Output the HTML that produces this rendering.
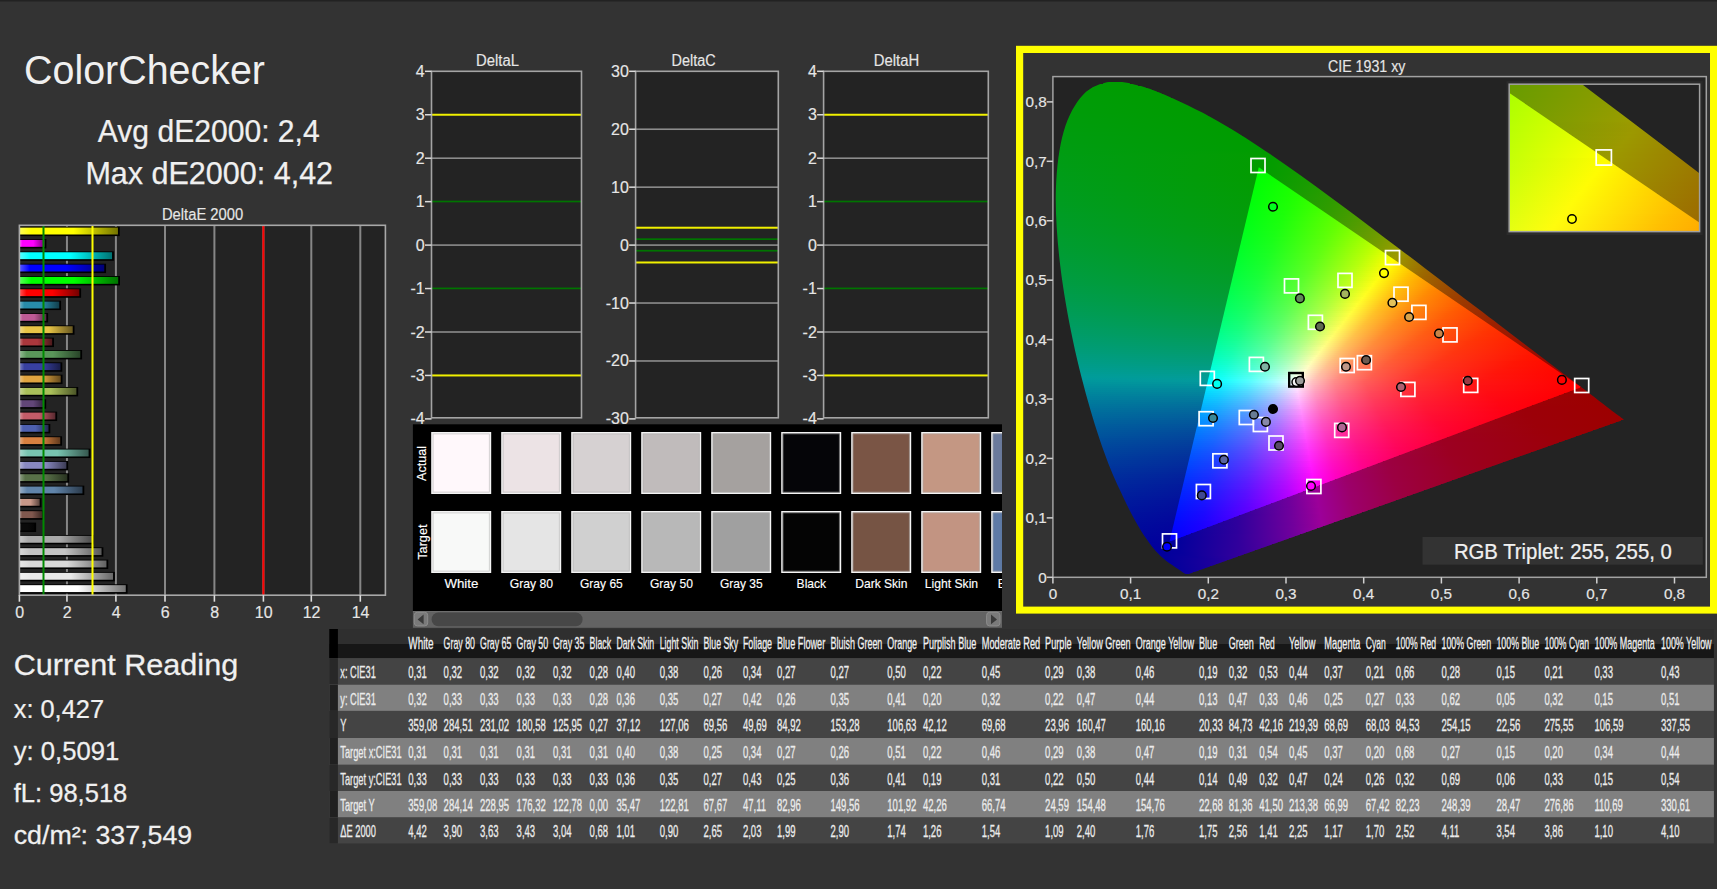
<!DOCTYPE html>
<html><head><meta charset="utf-8"><title>ColorChecker</title>
<style>
html,body{margin:0;padding:0;background:#333;overflow:hidden;width:1717px;height:889px}
svg{display:block;font-family:"Liberation Sans",sans-serif}
</style></head><body>
<svg width="1717" height="889" viewBox="0 0 1717 889">
<defs><linearGradient id="bg0" x1="0" y1="0" x2="1" y2="0"><stop offset="0" stop-color="#ffff59"/><stop offset="0.12" stop-color="#ffff00"/><stop offset="0.55" stop-color="#ffff00"/><stop offset="1" stop-color="#737300"/></linearGradient><linearGradient id="bg1" x1="0" y1="0" x2="1" y2="0"><stop offset="0" stop-color="#ff59ff"/><stop offset="0.12" stop-color="#ff00ff"/><stop offset="0.55" stop-color="#ff00ff"/><stop offset="1" stop-color="#730073"/></linearGradient><linearGradient id="bg2" x1="0" y1="0" x2="1" y2="0"><stop offset="0" stop-color="#59ffff"/><stop offset="0.12" stop-color="#00ffff"/><stop offset="0.55" stop-color="#00ffff"/><stop offset="1" stop-color="#007373"/></linearGradient><linearGradient id="bg3" x1="0" y1="0" x2="1" y2="0"><stop offset="0" stop-color="#5959ff"/><stop offset="0.12" stop-color="#0000ff"/><stop offset="0.55" stop-color="#0000ff"/><stop offset="1" stop-color="#000073"/></linearGradient><linearGradient id="bg4" x1="0" y1="0" x2="1" y2="0"><stop offset="0" stop-color="#59ff59"/><stop offset="0.12" stop-color="#00ff00"/><stop offset="0.55" stop-color="#00ff00"/><stop offset="1" stop-color="#007300"/></linearGradient><linearGradient id="bg5" x1="0" y1="0" x2="1" y2="0"><stop offset="0" stop-color="#ff5959"/><stop offset="0.12" stop-color="#ff0000"/><stop offset="0.55" stop-color="#ff0000"/><stop offset="1" stop-color="#730000"/></linearGradient><linearGradient id="bg6" x1="0" y1="0" x2="1" y2="0"><stop offset="0" stop-color="#73b4c8"/><stop offset="0.12" stop-color="#288caa"/><stop offset="0.55" stop-color="#288caa"/><stop offset="1" stop-color="#123f4c"/></linearGradient><linearGradient id="bg7" x1="0" y1="0" x2="1" y2="0"><stop offset="0" stop-color="#d594bb"/><stop offset="0.12" stop-color="#be5a96"/><stop offset="0.55" stop-color="#be5a96"/><stop offset="1" stop-color="#562844"/></linearGradient><linearGradient id="bg8" x1="0" y1="0" x2="1" y2="0"><stop offset="0" stop-color="#f0d987"/><stop offset="0.12" stop-color="#e8c446"/><stop offset="0.55" stop-color="#e8c446"/><stop offset="1" stop-color="#685820"/></linearGradient><linearGradient id="bg9" x1="0" y1="0" x2="1" y2="0"><stop offset="0" stop-color="#c87d80"/><stop offset="0.12" stop-color="#aa373c"/><stop offset="0.55" stop-color="#aa373c"/><stop offset="1" stop-color="#4c191b"/></linearGradient><linearGradient id="bg10" x1="0" y1="0" x2="1" y2="0"><stop offset="0" stop-color="#94bb94"/><stop offset="0.12" stop-color="#5a965a"/><stop offset="0.55" stop-color="#5a965a"/><stop offset="1" stop-color="#284428"/></linearGradient><linearGradient id="bg11" x1="0" y1="0" x2="1" y2="0"><stop offset="0" stop-color="#7e83c1"/><stop offset="0.12" stop-color="#3840a0"/><stop offset="0.55" stop-color="#3840a0"/><stop offset="1" stop-color="#191d48"/></linearGradient><linearGradient id="bg12" x1="0" y1="0" x2="1" y2="0"><stop offset="0" stop-color="#ebc483"/><stop offset="0.12" stop-color="#e0a440"/><stop offset="0.55" stop-color="#e0a440"/><stop offset="1" stop-color="#654a1d"/></linearGradient><linearGradient id="bg13" x1="0" y1="0" x2="1" y2="0"><stop offset="0" stop-color="#c8d694"/><stop offset="0.12" stop-color="#aac05a"/><stop offset="0.55" stop-color="#aac05a"/><stop offset="1" stop-color="#4c5628"/></linearGradient><linearGradient id="bg14" x1="0" y1="0" x2="1" y2="0"><stop offset="0" stop-color="#9987a7"/><stop offset="0.12" stop-color="#624678"/><stop offset="0.55" stop-color="#624678"/><stop offset="1" stop-color="#2c2036"/></linearGradient><linearGradient id="bg15" x1="0" y1="0" x2="1" y2="0"><stop offset="0" stop-color="#d9959d"/><stop offset="0.12" stop-color="#c45c68"/><stop offset="0.55" stop-color="#c45c68"/><stop offset="1" stop-color="#58292f"/></linearGradient><linearGradient id="bg16" x1="0" y1="0" x2="1" y2="0"><stop offset="0" stop-color="#8c98cc"/><stop offset="0.12" stop-color="#4e60b0"/><stop offset="0.55" stop-color="#4e60b0"/><stop offset="1" stop-color="#232b4f"/></linearGradient><linearGradient id="bg17" x1="0" y1="0" x2="1" y2="0"><stop offset="0" stop-color="#e6ac83"/><stop offset="0.12" stop-color="#d88040"/><stop offset="0.55" stop-color="#d88040"/><stop offset="1" stop-color="#613a1d"/></linearGradient><linearGradient id="bg18" x1="0" y1="0" x2="1" y2="0"><stop offset="0" stop-color="#a7d9cc"/><stop offset="0.12" stop-color="#78c4b0"/><stop offset="0.55" stop-color="#78c4b0"/><stop offset="1" stop-color="#36584f"/></linearGradient><linearGradient id="bg19" x1="0" y1="0" x2="1" y2="0"><stop offset="0" stop-color="#b2b2d6"/><stop offset="0.12" stop-color="#8888c0"/><stop offset="0.55" stop-color="#8888c0"/><stop offset="1" stop-color="#3d3d56"/></linearGradient><linearGradient id="bg20" x1="0" y1="0" x2="1" y2="0"><stop offset="0" stop-color="#92a288"/><stop offset="0.12" stop-color="#587048"/><stop offset="0.55" stop-color="#587048"/><stop offset="1" stop-color="#283220"/></linearGradient><linearGradient id="bg21" x1="0" y1="0" x2="1" y2="0"><stop offset="0" stop-color="#98afc8"/><stop offset="0.12" stop-color="#6084aa"/><stop offset="0.55" stop-color="#6084aa"/><stop offset="1" stop-color="#2b3b4c"/></linearGradient><linearGradient id="bg22" x1="0" y1="0" x2="1" y2="0"><stop offset="0" stop-color="#dbbcb2"/><stop offset="0.12" stop-color="#c89888"/><stop offset="0.55" stop-color="#c89888"/><stop offset="1" stop-color="#5a443d"/></linearGradient><linearGradient id="bg23" x1="0" y1="0" x2="1" y2="0"><stop offset="0" stop-color="#ac928c"/><stop offset="0.12" stop-color="#80584e"/><stop offset="0.55" stop-color="#80584e"/><stop offset="1" stop-color="#3a2823"/></linearGradient><linearGradient id="bg24" x1="0" y1="0" x2="1" y2="0"><stop offset="0" stop-color="#606060"/><stop offset="0.12" stop-color="#0a0a0a"/><stop offset="0.55" stop-color="#0a0a0a"/><stop offset="1" stop-color="#040404"/></linearGradient><linearGradient id="bg25" x1="0" y1="0" x2="1" y2="0"><stop offset="0" stop-color="#c8c8c8"/><stop offset="0.12" stop-color="#aaaaaa"/><stop offset="0.55" stop-color="#aaaaaa"/><stop offset="1" stop-color="#4c4c4c"/></linearGradient><linearGradient id="bg26" x1="0" y1="0" x2="1" y2="0"><stop offset="0" stop-color="#d9d9d9"/><stop offset="0.12" stop-color="#c4c4c4"/><stop offset="0.55" stop-color="#c4c4c4"/><stop offset="1" stop-color="#585858"/></linearGradient><linearGradient id="bg27" x1="0" y1="0" x2="1" y2="0"><stop offset="0" stop-color="#e6e6e6"/><stop offset="0.12" stop-color="#d8d8d8"/><stop offset="0.55" stop-color="#d8d8d8"/><stop offset="1" stop-color="#616161"/></linearGradient><linearGradient id="bg28" x1="0" y1="0" x2="1" y2="0"><stop offset="0" stop-color="#f0f0f0"/><stop offset="0.12" stop-color="#e8e8e8"/><stop offset="0.55" stop-color="#e8e8e8"/><stop offset="1" stop-color="#686868"/></linearGradient><linearGradient id="bg29" x1="0" y1="0" x2="1" y2="0"><stop offset="0" stop-color="#ffffff"/><stop offset="0.12" stop-color="#ffffff"/><stop offset="0.55" stop-color="#ffffff"/><stop offset="1" stop-color="#737373"/></linearGradient><clipPath id="locclip"><path d="M1188.18 574.33C1188.03 574.35 1187.67 574.46 1187.32 574.45C1186.97 574.44 1186.43 574.37 1186.08 574.27C1185.73 574.17 1185.55 574.03 1185.22 573.85C1184.90 573.68 1184.58 573.48 1184.14 573.20C1183.70 572.92 1183.16 572.59 1182.58 572.19C1182.00 571.79 1181.39 571.34 1180.64 570.82C1179.89 570.31 1179.08 569.77 1178.07 569.10C1177.06 568.43 1175.89 567.66 1174.58 566.78C1173.27 565.90 1171.86 565.00 1170.23 563.81C1168.60 562.62 1166.80 561.35 1164.79 559.65C1162.78 557.95 1160.76 556.37 1158.18 553.59C1155.61 550.81 1152.68 547.60 1149.33 542.95C1145.97 538.31 1142.31 533.14 1138.06 525.72C1133.81 518.30 1129.14 509.72 1123.84 498.44C1118.54 487.16 1112.22 474.11 1106.28 458.03C1100.34 441.96 1094.03 422.99 1088.18 402.00C1082.32 381.00 1075.98 356.16 1071.16 332.05C1066.34 307.95 1061.81 281.33 1059.27 257.36C1056.73 233.38 1055.19 209.16 1055.93 188.19C1056.67 167.21 1059.17 147.06 1063.70 131.49C1068.23 115.92 1075.30 103.05 1083.13 94.77C1090.95 86.49 1100.88 83.22 1110.63 81.81C1120.38 80.41 1131.22 83.57 1141.63 86.33C1152.05 89.09 1162.91 93.98 1173.10 98.39C1183.29 102.81 1193.08 107.72 1202.78 112.83C1212.48 117.94 1221.86 123.38 1231.30 129.06C1240.74 134.73 1250.10 140.74 1259.43 146.88C1268.75 153.03 1277.98 159.42 1287.24 165.90C1296.50 172.38 1305.72 179.03 1314.98 185.75C1324.24 192.46 1333.55 199.33 1342.80 206.19C1352.05 213.05 1361.27 220.02 1370.46 226.93C1379.65 233.84 1388.89 240.80 1397.97 247.67C1407.04 254.54 1416.07 261.43 1424.93 268.17C1433.79 274.92 1442.57 281.62 1451.11 288.14C1459.66 294.65 1468.09 301.09 1476.21 307.27C1484.33 313.45 1492.31 319.48 1499.83 325.22C1507.35 330.95 1514.65 336.56 1521.35 341.68C1528.06 346.80 1534.21 351.48 1540.08 355.94C1545.95 360.41 1551.53 364.67 1556.55 368.48C1561.58 372.29 1566.10 375.68 1570.23 378.82C1574.36 381.96 1578.01 384.77 1581.34 387.32C1584.67 389.86 1587.54 392.07 1590.20 394.09C1592.85 396.11 1595.14 397.83 1597.27 399.44C1599.39 401.06 1601.20 402.45 1602.94 403.78C1604.67 405.11 1606.24 406.30 1607.68 407.40C1609.12 408.50 1610.40 409.49 1611.56 410.38C1612.73 411.26 1613.76 412.01 1614.67 412.69C1615.58 413.38 1616.32 413.95 1617.00 414.48C1617.69 415.00 1618.27 415.45 1618.79 415.84C1619.31 416.24 1619.75 416.58 1620.11 416.85C1620.47 417.13 1620.71 417.31 1620.96 417.51C1621.22 417.70 1621.20 417.68 1621.66 418.04C1622.13 418.40 1623.41 419.38 1623.76 419.65Z"/></clipPath><clipPath id="triclip"><path d="M1581.26 387.14 L1258.81 167.27 L1169.45 541.64 Z"/></clipPath><linearGradient id="o0" gradientUnits="userSpaceOnUse" x1="1103.0" y1="0" x2="1130.0" y2="0"><stop offset="0.0000" stop-color="#009c02"/><stop offset="1.0000" stop-color="#009c00"/></linearGradient><linearGradient id="o1" gradientUnits="userSpaceOnUse" x1="1096.0" y1="0" x2="1138.0" y2="0"><stop offset="0.0000" stop-color="#009c03"/><stop offset="1.0000" stop-color="#009c00"/></linearGradient><linearGradient id="o2" gradientUnits="userSpaceOnUse" x1="1092.0" y1="0" x2="1146.0" y2="0"><stop offset="0.0000" stop-color="#009c03"/><stop offset="1.0000" stop-color="#009c00"/></linearGradient><linearGradient id="o3" gradientUnits="userSpaceOnUse" x1="1089.0" y1="0" x2="1152.0" y2="0"><stop offset="0.0000" stop-color="#009c04"/><stop offset="1.0000" stop-color="#009c00"/></linearGradient><linearGradient id="o4" gradientUnits="userSpaceOnUse" x1="1086.0" y1="0" x2="1157.0" y2="0"><stop offset="0.0000" stop-color="#009c04"/><stop offset="1.0000" stop-color="#009c00"/></linearGradient><linearGradient id="o5" gradientUnits="userSpaceOnUse" x1="1083.0" y1="0" x2="1162.0" y2="0"><stop offset="0.0000" stop-color="#009c05"/><stop offset="1.0000" stop-color="#009c00"/></linearGradient><linearGradient id="o6" gradientUnits="userSpaceOnUse" x1="1081.0" y1="0" x2="1167.0" y2="0"><stop offset="0.0000" stop-color="#009c05"/><stop offset="1.0000" stop-color="#009c00"/></linearGradient><linearGradient id="o7" gradientUnits="userSpaceOnUse" x1="1080.0" y1="0" x2="1171.0" y2="0"><stop offset="0.0000" stop-color="#009c06"/><stop offset="1.0000" stop-color="#009c00"/></linearGradient><linearGradient id="o8" gradientUnits="userSpaceOnUse" x1="1078.0" y1="0" x2="1176.0" y2="0"><stop offset="0.0000" stop-color="#009c06"/><stop offset="1.0000" stop-color="#009c00"/></linearGradient><linearGradient id="o9" gradientUnits="userSpaceOnUse" x1="1077.0" y1="0" x2="1180.0" y2="0"><stop offset="0.0000" stop-color="#009c07"/><stop offset="1.0000" stop-color="#009c00"/></linearGradient><linearGradient id="o10" gradientUnits="userSpaceOnUse" x1="1075.0" y1="0" x2="1185.0" y2="0"><stop offset="0.0000" stop-color="#009c07"/><stop offset="1.0000" stop-color="#009c00"/></linearGradient><linearGradient id="o11" gradientUnits="userSpaceOnUse" x1="1074.0" y1="0" x2="1189.0" y2="0"><stop offset="0.0000" stop-color="#009c08"/><stop offset="1.0000" stop-color="#009c00"/></linearGradient><linearGradient id="o12" gradientUnits="userSpaceOnUse" x1="1073.0" y1="0" x2="1193.0" y2="0"><stop offset="0.0000" stop-color="#009c08"/><stop offset="1.0000" stop-color="#009c00"/></linearGradient><linearGradient id="o13" gradientUnits="userSpaceOnUse" x1="1071.0" y1="0" x2="1197.0" y2="0"><stop offset="0.0000" stop-color="#009c08"/><stop offset="1.0000" stop-color="#009c00"/></linearGradient><linearGradient id="o14" gradientUnits="userSpaceOnUse" x1="1070.0" y1="0" x2="1201.0" y2="0"><stop offset="0.0000" stop-color="#009c09"/><stop offset="1.0000" stop-color="#009c00"/></linearGradient><linearGradient id="o15" gradientUnits="userSpaceOnUse" x1="1069.0" y1="0" x2="1205.0" y2="0"><stop offset="0.0000" stop-color="#009c09"/><stop offset="1.0000" stop-color="#009c00"/></linearGradient><linearGradient id="o16" gradientUnits="userSpaceOnUse" x1="1068.0" y1="0" x2="1208.0" y2="0"><stop offset="0.0000" stop-color="#009c0a"/><stop offset="1.0000" stop-color="#009c00"/></linearGradient><linearGradient id="o17" gradientUnits="userSpaceOnUse" x1="1067.0" y1="0" x2="1212.0" y2="0"><stop offset="0.0000" stop-color="#009c0a"/><stop offset="1.0000" stop-color="#009c00"/></linearGradient><linearGradient id="o18" gradientUnits="userSpaceOnUse" x1="1067.0" y1="0" x2="1216.0" y2="0"><stop offset="0.0000" stop-color="#009c0b"/><stop offset="1.0000" stop-color="#009c00"/></linearGradient><linearGradient id="o19" gradientUnits="userSpaceOnUse" x1="1066.0" y1="0" x2="1219.0" y2="0"><stop offset="0.0000" stop-color="#009c0b"/><stop offset="1.0000" stop-color="#009c00"/></linearGradient><linearGradient id="o20" gradientUnits="userSpaceOnUse" x1="1065.0" y1="0" x2="1223.0" y2="0"><stop offset="0.0000" stop-color="#009c0b"/><stop offset="1.0000" stop-color="#009c00"/></linearGradient><linearGradient id="o21" gradientUnits="userSpaceOnUse" x1="1064.0" y1="0" x2="1226.0" y2="0"><stop offset="0.0000" stop-color="#009c0c"/><stop offset="1.0000" stop-color="#009c00"/></linearGradient><linearGradient id="o22" gradientUnits="userSpaceOnUse" x1="1064.0" y1="0" x2="1229.0" y2="0"><stop offset="0.0000" stop-color="#009c0c"/><stop offset="1.0000" stop-color="#009c00"/></linearGradient><linearGradient id="o23" gradientUnits="userSpaceOnUse" x1="1063.0" y1="0" x2="1233.0" y2="0"><stop offset="0.0000" stop-color="#009c0d"/><stop offset="1.0000" stop-color="#009c00"/></linearGradient><linearGradient id="o24" gradientUnits="userSpaceOnUse" x1="1062.0" y1="0" x2="1236.0" y2="0"><stop offset="0.0000" stop-color="#009c0d"/><stop offset="1.0000" stop-color="#009c00"/></linearGradient><linearGradient id="o25" gradientUnits="userSpaceOnUse" x1="1062.0" y1="0" x2="1239.0" y2="0"><stop offset="0.0000" stop-color="#009c0e"/><stop offset="1.0000" stop-color="#009c00"/></linearGradient><linearGradient id="o26" gradientUnits="userSpaceOnUse" x1="1061.0" y1="0" x2="1242.0" y2="0"><stop offset="0.0000" stop-color="#009c0e"/><stop offset="1.0000" stop-color="#009c00"/></linearGradient><linearGradient id="o27" gradientUnits="userSpaceOnUse" x1="1061.0" y1="0" x2="1246.0" y2="0"><stop offset="0.0000" stop-color="#009c0f"/><stop offset="1.0000" stop-color="#009c00"/></linearGradient><linearGradient id="o28" gradientUnits="userSpaceOnUse" x1="1060.0" y1="0" x2="1249.0" y2="0"><stop offset="0.0000" stop-color="#009c0f"/><stop offset="1.0000" stop-color="#009c00"/></linearGradient><linearGradient id="o29" gradientUnits="userSpaceOnUse" x1="1060.0" y1="0" x2="1252.0" y2="0"><stop offset="0.0000" stop-color="#009c10"/><stop offset="1.0000" stop-color="#009c00"/></linearGradient><linearGradient id="o30" gradientUnits="userSpaceOnUse" x1="1059.0" y1="0" x2="1255.0" y2="0"><stop offset="0.0000" stop-color="#009c10"/><stop offset="1.0000" stop-color="#009c00"/></linearGradient><linearGradient id="o31" gradientUnits="userSpaceOnUse" x1="1059.0" y1="0" x2="1258.0" y2="0"><stop offset="0.0000" stop-color="#009c11"/><stop offset="1.0000" stop-color="#009c00"/></linearGradient><linearGradient id="o32" gradientUnits="userSpaceOnUse" x1="1059.0" y1="0" x2="1261.0" y2="0"><stop offset="0.0000" stop-color="#009c11"/><stop offset="1.0000" stop-color="#009c00"/></linearGradient><linearGradient id="o33" gradientUnits="userSpaceOnUse" x1="1058.0" y1="0" x2="1264.0" y2="0"><stop offset="0.0000" stop-color="#009c12"/><stop offset="1.0000" stop-color="#009c00"/></linearGradient><linearGradient id="o34" gradientUnits="userSpaceOnUse" x1="1058.0" y1="0" x2="1267.0" y2="0"><stop offset="0.0000" stop-color="#009c12"/><stop offset="1.0000" stop-color="#019c00"/></linearGradient><linearGradient id="o35" gradientUnits="userSpaceOnUse" x1="1058.0" y1="0" x2="1270.0" y2="0"><stop offset="0.0000" stop-color="#009c12"/><stop offset="1.0000" stop-color="#029c00"/></linearGradient><linearGradient id="o36" gradientUnits="userSpaceOnUse" x1="1057.0" y1="0" x2="1273.0" y2="0"><stop offset="0.0000" stop-color="#009c13"/><stop offset="0.9931" stop-color="#039c00"/><stop offset="1.0000" stop-color="#039c00"/></linearGradient><linearGradient id="o37" gradientUnits="userSpaceOnUse" x1="1057.0" y1="0" x2="1276.0" y2="0"><stop offset="0.0000" stop-color="#009c14"/><stop offset="0.9795" stop-color="#039c00"/><stop offset="1.0000" stop-color="#059c00"/></linearGradient><linearGradient id="o38" gradientUnits="userSpaceOnUse" x1="1057.0" y1="0" x2="1279.0" y2="0"><stop offset="0.0000" stop-color="#009c14"/><stop offset="0.9617" stop-color="#039c00"/><stop offset="1.0000" stop-color="#069c00"/></linearGradient><linearGradient id="o39" gradientUnits="userSpaceOnUse" x1="1056.0" y1="0" x2="1282.0" y2="0"><stop offset="0.0000" stop-color="#009c15"/><stop offset="0.9491" stop-color="#039c00"/><stop offset="1.0000" stop-color="#089c00"/></linearGradient><linearGradient id="o40" gradientUnits="userSpaceOnUse" x1="1056.0" y1="0" x2="1285.0" y2="0"><stop offset="0.0000" stop-color="#009c15"/><stop offset="0.9323" stop-color="#039c00"/><stop offset="1.0000" stop-color="#099c00"/></linearGradient><linearGradient id="o41" gradientUnits="userSpaceOnUse" x1="1056.0" y1="0" x2="1287.0" y2="0"><stop offset="0.0000" stop-color="#009c16"/><stop offset="0.9242" stop-color="#039c00"/><stop offset="1.0000" stop-color="#0b9c00"/></linearGradient><linearGradient id="o42" gradientUnits="userSpaceOnUse" x1="1056.0" y1="0" x2="1290.0" y2="0"><stop offset="0.0000" stop-color="#009c16"/><stop offset="0.9081" stop-color="#039c00"/><stop offset="1.0000" stop-color="#0c9c00"/></linearGradient><linearGradient id="o43" gradientUnits="userSpaceOnUse" x1="1056.0" y1="0" x2="1293.0" y2="0"><stop offset="0.0000" stop-color="#009c17"/><stop offset="0.8966" stop-color="#039c00"/><stop offset="1.0000" stop-color="#0e9c00"/></linearGradient><linearGradient id="o44" gradientUnits="userSpaceOnUse" x1="1055.0" y1="0" x2="1296.0" y2="0"><stop offset="0.0000" stop-color="#009c17"/><stop offset="0.8817" stop-color="#039c00"/><stop offset="1.0000" stop-color="#109c00"/></linearGradient><linearGradient id="o45" gradientUnits="userSpaceOnUse" x1="1055.0" y1="0" x2="1299.0" y2="0"><stop offset="0.0000" stop-color="#009c18"/><stop offset="0.8709" stop-color="#039c00"/><stop offset="1.0000" stop-color="#129c00"/></linearGradient><linearGradient id="o46" gradientUnits="userSpaceOnUse" x1="1055.0" y1="0" x2="1302.0" y2="0"><stop offset="0.0000" stop-color="#009c18"/><stop offset="0.8563" stop-color="#039c00"/><stop offset="1.0000" stop-color="#149c00"/></linearGradient><linearGradient id="o47" gradientUnits="userSpaceOnUse" x1="1055.0" y1="0" x2="1304.0" y2="0"><stop offset="0.0000" stop-color="#009c19"/><stop offset="0.8454" stop-color="#039c01"/><stop offset="1.0000" stop-color="#169c00"/></linearGradient><linearGradient id="o48" gradientUnits="userSpaceOnUse" x1="1055.0" y1="0" x2="1307.0" y2="0"><stop offset="0.0000" stop-color="#009c19"/><stop offset="0.8353" stop-color="#039c01"/><stop offset="1.0000" stop-color="#189c00"/></linearGradient><linearGradient id="o49" gradientUnits="userSpaceOnUse" x1="1055.0" y1="0" x2="1310.0" y2="0"><stop offset="0.0000" stop-color="#009c1a"/><stop offset="0.8216" stop-color="#039c01"/><stop offset="1.0000" stop-color="#1a9c00"/></linearGradient><linearGradient id="o50" gradientUnits="userSpaceOnUse" x1="1055.0" y1="0" x2="1313.0" y2="0"><stop offset="0.0000" stop-color="#009c1b"/><stop offset="0.8120" stop-color="#039c02"/><stop offset="1.0000" stop-color="#1c9c00"/></linearGradient><linearGradient id="o51" gradientUnits="userSpaceOnUse" x1="1055.0" y1="0" x2="1315.0" y2="0"><stop offset="0.0000" stop-color="#009c1b"/><stop offset="0.8019" stop-color="#039c02"/><stop offset="1.0000" stop-color="#1e9c00"/></linearGradient><linearGradient id="o52" gradientUnits="userSpaceOnUse" x1="1054.0" y1="0" x2="1318.0" y2="0"><stop offset="0.0000" stop-color="#009c1c"/><stop offset="0.7936" stop-color="#039c02"/><stop offset="1.0000" stop-color="#219c00"/></linearGradient><linearGradient id="o53" gradientUnits="userSpaceOnUse" x1="1054.0" y1="0" x2="1321.0" y2="0"><stop offset="0.0000" stop-color="#009c1c"/><stop offset="0.7809" stop-color="#039c03"/><stop offset="1.0000" stop-color="#239c00"/></linearGradient><linearGradient id="o54" gradientUnits="userSpaceOnUse" x1="1054.0" y1="0" x2="1324.0" y2="0"><stop offset="0.0000" stop-color="#009c1d"/><stop offset="0.7722" stop-color="#039c03"/><stop offset="1.0000" stop-color="#269c00"/></linearGradient><linearGradient id="o55" gradientUnits="userSpaceOnUse" x1="1054.0" y1="0" x2="1326.0" y2="0"><stop offset="0.0000" stop-color="#009c1e"/><stop offset="0.7629" stop-color="#039c04"/><stop offset="1.0000" stop-color="#289c00"/></linearGradient><linearGradient id="o56" gradientUnits="userSpaceOnUse" x1="1054.0" y1="0" x2="1329.0" y2="0"><stop offset="0.0000" stop-color="#009c1e"/><stop offset="0.7545" stop-color="#039c04"/><stop offset="1.0000" stop-color="#2b9c00"/></linearGradient><linearGradient id="o57" gradientUnits="userSpaceOnUse" x1="1054.0" y1="0" x2="1332.0" y2="0"><stop offset="0.0000" stop-color="#009c1f"/><stop offset="0.7428" stop-color="#039c05"/><stop offset="1.0000" stop-color="#2e9c00"/></linearGradient><linearGradient id="o58" gradientUnits="userSpaceOnUse" x1="1054.0" y1="0" x2="1335.0" y2="0"><stop offset="0.0000" stop-color="#009c1f"/><stop offset="0.7349" stop-color="#039c05"/><stop offset="0.9875" stop-color="#2e9c00"/><stop offset="1.0000" stop-color="#319c00"/></linearGradient><linearGradient id="o59" gradientUnits="userSpaceOnUse" x1="1054.0" y1="0" x2="1337.0" y2="0"><stop offset="0.0000" stop-color="#009c20"/><stop offset="0.7261" stop-color="#039c06"/><stop offset="0.9735" stop-color="#2d9c00"/><stop offset="1.0000" stop-color="#339c00"/></linearGradient><linearGradient id="o60" gradientUnits="userSpaceOnUse" x1="1054.0" y1="0" x2="1340.0" y2="0"><stop offset="0.0000" stop-color="#009c21"/><stop offset="0.7185" stop-color="#039c06"/><stop offset="0.9633" stop-color="#2e9c00"/><stop offset="1.0000" stop-color="#369c00"/></linearGradient><linearGradient id="o61" gradientUnits="userSpaceOnUse" x1="1054.0" y1="0" x2="1343.0" y2="0"><stop offset="0.0000" stop-color="#009c21"/><stop offset="0.7076" stop-color="#039c07"/><stop offset="0.9498" stop-color="#2e9c00"/><stop offset="1.0000" stop-color="#3a9c00"/></linearGradient><linearGradient id="o62" gradientUnits="userSpaceOnUse" x1="1054.0" y1="0" x2="1345.0" y2="0"><stop offset="0.0000" stop-color="#009c22"/><stop offset="0.7027" stop-color="#039c07"/><stop offset="0.9399" stop-color="#2e9c00"/><stop offset="1.0000" stop-color="#3c9c00"/></linearGradient><linearGradient id="o63" gradientUnits="userSpaceOnUse" x1="1054.0" y1="0" x2="1348.0" y2="0"><stop offset="0.0000" stop-color="#009c23"/><stop offset="0.6922" stop-color="#039c08"/><stop offset="0.9269" stop-color="#2e9c00"/><stop offset="1.0000" stop-color="#409c00"/></linearGradient><linearGradient id="o64" gradientUnits="userSpaceOnUse" x1="1054.0" y1="0" x2="1351.0" y2="0"><stop offset="0.0000" stop-color="#009c23"/><stop offset="0.6818" stop-color="#039c09"/><stop offset="0.9108" stop-color="#2d9c00"/><stop offset="1.0000" stop-color="#439c00"/></linearGradient><linearGradient id="o65" gradientUnits="userSpaceOnUse" x1="1055.0" y1="0" x2="1353.0" y2="0"><stop offset="0.0000" stop-color="#009c24"/><stop offset="0.6762" stop-color="#039c09"/><stop offset="0.9044" stop-color="#2e9c00"/><stop offset="1.0000" stop-color="#469c00"/></linearGradient><linearGradient id="o66" gradientUnits="userSpaceOnUse" x1="1055.0" y1="0" x2="1356.0" y2="0"><stop offset="0.0000" stop-color="#009c25"/><stop offset="0.6661" stop-color="#039c0a"/><stop offset="0.8887" stop-color="#2d9c01"/><stop offset="1.0000" stop-color="#4a9c00"/></linearGradient><linearGradient id="o67" gradientUnits="userSpaceOnUse" x1="1055.0" y1="0" x2="1359.0" y2="0"><stop offset="0.0000" stop-color="#009c25"/><stop offset="0.6595" stop-color="#039c0a"/><stop offset="0.8799" stop-color="#2e9c01"/><stop offset="1.0000" stop-color="#4e9c00"/></linearGradient><linearGradient id="o68" gradientUnits="userSpaceOnUse" x1="1055.0" y1="0" x2="1361.0" y2="0"><stop offset="0.0000" stop-color="#009c26"/><stop offset="0.6520" stop-color="#039c0b"/><stop offset="0.8709" stop-color="#2e9c01"/><stop offset="1.0000" stop-color="#519c00"/></linearGradient><linearGradient id="o69" gradientUnits="userSpaceOnUse" x1="1055.0" y1="0" x2="1364.0" y2="0"><stop offset="0.0000" stop-color="#009c27"/><stop offset="0.6456" stop-color="#039c0c"/><stop offset="0.8592" stop-color="#2e9c02"/><stop offset="1.0000" stop-color="#559c00"/></linearGradient><linearGradient id="o70" gradientUnits="userSpaceOnUse" x1="1055.0" y1="0" x2="1367.0" y2="0"><stop offset="0.0000" stop-color="#009c28"/><stop offset="0.6362" stop-color="#039c0d"/><stop offset="0.8478" stop-color="#2e9c03"/><stop offset="1.0000" stop-color="#5a9c00"/></linearGradient><linearGradient id="o71" gradientUnits="userSpaceOnUse" x1="1055.0" y1="0" x2="1369.0" y2="0"><stop offset="0.0000" stop-color="#009c28"/><stop offset="0.6322" stop-color="#039c0d"/><stop offset="0.8424" stop-color="#2e9c03"/><stop offset="1.0000" stop-color="#5d9c00"/></linearGradient><linearGradient id="o72" gradientUnits="userSpaceOnUse" x1="1055.0" y1="0" x2="1372.0" y2="0"><stop offset="0.0000" stop-color="#009c29"/><stop offset="0.6230" stop-color="#039c0e"/><stop offset="0.8281" stop-color="#2d9c04"/><stop offset="1.0000" stop-color="#629c00"/></linearGradient><linearGradient id="o73" gradientUnits="userSpaceOnUse" x1="1055.0" y1="0" x2="1375.0" y2="0"><stop offset="0.0000" stop-color="#009c2a"/><stop offset="0.6172" stop-color="#039c0f"/><stop offset="0.8203" stop-color="#2e9c04"/><stop offset="1.0000" stop-color="#679c00"/></linearGradient><linearGradient id="o74" gradientUnits="userSpaceOnUse" x1="1055.0" y1="0" x2="1377.0" y2="0"><stop offset="0.0000" stop-color="#009c2b"/><stop offset="0.6102" stop-color="#039c0f"/><stop offset="0.8090" stop-color="#2d9c05"/><stop offset="1.0000" stop-color="#6b9c00"/></linearGradient><linearGradient id="o75" gradientUnits="userSpaceOnUse" x1="1056.0" y1="0" x2="1380.0" y2="0"><stop offset="0.0000" stop-color="#009c2b"/><stop offset="0.6034" stop-color="#039c10"/><stop offset="0.8009" stop-color="#2e9c06"/><stop offset="1.0000" stop-color="#709c00"/></linearGradient><linearGradient id="o76" gradientUnits="userSpaceOnUse" x1="1056.0" y1="0" x2="1383.0" y2="0"><stop offset="0.0000" stop-color="#009c2c"/><stop offset="0.5948" stop-color="#039c11"/><stop offset="0.7875" stop-color="#2d9c07"/><stop offset="0.9893" stop-color="#719c00"/><stop offset="1.0000" stop-color="#759c00"/></linearGradient><linearGradient id="o77" gradientUnits="userSpaceOnUse" x1="1056.0" y1="0" x2="1385.0" y2="0"><stop offset="0.0000" stop-color="#009c2d"/><stop offset="0.5912" stop-color="#039c12"/><stop offset="0.7827" stop-color="#2e9c07"/><stop offset="0.9802" stop-color="#719c00"/><stop offset="1.0000" stop-color="#799c00"/></linearGradient><linearGradient id="o78" gradientUnits="userSpaceOnUse" x1="1056.0" y1="0" x2="1388.0" y2="0"><stop offset="0.0000" stop-color="#009c2e"/><stop offset="0.5828" stop-color="#039c13"/><stop offset="0.7726" stop-color="#2e9c08"/><stop offset="0.9684" stop-color="#729c00"/><stop offset="1.0000" stop-color="#7f9c00"/></linearGradient><linearGradient id="o79" gradientUnits="userSpaceOnUse" x1="1056.0" y1="0" x2="1391.0" y2="0"><stop offset="0.0000" stop-color="#009c2f"/><stop offset="0.5746" stop-color="#039c13"/><stop offset="0.7597" stop-color="#2d9c09"/><stop offset="0.9507" stop-color="#709c00"/><stop offset="1.0000" stop-color="#859c00"/></linearGradient><linearGradient id="o80" gradientUnits="userSpaceOnUse" x1="1056.0" y1="0" x2="1393.0" y2="0"><stop offset="0.0000" stop-color="#009c30"/><stop offset="0.5712" stop-color="#039c14"/><stop offset="0.7552" stop-color="#2e9c0a"/><stop offset="0.9451" stop-color="#719c00"/><stop offset="1.0000" stop-color="#8a9c00"/></linearGradient><linearGradient id="o81" gradientUnits="userSpaceOnUse" x1="1057.0" y1="0" x2="1396.0" y2="0"><stop offset="0.0000" stop-color="#009c30"/><stop offset="0.5619" stop-color="#039c15"/><stop offset="0.7419" stop-color="#2d9c0b"/><stop offset="0.9277" stop-color="#6f9c00"/><stop offset="1.0000" stop-color="#909c00"/></linearGradient><linearGradient id="o82" gradientUnits="userSpaceOnUse" x1="1057.0" y1="0" x2="1399.0" y2="0"><stop offset="0.0000" stop-color="#009c31"/><stop offset="0.5570" stop-color="#039c16"/><stop offset="0.7354" stop-color="#2e9c0b"/><stop offset="0.9196" stop-color="#719c00"/><stop offset="1.0000" stop-color="#969c00"/></linearGradient><linearGradient id="o83" gradientUnits="userSpaceOnUse" x1="1057.0" y1="0" x2="1401.0" y2="0"><stop offset="0.0000" stop-color="#009c32"/><stop offset="0.5509" stop-color="#039c17"/><stop offset="0.7253" stop-color="#2d9c0c"/><stop offset="0.9084" stop-color="#709c01"/><stop offset="1.0000" stop-color="#9c9b00"/></linearGradient><linearGradient id="o84" gradientUnits="userSpaceOnUse" x1="1057.0" y1="0" x2="1404.0" y2="0"><stop offset="0.0000" stop-color="#009c33"/><stop offset="0.5461" stop-color="#039c18"/><stop offset="0.7190" stop-color="#2e9c0d"/><stop offset="0.8977" stop-color="#719c02"/><stop offset="0.9928" stop-color="#9c9800"/><stop offset="1.0000" stop-color="#9c9500"/></linearGradient><linearGradient id="o85" gradientUnits="userSpaceOnUse" x1="1057.0" y1="0" x2="1406.0" y2="0"><stop offset="0.0000" stop-color="#009c34"/><stop offset="0.5401" stop-color="#039c19"/><stop offset="0.7092" stop-color="#2d9c0e"/><stop offset="0.8868" stop-color="#709c03"/><stop offset="0.9814" stop-color="#9c9900"/><stop offset="1.0000" stop-color="#9c9000"/></linearGradient><linearGradient id="o86" gradientUnits="userSpaceOnUse" x1="1058.0" y1="0" x2="1409.0" y2="0"><stop offset="0.0000" stop-color="#009c35"/><stop offset="0.5342" stop-color="#039c1a"/><stop offset="0.7023" stop-color="#2e9c0f"/><stop offset="0.8761" stop-color="#709c03"/><stop offset="0.9672" stop-color="#9c9900"/><stop offset="1.0000" stop-color="#9c8a00"/></linearGradient><linearGradient id="o87" gradientUnits="userSpaceOnUse" x1="1058.0" y1="0" x2="1412.0" y2="0"><stop offset="0.0000" stop-color="#009c36"/><stop offset="0.5268" stop-color="#039c1b"/><stop offset="0.6935" stop-color="#2e9c10"/><stop offset="0.8658" stop-color="#719c04"/><stop offset="0.9562" stop-color="#9c9900"/><stop offset="1.0000" stop-color="#9c8400"/></linearGradient><linearGradient id="o88" gradientUnits="userSpaceOnUse" x1="1058.0" y1="0" x2="1414.0" y2="0"><stop offset="0.0000" stop-color="#009c37"/><stop offset="0.5239" stop-color="#039c1c"/><stop offset="0.6868" stop-color="#2d9c11"/><stop offset="0.8553" stop-color="#709c05"/><stop offset="0.9452" stop-color="#9c9900"/><stop offset="1.0000" stop-color="#9c7f00"/></linearGradient><linearGradient id="o89" gradientUnits="userSpaceOnUse" x1="1058.0" y1="0" x2="1417.0" y2="0"><stop offset="0.0000" stop-color="#009c38"/><stop offset="0.5167" stop-color="#039c1d"/><stop offset="0.6783" stop-color="#2d9c12"/><stop offset="0.8454" stop-color="#719c06"/><stop offset="0.9345" stop-color="#9c9800"/><stop offset="1.0000" stop-color="#9c7a00"/></linearGradient><linearGradient id="o90" gradientUnits="userSpaceOnUse" x1="1058.0" y1="0" x2="1420.0" y2="0"><stop offset="0.0000" stop-color="#009c39"/><stop offset="0.5124" stop-color="#039c1e"/><stop offset="0.6727" stop-color="#2e9c13"/><stop offset="0.8356" stop-color="#719c07"/><stop offset="0.9213" stop-color="#9c9901"/><stop offset="1.0000" stop-color="#9c7500"/></linearGradient><linearGradient id="o91" gradientUnits="userSpaceOnUse" x1="1059.0" y1="0" x2="1422.0" y2="0"><stop offset="0.0000" stop-color="#009c3a"/><stop offset="0.5055" stop-color="#039c1f"/><stop offset="0.6625" stop-color="#2d9c14"/><stop offset="0.8251" stop-color="#709c08"/><stop offset="0.9105" stop-color="#9c9a02"/><stop offset="1.0000" stop-color="#9c7100"/></linearGradient><linearGradient id="o92" gradientUnits="userSpaceOnUse" x1="1059.0" y1="0" x2="1425.0" y2="0"><stop offset="0.0000" stop-color="#009c3b"/><stop offset="0.5014" stop-color="#039c20"/><stop offset="0.6571" stop-color="#2e9c15"/><stop offset="0.8183" stop-color="#729c09"/><stop offset="0.9003" stop-color="#9c9903"/><stop offset="1.0000" stop-color="#9c6c00"/></linearGradient><linearGradient id="o93" gradientUnits="userSpaceOnUse" x1="1059.0" y1="0" x2="1428.0" y2="0"><stop offset="0.0000" stop-color="#009c3c"/><stop offset="0.4946" stop-color="#039c21"/><stop offset="0.6463" stop-color="#2d9c16"/><stop offset="0.8035" stop-color="#709c0a"/><stop offset="0.8875" stop-color="#9c9904"/><stop offset="0.9905" stop-color="#9c6b00"/><stop offset="1.0000" stop-color="#9c6800"/></linearGradient><linearGradient id="o94" gradientUnits="userSpaceOnUse" x1="1059.0" y1="0" x2="1430.0" y2="0"><stop offset="0.0000" stop-color="#009c3d"/><stop offset="0.4892" stop-color="#039c22"/><stop offset="0.6402" stop-color="#2d9c18"/><stop offset="0.7965" stop-color="#709c0b"/><stop offset="0.8801" stop-color="#9c9805"/><stop offset="0.9825" stop-color="#9c6a00"/><stop offset="1.0000" stop-color="#9c6400"/></linearGradient><linearGradient id="o95" gradientUnits="userSpaceOnUse" x1="1060.0" y1="0" x2="1433.0" y2="0"><stop offset="0.0000" stop-color="#009c3e"/><stop offset="0.4839" stop-color="#039c23"/><stop offset="0.6314" stop-color="#2d9c19"/><stop offset="0.7842" stop-color="#6f9c0d"/><stop offset="0.8673" stop-color="#9c9906"/><stop offset="0.9692" stop-color="#9c6a00"/><stop offset="1.0000" stop-color="#9c6000"/></linearGradient><linearGradient id="o96" gradientUnits="userSpaceOnUse" x1="1060.0" y1="0" x2="1435.0" y2="0"><stop offset="0.0000" stop-color="#009c3f"/><stop offset="0.4787" stop-color="#039c25"/><stop offset="0.6253" stop-color="#2d9c1a"/><stop offset="0.7773" stop-color="#709c0e"/><stop offset="0.8573" stop-color="#9c9a07"/><stop offset="0.9560" stop-color="#9c6b00"/><stop offset="1.0000" stop-color="#9c5d00"/></linearGradient><linearGradient id="o97" gradientUnits="userSpaceOnUse" x1="1060.0" y1="0" x2="1438.0" y2="0"><stop offset="0.0000" stop-color="#009c40"/><stop offset="0.4749" stop-color="#039c26"/><stop offset="0.6204" stop-color="#2e9c1b"/><stop offset="0.7685" stop-color="#709c0f"/><stop offset="0.8479" stop-color="#9c9908"/><stop offset="0.9458" stop-color="#9c6a00"/><stop offset="1.0000" stop-color="#9c5900"/></linearGradient><linearGradient id="o98" gradientUnits="userSpaceOnUse" x1="1060.0" y1="0" x2="1441.0" y2="0"><stop offset="0.0000" stop-color="#009c41"/><stop offset="0.4685" stop-color="#039c27"/><stop offset="0.6102" stop-color="#2d9c1d"/><stop offset="0.7572" stop-color="#709c10"/><stop offset="0.8360" stop-color="#9c9909"/><stop offset="0.9331" stop-color="#9c6b01"/><stop offset="1.0000" stop-color="#9c5500"/></linearGradient><linearGradient id="o99" gradientUnits="userSpaceOnUse" x1="1061.0" y1="0" x2="1443.0" y2="0"><stop offset="0.0000" stop-color="#009c42"/><stop offset="0.4647" stop-color="#039c28"/><stop offset="0.6060" stop-color="#2e9c1e"/><stop offset="0.7526" stop-color="#729c11"/><stop offset="0.8285" stop-color="#9c980a"/><stop offset="0.9254" stop-color="#9c6a01"/><stop offset="1.0000" stop-color="#9c5200"/></linearGradient><linearGradient id="o100" gradientUnits="userSpaceOnUse" x1="1061.0" y1="0" x2="1446.0" y2="0"><stop offset="0.0000" stop-color="#009c43"/><stop offset="0.4584" stop-color="#039c29"/><stop offset="0.5961" stop-color="#2d9c1f"/><stop offset="0.7390" stop-color="#6f9c13"/><stop offset="0.8169" stop-color="#9c990c"/><stop offset="0.9104" stop-color="#9c6b02"/><stop offset="1.0000" stop-color="#9c4f00"/></linearGradient><linearGradient id="o101" gradientUnits="userSpaceOnUse" x1="1061.0" y1="0" x2="1448.0" y2="0"><stop offset="0.0000" stop-color="#009c44"/><stop offset="0.4561" stop-color="#039c2b"/><stop offset="0.5930" stop-color="#2e9c20"/><stop offset="0.7351" stop-color="#719c14"/><stop offset="0.8075" stop-color="#9c9a0d"/><stop offset="0.9005" stop-color="#9c6b03"/><stop offset="1.0000" stop-color="#9c4c00"/></linearGradient><linearGradient id="o102" gradientUnits="userSpaceOnUse" x1="1062.0" y1="0" x2="1451.0" y2="0"><stop offset="0.0000" stop-color="#009c46"/><stop offset="0.4486" stop-color="#039c2c"/><stop offset="0.5823" stop-color="#2d9c22"/><stop offset="0.7211" stop-color="#6f9c16"/><stop offset="0.7982" stop-color="#9c990e"/><stop offset="0.8907" stop-color="#9c6a04"/><stop offset="1.0000" stop-color="#9c4900"/></linearGradient><linearGradient id="o103" gradientUnits="userSpaceOnUse" x1="1062.0" y1="0" x2="1454.0" y2="0"><stop offset="0.0000" stop-color="#009c47"/><stop offset="0.4452" stop-color="#039c2d"/><stop offset="0.5778" stop-color="#2e9c23"/><stop offset="0.7156" stop-color="#719c17"/><stop offset="0.7870" stop-color="#9c9910"/><stop offset="0.8763" stop-color="#9c6b05"/><stop offset="1.0000" stop-color="#9c4500"/></linearGradient><linearGradient id="o104" gradientUnits="userSpaceOnUse" x1="1062.0" y1="0" x2="1456.0" y2="0"><stop offset="0.0000" stop-color="#009c48"/><stop offset="0.4404" stop-color="#039c2f"/><stop offset="0.5723" stop-color="#2e9c25"/><stop offset="0.7069" stop-color="#709c19"/><stop offset="0.7805" stop-color="#9c9811"/><stop offset="0.8693" stop-color="#9c6a06"/><stop offset="1.0000" stop-color="#9c4300"/></linearGradient><linearGradient id="o105" gradientUnits="userSpaceOnUse" x1="1063.0" y1="0" x2="1459.0" y2="0"><stop offset="0.0000" stop-color="#009c49"/><stop offset="0.4356" stop-color="#039c30"/><stop offset="0.5644" stop-color="#2d9c26"/><stop offset="0.6982" stop-color="#709c1a"/><stop offset="0.7689" stop-color="#9c9913"/><stop offset="0.8573" stop-color="#9c6a07"/><stop offset="0.9886" stop-color="#9c4300"/><stop offset="1.0000" stop-color="#9c4000"/></linearGradient><linearGradient id="o106" gradientUnits="userSpaceOnUse" x1="1063.0" y1="0" x2="1462.0" y2="0"><stop offset="0.0000" stop-color="#009c4b"/><stop offset="0.4298" stop-color="#039c32"/><stop offset="0.5576" stop-color="#2d9c28"/><stop offset="0.6905" stop-color="#719c1c"/><stop offset="0.7581" stop-color="#9c9a15"/><stop offset="0.8434" stop-color="#9c6c08"/><stop offset="0.9712" stop-color="#9c4400"/><stop offset="1.0000" stop-color="#9c3d00"/></linearGradient><linearGradient id="o107" gradientUnits="userSpaceOnUse" x1="1063.0" y1="0" x2="1464.0" y2="0"><stop offset="0.0000" stop-color="#009c4c"/><stop offset="0.4277" stop-color="#039c33"/><stop offset="0.5549" stop-color="#2e9c29"/><stop offset="0.6845" stop-color="#729c1d"/><stop offset="0.7519" stop-color="#9c9916"/><stop offset="0.8367" stop-color="#9c6b09"/><stop offset="0.9638" stop-color="#9c4300"/><stop offset="1.0000" stop-color="#9c3b00"/></linearGradient><linearGradient id="o108" gradientUnits="userSpaceOnUse" x1="1064.0" y1="0" x2="1467.0" y2="0"><stop offset="0.0000" stop-color="#009c4d"/><stop offset="0.4206" stop-color="#039c35"/><stop offset="0.5447" stop-color="#2d9c2b"/><stop offset="0.6737" stop-color="#719c1f"/><stop offset="0.7407" stop-color="#9c9918"/><stop offset="0.8251" stop-color="#9c6b0a"/><stop offset="0.9491" stop-color="#9c4300"/><stop offset="1.0000" stop-color="#9c3800"/></linearGradient><linearGradient id="o109" gradientUnits="userSpaceOnUse" x1="1064.0" y1="0" x2="1469.0" y2="0"><stop offset="0.0000" stop-color="#009c4e"/><stop offset="0.4160" stop-color="#039c36"/><stop offset="0.5370" stop-color="#2c9c2d"/><stop offset="0.6630" stop-color="#6e9c21"/><stop offset="0.7346" stop-color="#9c9819"/><stop offset="0.8185" stop-color="#9c6a0b"/><stop offset="0.9420" stop-color="#9c4201"/><stop offset="1.0000" stop-color="#9c3600"/></linearGradient><linearGradient id="o110" gradientUnits="userSpaceOnUse" x1="1064.0" y1="0" x2="1472.0" y2="0"><stop offset="0.0000" stop-color="#009c50"/><stop offset="0.4130" stop-color="#039c38"/><stop offset="0.5331" stop-color="#2d9c2e"/><stop offset="0.6581" stop-color="#709c23"/><stop offset="0.7243" stop-color="#9c991b"/><stop offset="0.8051" stop-color="#9c6b0d"/><stop offset="0.9252" stop-color="#9c4302"/><stop offset="1.0000" stop-color="#9c3400"/></linearGradient><linearGradient id="o111" gradientUnits="userSpaceOnUse" x1="1065.0" y1="0" x2="1475.0" y2="0"><stop offset="0.0000" stop-color="#009c51"/><stop offset="0.4061" stop-color="#039c39"/><stop offset="0.5256" stop-color="#2d9c30"/><stop offset="0.6476" stop-color="#6f9c25"/><stop offset="0.7134" stop-color="#9c9a1d"/><stop offset="0.7939" stop-color="#9c6b0e"/><stop offset="0.9134" stop-color="#9c4302"/><stop offset="1.0000" stop-color="#9c3100"/></linearGradient><linearGradient id="o112" gradientUnits="userSpaceOnUse" x1="1065.0" y1="0" x2="1477.0" y2="0"><stop offset="0.0000" stop-color="#009c53"/><stop offset="0.4041" stop-color="#039c3b"/><stop offset="0.5206" stop-color="#2d9c32"/><stop offset="0.6420" stop-color="#709c26"/><stop offset="0.7075" stop-color="#9c991f"/><stop offset="0.7876" stop-color="#9c6a0f"/><stop offset="0.9066" stop-color="#9c4303"/><stop offset="1.0000" stop-color="#9c3000"/></linearGradient><linearGradient id="o113" gradientUnits="userSpaceOnUse" x1="1065.0" y1="0" x2="1480.0" y2="0"><stop offset="0.0000" stop-color="#009c54"/><stop offset="0.3988" stop-color="#039c3d"/><stop offset="0.5145" stop-color="#2d9c33"/><stop offset="0.6349" stop-color="#709c28"/><stop offset="0.6976" stop-color="#9c9a21"/><stop offset="0.7747" stop-color="#9c6b11"/><stop offset="0.8904" stop-color="#9c4404"/><stop offset="1.0000" stop-color="#9c2d00"/></linearGradient><linearGradient id="o114" gradientUnits="userSpaceOnUse" x1="1066.0" y1="0" x2="1483.0" y2="0"><stop offset="0.0000" stop-color="#009c55"/><stop offset="0.3945" stop-color="#039c3e"/><stop offset="0.5096" stop-color="#2e9c35"/><stop offset="0.6271" stop-color="#719c2a"/><stop offset="0.6894" stop-color="#9c9823"/><stop offset="0.7662" stop-color="#9c6b12"/><stop offset="0.8813" stop-color="#9c4305"/><stop offset="1.0000" stop-color="#9c2b00"/></linearGradient><linearGradient id="o115" gradientUnits="userSpaceOnUse" x1="1066.0" y1="0" x2="1485.0" y2="0"><stop offset="0.0000" stop-color="#009c57"/><stop offset="0.3902" stop-color="#039c40"/><stop offset="0.5024" stop-color="#2d9c37"/><stop offset="0.6193" stop-color="#709c2c"/><stop offset="0.6814" stop-color="#9c9925"/><stop offset="0.7578" stop-color="#9c6b14"/><stop offset="0.8699" stop-color="#9c4306"/><stop offset="1.0000" stop-color="#9c2900"/></linearGradient><linearGradient id="o116" gradientUnits="userSpaceOnUse" x1="1066.0" y1="0" x2="1488.0" y2="0"><stop offset="0.0000" stop-color="#009c58"/><stop offset="0.3874" stop-color="#039c42"/><stop offset="0.4988" stop-color="#2e9c39"/><stop offset="0.6126" stop-color="#709c2e"/><stop offset="0.6718" stop-color="#9c9a27"/><stop offset="0.7453" stop-color="#9c6c16"/><stop offset="0.8543" stop-color="#9c4407"/><stop offset="1.0000" stop-color="#9c2700"/></linearGradient><linearGradient id="o117" gradientUnits="userSpaceOnUse" x1="1067.0" y1="0" x2="1491.0" y2="0"><stop offset="0.0000" stop-color="#009c5a"/><stop offset="0.3809" stop-color="#039c44"/><stop offset="0.4894" stop-color="#2d9c3b"/><stop offset="0.6026" stop-color="#6f9c30"/><stop offset="0.6639" stop-color="#9c9929"/><stop offset="0.7370" stop-color="#9c6b17"/><stop offset="0.8455" stop-color="#9c4308"/><stop offset="1.0000" stop-color="#9c2500"/></linearGradient><linearGradient id="o118" gradientUnits="userSpaceOnUse" x1="1067.0" y1="0" x2="1493.0" y2="0"><stop offset="0.0000" stop-color="#009c5c"/><stop offset="0.3791" stop-color="#039c45"/><stop offset="0.4871" stop-color="#2e9c3d"/><stop offset="0.5974" stop-color="#709c32"/><stop offset="0.6561" stop-color="#9c9a2c"/><stop offset="0.7289" stop-color="#9c6b18"/><stop offset="0.8369" stop-color="#9c4309"/><stop offset="1.0000" stop-color="#9c2400"/></linearGradient><linearGradient id="o119" gradientUnits="userSpaceOnUse" x1="1068.0" y1="0" x2="1496.0" y2="0"><stop offset="0.0000" stop-color="#009c5d"/><stop offset="0.3727" stop-color="#039c47"/><stop offset="0.4778" stop-color="#2d9c3f"/><stop offset="0.5876" stop-color="#6f9c35"/><stop offset="0.6484" stop-color="#9c992d"/><stop offset="0.7208" stop-color="#9c6a1a"/><stop offset="0.8283" stop-color="#9c420a"/><stop offset="1.0000" stop-color="#9c2200"/></linearGradient><linearGradient id="o120" gradientUnits="userSpaceOnUse" x1="1068.0" y1="0" x2="1498.0" y2="0"><stop offset="0.0000" stop-color="#009c5f"/><stop offset="0.3709" stop-color="#039c49"/><stop offset="0.4756" stop-color="#2e9c41"/><stop offset="0.5849" stop-color="#719c37"/><stop offset="0.6407" stop-color="#9c9930"/><stop offset="0.7105" stop-color="#9c6b1c"/><stop offset="0.8151" stop-color="#9c440b"/><stop offset="0.9802" stop-color="#9c2300"/><stop offset="1.0000" stop-color="#9c2000"/></linearGradient><linearGradient id="o121" gradientUnits="userSpaceOnUse" x1="1068.0" y1="0" x2="1501.0" y2="0"><stop offset="0.0000" stop-color="#009c60"/><stop offset="0.3661" stop-color="#039c4b"/><stop offset="0.4700" stop-color="#2e9c43"/><stop offset="0.5762" stop-color="#709c39"/><stop offset="0.6316" stop-color="#9c9a33"/><stop offset="0.7009" stop-color="#9c6c1e"/><stop offset="0.8025" stop-color="#9c440c"/><stop offset="0.9642" stop-color="#9c2300"/><stop offset="1.0000" stop-color="#9c1f00"/></linearGradient><linearGradient id="o122" gradientUnits="userSpaceOnUse" x1="1069.0" y1="0" x2="1504.0" y2="0"><stop offset="0.0000" stop-color="#009c62"/><stop offset="0.3621" stop-color="#039c4d"/><stop offset="0.4632" stop-color="#2e9c45"/><stop offset="0.5690" stop-color="#719c3b"/><stop offset="0.6241" stop-color="#9c9935"/><stop offset="0.6931" stop-color="#9c6b1f"/><stop offset="0.7943" stop-color="#9c430d"/><stop offset="0.9552" stop-color="#9c2301"/><stop offset="1.0000" stop-color="#9c1d00"/></linearGradient><linearGradient id="o123" gradientUnits="userSpaceOnUse" x1="1069.0" y1="0" x2="1506.0" y2="0"><stop offset="0.0000" stop-color="#009c64"/><stop offset="0.3581" stop-color="#039c50"/><stop offset="0.4588" stop-color="#2d9c48"/><stop offset="0.5618" stop-color="#709c3e"/><stop offset="0.6167" stop-color="#9c9a37"/><stop offset="0.6831" stop-color="#9c6c21"/><stop offset="0.7815" stop-color="#9c440f"/><stop offset="0.9394" stop-color="#9c2301"/><stop offset="1.0000" stop-color="#9c1c00"/></linearGradient><linearGradient id="o124" gradientUnits="userSpaceOnUse" x1="1069.0" y1="0" x2="1509.0" y2="0"><stop offset="0.0000" stop-color="#009c66"/><stop offset="0.3534" stop-color="#039c52"/><stop offset="0.4511" stop-color="#2c9c4a"/><stop offset="0.5534" stop-color="#6f9c41"/><stop offset="0.6102" stop-color="#9c9939"/><stop offset="0.6761" stop-color="#9c6b23"/><stop offset="0.7739" stop-color="#9c4410"/><stop offset="0.9307" stop-color="#9c2302"/><stop offset="1.0000" stop-color="#9c1a00"/></linearGradient><linearGradient id="o125" gradientUnits="userSpaceOnUse" x1="1070.0" y1="0" x2="1512.0" y2="0"><stop offset="0.0000" stop-color="#009c67"/><stop offset="0.3495" stop-color="#039c54"/><stop offset="0.4468" stop-color="#2d9c4c"/><stop offset="0.5464" stop-color="#6f9c43"/><stop offset="0.6007" stop-color="#9c993c"/><stop offset="0.6663" stop-color="#9c6b25"/><stop offset="0.7636" stop-color="#9c4311"/><stop offset="0.9174" stop-color="#9c2303"/><stop offset="1.0000" stop-color="#9c1900"/></linearGradient><linearGradient id="o126" gradientUnits="userSpaceOnUse" x1="1070.0" y1="0" x2="1514.0" y2="0"><stop offset="0.0000" stop-color="#009c69"/><stop offset="0.3457" stop-color="#039c56"/><stop offset="0.4403" stop-color="#2c9c4f"/><stop offset="0.5394" stop-color="#6e9c46"/><stop offset="0.5935" stop-color="#9c9a40"/><stop offset="0.6565" stop-color="#9c6c28"/><stop offset="0.7511" stop-color="#9c4513"/><stop offset="0.9020" stop-color="#9c2404"/><stop offset="1.0000" stop-color="#9c1700"/></linearGradient><linearGradient id="o127" gradientUnits="userSpaceOnUse" x1="1071.0" y1="0" x2="1517.0" y2="0"><stop offset="0.0000" stop-color="#009c6b"/><stop offset="0.3419" stop-color="#039c58"/><stop offset="0.4361" stop-color="#2d9c51"/><stop offset="0.5348" stop-color="#719c48"/><stop offset="0.5863" stop-color="#9c9942"/><stop offset="0.6491" stop-color="#9c6b29"/><stop offset="0.7433" stop-color="#9c4414"/><stop offset="0.8935" stop-color="#9c2304"/><stop offset="1.0000" stop-color="#9c1600"/></linearGradient><linearGradient id="o128" gradientUnits="userSpaceOnUse" x1="1071.0" y1="0" x2="1519.0" y2="0"><stop offset="0.0000" stop-color="#009c6d"/><stop offset="0.3382" stop-color="#039c5b"/><stop offset="0.4297" stop-color="#2c9c54"/><stop offset="0.5257" stop-color="#6e9c4b"/><stop offset="0.5792" stop-color="#9c9a45"/><stop offset="0.6417" stop-color="#9c6c2b"/><stop offset="0.7355" stop-color="#9c4315"/><stop offset="0.8828" stop-color="#9c2305"/><stop offset="1.0000" stop-color="#9c1500"/></linearGradient><linearGradient id="o129" gradientUnits="userSpaceOnUse" x1="1072.0" y1="0" x2="1522.0" y2="0"><stop offset="0.0000" stop-color="#009c6f"/><stop offset="0.3344" stop-color="#039c5d"/><stop offset="0.4256" stop-color="#2d9c56"/><stop offset="0.5211" stop-color="#709c4e"/><stop offset="0.5722" stop-color="#9c9947"/><stop offset="0.6344" stop-color="#9c6a2d"/><stop offset="0.7278" stop-color="#9c4316"/><stop offset="0.8767" stop-color="#9c2205"/><stop offset="1.0000" stop-color="#9c1300"/></linearGradient><linearGradient id="o130" gradientUnits="userSpaceOnUse" x1="1072.0" y1="0" x2="1525.0" y2="0"><stop offset="0.0000" stop-color="#009c71"/><stop offset="0.3300" stop-color="#039c60"/><stop offset="0.4205" stop-color="#2d9c59"/><stop offset="0.5132" stop-color="#6f9c51"/><stop offset="0.5640" stop-color="#9c994b"/><stop offset="0.6258" stop-color="#9c6b2f"/><stop offset="0.7163" stop-color="#9c4318"/><stop offset="0.8598" stop-color="#9c2307"/><stop offset="1.0000" stop-color="#9c1200"/></linearGradient><linearGradient id="o131" gradientUnits="userSpaceOnUse" x1="1072.0" y1="0" x2="1527.0" y2="0"><stop offset="0.0000" stop-color="#009c73"/><stop offset="0.3286" stop-color="#039c62"/><stop offset="0.4165" stop-color="#2d9c5c"/><stop offset="0.5088" stop-color="#709c54"/><stop offset="0.5571" stop-color="#9c9a4e"/><stop offset="0.6165" stop-color="#9c6c32"/><stop offset="0.7044" stop-color="#9c441b"/><stop offset="0.8451" stop-color="#9c2308"/><stop offset="1.0000" stop-color="#9c1100"/></linearGradient><linearGradient id="o132" gradientUnits="userSpaceOnUse" x1="1073.0" y1="0" x2="1530.0" y2="0"><stop offset="0.0000" stop-color="#009c75"/><stop offset="0.3228" stop-color="#039c65"/><stop offset="0.4103" stop-color="#2d9c5f"/><stop offset="0.5000" stop-color="#6e9c57"/><stop offset="0.5503" stop-color="#9c9951"/><stop offset="0.6094" stop-color="#9c6b34"/><stop offset="0.6969" stop-color="#9c431c"/><stop offset="0.8370" stop-color="#9c2309"/><stop offset="1.0000" stop-color="#9c1000"/></linearGradient><linearGradient id="o133" gradientUnits="userSpaceOnUse" x1="1073.0" y1="0" x2="1532.0" y2="0"><stop offset="0.0000" stop-color="#009c77"/><stop offset="0.3214" stop-color="#039c67"/><stop offset="0.4085" stop-color="#2e9c61"/><stop offset="0.4978" stop-color="#719c5a"/><stop offset="0.5436" stop-color="#9c9a55"/><stop offset="0.6024" stop-color="#9c6b36"/><stop offset="0.6895" stop-color="#9c431d"/><stop offset="0.8268" stop-color="#9c230a"/><stop offset="1.0000" stop-color="#9c0f00"/></linearGradient><linearGradient id="o134" gradientUnits="userSpaceOnUse" x1="1074.0" y1="0" x2="1535.0" y2="0"><stop offset="0.0000" stop-color="#009c79"/><stop offset="0.3156" stop-color="#039c6a"/><stop offset="0.4002" stop-color="#2d9c65"/><stop offset="0.4892" stop-color="#709c5d"/><stop offset="0.5369" stop-color="#9c9957"/><stop offset="0.5954" stop-color="#9c6a38"/><stop offset="0.6822" stop-color="#9c421e"/><stop offset="0.8189" stop-color="#9c220a"/><stop offset="1.0000" stop-color="#9c0e00"/></linearGradient><linearGradient id="o135" gradientUnits="userSpaceOnUse" x1="1074.0" y1="0" x2="1538.0" y2="0"><stop offset="0.0000" stop-color="#009c7b"/><stop offset="0.3136" stop-color="#039c6d"/><stop offset="0.3976" stop-color="#2e9c67"/><stop offset="0.4838" stop-color="#709c61"/><stop offset="0.5291" stop-color="#9c9a5b"/><stop offset="0.5851" stop-color="#9c6b3c"/><stop offset="0.6692" stop-color="#9c4321"/><stop offset="0.8028" stop-color="#9c230c"/><stop offset="1.0000" stop-color="#9c0c00"/></linearGradient><linearGradient id="o136" gradientUnits="userSpaceOnUse" x1="1075.0" y1="0" x2="1540.0" y2="0"><stop offset="0.0000" stop-color="#009c7e"/><stop offset="0.3086" stop-color="#039c70"/><stop offset="0.3903" stop-color="#2c9c6b"/><stop offset="0.4763" stop-color="#6f9c64"/><stop offset="0.5215" stop-color="#9c9b5f"/><stop offset="0.5774" stop-color="#9c6c3f"/><stop offset="0.6591" stop-color="#9c4423"/><stop offset="0.7903" stop-color="#9c230d"/><stop offset="1.0000" stop-color="#9c0c00"/></linearGradient><linearGradient id="o137" gradientUnits="userSpaceOnUse" x1="1075.0" y1="0" x2="1543.0" y2="0"><stop offset="0.0000" stop-color="#009c80"/><stop offset="0.3066" stop-color="#039c73"/><stop offset="0.3878" stop-color="#2e9c6e"/><stop offset="0.4712" stop-color="#709c68"/><stop offset="0.5160" stop-color="#9c9962"/><stop offset="0.5716" stop-color="#9c6a40"/><stop offset="0.6528" stop-color="#9c4324"/><stop offset="0.7831" stop-color="#9c220e"/><stop offset="1.0000" stop-color="#9c0b00"/></linearGradient><linearGradient id="o138" gradientUnits="userSpaceOnUse" x1="1076.0" y1="0" x2="1546.0" y2="0"><stop offset="0.0000" stop-color="#009c82"/><stop offset="0.3011" stop-color="#039c76"/><stop offset="0.3798" stop-color="#2c9c71"/><stop offset="0.4628" stop-color="#6f9c6b"/><stop offset="0.5074" stop-color="#9c9a67"/><stop offset="0.5606" stop-color="#9c6c44"/><stop offset="0.6394" stop-color="#9c4427"/><stop offset="0.7649" stop-color="#9c2410"/><stop offset="0.9840" stop-color="#9c0b00"/><stop offset="1.0000" stop-color="#9c0a00"/></linearGradient><linearGradient id="o139" gradientUnits="userSpaceOnUse" x1="1076.0" y1="0" x2="1548.0" y2="0"><stop offset="0.0000" stop-color="#009c85"/><stop offset="0.2977" stop-color="#029c79"/><stop offset="0.3761" stop-color="#2c9c75"/><stop offset="0.4566" stop-color="#6d9c6f"/><stop offset="0.5032" stop-color="#9c9969"/><stop offset="0.5561" stop-color="#9c6b46"/><stop offset="0.6345" stop-color="#9c4329"/><stop offset="0.7595" stop-color="#9c2311"/><stop offset="0.9799" stop-color="#9c0a00"/><stop offset="1.0000" stop-color="#9c0900"/></linearGradient><linearGradient id="o140" gradientUnits="userSpaceOnUse" x1="1077.0" y1="0" x2="1551.0" y2="0"><stop offset="0.0000" stop-color="#009c87"/><stop offset="0.2943" stop-color="#039c7c"/><stop offset="0.3724" stop-color="#2d9c78"/><stop offset="0.4525" stop-color="#709c73"/><stop offset="0.4947" stop-color="#9c9a6e"/><stop offset="0.5475" stop-color="#9c6b49"/><stop offset="0.6255" stop-color="#9c432b"/><stop offset="0.7500" stop-color="#9c2212"/><stop offset="0.9673" stop-color="#9c0a01"/><stop offset="1.0000" stop-color="#9c0800"/></linearGradient><linearGradient id="o141" gradientUnits="userSpaceOnUse" x1="1077.0" y1="0" x2="1553.0" y2="0"><stop offset="0.0000" stop-color="#009c8a"/><stop offset="0.2910" stop-color="#029c7f"/><stop offset="0.3666" stop-color="#2c9c7c"/><stop offset="0.4464" stop-color="#6f9c77"/><stop offset="0.4905" stop-color="#9c9871"/><stop offset="0.5431" stop-color="#9c6a4b"/><stop offset="0.6208" stop-color="#9c422c"/><stop offset="0.7447" stop-color="#9c2213"/><stop offset="0.9632" stop-color="#9c0901"/><stop offset="1.0000" stop-color="#9c0700"/></linearGradient><linearGradient id="o142" gradientUnits="userSpaceOnUse" x1="1077.0" y1="0" x2="1556.0" y2="0"><stop offset="0.0000" stop-color="#009c8c"/><stop offset="0.2891" stop-color="#039c83"/><stop offset="0.3643" stop-color="#2d9c7f"/><stop offset="0.4415" stop-color="#709c7b"/><stop offset="0.4833" stop-color="#9c9976"/><stop offset="0.5334" stop-color="#9c6b50"/><stop offset="0.6086" stop-color="#9c442f"/><stop offset="0.7276" stop-color="#9c2315"/><stop offset="0.9363" stop-color="#9c0a02"/><stop offset="1.0000" stop-color="#9c0600"/></linearGradient><linearGradient id="o143" gradientUnits="userSpaceOnUse" x1="1078.0" y1="0" x2="1559.0" y2="0"><stop offset="0.0000" stop-color="#009c8f"/><stop offset="0.2838" stop-color="#029c86"/><stop offset="0.3565" stop-color="#2c9c83"/><stop offset="0.4335" stop-color="#6e9c7f"/><stop offset="0.4751" stop-color="#9c9a7b"/><stop offset="0.5249" stop-color="#9c6c53"/><stop offset="0.5977" stop-color="#9c4432"/><stop offset="0.7141" stop-color="#9c2317"/><stop offset="0.9179" stop-color="#9c0a03"/><stop offset="1.0000" stop-color="#9c0500"/></linearGradient><linearGradient id="o144" gradientUnits="userSpaceOnUse" x1="1078.0" y1="0" x2="1561.0" y2="0"><stop offset="0.0000" stop-color="#009c92"/><stop offset="0.2826" stop-color="#039c8a"/><stop offset="0.3551" stop-color="#2d9c87"/><stop offset="0.4296" stop-color="#6f9c83"/><stop offset="0.4710" stop-color="#9c997e"/><stop offset="0.5207" stop-color="#9c6a56"/><stop offset="0.5932" stop-color="#9c4333"/><stop offset="0.7091" stop-color="#9c2318"/><stop offset="0.9120" stop-color="#9c0a03"/><stop offset="1.0000" stop-color="#9c0500"/></linearGradient><linearGradient id="o145" gradientUnits="userSpaceOnUse" x1="1079.0" y1="0" x2="1564.0" y2="0"><stop offset="0.0000" stop-color="#009c95"/><stop offset="0.2773" stop-color="#029c8d"/><stop offset="0.3474" stop-color="#2b9c8b"/><stop offset="0.4216" stop-color="#6e9c88"/><stop offset="0.4629" stop-color="#9c9a84"/><stop offset="0.5103" stop-color="#9c6c5b"/><stop offset="0.5804" stop-color="#9c4437"/><stop offset="0.6918" stop-color="#9c241a"/><stop offset="0.8876" stop-color="#9c0b05"/><stop offset="1.0000" stop-color="#9c0400"/></linearGradient><linearGradient id="o146" gradientUnits="userSpaceOnUse" x1="1079.0" y1="0" x2="1567.0" y2="0"><stop offset="0.0000" stop-color="#009c98"/><stop offset="0.2756" stop-color="#039c91"/><stop offset="0.3453" stop-color="#2d9c8f"/><stop offset="0.4170" stop-color="#6e9c8c"/><stop offset="0.4580" stop-color="#9c9887"/><stop offset="0.5051" stop-color="#9c6b5d"/><stop offset="0.5748" stop-color="#9c4339"/><stop offset="0.6855" stop-color="#9c231b"/><stop offset="0.8801" stop-color="#9c0a05"/><stop offset="1.0000" stop-color="#9c0300"/></linearGradient><linearGradient id="o147" gradientUnits="userSpaceOnUse" x1="1080.0" y1="0" x2="1569.0" y2="0"><stop offset="0.0000" stop-color="#009c9a"/><stop offset="0.2710" stop-color="#039c95"/><stop offset="0.3405" stop-color="#2d9c93"/><stop offset="0.4121" stop-color="#6f9c91"/><stop offset="0.4509" stop-color="#9c998d"/><stop offset="0.4980" stop-color="#9c6b61"/><stop offset="0.5675" stop-color="#9c433b"/><stop offset="0.6779" stop-color="#9c231c"/><stop offset="0.8722" stop-color="#9c0a06"/><stop offset="1.0000" stop-color="#9c0300"/></linearGradient><linearGradient id="o148" gradientUnits="userSpaceOnUse" x1="1081.0" y1="0" x2="1572.0" y2="0"><stop offset="0.0000" stop-color="#009a9c"/><stop offset="0.2678" stop-color="#039c99"/><stop offset="0.3350" stop-color="#2d9c97"/><stop offset="0.4063" stop-color="#709c95"/><stop offset="0.4430" stop-color="#9c9a93"/><stop offset="0.4878" stop-color="#9c6d66"/><stop offset="0.5550" stop-color="#9c453f"/><stop offset="0.6609" stop-color="#9c241f"/><stop offset="0.8462" stop-color="#9c0b08"/><stop offset="1.0000" stop-color="#9c0200"/></linearGradient><linearGradient id="o149" gradientUnits="userSpaceOnUse" x1="1081.0" y1="0" x2="1575.0" y2="0"><stop offset="0.0000" stop-color="#00979c"/><stop offset="0.2642" stop-color="#039a9c"/><stop offset="0.3289" stop-color="#2b9b9c"/><stop offset="0.3998" stop-color="#6f9c9a"/><stop offset="0.4383" stop-color="#9c9997"/><stop offset="0.4828" stop-color="#9c6b69"/><stop offset="0.5496" stop-color="#9c4441"/><stop offset="0.6549" stop-color="#9c2320"/><stop offset="0.8391" stop-color="#9c0a08"/><stop offset="1.0000" stop-color="#9c0100"/></linearGradient><linearGradient id="o150" gradientUnits="userSpaceOnUse" x1="1082.0" y1="0" x2="1577.0" y2="0"><stop offset="0.0000" stop-color="#00949c"/><stop offset="0.2616" stop-color="#03969c"/><stop offset="0.3283" stop-color="#2d979c"/><stop offset="0.3949" stop-color="#6d989c"/><stop offset="0.4333" stop-color="#9c979a"/><stop offset="0.4778" stop-color="#9c6a6b"/><stop offset="0.5424" stop-color="#9c4344"/><stop offset="0.6455" stop-color="#9c2322"/><stop offset="0.8232" stop-color="#9c0b09"/><stop offset="1.0000" stop-color="#9c0100"/></linearGradient><linearGradient id="o151" gradientUnits="userSpaceOnUse" x1="1082.0" y1="0" x2="1580.0" y2="0"><stop offset="0.0000" stop-color="#00919c"/><stop offset="0.2580" stop-color="#02929c"/><stop offset="0.3243" stop-color="#2b929c"/><stop offset="0.3926" stop-color="#6c939c"/><stop offset="0.4327" stop-color="#9c9199"/><stop offset="0.4769" stop-color="#9c656b"/><stop offset="0.5432" stop-color="#9c4043"/><stop offset="0.6476" stop-color="#9c2122"/><stop offset="0.8283" stop-color="#9c0909"/><stop offset="1.0000" stop-color="#9c0000"/></linearGradient><linearGradient id="o152" gradientUnits="userSpaceOnUse" x1="1083.0" y1="0" x2="1582.0" y2="0"><stop offset="0.0000" stop-color="#008e9c"/><stop offset="0.2555" stop-color="#038e9c"/><stop offset="0.3216" stop-color="#2c8e9c"/><stop offset="0.3898" stop-color="#6c8e9c"/><stop offset="0.4299" stop-color="#9c8c9a"/><stop offset="0.4739" stop-color="#9c626c"/><stop offset="0.5401" stop-color="#9c3e43"/><stop offset="0.6443" stop-color="#9c1f22"/><stop offset="0.8246" stop-color="#9c0909"/><stop offset="1.0000" stop-color="#9c0000"/></linearGradient><linearGradient id="o153" gradientUnits="userSpaceOnUse" x1="1083.0" y1="0" x2="1585.0" y2="0"><stop offset="0.0000" stop-color="#008b9c"/><stop offset="0.2520" stop-color="#028a9c"/><stop offset="0.3177" stop-color="#2a8a9c"/><stop offset="0.3855" stop-color="#698a9c"/><stop offset="0.4273" stop-color="#9c889b"/><stop offset="0.4711" stop-color="#9c5f6c"/><stop offset="0.5369" stop-color="#9c3c44"/><stop offset="0.6404" stop-color="#9c1e23"/><stop offset="0.8197" stop-color="#9c080a"/><stop offset="1.0000" stop-color="#9c0000"/></linearGradient><linearGradient id="o154" gradientUnits="userSpaceOnUse" x1="1084.0" y1="0" x2="1588.0" y2="0"><stop offset="0.0000" stop-color="#00899c"/><stop offset="0.2490" stop-color="#03879c"/><stop offset="0.3165" stop-color="#2c869c"/><stop offset="0.3859" stop-color="#6d859c"/><stop offset="0.4256" stop-color="#9c8299"/><stop offset="0.4712" stop-color="#9c5a6a"/><stop offset="0.5387" stop-color="#9c3742"/><stop offset="0.6458" stop-color="#9c1b21"/><stop offset="0.8323" stop-color="#9c0609"/><stop offset="1.0000" stop-color="#9c0000"/></linearGradient><linearGradient id="o155" gradientUnits="userSpaceOnUse" x1="1084.0" y1="0" x2="1590.0" y2="0"><stop offset="0.0000" stop-color="#00869c"/><stop offset="0.2480" stop-color="#03839c"/><stop offset="0.3152" stop-color="#2c829c"/><stop offset="0.3844" stop-color="#6d819c"/><stop offset="0.4239" stop-color="#9c7e9a"/><stop offset="0.4694" stop-color="#9c576b"/><stop offset="0.5366" stop-color="#9c3643"/><stop offset="0.6433" stop-color="#9c1a22"/><stop offset="0.8271" stop-color="#9c0609"/><stop offset="1.0000" stop-color="#9c0000"/></linearGradient><linearGradient id="o156" gradientUnits="userSpaceOnUse" x1="1085.0" y1="0" x2="1593.0" y2="0"><stop offset="0.0000" stop-color="#00839c"/><stop offset="0.2431" stop-color="#03809c"/><stop offset="0.3120" stop-color="#2c7e9c"/><stop offset="0.3809" stop-color="#6d7c9c"/><stop offset="0.4203" stop-color="#9c7b9b"/><stop offset="0.4656" stop-color="#9c546c"/><stop offset="0.5325" stop-color="#9c3444"/><stop offset="0.6388" stop-color="#9c1922"/><stop offset="0.8219" stop-color="#9c0509"/><stop offset="1.0000" stop-color="#9c0000"/></linearGradient><linearGradient id="o157" gradientUnits="userSpaceOnUse" x1="1085.0" y1="0" x2="1596.0" y2="0"><stop offset="0.0000" stop-color="#00809c"/><stop offset="0.2417" stop-color="#037c9c"/><stop offset="0.3102" stop-color="#2d7a9c"/><stop offset="0.3806" stop-color="#6e789c"/><stop offset="0.4198" stop-color="#9c7599"/><stop offset="0.4648" stop-color="#9c516b"/><stop offset="0.5313" stop-color="#9c3144"/><stop offset="0.6370" stop-color="#9c1723"/><stop offset="0.8209" stop-color="#9c0409"/><stop offset="1.0000" stop-color="#9c0000"/></linearGradient><linearGradient id="o158" gradientUnits="userSpaceOnUse" x1="1086.0" y1="0" x2="1598.0" y2="0"><stop offset="0.0000" stop-color="#007e9c"/><stop offset="0.2373" stop-color="#03799c"/><stop offset="0.3057" stop-color="#2b779c"/><stop offset="0.3760" stop-color="#6c749c"/><stop offset="0.4170" stop-color="#9c719a"/><stop offset="0.4619" stop-color="#9c4e6c"/><stop offset="0.5283" stop-color="#9c2f44"/><stop offset="0.6338" stop-color="#9c1623"/><stop offset="0.8154" stop-color="#9c040a"/><stop offset="1.0000" stop-color="#9c0000"/></linearGradient><linearGradient id="o159" gradientUnits="userSpaceOnUse" x1="1086.0" y1="0" x2="1601.0" y2="0"><stop offset="0.0000" stop-color="#007b9c"/><stop offset="0.2359" stop-color="#03769c"/><stop offset="0.3058" stop-color="#2d739c"/><stop offset="0.3757" stop-color="#6e709c"/><stop offset="0.4165" stop-color="#9c6c98"/><stop offset="0.4631" stop-color="#9c496a"/><stop offset="0.5311" stop-color="#9c2c42"/><stop offset="0.6398" stop-color="#9c1422"/><stop offset="0.8282" stop-color="#9c0209"/><stop offset="1.0000" stop-color="#9c0000"/></linearGradient><linearGradient id="o160" gradientUnits="userSpaceOnUse" x1="1087.0" y1="0" x2="1603.0" y2="0"><stop offset="0.0000" stop-color="#00799c"/><stop offset="0.2316" stop-color="#02729c"/><stop offset="0.3014" stop-color="#2c709c"/><stop offset="0.3731" stop-color="#6d6c9c"/><stop offset="0.4138" stop-color="#9c6899"/><stop offset="0.4603" stop-color="#9c476b"/><stop offset="0.5281" stop-color="#9c2a43"/><stop offset="0.6366" stop-color="#9c1322"/><stop offset="0.8246" stop-color="#9c0209"/><stop offset="1.0000" stop-color="#9c0000"/></linearGradient><linearGradient id="o161" gradientUnits="userSpaceOnUse" x1="1088.0" y1="0" x2="1606.0" y2="0"><stop offset="0.0000" stop-color="#00769c"/><stop offset="0.2288" stop-color="#036f9c"/><stop offset="0.2983" stop-color="#2c6c9c"/><stop offset="0.3697" stop-color="#6d689c"/><stop offset="0.4102" stop-color="#9c659a"/><stop offset="0.4566" stop-color="#9c446b"/><stop offset="0.5241" stop-color="#9c2944"/><stop offset="0.6322" stop-color="#9c1223"/><stop offset="0.8195" stop-color="#9c0109"/><stop offset="1.0000" stop-color="#9c0000"/></linearGradient><linearGradient id="o162" gradientUnits="userSpaceOnUse" x1="1088.0" y1="0" x2="1609.0" y2="0"><stop offset="0.0000" stop-color="#00749c"/><stop offset="0.2274" stop-color="#036c9c"/><stop offset="0.2985" stop-color="#2e699c"/><stop offset="0.3695" stop-color="#6f659c"/><stop offset="0.4098" stop-color="#9c6098"/><stop offset="0.4578" stop-color="#9c4069"/><stop offset="0.5288" stop-color="#9c2541"/><stop offset="0.6401" stop-color="#9c0f21"/><stop offset="0.8340" stop-color="#9c0008"/><stop offset="1.0000" stop-color="#9c0000"/></linearGradient><linearGradient id="o163" gradientUnits="userSpaceOnUse" x1="1089.0" y1="0" x2="1611.0" y2="0"><stop offset="0.0000" stop-color="#00719c"/><stop offset="0.2232" stop-color="#03699c"/><stop offset="0.2941" stop-color="#2c659c"/><stop offset="0.3669" stop-color="#6e619c"/><stop offset="0.4071" stop-color="#9c5d99"/><stop offset="0.4550" stop-color="#9c3e6a"/><stop offset="0.5259" stop-color="#9c2342"/><stop offset="0.6370" stop-color="#9c0e21"/><stop offset="0.8305" stop-color="#9c0009"/><stop offset="1.0000" stop-color="#9c0000"/></linearGradient><linearGradient id="o164" gradientUnits="userSpaceOnUse" x1="1089.0" y1="0" x2="1614.0" y2="0"><stop offset="0.0000" stop-color="#006f9c"/><stop offset="0.2219" stop-color="#03669c"/><stop offset="0.2924" stop-color="#2c629c"/><stop offset="0.3648" stop-color="#6e5d9c"/><stop offset="0.4048" stop-color="#9c5a9a"/><stop offset="0.4524" stop-color="#9c3b6b"/><stop offset="0.5229" stop-color="#9c2243"/><stop offset="0.6333" stop-color="#9c0d22"/><stop offset="0.8257" stop-color="#9c0009"/><stop offset="1.0000" stop-color="#9c0000"/></linearGradient><linearGradient id="o165" gradientUnits="userSpaceOnUse" x1="1090.0" y1="0" x2="1617.0" y2="0"><stop offset="0.0000" stop-color="#006c9c"/><stop offset="0.2173" stop-color="#03639c"/><stop offset="0.2875" stop-color="#2b5f9c"/><stop offset="0.3596" stop-color="#6b5a9c"/><stop offset="0.4032" stop-color="#9c5599"/><stop offset="0.4507" stop-color="#9c386a"/><stop offset="0.5209" stop-color="#9c2043"/><stop offset="0.6328" stop-color="#9c0c22"/><stop offset="0.8264" stop-color="#9c0009"/><stop offset="1.0000" stop-color="#9c0000"/></linearGradient><linearGradient id="o166" gradientUnits="userSpaceOnUse" x1="1090.0" y1="0" x2="1619.0" y2="0"><stop offset="0.0000" stop-color="#006a9c"/><stop offset="0.2164" stop-color="#03609c"/><stop offset="0.2883" stop-color="#2d5c9c"/><stop offset="0.3601" stop-color="#6d579c"/><stop offset="0.4017" stop-color="#9c5299"/><stop offset="0.4490" stop-color="#9c366b"/><stop offset="0.5189" stop-color="#9c1e43"/><stop offset="0.6304" stop-color="#9c0b22"/><stop offset="0.8233" stop-color="#9c0009"/><stop offset="1.0000" stop-color="#9c0000"/></linearGradient><linearGradient id="o167" gradientUnits="userSpaceOnUse" x1="1091.0" y1="0" x2="1622.0" y2="0"><stop offset="0.0000" stop-color="#00689c"/><stop offset="0.2119" stop-color="#035e9c"/><stop offset="0.2834" stop-color="#2c599c"/><stop offset="0.3569" stop-color="#6d539c"/><stop offset="0.3983" stop-color="#9c4f9a"/><stop offset="0.4454" stop-color="#9c346c"/><stop offset="0.5151" stop-color="#9c1d44"/><stop offset="0.6262" stop-color="#9c0a23"/><stop offset="0.8183" stop-color="#9c0009"/><stop offset="1.0000" stop-color="#9c0000"/></linearGradient><linearGradient id="o168" gradientUnits="userSpaceOnUse" x1="1092.0" y1="0" x2="1624.0" y2="0"><stop offset="0.0000" stop-color="#00659c"/><stop offset="0.2096" stop-color="#035b9c"/><stop offset="0.2810" stop-color="#2c569c"/><stop offset="0.3543" stop-color="#6c509c"/><stop offset="0.3976" stop-color="#9c4b99"/><stop offset="0.4464" stop-color="#9c306a"/><stop offset="0.5179" stop-color="#9c1a42"/><stop offset="0.6306" stop-color="#9c0822"/><stop offset="0.8224" stop-color="#9c0009"/><stop offset="1.0000" stop-color="#9c0000"/></linearGradient><linearGradient id="o169" gradientUnits="userSpaceOnUse" x1="1092.0" y1="0" x2="1621.0" y2="0"><stop offset="0.0000" stop-color="#00639c"/><stop offset="0.2108" stop-color="#03589c"/><stop offset="0.2845" stop-color="#2d539c"/><stop offset="0.3582" stop-color="#6e4d9c"/><stop offset="0.3998" stop-color="#9c489a"/><stop offset="0.4490" stop-color="#9c2e6b"/><stop offset="0.5208" stop-color="#9c1943"/><stop offset="0.6342" stop-color="#9c0822"/><stop offset="0.8251" stop-color="#9c000a"/><stop offset="1.0000" stop-color="#9c0000"/></linearGradient><linearGradient id="o170" gradientUnits="userSpaceOnUse" x1="1093.0" y1="0" x2="1616.0" y2="0"><stop offset="0.0000" stop-color="#00619c"/><stop offset="0.2094" stop-color="#03569c"/><stop offset="0.2839" stop-color="#2c509c"/><stop offset="0.3604" stop-color="#6e4a9c"/><stop offset="0.4025" stop-color="#9c459a"/><stop offset="0.4522" stop-color="#9c2c6b"/><stop offset="0.5249" stop-color="#9c1744"/><stop offset="0.6396" stop-color="#9c0723"/><stop offset="0.8327" stop-color="#9c000a"/><stop offset="1.0000" stop-color="#9c0001"/></linearGradient><linearGradient id="o171" gradientUnits="userSpaceOnUse" x1="1094.0" y1="0" x2="1610.0" y2="0"><stop offset="0.0000" stop-color="#005e9c"/><stop offset="0.2103" stop-color="#03539c"/><stop offset="0.2859" stop-color="#2c4e9c"/><stop offset="0.3634" stop-color="#6d479c"/><stop offset="0.4079" stop-color="#9c4199"/><stop offset="0.4583" stop-color="#9c296b"/><stop offset="0.5339" stop-color="#9c1543"/><stop offset="0.6521" stop-color="#9c0622"/><stop offset="0.8576" stop-color="#9c0009"/><stop offset="1.0000" stop-color="#9c0001"/></linearGradient><linearGradient id="o172" gradientUnits="userSpaceOnUse" x1="1094.0" y1="0" x2="1605.0" y2="0"><stop offset="0.0000" stop-color="#005c9c"/><stop offset="0.2104" stop-color="#03519c"/><stop offset="0.2867" stop-color="#2b4b9c"/><stop offset="0.3650" stop-color="#6b449c"/><stop offset="0.4119" stop-color="#9c3e9a"/><stop offset="0.4628" stop-color="#9c276c"/><stop offset="0.5391" stop-color="#9c1443"/><stop offset="0.6585" stop-color="#9c0522"/><stop offset="0.8659" stop-color="#9c0009"/><stop offset="1.0000" stop-color="#9c0002"/></linearGradient><linearGradient id="o173" gradientUnits="userSpaceOnUse" x1="1095.0" y1="0" x2="1599.0" y2="0"><stop offset="0.0000" stop-color="#005a9c"/><stop offset="0.2113" stop-color="#034e9c"/><stop offset="0.2907" stop-color="#2d489c"/><stop offset="0.3720" stop-color="#6f419c"/><stop offset="0.4157" stop-color="#9c3c9a"/><stop offset="0.4673" stop-color="#9c266c"/><stop offset="0.5446" stop-color="#9c1344"/><stop offset="0.6657" stop-color="#9c0423"/><stop offset="0.8760" stop-color="#9c000a"/><stop offset="1.0000" stop-color="#9c0003"/></linearGradient><linearGradient id="o174" gradientUnits="userSpaceOnUse" x1="1095.0" y1="0" x2="1593.0" y2="0"><stop offset="0.0000" stop-color="#00589c"/><stop offset="0.2118" stop-color="#034c9c"/><stop offset="0.2922" stop-color="#2c469c"/><stop offset="0.3745" stop-color="#6c3e9c"/><stop offset="0.4227" stop-color="#9c3899"/><stop offset="0.4769" stop-color="#9c226a"/><stop offset="0.5572" stop-color="#9c1042"/><stop offset="0.6837" stop-color="#9c0322"/><stop offset="0.9046" stop-color="#9c0009"/><stop offset="1.0000" stop-color="#9c0003"/></linearGradient><linearGradient id="o175" gradientUnits="userSpaceOnUse" x1="1096.0" y1="0" x2="1588.0" y2="0"><stop offset="0.0000" stop-color="#00569c"/><stop offset="0.2124" stop-color="#03499c"/><stop offset="0.2957" stop-color="#2d439c"/><stop offset="0.3791" stop-color="#6e3b9c"/><stop offset="0.4258" stop-color="#9c359a"/><stop offset="0.4807" stop-color="#9c216b"/><stop offset="0.5620" stop-color="#9c0f43"/><stop offset="0.6900" stop-color="#9c0222"/><stop offset="0.9116" stop-color="#9c0009"/><stop offset="1.0000" stop-color="#9c0004"/></linearGradient><linearGradient id="o176" gradientUnits="userSpaceOnUse" x1="1097.0" y1="0" x2="1582.0" y2="0"><stop offset="0.0000" stop-color="#00549c"/><stop offset="0.2134" stop-color="#03479c"/><stop offset="0.2979" stop-color="#2d409c"/><stop offset="0.3845" stop-color="#6f389c"/><stop offset="0.4320" stop-color="#9c3298"/><stop offset="0.4897" stop-color="#9c1e69"/><stop offset="0.5742" stop-color="#9c0d41"/><stop offset="0.7082" stop-color="#9c0121"/><stop offset="0.9412" stop-color="#9c0008"/><stop offset="1.0000" stop-color="#9c0005"/></linearGradient><linearGradient id="o177" gradientUnits="userSpaceOnUse" x1="1097.0" y1="0" x2="1576.0" y2="0"><stop offset="0.0000" stop-color="#00529c"/><stop offset="0.2140" stop-color="#03459c"/><stop offset="0.2996" stop-color="#2c3e9c"/><stop offset="0.3873" stop-color="#6d369c"/><stop offset="0.4374" stop-color="#9c3099"/><stop offset="0.4958" stop-color="#9c1c6a"/><stop offset="0.5814" stop-color="#9c0c42"/><stop offset="0.7171" stop-color="#9c0121"/><stop offset="0.9530" stop-color="#9c0009"/><stop offset="1.0000" stop-color="#9c0006"/></linearGradient><linearGradient id="o178" gradientUnits="userSpaceOnUse" x1="1098.0" y1="0" x2="1571.0" y2="0"><stop offset="0.0000" stop-color="#004f9c"/><stop offset="0.2146" stop-color="#03439c"/><stop offset="0.3034" stop-color="#2e3b9c"/><stop offset="0.3922" stop-color="#6f339c"/><stop offset="0.4408" stop-color="#9c2d9a"/><stop offset="0.5000" stop-color="#9c1a6b"/><stop offset="0.5867" stop-color="#9c0b43"/><stop offset="0.7241" stop-color="#9c0022"/><stop offset="0.9630" stop-color="#9c0009"/><stop offset="1.0000" stop-color="#9c0007"/></linearGradient><linearGradient id="o179" gradientUnits="userSpaceOnUse" x1="1099.0" y1="0" x2="1565.0" y2="0"><stop offset="0.0000" stop-color="#004d9c"/><stop offset="0.2135" stop-color="#03409c"/><stop offset="0.3036" stop-color="#2c399c"/><stop offset="0.3959" stop-color="#6e319c"/><stop offset="0.4474" stop-color="#9c2a99"/><stop offset="0.5075" stop-color="#9c186a"/><stop offset="0.5976" stop-color="#9c0942"/><stop offset="0.7393" stop-color="#9c0021"/><stop offset="0.9861" stop-color="#9c0008"/><stop offset="1.0000" stop-color="#9c0008"/></linearGradient><linearGradient id="o180" gradientUnits="userSpaceOnUse" x1="1099.0" y1="0" x2="1559.0" y2="0"><stop offset="0.0000" stop-color="#004b9c"/><stop offset="0.2163" stop-color="#033e9c"/><stop offset="0.3076" stop-color="#2d379c"/><stop offset="0.4011" stop-color="#6e2e9c"/><stop offset="0.4533" stop-color="#9c2899"/><stop offset="0.5141" stop-color="#9c176b"/><stop offset="0.6054" stop-color="#9c0842"/><stop offset="0.7489" stop-color="#9c0022"/><stop offset="0.9989" stop-color="#9c0009"/><stop offset="1.0000" stop-color="#9c0009"/></linearGradient><linearGradient id="o181" gradientUnits="userSpaceOnUse" x1="1100.0" y1="0" x2="1554.0" y2="0"><stop offset="0.0000" stop-color="#00499c"/><stop offset="0.2148" stop-color="#033c9c"/><stop offset="0.3073" stop-color="#2c359c"/><stop offset="0.4020" stop-color="#6c2c9c"/><stop offset="0.4570" stop-color="#9c269a"/><stop offset="0.5187" stop-color="#9c156c"/><stop offset="0.6112" stop-color="#9c0743"/><stop offset="0.7566" stop-color="#9c0022"/><stop offset="1.0000" stop-color="#9c000a"/></linearGradient><linearGradient id="o182" gradientUnits="userSpaceOnUse" x1="1101.0" y1="0" x2="1548.0" y2="0"><stop offset="0.0000" stop-color="#00479c"/><stop offset="0.2159" stop-color="#033a9c"/><stop offset="0.3121" stop-color="#2d339c"/><stop offset="0.4083" stop-color="#6d299c"/><stop offset="0.4642" stop-color="#9c2399"/><stop offset="0.5291" stop-color="#9c136a"/><stop offset="0.6253" stop-color="#9c0642"/><stop offset="0.7774" stop-color="#9c0021"/><stop offset="1.0000" stop-color="#9c000b"/></linearGradient><linearGradient id="o183" gradientUnits="userSpaceOnUse" x1="1102.0" y1="0" x2="1543.0" y2="0"><stop offset="0.0000" stop-color="#00459c"/><stop offset="0.2143" stop-color="#03389c"/><stop offset="0.3118" stop-color="#2c319c"/><stop offset="0.4116" stop-color="#6d279c"/><stop offset="0.4683" stop-color="#9c2199"/><stop offset="0.5340" stop-color="#9c116a"/><stop offset="0.6315" stop-color="#9c0542"/><stop offset="0.7857" stop-color="#9c0021"/><stop offset="1.0000" stop-color="#9c000c"/></linearGradient><linearGradient id="o184" gradientUnits="userSpaceOnUse" x1="1102.0" y1="0" x2="1537.0" y2="0"><stop offset="0.0000" stop-color="#00449c"/><stop offset="0.2172" stop-color="#03369c"/><stop offset="0.3161" stop-color="#2c2e9c"/><stop offset="0.4172" stop-color="#6d259c"/><stop offset="0.4747" stop-color="#9c1f9a"/><stop offset="0.5414" stop-color="#9c106b"/><stop offset="0.6402" stop-color="#9c0443"/><stop offset="0.7966" stop-color="#9c0022"/><stop offset="1.0000" stop-color="#9c000d"/></linearGradient><linearGradient id="o185" gradientUnits="userSpaceOnUse" x1="1103.0" y1="0" x2="1531.0" y2="0"><stop offset="0.0000" stop-color="#00429c"/><stop offset="0.2185" stop-color="#03349c"/><stop offset="0.3213" stop-color="#2d2c9c"/><stop offset="0.4241" stop-color="#6e239c"/><stop offset="0.4825" stop-color="#9c1c99"/><stop offset="0.5502" stop-color="#9c0e6b"/><stop offset="0.6507" stop-color="#9c0343"/><stop offset="0.8096" stop-color="#9c0022"/><stop offset="1.0000" stop-color="#9c000e"/></linearGradient><linearGradient id="o186" gradientUnits="userSpaceOnUse" x1="1104.0" y1="0" x2="1526.0" y2="0"><stop offset="0.0000" stop-color="#00409c"/><stop offset="0.2168" stop-color="#03329c"/><stop offset="0.3211" stop-color="#2c2a9c"/><stop offset="0.4277" stop-color="#6e209c"/><stop offset="0.4870" stop-color="#9c1a9a"/><stop offset="0.5557" stop-color="#9c0d6b"/><stop offset="0.6576" stop-color="#9c0243"/><stop offset="0.8187" stop-color="#9c0022"/><stop offset="1.0000" stop-color="#9c0010"/></linearGradient><linearGradient id="o187" gradientUnits="userSpaceOnUse" x1="1104.0" y1="0" x2="1520.0" y2="0"><stop offset="0.0000" stop-color="#003e9c"/><stop offset="0.2200" stop-color="#03309c"/><stop offset="0.3257" stop-color="#2d289c"/><stop offset="0.4339" stop-color="#6e1e9c"/><stop offset="0.4940" stop-color="#9c189a"/><stop offset="0.5637" stop-color="#9c0b6c"/><stop offset="0.6671" stop-color="#9c0144"/><stop offset="0.8305" stop-color="#9c0023"/><stop offset="1.0000" stop-color="#9c0011"/></linearGradient><linearGradient id="o188" gradientUnits="userSpaceOnUse" x1="1105.0" y1="0" x2="1514.0" y2="0"><stop offset="0.0000" stop-color="#003c9c"/><stop offset="0.2188" stop-color="#032f9c"/><stop offset="0.3264" stop-color="#2c279c"/><stop offset="0.4364" stop-color="#6c1d9c"/><stop offset="0.5024" stop-color="#9c1699"/><stop offset="0.5758" stop-color="#9c096a"/><stop offset="0.6834" stop-color="#9c0042"/><stop offset="0.8545" stop-color="#9c0022"/><stop offset="1.0000" stop-color="#9c0012"/></linearGradient><linearGradient id="o189" gradientUnits="userSpaceOnUse" x1="1106.0" y1="0" x2="1509.0" y2="0"><stop offset="0.0000" stop-color="#003a9c"/><stop offset="0.2196" stop-color="#032d9c"/><stop offset="0.3313" stop-color="#2d249c"/><stop offset="0.4454" stop-color="#6f1a9c"/><stop offset="0.5074" stop-color="#9c149a"/><stop offset="0.5819" stop-color="#9c086b"/><stop offset="0.6911" stop-color="#9c0043"/><stop offset="0.8648" stop-color="#9c0022"/><stop offset="1.0000" stop-color="#9c0014"/></linearGradient><linearGradient id="o190" gradientUnits="userSpaceOnUse" x1="1107.0" y1="0" x2="1503.0" y2="0"><stop offset="0.0000" stop-color="#00399c"/><stop offset="0.2210" stop-color="#032b9c"/><stop offset="0.3346" stop-color="#2d239c"/><stop offset="0.4508" stop-color="#6e189c"/><stop offset="0.5164" stop-color="#9c1198"/><stop offset="0.5922" stop-color="#9c076a"/><stop offset="0.7058" stop-color="#9c0042"/><stop offset="0.8851" stop-color="#9c0021"/><stop offset="1.0000" stop-color="#9c0015"/></linearGradient><linearGradient id="o191" gradientUnits="userSpaceOnUse" x1="1107.0" y1="0" x2="1498.0" y2="0"><stop offset="0.0000" stop-color="#00379c"/><stop offset="0.2212" stop-color="#032a9c"/><stop offset="0.3363" stop-color="#2c219c"/><stop offset="0.4540" stop-color="#6c179c"/><stop offset="0.5230" stop-color="#9c1099"/><stop offset="0.6023" stop-color="#9c056a"/><stop offset="0.7174" stop-color="#9c0042"/><stop offset="0.9015" stop-color="#9c0021"/><stop offset="1.0000" stop-color="#9c0017"/></linearGradient><linearGradient id="o192" gradientUnits="userSpaceOnUse" x1="1108.0" y1="0" x2="1492.0" y2="0"><stop offset="0.0000" stop-color="#00359c"/><stop offset="0.2227" stop-color="#03289c"/><stop offset="0.3424" stop-color="#2d1f9c"/><stop offset="0.4648" stop-color="#6f149c"/><stop offset="0.5299" stop-color="#9c0e9a"/><stop offset="0.6107" stop-color="#9c046a"/><stop offset="0.7279" stop-color="#9c0043"/><stop offset="0.9154" stop-color="#9c0022"/><stop offset="1.0000" stop-color="#9c0019"/></linearGradient><linearGradient id="o193" gradientUnits="userSpaceOnUse" x1="1109.0" y1="0" x2="1486.0" y2="0"><stop offset="0.0000" stop-color="#00339c"/><stop offset="0.2215" stop-color="#03269c"/><stop offset="0.3435" stop-color="#2c1d9c"/><stop offset="0.4682" stop-color="#6e139c"/><stop offset="0.5398" stop-color="#9c0c98"/><stop offset="0.6220" stop-color="#9c036a"/><stop offset="0.7440" stop-color="#9c0042"/><stop offset="0.9377" stop-color="#9c0021"/><stop offset="1.0000" stop-color="#9c001b"/></linearGradient><linearGradient id="o194" gradientUnits="userSpaceOnUse" x1="1110.0" y1="0" x2="1481.0" y2="0"><stop offset="0.0000" stop-color="#00329c"/><stop offset="0.2224" stop-color="#03259c"/><stop offset="0.3491" stop-color="#2e1b9c"/><stop offset="0.4757" stop-color="#6f119c"/><stop offset="0.5458" stop-color="#9c0a99"/><stop offset="0.6294" stop-color="#9c026b"/><stop offset="0.7534" stop-color="#9c0043"/><stop offset="0.9501" stop-color="#9c0022"/><stop offset="1.0000" stop-color="#9c001c"/></linearGradient><linearGradient id="o195" gradientUnits="userSpaceOnUse" x1="1111.0" y1="0" x2="1475.0" y2="0"><stop offset="0.0000" stop-color="#00309c"/><stop offset="0.2212" stop-color="#03239c"/><stop offset="0.3503" stop-color="#2d1a9c"/><stop offset="0.4821" stop-color="#6f0f9c"/><stop offset="0.5536" stop-color="#9c099a"/><stop offset="0.6387" stop-color="#9c016b"/><stop offset="0.7651" stop-color="#9c0043"/><stop offset="0.9657" stop-color="#9c0022"/><stop offset="1.0000" stop-color="#9c001e"/></linearGradient><linearGradient id="o196" gradientUnits="userSpaceOnUse" x1="1112.0" y1="0" x2="1469.0" y2="0"><stop offset="0.0000" stop-color="#002e9c"/><stop offset="0.2227" stop-color="#03219c"/><stop offset="0.3543" stop-color="#2d189c"/><stop offset="0.4888" stop-color="#6e0e9c"/><stop offset="0.5644" stop-color="#9c0799"/><stop offset="0.6541" stop-color="#9c006a"/><stop offset="0.7857" stop-color="#9c0042"/><stop offset="0.9930" stop-color="#9c0021"/><stop offset="1.0000" stop-color="#9c0020"/></linearGradient><linearGradient id="o197" gradientUnits="userSpaceOnUse" x1="1112.0" y1="0" x2="1464.0" y2="0"><stop offset="0.0000" stop-color="#002d9c"/><stop offset="0.2259" stop-color="#03209c"/><stop offset="0.3622" stop-color="#2e179c"/><stop offset="0.4986" stop-color="#700c9c"/><stop offset="0.5724" stop-color="#9c0699"/><stop offset="0.6634" stop-color="#9c006a"/><stop offset="0.7969" stop-color="#9c0042"/><stop offset="1.0000" stop-color="#9c0022"/></linearGradient><linearGradient id="o198" gradientUnits="userSpaceOnUse" x1="1113.0" y1="0" x2="1458.0" y2="0"><stop offset="0.0000" stop-color="#002b9c"/><stop offset="0.2246" stop-color="#031e9c"/><stop offset="0.3638" stop-color="#2d159c"/><stop offset="0.5029" stop-color="#6e0b9c"/><stop offset="0.5812" stop-color="#9c059a"/><stop offset="0.6739" stop-color="#9c006b"/><stop offset="0.8101" stop-color="#9c0043"/><stop offset="1.0000" stop-color="#9c0025"/></linearGradient><linearGradient id="o199" gradientUnits="userSpaceOnUse" x1="1114.0" y1="0" x2="1452.0" y2="0"><stop offset="0.0000" stop-color="#00299c"/><stop offset="0.2263" stop-color="#031d9c"/><stop offset="0.3683" stop-color="#2d149c"/><stop offset="0.5133" stop-color="#6f099c"/><stop offset="0.5932" stop-color="#9c0399"/><stop offset="0.6879" stop-color="#9c006a"/><stop offset="0.8299" stop-color="#9c0042"/><stop offset="1.0000" stop-color="#9c0027"/></linearGradient><linearGradient id="o200" gradientUnits="userSpaceOnUse" x1="1115.0" y1="0" x2="1447.0" y2="0"><stop offset="0.0000" stop-color="#00289c"/><stop offset="0.2244" stop-color="#031c9c"/><stop offset="0.3690" stop-color="#2c129c"/><stop offset="0.5166" stop-color="#6d089c"/><stop offset="0.6009" stop-color="#9c0299"/><stop offset="0.6973" stop-color="#9c006b"/><stop offset="0.8419" stop-color="#9c0043"/><stop offset="1.0000" stop-color="#9c0029"/></linearGradient><linearGradient id="o201" gradientUnits="userSpaceOnUse" x1="1116.0" y1="0" x2="1441.0" y2="0"><stop offset="0.0000" stop-color="#00269c"/><stop offset="0.2262" stop-color="#031a9c"/><stop offset="0.3769" stop-color="#2e119c"/><stop offset="0.5277" stop-color="#6e069c"/><stop offset="0.6108" stop-color="#9c019a"/><stop offset="0.7092" stop-color="#9c006c"/><stop offset="0.8569" stop-color="#9c0043"/><stop offset="1.0000" stop-color="#9c002c"/></linearGradient><linearGradient id="o202" gradientUnits="userSpaceOnUse" x1="1117.0" y1="0" x2="1436.0" y2="0"><stop offset="0.0000" stop-color="#00259c"/><stop offset="0.2241" stop-color="#03199c"/><stop offset="0.3777" stop-color="#2d109c"/><stop offset="0.5345" stop-color="#6e059c"/><stop offset="0.6223" stop-color="#9c0099"/><stop offset="0.7257" stop-color="#9c006a"/><stop offset="0.8793" stop-color="#9c0042"/><stop offset="1.0000" stop-color="#9c002f"/></linearGradient><linearGradient id="o203" gradientUnits="userSpaceOnUse" x1="1118.0" y1="0" x2="1430.0" y2="0"><stop offset="0.0000" stop-color="#00239c"/><stop offset="0.2260" stop-color="#03189c"/><stop offset="0.3830" stop-color="#2d0e9c"/><stop offset="0.5433" stop-color="#6e049c"/><stop offset="0.6330" stop-color="#9c009a"/><stop offset="0.7388" stop-color="#9c006b"/><stop offset="0.8958" stop-color="#9c0042"/><stop offset="1.0000" stop-color="#9c0032"/></linearGradient><linearGradient id="o204" gradientUnits="userSpaceOnUse" x1="1119.0" y1="0" x2="1424.0" y2="0"><stop offset="0.0000" stop-color="#00229c"/><stop offset="0.2279" stop-color="#03169c"/><stop offset="0.3918" stop-color="#2e0d9c"/><stop offset="0.5557" stop-color="#6f039c"/><stop offset="0.6475" stop-color="#9c0098"/><stop offset="0.7557" stop-color="#9c006a"/><stop offset="0.9164" stop-color="#9c0042"/><stop offset="1.0000" stop-color="#9c0035"/></linearGradient><linearGradient id="o205" gradientUnits="userSpaceOnUse" x1="1120.0" y1="0" x2="1419.0" y2="0"><stop offset="0.0000" stop-color="#00209c"/><stop offset="0.2258" stop-color="#03159c"/><stop offset="0.3930" stop-color="#2d0c9c"/><stop offset="0.5635" stop-color="#6f029c"/><stop offset="0.6572" stop-color="#9c0099"/><stop offset="0.7676" stop-color="#9c006b"/><stop offset="0.9314" stop-color="#9c0043"/><stop offset="1.0000" stop-color="#9c0038"/></linearGradient><linearGradient id="o206" gradientUnits="userSpaceOnUse" x1="1121.0" y1="0" x2="1413.0" y2="0"><stop offset="0.0000" stop-color="#001f9c"/><stop offset="0.2277" stop-color="#03149c"/><stop offset="0.3990" stop-color="#2d0a9c"/><stop offset="0.5736" stop-color="#6f019c"/><stop offset="0.6695" stop-color="#9c009a"/><stop offset="0.7825" stop-color="#9c006b"/><stop offset="0.9503" stop-color="#9c0043"/><stop offset="1.0000" stop-color="#9c003b"/></linearGradient><linearGradient id="o207" gradientUnits="userSpaceOnUse" x1="1122.0" y1="0" x2="1407.0" y2="0"><stop offset="0.0000" stop-color="#001d9c"/><stop offset="0.2263" stop-color="#03139c"/><stop offset="0.4018" stop-color="#2c099c"/><stop offset="0.5807" stop-color="#6d009c"/><stop offset="0.6860" stop-color="#9c0098"/><stop offset="0.8053" stop-color="#9c006a"/><stop offset="0.9807" stop-color="#9c0042"/><stop offset="1.0000" stop-color="#9c003f"/></linearGradient><linearGradient id="o208" gradientUnits="userSpaceOnUse" x1="1123.0" y1="0" x2="1402.0" y2="0"><stop offset="0.0000" stop-color="#001c9c"/><stop offset="0.2276" stop-color="#03119c"/><stop offset="0.4104" stop-color="#2d089c"/><stop offset="0.5968" stop-color="#70009c"/><stop offset="0.6971" stop-color="#9c0099"/><stop offset="0.8190" stop-color="#9c006a"/><stop offset="1.0000" stop-color="#9c0042"/></linearGradient><linearGradient id="o209" gradientUnits="userSpaceOnUse" x1="1124.0" y1="0" x2="1396.0" y2="0"><stop offset="0.0000" stop-color="#001a9c"/><stop offset="0.2298" stop-color="#03109c"/><stop offset="0.4173" stop-color="#2e079c"/><stop offset="0.6085" stop-color="#6f009c"/><stop offset="0.7114" stop-color="#9c009a"/><stop offset="0.8364" stop-color="#9c006b"/><stop offset="1.0000" stop-color="#9c0046"/></linearGradient><linearGradient id="o210" gradientUnits="userSpaceOnUse" x1="1125.0" y1="0" x2="1391.0" y2="0"><stop offset="0.0000" stop-color="#00199c"/><stop offset="0.2274" stop-color="#030f9c"/><stop offset="0.4192" stop-color="#2d069c"/><stop offset="0.6147" stop-color="#6e009c"/><stop offset="0.7274" stop-color="#9c0099"/><stop offset="0.8590" stop-color="#9c0069"/><stop offset="1.0000" stop-color="#9c004a"/></linearGradient><linearGradient id="o211" gradientUnits="userSpaceOnUse" x1="1125.0" y1="0" x2="1385.0" y2="0"><stop offset="0.0000" stop-color="#00189c"/><stop offset="0.2327" stop-color="#030e9c"/><stop offset="0.4327" stop-color="#2e059c"/><stop offset="0.6327" stop-color="#6f009c"/><stop offset="0.7442" stop-color="#9c0099"/><stop offset="0.8788" stop-color="#9c006a"/><stop offset="1.0000" stop-color="#9c004f"/></linearGradient><linearGradient id="o212" gradientUnits="userSpaceOnUse" x1="1126.0" y1="0" x2="1379.0" y2="0"><stop offset="0.0000" stop-color="#00169c"/><stop offset="0.2312" stop-color="#030d9c"/><stop offset="0.4368" stop-color="#2d049c"/><stop offset="0.6462" stop-color="#6e009c"/><stop offset="0.7609" stop-color="#9c009a"/><stop offset="0.8992" stop-color="#9c006b"/><stop offset="1.0000" stop-color="#9c0054"/></linearGradient><linearGradient id="o213" gradientUnits="userSpaceOnUse" x1="1127.0" y1="0" x2="1374.0" y2="0"><stop offset="0.0000" stop-color="#00159c"/><stop offset="0.2328" stop-color="#030c9c"/><stop offset="0.4474" stop-color="#2e039c"/><stop offset="0.6619" stop-color="#70009c"/><stop offset="0.7794" stop-color="#9c0099"/><stop offset="0.9211" stop-color="#9c006a"/><stop offset="1.0000" stop-color="#9c0058"/></linearGradient><linearGradient id="o214" gradientUnits="userSpaceOnUse" x1="1129.0" y1="0" x2="1368.0" y2="0"><stop offset="0.0000" stop-color="#00149c"/><stop offset="0.2322" stop-color="#030b9c"/><stop offset="0.4540" stop-color="#2e029c"/><stop offset="0.6757" stop-color="#6f009c"/><stop offset="0.7971" stop-color="#9c0099"/><stop offset="0.9435" stop-color="#9c006b"/><stop offset="1.0000" stop-color="#9c005e"/></linearGradient><linearGradient id="o215" gradientUnits="userSpaceOnUse" x1="1130.0" y1="0" x2="1362.0" y2="0"><stop offset="0.0000" stop-color="#00129c"/><stop offset="0.2306" stop-color="#030a9c"/><stop offset="0.4591" stop-color="#2d019c"/><stop offset="0.6918" stop-color="#6f009c"/><stop offset="0.8168" stop-color="#9c009a"/><stop offset="0.9677" stop-color="#9c006b"/><stop offset="1.0000" stop-color="#9c0064"/></linearGradient><linearGradient id="o216" gradientUnits="userSpaceOnUse" x1="1131.0" y1="0" x2="1357.0" y2="0"><stop offset="0.0000" stop-color="#00119c"/><stop offset="0.2323" stop-color="#03099c"/><stop offset="0.4712" stop-color="#2e009c"/><stop offset="0.7102" stop-color="#70009c"/><stop offset="0.8385" stop-color="#9c0099"/><stop offset="0.9978" stop-color="#9c006a"/><stop offset="1.0000" stop-color="#9c0069"/></linearGradient><linearGradient id="o217" gradientUnits="userSpaceOnUse" x1="1132.0" y1="0" x2="1351.0" y2="0"><stop offset="0.0000" stop-color="#00109c"/><stop offset="0.2306" stop-color="#03089c"/><stop offset="0.4772" stop-color="#2e009c"/><stop offset="0.7237" stop-color="#6f009c"/><stop offset="0.8607" stop-color="#9c0099"/><stop offset="1.0000" stop-color="#9c0070"/></linearGradient><linearGradient id="o218" gradientUnits="userSpaceOnUse" x1="1133.0" y1="0" x2="1345.0" y2="0"><stop offset="0.0000" stop-color="#000f9c"/><stop offset="0.2335" stop-color="#03079c"/><stop offset="0.4882" stop-color="#2e009c"/><stop offset="0.7476" stop-color="#70009c"/><stop offset="0.8844" stop-color="#9c009a"/><stop offset="1.0000" stop-color="#9c0078"/></linearGradient><linearGradient id="o219" gradientUnits="userSpaceOnUse" x1="1134.0" y1="0" x2="1340.0" y2="0"><stop offset="0.0000" stop-color="#000d9c"/><stop offset="0.2354" stop-color="#04069c"/><stop offset="0.5024" stop-color="#2f009c"/><stop offset="0.7694" stop-color="#71009c"/><stop offset="0.9102" stop-color="#9c0099"/><stop offset="1.0000" stop-color="#9c007e"/></linearGradient><linearGradient id="o220" gradientUnits="userSpaceOnUse" x1="1135.0" y1="0" x2="1334.0" y2="0"><stop offset="0.0000" stop-color="#000c9c"/><stop offset="0.2337" stop-color="#03059c"/><stop offset="0.5101" stop-color="#2e009c"/><stop offset="0.7864" stop-color="#6f009c"/><stop offset="0.9372" stop-color="#9c0099"/><stop offset="1.0000" stop-color="#9c0087"/></linearGradient><linearGradient id="o221" gradientUnits="userSpaceOnUse" x1="1136.0" y1="0" x2="1329.0" y2="0"><stop offset="0.0000" stop-color="#000b9c"/><stop offset="0.2358" stop-color="#03049c"/><stop offset="0.5207" stop-color="#2e009c"/><stop offset="0.8109" stop-color="#70009c"/><stop offset="0.9663" stop-color="#9c0098"/><stop offset="1.0000" stop-color="#9c008e"/></linearGradient><linearGradient id="o222" gradientUnits="userSpaceOnUse" x1="1137.0" y1="0" x2="1323.0" y2="0"><stop offset="0.0000" stop-color="#000a9c"/><stop offset="0.2392" stop-color="#04039c"/><stop offset="0.5403" stop-color="#2f009c"/><stop offset="0.8414" stop-color="#72009c"/><stop offset="0.9973" stop-color="#9c0099"/><stop offset="1.0000" stop-color="#9c0098"/></linearGradient><linearGradient id="o223" gradientUnits="userSpaceOnUse" x1="1138.0" y1="0" x2="1317.0" y2="0"><stop offset="0.0000" stop-color="#00099c"/><stop offset="0.2374" stop-color="#03039c"/><stop offset="0.5503" stop-color="#2e009c"/><stop offset="0.8631" stop-color="#70009c"/><stop offset="1.0000" stop-color="#95009c"/></linearGradient><linearGradient id="o224" gradientUnits="userSpaceOnUse" x1="1140.0" y1="0" x2="1312.0" y2="0"><stop offset="0.0000" stop-color="#00089c"/><stop offset="0.2355" stop-color="#04029c"/><stop offset="0.5610" stop-color="#2e009c"/><stop offset="0.8866" stop-color="#70009c"/><stop offset="1.0000" stop-color="#8c009c"/></linearGradient><linearGradient id="o225" gradientUnits="userSpaceOnUse" x1="1141.0" y1="0" x2="1306.0" y2="0"><stop offset="0.0000" stop-color="#00079c"/><stop offset="0.2394" stop-color="#04019c"/><stop offset="0.5848" stop-color="#2f009c"/><stop offset="0.9303" stop-color="#72009c"/><stop offset="1.0000" stop-color="#83009c"/></linearGradient><linearGradient id="o226" gradientUnits="userSpaceOnUse" x1="1142.0" y1="0" x2="1300.0" y2="0"><stop offset="0.0000" stop-color="#00069c"/><stop offset="0.2373" stop-color="#04019c"/><stop offset="0.5981" stop-color="#2f009c"/><stop offset="0.9589" stop-color="#70009c"/><stop offset="1.0000" stop-color="#7a009c"/></linearGradient><linearGradient id="o227" gradientUnits="userSpaceOnUse" x1="1144.0" y1="0" x2="1295.0" y2="0"><stop offset="0.0000" stop-color="#00059c"/><stop offset="0.2351" stop-color="#04009c"/><stop offset="0.6126" stop-color="#2f009c"/><stop offset="0.9901" stop-color="#70009c"/><stop offset="1.0000" stop-color="#72009c"/></linearGradient><linearGradient id="o228" gradientUnits="userSpaceOnUse" x1="1145.0" y1="0" x2="1289.0" y2="0"><stop offset="0.0000" stop-color="#00049c"/><stop offset="0.2396" stop-color="#04009c"/><stop offset="0.6424" stop-color="#30009c"/><stop offset="1.0000" stop-color="#6a009c"/></linearGradient><linearGradient id="o229" gradientUnits="userSpaceOnUse" x1="1146.0" y1="0" x2="1284.0" y2="0"><stop offset="0.0000" stop-color="#00039c"/><stop offset="0.2428" stop-color="#04009c"/><stop offset="0.6630" stop-color="#30009c"/><stop offset="1.0000" stop-color="#63009c"/></linearGradient><linearGradient id="o230" gradientUnits="userSpaceOnUse" x1="1148.0" y1="0" x2="1278.0" y2="0"><stop offset="0.0000" stop-color="#00029c"/><stop offset="0.2423" stop-color="#04009c"/><stop offset="0.6962" stop-color="#31009c"/><stop offset="1.0000" stop-color="#5c009c"/></linearGradient><linearGradient id="o231" gradientUnits="userSpaceOnUse" x1="1149.0" y1="0" x2="1272.0" y2="0"><stop offset="0.0000" stop-color="#00019c"/><stop offset="0.2480" stop-color="#05009c"/><stop offset="0.7276" stop-color="#31009c"/><stop offset="1.0000" stop-color="#54009c"/></linearGradient><linearGradient id="o232" gradientUnits="userSpaceOnUse" x1="1151.0" y1="0" x2="1267.0" y2="0"><stop offset="0.0000" stop-color="#00009c"/><stop offset="0.2457" stop-color="#05009c"/><stop offset="0.7543" stop-color="#31009c"/><stop offset="1.0000" stop-color="#4f009c"/></linearGradient><linearGradient id="o233" gradientUnits="userSpaceOnUse" x1="1153.0" y1="0" x2="1261.0" y2="0"><stop offset="0.0000" stop-color="#00009c"/><stop offset="0.2546" stop-color="#06009c"/><stop offset="0.8102" stop-color="#33009c"/><stop offset="1.0000" stop-color="#48009c"/></linearGradient><linearGradient id="o234" gradientUnits="userSpaceOnUse" x1="1154.0" y1="0" x2="1255.0" y2="0"><stop offset="0.0000" stop-color="#00009c"/><stop offset="0.2624" stop-color="#06009c"/><stop offset="0.8564" stop-color="#33009c"/><stop offset="1.0000" stop-color="#42009c"/></linearGradient><linearGradient id="o235" gradientUnits="userSpaceOnUse" x1="1156.0" y1="0" x2="1250.0" y2="0"><stop offset="0.0000" stop-color="#00009c"/><stop offset="0.2819" stop-color="#07009c"/><stop offset="0.9309" stop-color="#36009c"/><stop offset="1.0000" stop-color="#3d009c"/></linearGradient><linearGradient id="o236" gradientUnits="userSpaceOnUse" x1="1158.0" y1="0" x2="1244.0" y2="0"><stop offset="0.0000" stop-color="#00009c"/><stop offset="0.3314" stop-color="#0a009c"/><stop offset="1.0000" stop-color="#37009c"/></linearGradient><linearGradient id="o237" gradientUnits="userSpaceOnUse" x1="1160.0" y1="0" x2="1238.0" y2="0"><stop offset="0.0000" stop-color="#00009c"/><stop offset="0.4551" stop-color="#10009c"/><stop offset="1.0000" stop-color="#31009c"/></linearGradient><linearGradient id="o238" gradientUnits="userSpaceOnUse" x1="1163.0" y1="0" x2="1233.0" y2="0"><stop offset="0.0000" stop-color="#00009c"/><stop offset="0.6786" stop-color="#1a009c"/><stop offset="1.0000" stop-color="#2d009c"/></linearGradient><linearGradient id="o239" gradientUnits="userSpaceOnUse" x1="1165.0" y1="0" x2="1227.0" y2="0"><stop offset="0.0000" stop-color="#00009c"/><stop offset="0.8952" stop-color="#22009c"/><stop offset="1.0000" stop-color="#28009c"/></linearGradient><linearGradient id="o240" gradientUnits="userSpaceOnUse" x1="1168.0" y1="0" x2="1222.0" y2="0"><stop offset="0.0000" stop-color="#01009c"/><stop offset="1.0000" stop-color="#24009c"/></linearGradient><linearGradient id="o241" gradientUnits="userSpaceOnUse" x1="1170.0" y1="0" x2="1216.0" y2="0"><stop offset="0.0000" stop-color="#02009c"/><stop offset="1.0000" stop-color="#1f009c"/></linearGradient><linearGradient id="o242" gradientUnits="userSpaceOnUse" x1="1173.0" y1="0" x2="1210.0" y2="0"><stop offset="0.0000" stop-color="#04009c"/><stop offset="1.0000" stop-color="#1b009c"/></linearGradient><linearGradient id="o243" gradientUnits="userSpaceOnUse" x1="1176.0" y1="0" x2="1205.0" y2="0"><stop offset="0.0000" stop-color="#05009c"/><stop offset="1.0000" stop-color="#17009c"/></linearGradient><linearGradient id="o244" gradientUnits="userSpaceOnUse" x1="1179.0" y1="0" x2="1199.0" y2="0"><stop offset="0.0000" stop-color="#07009c"/><stop offset="1.0000" stop-color="#13009c"/></linearGradient><linearGradient id="o245" gradientUnits="userSpaceOnUse" x1="1182.0" y1="0" x2="1193.0" y2="0"><stop offset="0.0000" stop-color="#09009c"/><stop offset="1.0000" stop-color="#10009c"/></linearGradient><linearGradient id="i0" gradientUnits="userSpaceOnUse" x1="1257.0" y1="0" x2="1261.0" y2="0"><stop offset="0.0000" stop-color="#00ff00"/><stop offset="1.0000" stop-color="#01ff00"/></linearGradient><linearGradient id="i1" gradientUnits="userSpaceOnUse" x1="1257.0" y1="0" x2="1264.0" y2="0"><stop offset="0.0000" stop-color="#00ff01"/><stop offset="1.0000" stop-color="#03ff00"/></linearGradient><linearGradient id="i2" gradientUnits="userSpaceOnUse" x1="1256.0" y1="0" x2="1267.0" y2="0"><stop offset="0.0000" stop-color="#00ff01"/><stop offset="1.0000" stop-color="#05ff00"/></linearGradient><linearGradient id="i3" gradientUnits="userSpaceOnUse" x1="1256.0" y1="0" x2="1270.0" y2="0"><stop offset="0.0000" stop-color="#00ff02"/><stop offset="1.0000" stop-color="#07ff00"/></linearGradient><linearGradient id="i4" gradientUnits="userSpaceOnUse" x1="1255.0" y1="0" x2="1273.0" y2="0"><stop offset="0.0000" stop-color="#00ff02"/><stop offset="1.0000" stop-color="#09ff00"/></linearGradient><linearGradient id="i5" gradientUnits="userSpaceOnUse" x1="1255.0" y1="0" x2="1276.0" y2="0"><stop offset="0.0000" stop-color="#00ff03"/><stop offset="1.0000" stop-color="#0cff00"/></linearGradient><linearGradient id="i6" gradientUnits="userSpaceOnUse" x1="1254.0" y1="0" x2="1279.0" y2="0"><stop offset="0.0000" stop-color="#00ff04"/><stop offset="1.0000" stop-color="#0fff00"/></linearGradient><linearGradient id="i7" gradientUnits="userSpaceOnUse" x1="1254.0" y1="0" x2="1282.0" y2="0"><stop offset="0.0000" stop-color="#00ff04"/><stop offset="1.0000" stop-color="#11ff00"/></linearGradient><linearGradient id="i8" gradientUnits="userSpaceOnUse" x1="1253.0" y1="0" x2="1285.0" y2="0"><stop offset="0.0000" stop-color="#00ff05"/><stop offset="1.0000" stop-color="#14ff00"/></linearGradient><linearGradient id="i9" gradientUnits="userSpaceOnUse" x1="1253.0" y1="0" x2="1288.0" y2="0"><stop offset="0.0000" stop-color="#00ff06"/><stop offset="1.0000" stop-color="#18ff00"/></linearGradient><linearGradient id="i10" gradientUnits="userSpaceOnUse" x1="1252.0" y1="0" x2="1291.0" y2="0"><stop offset="0.0000" stop-color="#00ff06"/><stop offset="1.0000" stop-color="#1bff00"/></linearGradient><linearGradient id="i11" gradientUnits="userSpaceOnUse" x1="1252.0" y1="0" x2="1294.0" y2="0"><stop offset="0.0000" stop-color="#00ff07"/><stop offset="1.0000" stop-color="#1eff00"/></linearGradient><linearGradient id="i12" gradientUnits="userSpaceOnUse" x1="1251.0" y1="0" x2="1297.0" y2="0"><stop offset="0.0000" stop-color="#00ff08"/><stop offset="0.8587" stop-color="#1cff01"/><stop offset="1.0000" stop-color="#22ff00"/></linearGradient><linearGradient id="i13" gradientUnits="userSpaceOnUse" x1="1251.0" y1="0" x2="1300.0" y2="0"><stop offset="0.0000" stop-color="#00ff09"/><stop offset="0.8265" stop-color="#1dff01"/><stop offset="1.0000" stop-color="#26ff00"/></linearGradient><linearGradient id="i14" gradientUnits="userSpaceOnUse" x1="1250.0" y1="0" x2="1302.0" y2="0"><stop offset="0.0000" stop-color="#00ff0a"/><stop offset="0.7404" stop-color="#1bff02"/><stop offset="1.0000" stop-color="#28ff00"/></linearGradient><linearGradient id="i15" gradientUnits="userSpaceOnUse" x1="1250.0" y1="0" x2="1305.0" y2="0"><stop offset="0.0000" stop-color="#00ff0a"/><stop offset="0.7364" stop-color="#1eff02"/><stop offset="1.0000" stop-color="#2cff00"/></linearGradient><linearGradient id="i16" gradientUnits="userSpaceOnUse" x1="1249.0" y1="0" x2="1308.0" y2="0"><stop offset="0.0000" stop-color="#00ff0b"/><stop offset="0.6356" stop-color="#1bff03"/><stop offset="1.0000" stop-color="#30ff00"/></linearGradient><linearGradient id="i17" gradientUnits="userSpaceOnUse" x1="1249.0" y1="0" x2="1311.0" y2="0"><stop offset="0.0000" stop-color="#00ff0c"/><stop offset="0.6371" stop-color="#1dff04"/><stop offset="1.0000" stop-color="#35ff00"/></linearGradient><linearGradient id="i18" gradientUnits="userSpaceOnUse" x1="1249.0" y1="0" x2="1314.0" y2="0"><stop offset="0.0000" stop-color="#00ff0d"/><stop offset="0.6385" stop-color="#20ff04"/><stop offset="1.0000" stop-color="#39ff00"/></linearGradient><linearGradient id="i19" gradientUnits="userSpaceOnUse" x1="1248.0" y1="0" x2="1317.0" y2="0"><stop offset="0.0000" stop-color="#00ff0e"/><stop offset="0.5580" stop-color="#1dff05"/><stop offset="1.0000" stop-color="#3eff00"/></linearGradient><linearGradient id="i20" gradientUnits="userSpaceOnUse" x1="1248.0" y1="0" x2="1320.0" y2="0"><stop offset="0.0000" stop-color="#00ff0f"/><stop offset="0.5625" stop-color="#1fff06"/><stop offset="1.0000" stop-color="#42ff00"/></linearGradient><linearGradient id="i21" gradientUnits="userSpaceOnUse" x1="1247.0" y1="0" x2="1323.0" y2="0"><stop offset="0.0000" stop-color="#00ff10"/><stop offset="0.4934" stop-color="#1cff07"/><stop offset="1.0000" stop-color="#47ff00"/></linearGradient><linearGradient id="i22" gradientUnits="userSpaceOnUse" x1="1247.0" y1="0" x2="1326.0" y2="0"><stop offset="0.0000" stop-color="#00ff11"/><stop offset="0.5000" stop-color="#1fff08"/><stop offset="1.0000" stop-color="#4cff00"/></linearGradient><linearGradient id="i23" gradientUnits="userSpaceOnUse" x1="1246.0" y1="0" x2="1329.0" y2="0"><stop offset="0.0000" stop-color="#00ff12"/><stop offset="0.4518" stop-color="#1cff09"/><stop offset="1.0000" stop-color="#52ff00"/></linearGradient><linearGradient id="i24" gradientUnits="userSpaceOnUse" x1="1246.0" y1="0" x2="1332.0" y2="0"><stop offset="0.0000" stop-color="#00ff13"/><stop offset="0.4477" stop-color="#1eff0a"/><stop offset="1.0000" stop-color="#57ff00"/></linearGradient><linearGradient id="i25" gradientUnits="userSpaceOnUse" x1="1245.0" y1="0" x2="1335.0" y2="0"><stop offset="0.0000" stop-color="#00ff14"/><stop offset="0.4056" stop-color="#1cff0b"/><stop offset="1.0000" stop-color="#5dff00"/></linearGradient><linearGradient id="i26" gradientUnits="userSpaceOnUse" x1="1245.0" y1="0" x2="1338.0" y2="0"><stop offset="0.0000" stop-color="#00ff15"/><stop offset="0.4140" stop-color="#1eff0c"/><stop offset="1.0000" stop-color="#62ff00"/></linearGradient><linearGradient id="i27" gradientUnits="userSpaceOnUse" x1="1244.0" y1="0" x2="1341.0" y2="0"><stop offset="0.0000" stop-color="#00ff16"/><stop offset="0.3660" stop-color="#1bff0e"/><stop offset="0.9330" stop-color="#5fff01"/><stop offset="1.0000" stop-color="#68ff00"/></linearGradient><linearGradient id="i28" gradientUnits="userSpaceOnUse" x1="1244.0" y1="0" x2="1344.0" y2="0"><stop offset="0.0000" stop-color="#00ff17"/><stop offset="0.3750" stop-color="#1eff0e"/><stop offset="0.9150" stop-color="#62ff01"/><stop offset="1.0000" stop-color="#6fff00"/></linearGradient><linearGradient id="i29" gradientUnits="userSpaceOnUse" x1="1243.0" y1="0" x2="1346.0" y2="0"><stop offset="0.0000" stop-color="#00ff19"/><stop offset="0.3447" stop-color="#1bff10"/><stop offset="0.8689" stop-color="#5fff02"/><stop offset="1.0000" stop-color="#74ff00"/></linearGradient><linearGradient id="i30" gradientUnits="userSpaceOnUse" x1="1243.0" y1="0" x2="1349.0" y2="0"><stop offset="0.0000" stop-color="#00ff1a"/><stop offset="0.3443" stop-color="#1dff10"/><stop offset="0.8538" stop-color="#62ff03"/><stop offset="1.0000" stop-color="#7aff00"/></linearGradient><linearGradient id="i31" gradientUnits="userSpaceOnUse" x1="1242.0" y1="0" x2="1352.0" y2="0"><stop offset="0.0000" stop-color="#00ff1b"/><stop offset="0.3136" stop-color="#1bff12"/><stop offset="0.7955" stop-color="#5eff04"/><stop offset="1.0000" stop-color="#81ff00"/></linearGradient><linearGradient id="i32" gradientUnits="userSpaceOnUse" x1="1242.0" y1="0" x2="1355.0" y2="0"><stop offset="0.0000" stop-color="#00ff1c"/><stop offset="0.3230" stop-color="#1eff13"/><stop offset="0.7920" stop-color="#62ff05"/><stop offset="1.0000" stop-color="#88ff00"/></linearGradient><linearGradient id="i33" gradientUnits="userSpaceOnUse" x1="1241.0" y1="0" x2="1358.0" y2="0"><stop offset="0.0000" stop-color="#00ff1e"/><stop offset="0.2863" stop-color="#1aff15"/><stop offset="0.7308" stop-color="#5cff07"/><stop offset="1.0000" stop-color="#8fff00"/></linearGradient><linearGradient id="i34" gradientUnits="userSpaceOnUse" x1="1241.0" y1="0" x2="1361.0" y2="0"><stop offset="0.0000" stop-color="#00ff1f"/><stop offset="0.2958" stop-color="#1dff15"/><stop offset="0.7292" stop-color="#61ff07"/><stop offset="1.0000" stop-color="#97ff00"/></linearGradient><linearGradient id="i35" gradientUnits="userSpaceOnUse" x1="1240.0" y1="0" x2="1364.0" y2="0"><stop offset="0.0000" stop-color="#00ff20"/><stop offset="0.2621" stop-color="#1aff18"/><stop offset="0.6815" stop-color="#5cff09"/><stop offset="1.0000" stop-color="#9fff00"/></linearGradient><linearGradient id="i36" gradientUnits="userSpaceOnUse" x1="1240.0" y1="0" x2="1367.0" y2="0"><stop offset="0.0000" stop-color="#00ff22"/><stop offset="0.2717" stop-color="#1cff18"/><stop offset="0.6811" stop-color="#61ff0a"/><stop offset="1.0000" stop-color="#a7ff00"/></linearGradient><linearGradient id="i37" gradientUnits="userSpaceOnUse" x1="1239.0" y1="0" x2="1370.0" y2="0"><stop offset="0.0000" stop-color="#00ff23"/><stop offset="0.2481" stop-color="#1aff1a"/><stop offset="0.6374" stop-color="#5cff0c"/><stop offset="1.0000" stop-color="#afff00"/></linearGradient><linearGradient id="i38" gradientUnits="userSpaceOnUse" x1="1239.0" y1="0" x2="1373.0" y2="0"><stop offset="0.0000" stop-color="#00ff24"/><stop offset="0.2500" stop-color="#1cff1b"/><stop offset="0.6306" stop-color="#5fff0c"/><stop offset="1.0000" stop-color="#b8ff00"/></linearGradient><linearGradient id="i39" gradientUnits="userSpaceOnUse" x1="1239.0" y1="0" x2="1376.0" y2="0"><stop offset="0.0000" stop-color="#00ff26"/><stop offset="0.2591" stop-color="#1fff1c"/><stop offset="0.6314" stop-color="#64ff0d"/><stop offset="0.9818" stop-color="#bcff00"/><stop offset="1.0000" stop-color="#c1ff00"/></linearGradient><linearGradient id="i40" gradientUnits="userSpaceOnUse" x1="1238.0" y1="0" x2="1379.0" y2="0"><stop offset="0.0000" stop-color="#00ff27"/><stop offset="0.2376" stop-color="#1cff1e"/><stop offset="0.5922" stop-color="#60ff0f"/><stop offset="0.9326" stop-color="#b7ff02"/><stop offset="1.0000" stop-color="#cbff00"/></linearGradient><linearGradient id="i41" gradientUnits="userSpaceOnUse" x1="1238.0" y1="0" x2="1382.0" y2="0"><stop offset="0.0000" stop-color="#00ff29"/><stop offset="0.2396" stop-color="#1eff1f"/><stop offset="0.5868" stop-color="#63ff10"/><stop offset="0.9201" stop-color="#bcff02"/><stop offset="1.0000" stop-color="#d5ff00"/></linearGradient><linearGradient id="i42" gradientUnits="userSpaceOnUse" x1="1237.0" y1="0" x2="1385.0" y2="0"><stop offset="0.0000" stop-color="#00ff2a"/><stop offset="0.2196" stop-color="#1bff21"/><stop offset="0.5507" stop-color="#5eff12"/><stop offset="0.8750" stop-color="#b6ff04"/><stop offset="1.0000" stop-color="#dfff00"/></linearGradient><linearGradient id="i43" gradientUnits="userSpaceOnUse" x1="1237.0" y1="0" x2="1388.0" y2="0"><stop offset="0.0000" stop-color="#00ff2c"/><stop offset="0.2285" stop-color="#1fff22"/><stop offset="0.5530" stop-color="#63ff13"/><stop offset="0.8642" stop-color="#bbff05"/><stop offset="1.0000" stop-color="#e9ff00"/></linearGradient><linearGradient id="i44" gradientUnits="userSpaceOnUse" x1="1236.0" y1="0" x2="1390.0" y2="0"><stop offset="0.0000" stop-color="#00ff2d"/><stop offset="0.2045" stop-color="#1bff24"/><stop offset="0.5227" stop-color="#5eff15"/><stop offset="0.8279" stop-color="#b6ff07"/><stop offset="1.0000" stop-color="#f2ff00"/></linearGradient><linearGradient id="i45" gradientUnits="userSpaceOnUse" x1="1236.0" y1="0" x2="1393.0" y2="0"><stop offset="0.0000" stop-color="#00ff2f"/><stop offset="0.2134" stop-color="#1eff25"/><stop offset="0.5191" stop-color="#61ff16"/><stop offset="0.8185" stop-color="#bbff07"/><stop offset="1.0000" stop-color="#fdff00"/></linearGradient><linearGradient id="i46" gradientUnits="userSpaceOnUse" x1="1235.0" y1="0" x2="1396.0" y2="0"><stop offset="0.0000" stop-color="#00ff31"/><stop offset="0.1894" stop-color="#1aff28"/><stop offset="0.4876" stop-color="#5dff19"/><stop offset="0.7795" stop-color="#b5ff0a"/><stop offset="0.9783" stop-color="#fffe00"/><stop offset="1.0000" stop-color="#fff600"/></linearGradient><linearGradient id="i47" gradientUnits="userSpaceOnUse" x1="1235.0" y1="0" x2="1399.0" y2="0"><stop offset="0.0000" stop-color="#00ff32"/><stop offset="0.1982" stop-color="#1dff29"/><stop offset="0.4909" stop-color="#62ff1a"/><stop offset="0.7713" stop-color="#baff0b"/><stop offset="0.9543" stop-color="#fffd01"/><stop offset="1.0000" stop-color="#ffeb00"/></linearGradient><linearGradient id="i48" gradientUnits="userSpaceOnUse" x1="1234.0" y1="0" x2="1402.0" y2="0"><stop offset="0.0000" stop-color="#00ff34"/><stop offset="0.1815" stop-color="#1aff2b"/><stop offset="0.4613" stop-color="#5dff1c"/><stop offset="0.7351" stop-color="#b4ff0d"/><stop offset="0.9256" stop-color="#fffe03"/><stop offset="1.0000" stop-color="#ffe000"/></linearGradient><linearGradient id="i49" gradientUnits="userSpaceOnUse" x1="1234.0" y1="0" x2="1405.0" y2="0"><stop offset="0.0000" stop-color="#00ff36"/><stop offset="0.1842" stop-color="#1cff2d"/><stop offset="0.4591" stop-color="#60ff1e"/><stop offset="0.7222" stop-color="#b7ff0e"/><stop offset="0.9035" stop-color="#fffc04"/><stop offset="1.0000" stop-color="#ffd700"/></linearGradient><linearGradient id="i50" gradientUnits="userSpaceOnUse" x1="1233.0" y1="0" x2="1408.0" y2="0"><stop offset="0.0000" stop-color="#00ff38"/><stop offset="0.1686" stop-color="#1aff2f"/><stop offset="0.4371" stop-color="#5dff20"/><stop offset="0.6943" stop-color="#b4ff11"/><stop offset="0.8771" stop-color="#fffd06"/><stop offset="1.0000" stop-color="#ffcd00"/></linearGradient><linearGradient id="i51" gradientUnits="userSpaceOnUse" x1="1233.0" y1="0" x2="1411.0" y2="0"><stop offset="0.0000" stop-color="#00ff39"/><stop offset="0.1770" stop-color="#1dff30"/><stop offset="0.4354" stop-color="#60ff21"/><stop offset="0.6882" stop-color="#b9ff12"/><stop offset="0.8567" stop-color="#fffc07"/><stop offset="1.0000" stop-color="#ffc400"/></linearGradient><linearGradient id="i52" gradientUnits="userSpaceOnUse" x1="1232.0" y1="0" x2="1414.0" y2="0"><stop offset="0.0000" stop-color="#00ff3b"/><stop offset="0.1566" stop-color="#19ff33"/><stop offset="0.4093" stop-color="#5bff24"/><stop offset="0.6566" stop-color="#b3ff15"/><stop offset="0.8324" stop-color="#fffd09"/><stop offset="0.9863" stop-color="#ffc000"/><stop offset="1.0000" stop-color="#ffbc00"/></linearGradient><linearGradient id="i53" gradientUnits="userSpaceOnUse" x1="1232.0" y1="0" x2="1417.0" y2="0"><stop offset="0.0000" stop-color="#00ff3d"/><stop offset="0.1649" stop-color="#1cff34"/><stop offset="0.4135" stop-color="#60ff25"/><stop offset="0.6514" stop-color="#b8ff16"/><stop offset="0.8081" stop-color="#fffe0b"/><stop offset="0.9541" stop-color="#ffc201"/><stop offset="1.0000" stop-color="#ffb400"/></linearGradient><linearGradient id="i54" gradientUnits="userSpaceOnUse" x1="1231.0" y1="0" x2="1420.0" y2="0"><stop offset="0.0000" stop-color="#00ff3f"/><stop offset="0.1455" stop-color="#18ff37"/><stop offset="0.3836" stop-color="#59ff29"/><stop offset="0.6164" stop-color="#b0ff19"/><stop offset="0.7910" stop-color="#fffc0d"/><stop offset="0.9339" stop-color="#ffc102"/><stop offset="1.0000" stop-color="#ffac00"/></linearGradient><linearGradient id="i55" gradientUnits="userSpaceOnUse" x1="1231.0" y1="0" x2="1423.0" y2="0"><stop offset="0.0000" stop-color="#00ff41"/><stop offset="0.1536" stop-color="#1bff38"/><stop offset="0.3880" stop-color="#5fff2a"/><stop offset="0.6120" stop-color="#b5ff1a"/><stop offset="0.7682" stop-color="#fffe0f"/><stop offset="0.9089" stop-color="#ffc104"/><stop offset="1.0000" stop-color="#ffa500"/></linearGradient><linearGradient id="i56" gradientUnits="userSpaceOnUse" x1="1230.0" y1="0" x2="1426.0" y2="0"><stop offset="0.0000" stop-color="#00ff43"/><stop offset="0.1403" stop-color="#19ff3b"/><stop offset="0.3648" stop-color="#5aff2d"/><stop offset="0.5842" stop-color="#afff1d"/><stop offset="0.7526" stop-color="#fffc10"/><stop offset="0.8903" stop-color="#ffc005"/><stop offset="1.0000" stop-color="#ff9d00"/></linearGradient><linearGradient id="i57" gradientUnits="userSpaceOnUse" x1="1230.0" y1="0" x2="1429.0" y2="0"><stop offset="0.0000" stop-color="#00ff45"/><stop offset="0.1432" stop-color="#1bff3d"/><stop offset="0.3643" stop-color="#5dff2e"/><stop offset="0.5804" stop-color="#b5ff1f"/><stop offset="0.7312" stop-color="#fffd13"/><stop offset="0.8668" stop-color="#ffc006"/><stop offset="1.0000" stop-color="#ff9700"/></linearGradient><linearGradient id="i58" gradientUnits="userSpaceOnUse" x1="1229.0" y1="0" x2="1431.0" y2="0"><stop offset="0.0000" stop-color="#00ff47"/><stop offset="0.1312" stop-color="#18ff3f"/><stop offset="0.3490" stop-color="#5aff31"/><stop offset="0.5619" stop-color="#b1ff21"/><stop offset="0.7153" stop-color="#fffe15"/><stop offset="0.8441" stop-color="#ffc308"/><stop offset="1.0000" stop-color="#ff9100"/></linearGradient><linearGradient id="i59" gradientUnits="userSpaceOnUse" x1="1229.0" y1="0" x2="1434.0" y2="0"><stop offset="0.0000" stop-color="#00ff49"/><stop offset="0.1390" stop-color="#1bff41"/><stop offset="0.3537" stop-color="#5fff32"/><stop offset="0.5585" stop-color="#b6ff23"/><stop offset="0.7000" stop-color="#fffd17"/><stop offset="0.8268" stop-color="#ffc10a"/><stop offset="1.0000" stop-color="#ff8b00"/></linearGradient><linearGradient id="i60" gradientUnits="userSpaceOnUse" x1="1228.0" y1="0" x2="1437.0" y2="0"><stop offset="0.0000" stop-color="#00ff4c"/><stop offset="0.1220" stop-color="#17ff44"/><stop offset="0.3278" stop-color="#58ff36"/><stop offset="0.5287" stop-color="#aeff27"/><stop offset="0.6818" stop-color="#fffe1a"/><stop offset="0.8062" stop-color="#ffc10b"/><stop offset="0.9737" stop-color="#ff8c01"/><stop offset="1.0000" stop-color="#ff8500"/></linearGradient><linearGradient id="i61" gradientUnits="userSpaceOnUse" x1="1228.0" y1="0" x2="1440.0" y2="0"><stop offset="0.0000" stop-color="#00ff4e"/><stop offset="0.1297" stop-color="#1aff45"/><stop offset="0.3325" stop-color="#5dff37"/><stop offset="0.5307" stop-color="#b6ff28"/><stop offset="0.6675" stop-color="#fffc1c"/><stop offset="0.7901" stop-color="#ffc00d"/><stop offset="0.9552" stop-color="#ff8a01"/><stop offset="1.0000" stop-color="#ff7f00"/></linearGradient><linearGradient id="i62" gradientUnits="userSpaceOnUse" x1="1228.0" y1="0" x2="1443.0" y2="0"><stop offset="0.0000" stop-color="#00ff50"/><stop offset="0.1372" stop-color="#1eff47"/><stop offset="0.3372" stop-color="#63ff39"/><stop offset="0.5279" stop-color="#bbff29"/><stop offset="0.6488" stop-color="#fffd1f"/><stop offset="0.7698" stop-color="#ffc00f"/><stop offset="0.9326" stop-color="#ff8a02"/><stop offset="1.0000" stop-color="#ff7a00"/></linearGradient><linearGradient id="i63" gradientUnits="userSpaceOnUse" x1="1227.0" y1="0" x2="1446.0" y2="0"><stop offset="0.0000" stop-color="#00ff52"/><stop offset="0.1210" stop-color="#1aff4a"/><stop offset="0.3128" stop-color="#5bff3d"/><stop offset="0.5000" stop-color="#b3ff2d"/><stop offset="0.6324" stop-color="#fffe21"/><stop offset="0.7466" stop-color="#ffc311"/><stop offset="0.9018" stop-color="#ff8d04"/><stop offset="1.0000" stop-color="#ff7400"/></linearGradient><linearGradient id="i64" gradientUnits="userSpaceOnUse" x1="1227.0" y1="0" x2="1449.0" y2="0"><stop offset="0.0000" stop-color="#00ff55"/><stop offset="0.1284" stop-color="#1dff4c"/><stop offset="0.3176" stop-color="#61ff3e"/><stop offset="0.4977" stop-color="#b8ff2f"/><stop offset="0.6194" stop-color="#fffd24"/><stop offset="0.7320" stop-color="#ffc113"/><stop offset="0.8851" stop-color="#ff8b05"/><stop offset="1.0000" stop-color="#ff6f00"/></linearGradient><linearGradient id="i65" gradientUnits="userSpaceOnUse" x1="1226.0" y1="0" x2="1452.0" y2="0"><stop offset="0.0000" stop-color="#00ff57"/><stop offset="0.1173" stop-color="#1aff4f"/><stop offset="0.2987" stop-color="#5cff42"/><stop offset="0.4757" stop-color="#b2ff33"/><stop offset="0.6040" stop-color="#fffe27"/><stop offset="0.7146" stop-color="#ffc215"/><stop offset="0.8650" stop-color="#ff8b07"/><stop offset="1.0000" stop-color="#ff6a00"/></linearGradient><linearGradient id="i66" gradientUnits="userSpaceOnUse" x1="1226.0" y1="0" x2="1455.0" y2="0"><stop offset="0.0000" stop-color="#00ff5a"/><stop offset="0.1201" stop-color="#1cff51"/><stop offset="0.2991" stop-color="#5fff44"/><stop offset="0.4738" stop-color="#b8ff35"/><stop offset="0.5917" stop-color="#fffc29"/><stop offset="0.7009" stop-color="#ffc017"/><stop offset="0.8493" stop-color="#ff8a08"/><stop offset="1.0000" stop-color="#ff6500"/></linearGradient><linearGradient id="i67" gradientUnits="userSpaceOnUse" x1="1225.0" y1="0" x2="1458.0" y2="0"><stop offset="0.0000" stop-color="#00ff5c"/><stop offset="0.1094" stop-color="#19ff55"/><stop offset="0.2854" stop-color="#5cff47"/><stop offset="0.4571" stop-color="#b4ff38"/><stop offset="0.5773" stop-color="#fffd2c"/><stop offset="0.6845" stop-color="#ffc019"/><stop offset="0.8262" stop-color="#ff8b0a"/><stop offset="1.0000" stop-color="#ff6100"/></linearGradient><linearGradient id="i68" gradientUnits="userSpaceOnUse" x1="1225.0" y1="0" x2="1461.0" y2="0"><stop offset="0.0000" stop-color="#00ff5f"/><stop offset="0.1123" stop-color="#1bff57"/><stop offset="0.2818" stop-color="#5eff49"/><stop offset="0.4470" stop-color="#b5ff3b"/><stop offset="0.5614" stop-color="#ffff30"/><stop offset="0.6631" stop-color="#ffc31c"/><stop offset="0.7987" stop-color="#ff8e0c"/><stop offset="0.9894" stop-color="#ff5e00"/><stop offset="1.0000" stop-color="#ff5c00"/></linearGradient><linearGradient id="i69" gradientUnits="userSpaceOnUse" x1="1224.0" y1="0" x2="1464.0" y2="0"><stop offset="0.0000" stop-color="#00ff61"/><stop offset="0.1021" stop-color="#18ff5a"/><stop offset="0.2687" stop-color="#5aff4d"/><stop offset="0.4313" stop-color="#b0ff3e"/><stop offset="0.5521" stop-color="#fffd32"/><stop offset="0.6521" stop-color="#ffc11e"/><stop offset="0.7896" stop-color="#ff8b0d"/><stop offset="0.9812" stop-color="#ff5c00"/><stop offset="1.0000" stop-color="#ff5800"/></linearGradient><linearGradient id="i70" gradientUnits="userSpaceOnUse" x1="1224.0" y1="0" x2="1467.0" y2="0"><stop offset="0.0000" stop-color="#00ff64"/><stop offset="0.1091" stop-color="#1cff5c"/><stop offset="0.2737" stop-color="#60ff4f"/><stop offset="0.4300" stop-color="#b6ff41"/><stop offset="0.5370" stop-color="#fffe36"/><stop offset="0.6358" stop-color="#ffc221"/><stop offset="0.7675" stop-color="#ff8c0f"/><stop offset="0.9527" stop-color="#ff5d01"/><stop offset="1.0000" stop-color="#ff5400"/></linearGradient><linearGradient id="i71" gradientUnits="userSpaceOnUse" x1="1223.0" y1="0" x2="1470.0" y2="0"><stop offset="0.0000" stop-color="#00ff67"/><stop offset="0.0951" stop-color="#17ff60"/><stop offset="0.2530" stop-color="#58ff53"/><stop offset="0.4069" stop-color="#adff45"/><stop offset="0.5283" stop-color="#fffc38"/><stop offset="0.6255" stop-color="#ffc022"/><stop offset="0.7551" stop-color="#ff8b10"/><stop offset="0.9372" stop-color="#ff5c02"/><stop offset="1.0000" stop-color="#ff5000"/></linearGradient><linearGradient id="i72" gradientUnits="userSpaceOnUse" x1="1223.0" y1="0" x2="1473.0" y2="0"><stop offset="0.0000" stop-color="#00ff6a"/><stop offset="0.1020" stop-color="#1bff62"/><stop offset="0.2580" stop-color="#5eff55"/><stop offset="0.4100" stop-color="#b6ff47"/><stop offset="0.5140" stop-color="#fffe3c"/><stop offset="0.6100" stop-color="#ffc025"/><stop offset="0.7380" stop-color="#ff8a12"/><stop offset="0.9180" stop-color="#ff5b03"/><stop offset="1.0000" stop-color="#ff4c00"/></linearGradient><linearGradient id="i73" gradientUnits="userSpaceOnUse" x1="1222.0" y1="0" x2="1475.0" y2="0"><stop offset="0.0000" stop-color="#00ff6d"/><stop offset="0.0929" stop-color="#18ff66"/><stop offset="0.2470" stop-color="#5aff59"/><stop offset="0.3972" stop-color="#b1ff4b"/><stop offset="0.5040" stop-color="#ffff40"/><stop offset="0.5949" stop-color="#ffc329"/><stop offset="0.7174" stop-color="#ff8d15"/><stop offset="0.8874" stop-color="#ff5e05"/><stop offset="1.0000" stop-color="#ff4900"/></linearGradient><linearGradient id="i74" gradientUnits="userSpaceOnUse" x1="1222.0" y1="0" x2="1478.0" y2="0"><stop offset="0.0000" stop-color="#00ff6f"/><stop offset="0.0957" stop-color="#1aff68"/><stop offset="0.2441" stop-color="#5cff5c"/><stop offset="0.3887" stop-color="#b2ff4e"/><stop offset="0.4941" stop-color="#fffd42"/><stop offset="0.5840" stop-color="#ffc12b"/><stop offset="0.7051" stop-color="#ff8c16"/><stop offset="0.8730" stop-color="#ff5d06"/><stop offset="1.0000" stop-color="#ff4600"/></linearGradient><linearGradient id="i75" gradientUnits="userSpaceOnUse" x1="1221.0" y1="0" x2="1481.0" y2="0"><stop offset="0.0000" stop-color="#00ff73"/><stop offset="0.0865" stop-color="#17ff6c"/><stop offset="0.2327" stop-color="#58ff60"/><stop offset="0.3750" stop-color="#aeff52"/><stop offset="0.4827" stop-color="#fffe47"/><stop offset="0.5712" stop-color="#ffc22e"/><stop offset="0.6904" stop-color="#ff8c19"/><stop offset="0.8558" stop-color="#ff5d07"/><stop offset="1.0000" stop-color="#ff4200"/></linearGradient><linearGradient id="i76" gradientUnits="userSpaceOnUse" x1="1221.0" y1="0" x2="1484.0" y2="0"><stop offset="0.0000" stop-color="#00ff75"/><stop offset="0.0932" stop-color="#1bff6e"/><stop offset="0.2376" stop-color="#5eff62"/><stop offset="0.3745" stop-color="#b4ff55"/><stop offset="0.4734" stop-color="#fffd49"/><stop offset="0.5608" stop-color="#ffc030"/><stop offset="0.6787" stop-color="#ff8a1a"/><stop offset="0.8422" stop-color="#ff5b08"/><stop offset="1.0000" stop-color="#ff3f00"/></linearGradient><linearGradient id="i77" gradientUnits="userSpaceOnUse" x1="1220.0" y1="0" x2="1487.0" y2="0"><stop offset="0.0000" stop-color="#00ff79"/><stop offset="0.0805" stop-color="#16ff73"/><stop offset="0.2191" stop-color="#56ff67"/><stop offset="0.3539" stop-color="#aaff5a"/><stop offset="0.4625" stop-color="#fffe4e"/><stop offset="0.5449" stop-color="#ffc334"/><stop offset="0.6573" stop-color="#ff8d1d"/><stop offset="0.8146" stop-color="#ff5e0b"/><stop offset="1.0000" stop-color="#ff3c00"/></linearGradient><linearGradient id="i78" gradientUnits="userSpaceOnUse" x1="1220.0" y1="0" x2="1490.0" y2="0"><stop offset="0.0000" stop-color="#00ff7c"/><stop offset="0.0870" stop-color="#1aff75"/><stop offset="0.2241" stop-color="#5cff69"/><stop offset="0.3574" stop-color="#b3ff5c"/><stop offset="0.4537" stop-color="#fffc51"/><stop offset="0.5352" stop-color="#ffc136"/><stop offset="0.6463" stop-color="#ff8b1f"/><stop offset="0.8019" stop-color="#ff5c0c"/><stop offset="1.0000" stop-color="#ff3800"/></linearGradient><linearGradient id="i79" gradientUnits="userSpaceOnUse" x1="1219.0" y1="0" x2="1493.0" y2="0"><stop offset="0.0000" stop-color="#00ff7f"/><stop offset="0.0748" stop-color="#15ff7a"/><stop offset="0.2062" stop-color="#54ff6e"/><stop offset="0.3376" stop-color="#a9ff62"/><stop offset="0.4434" stop-color="#fffd55"/><stop offset="0.5237" stop-color="#ffc13a"/><stop offset="0.6332" stop-color="#ff8b21"/><stop offset="0.7865" stop-color="#ff5c0d"/><stop offset="1.0000" stop-color="#ff3500"/></linearGradient><linearGradient id="i80" gradientUnits="userSpaceOnUse" x1="1219.0" y1="0" x2="1496.0" y2="0"><stop offset="0.0000" stop-color="#00ff82"/><stop offset="0.0812" stop-color="#19ff7c"/><stop offset="0.2112" stop-color="#5aff71"/><stop offset="0.3375" stop-color="#b0ff65"/><stop offset="0.4314" stop-color="#ffff5a"/><stop offset="0.5108" stop-color="#ffc23d"/><stop offset="0.6155" stop-color="#ff8d24"/><stop offset="0.7635" stop-color="#ff5d0f"/><stop offset="0.9801" stop-color="#ff3500"/><stop offset="1.0000" stop-color="#ff3300"/></linearGradient><linearGradient id="i81" gradientUnits="userSpaceOnUse" x1="1218.0" y1="0" x2="1499.0" y2="0"><stop offset="0.0000" stop-color="#00ff86"/><stop offset="0.0730" stop-color="#15ff80"/><stop offset="0.2011" stop-color="#56ff76"/><stop offset="0.3256" stop-color="#abff69"/><stop offset="0.4253" stop-color="#fffd5d"/><stop offset="0.5036" stop-color="#ffc040"/><stop offset="0.6068" stop-color="#ff8b26"/><stop offset="0.7527" stop-color="#ff5c11"/><stop offset="0.9662" stop-color="#ff3401"/><stop offset="1.0000" stop-color="#ff3000"/></linearGradient><linearGradient id="i82" gradientUnits="userSpaceOnUse" x1="1218.0" y1="0" x2="1502.0" y2="0"><stop offset="0.0000" stop-color="#00ff89"/><stop offset="0.0757" stop-color="#18ff84"/><stop offset="0.1989" stop-color="#58ff79"/><stop offset="0.3222" stop-color="#afff6d"/><stop offset="0.4137" stop-color="#fffe62"/><stop offset="0.4877" stop-color="#ffc344"/><stop offset="0.5898" stop-color="#ff8c29"/><stop offset="0.7306" stop-color="#ff5d13"/><stop offset="0.9384" stop-color="#ff3502"/><stop offset="1.0000" stop-color="#ff2d00"/></linearGradient><linearGradient id="i83" gradientUnits="userSpaceOnUse" x1="1218.0" y1="0" x2="1505.0" y2="0"><stop offset="0.0000" stop-color="#00ff8d"/><stop offset="0.0819" stop-color="#1cff87"/><stop offset="0.2038" stop-color="#5eff7c"/><stop offset="0.3223" stop-color="#b5ff70"/><stop offset="0.4059" stop-color="#fffc66"/><stop offset="0.4791" stop-color="#ffc147"/><stop offset="0.5801" stop-color="#ff8b2b"/><stop offset="0.7195" stop-color="#ff5c14"/><stop offset="0.9251" stop-color="#ff3403"/><stop offset="1.0000" stop-color="#ff2a00"/></linearGradient><linearGradient id="i84" gradientUnits="userSpaceOnUse" x1="1217.0" y1="0" x2="1508.0" y2="0"><stop offset="0.0000" stop-color="#00ff91"/><stop offset="0.0739" stop-color="#18ff8b"/><stop offset="0.1942" stop-color="#5aff81"/><stop offset="0.3110" stop-color="#b1ff75"/><stop offset="0.3969" stop-color="#fffe6b"/><stop offset="0.4691" stop-color="#ffc24b"/><stop offset="0.5653" stop-color="#ff8c2f"/><stop offset="0.6993" stop-color="#ff5d17"/><stop offset="0.8952" stop-color="#ff3605"/><stop offset="1.0000" stop-color="#ff2800"/></linearGradient><linearGradient id="i85" gradientUnits="userSpaceOnUse" x1="1217.0" y1="0" x2="1511.0" y2="0"><stop offset="0.0000" stop-color="#00ff94"/><stop offset="0.0765" stop-color="#1bff8f"/><stop offset="0.1956" stop-color="#5fff84"/><stop offset="0.3078" stop-color="#b5ff79"/><stop offset="0.3861" stop-color="#ffff70"/><stop offset="0.4575" stop-color="#ffc24f"/><stop offset="0.5527" stop-color="#ff8c32"/><stop offset="0.6854" stop-color="#ff5d19"/><stop offset="0.8793" stop-color="#ff3506"/><stop offset="1.0000" stop-color="#ff2500"/></linearGradient><linearGradient id="i86" gradientUnits="userSpaceOnUse" x1="1216.0" y1="0" x2="1514.0" y2="0"><stop offset="0.0000" stop-color="#00ff98"/><stop offset="0.0688" stop-color="#17ff93"/><stop offset="0.1829" stop-color="#58ff8a"/><stop offset="0.2936" stop-color="#adff7f"/><stop offset="0.3809" stop-color="#fffd74"/><stop offset="0.4513" stop-color="#ffc052"/><stop offset="0.5453" stop-color="#ff8a34"/><stop offset="0.6762" stop-color="#ff5c1a"/><stop offset="0.8674" stop-color="#ff3406"/><stop offset="1.0000" stop-color="#ff2300"/></linearGradient><linearGradient id="i87" gradientUnits="userSpaceOnUse" x1="1216.0" y1="0" x2="1517.0" y2="0"><stop offset="0.0000" stop-color="#00ff9c"/><stop offset="0.0748" stop-color="#1cff97"/><stop offset="0.1877" stop-color="#5fff8d"/><stop offset="0.2973" stop-color="#b7ff82"/><stop offset="0.3704" stop-color="#fffe7a"/><stop offset="0.4369" stop-color="#ffc357"/><stop offset="0.5266" stop-color="#ff8d38"/><stop offset="0.6528" stop-color="#ff5e1e"/><stop offset="0.8355" stop-color="#ff3609"/><stop offset="1.0000" stop-color="#ff2100"/></linearGradient><linearGradient id="i88" gradientUnits="userSpaceOnUse" x1="1215.0" y1="0" x2="1519.0" y2="0"><stop offset="0.0000" stop-color="#00ffa0"/><stop offset="0.0641" stop-color="#16ff9c"/><stop offset="0.1727" stop-color="#56ff93"/><stop offset="0.2812" stop-color="#acff88"/><stop offset="0.3668" stop-color="#fffc7e"/><stop offset="0.4326" stop-color="#ffc15a"/><stop offset="0.5214" stop-color="#ff8c3a"/><stop offset="0.6464" stop-color="#ff5d1f"/><stop offset="0.8306" stop-color="#ff3509"/><stop offset="1.0000" stop-color="#ff1f00"/></linearGradient><linearGradient id="i89" gradientUnits="userSpaceOnUse" x1="1215.0" y1="0" x2="1522.0" y2="0"><stop offset="0.0000" stop-color="#00ffa5"/><stop offset="0.0700" stop-color="#1bff9f"/><stop offset="0.1775" stop-color="#5dff96"/><stop offset="0.2818" stop-color="#b3ff8c"/><stop offset="0.3567" stop-color="#fffe84"/><stop offset="0.4218" stop-color="#ffc25e"/><stop offset="0.5098" stop-color="#ff8c3e"/><stop offset="0.6336" stop-color="#ff5c21"/><stop offset="0.8127" stop-color="#ff350b"/><stop offset="1.0000" stop-color="#ff1d00"/></linearGradient><linearGradient id="i90" gradientUnits="userSpaceOnUse" x1="1214.0" y1="0" x2="1525.0" y2="0"><stop offset="0.0000" stop-color="#00ffa9"/><stop offset="0.0595" stop-color="#15ffa5"/><stop offset="0.1656" stop-color="#56ff9c"/><stop offset="0.2685" stop-color="#abff92"/><stop offset="0.3489" stop-color="#ffff8a"/><stop offset="0.4132" stop-color="#ffc263"/><stop offset="0.4968" stop-color="#ff8d42"/><stop offset="0.6158" stop-color="#ff5e25"/><stop offset="0.7894" stop-color="#ff360d"/><stop offset="1.0000" stop-color="#ff1b00"/></linearGradient><linearGradient id="i91" gradientUnits="userSpaceOnUse" x1="1214.0" y1="0" x2="1528.0" y2="0"><stop offset="0.0000" stop-color="#00ffad"/><stop offset="0.0653" stop-color="#1affa8"/><stop offset="0.1672" stop-color="#5affa0"/><stop offset="0.2691" stop-color="#b2ff97"/><stop offset="0.3424" stop-color="#fffd8e"/><stop offset="0.4061" stop-color="#ffc066"/><stop offset="0.4889" stop-color="#ff8b44"/><stop offset="0.6067" stop-color="#ff5c26"/><stop offset="0.7787" stop-color="#ff350e"/><stop offset="1.0000" stop-color="#ff1900"/></linearGradient><linearGradient id="i92" gradientUnits="userSpaceOnUse" x1="1213.0" y1="0" x2="1531.0" y2="0"><stop offset="0.0000" stop-color="#00ffb2"/><stop offset="0.0582" stop-color="#16ffae"/><stop offset="0.1588" stop-color="#56ffa6"/><stop offset="0.2563" stop-color="#aaff9d"/><stop offset="0.3349" stop-color="#ffff95"/><stop offset="0.3947" stop-color="#ffc36d"/><stop offset="0.4764" stop-color="#ff8d49"/><stop offset="0.5896" stop-color="#ff5e2a"/><stop offset="0.7563" stop-color="#ff3610"/><stop offset="1.0000" stop-color="#ff1700"/></linearGradient><linearGradient id="i93" gradientUnits="userSpaceOnUse" x1="1213.0" y1="0" x2="1534.0" y2="0"><stop offset="0.0000" stop-color="#00ffb6"/><stop offset="0.0607" stop-color="#18ffb2"/><stop offset="0.1604" stop-color="#5affaa"/><stop offset="0.2570" stop-color="#b1ffa2"/><stop offset="0.3287" stop-color="#fffd99"/><stop offset="0.3879" stop-color="#ffc170"/><stop offset="0.4688" stop-color="#ff8b4b"/><stop offset="0.5810" stop-color="#ff5c2b"/><stop offset="0.7461" stop-color="#ff3511"/><stop offset="1.0000" stop-color="#ff1500"/></linearGradient><linearGradient id="i94" gradientUnits="userSpaceOnUse" x1="1212.0" y1="0" x2="1537.0" y2="0"><stop offset="0.0000" stop-color="#00ffbb"/><stop offset="0.0538" stop-color="#15ffb7"/><stop offset="0.1492" stop-color="#53ffb0"/><stop offset="0.2446" stop-color="#a8ffa8"/><stop offset="0.3215" stop-color="#fffea0"/><stop offset="0.3800" stop-color="#ffc275"/><stop offset="0.4569" stop-color="#ff8d50"/><stop offset="0.5646" stop-color="#ff5e2f"/><stop offset="0.7246" stop-color="#ff3614"/><stop offset="0.9738" stop-color="#ff1501"/><stop offset="1.0000" stop-color="#ff1300"/></linearGradient><linearGradient id="i95" gradientUnits="userSpaceOnUse" x1="1212.0" y1="0" x2="1540.0" y2="0"><stop offset="0.0000" stop-color="#00ffc0"/><stop offset="0.0595" stop-color="#19ffbc"/><stop offset="0.1540" stop-color="#5affb5"/><stop offset="0.2454" stop-color="#b0ffad"/><stop offset="0.3125" stop-color="#feffa7"/><stop offset="0.3735" stop-color="#ffc078"/><stop offset="0.4497" stop-color="#ff8b52"/><stop offset="0.5564" stop-color="#ff5d31"/><stop offset="0.7149" stop-color="#ff3515"/><stop offset="0.9619" stop-color="#ff1501"/><stop offset="1.0000" stop-color="#ff1100"/></linearGradient><linearGradient id="i96" gradientUnits="userSpaceOnUse" x1="1211.0" y1="0" x2="1543.0" y2="0"><stop offset="0.0000" stop-color="#00ffc5"/><stop offset="0.0497" stop-color="#13ffc2"/><stop offset="0.1401" stop-color="#51ffbc"/><stop offset="0.2304" stop-color="#a4ffb4"/><stop offset="0.3087" stop-color="#fffdac"/><stop offset="0.3660" stop-color="#ffc07e"/><stop offset="0.4413" stop-color="#ff8b56"/><stop offset="0.5467" stop-color="#ff5c33"/><stop offset="0.7003" stop-color="#ff3517"/><stop offset="0.9413" stop-color="#ff1502"/><stop offset="1.0000" stop-color="#ff1000"/></linearGradient><linearGradient id="i97" gradientUnits="userSpaceOnUse" x1="1211.0" y1="0" x2="1546.0" y2="0"><stop offset="0.0000" stop-color="#00ffca"/><stop offset="0.0552" stop-color="#18ffc7"/><stop offset="0.1448" stop-color="#58ffc1"/><stop offset="0.2343" stop-color="#afffb9"/><stop offset="0.3000" stop-color="#ffffb4"/><stop offset="0.3537" stop-color="#ffc386"/><stop offset="0.4254" stop-color="#ff8e5d"/><stop offset="0.5269" stop-color="#ff5f38"/><stop offset="0.6731" stop-color="#ff371b"/><stop offset="0.9030" stop-color="#ff1604"/><stop offset="1.0000" stop-color="#ff0e00"/></linearGradient><linearGradient id="i98" gradientUnits="userSpaceOnUse" x1="1210.0" y1="0" x2="1549.0" y2="0"><stop offset="0.0000" stop-color="#00ffcf"/><stop offset="0.0487" stop-color="#14ffcc"/><stop offset="0.1372" stop-color="#53ffc7"/><stop offset="0.2227" stop-color="#a6ffc0"/><stop offset="0.2965" stop-color="#fffdb8"/><stop offset="0.3496" stop-color="#ffc189"/><stop offset="0.4204" stop-color="#ff8c5f"/><stop offset="0.5206" stop-color="#ff5d3a"/><stop offset="0.6681" stop-color="#ff351c"/><stop offset="0.8982" stop-color="#ff1504"/><stop offset="1.0000" stop-color="#ff0d00"/></linearGradient><linearGradient id="i99" gradientUnits="userSpaceOnUse" x1="1210.0" y1="0" x2="1552.0" y2="0"><stop offset="0.0000" stop-color="#00ffd5"/><stop offset="0.0512" stop-color="#17ffd2"/><stop offset="0.1389" stop-color="#58ffcc"/><stop offset="0.2237" stop-color="#aeffc6"/><stop offset="0.2880" stop-color="#fffec1"/><stop offset="0.3406" stop-color="#ffc28f"/><stop offset="0.4108" stop-color="#ff8c64"/><stop offset="0.5073" stop-color="#ff5e3e"/><stop offset="0.6506" stop-color="#ff361e"/><stop offset="0.8728" stop-color="#ff1606"/><stop offset="1.0000" stop-color="#ff0b00"/></linearGradient><linearGradient id="i100" gradientUnits="userSpaceOnUse" x1="1209.0" y1="0" x2="1555.0" y2="0"><stop offset="0.0000" stop-color="#00ffda"/><stop offset="0.0448" stop-color="#13ffd8"/><stop offset="0.1286" stop-color="#50ffd3"/><stop offset="0.2124" stop-color="#a5ffce"/><stop offset="0.2847" stop-color="#fffcc6"/><stop offset="0.3367" stop-color="#ffc093"/><stop offset="0.4061" stop-color="#ff8a66"/><stop offset="0.5043" stop-color="#ff5b3f"/><stop offset="0.6460" stop-color="#ff341f"/><stop offset="0.8685" stop-color="#ff1406"/><stop offset="1.0000" stop-color="#ff0a00"/></linearGradient><linearGradient id="i101" gradientUnits="userSpaceOnUse" x1="1209.0" y1="0" x2="1558.0" y2="0"><stop offset="0.0000" stop-color="#00ffe0"/><stop offset="0.0501" stop-color="#17ffdd"/><stop offset="0.1332" stop-color="#58ffd9"/><stop offset="0.2135" stop-color="#adffd4"/><stop offset="0.2765" stop-color="#fffece"/><stop offset="0.3252" stop-color="#ffc39c"/><stop offset="0.3911" stop-color="#ff8e6e"/><stop offset="0.4828" stop-color="#ff5f46"/><stop offset="0.6175" stop-color="#ff3724"/><stop offset="0.8266" stop-color="#ff170a"/><stop offset="1.0000" stop-color="#ff0800"/></linearGradient><linearGradient id="i102" gradientUnits="userSpaceOnUse" x1="1208.0" y1="0" x2="1561.0" y2="0"><stop offset="0.0000" stop-color="#00ffe6"/><stop offset="0.0411" stop-color="#11ffe4"/><stop offset="0.1204" stop-color="#4effe0"/><stop offset="0.1997" stop-color="#a0ffdc"/><stop offset="0.2705" stop-color="#ffffd7"/><stop offset="0.3215" stop-color="#ffc1a0"/><stop offset="0.3867" stop-color="#ff8c71"/><stop offset="0.4773" stop-color="#ff5e48"/><stop offset="0.6105" stop-color="#ff3625"/><stop offset="0.8173" stop-color="#ff160a"/><stop offset="1.0000" stop-color="#ff0700"/></linearGradient><linearGradient id="i103" gradientUnits="userSpaceOnUse" x1="1208.0" y1="0" x2="1563.0" y2="0"><stop offset="0.0000" stop-color="#00ffec"/><stop offset="0.0465" stop-color="#16ffea"/><stop offset="0.1254" stop-color="#55ffe6"/><stop offset="0.2042" stop-color="#abffe2"/><stop offset="0.2662" stop-color="#fffddd"/><stop offset="0.3141" stop-color="#ffc1a6"/><stop offset="0.3789" stop-color="#ff8c76"/><stop offset="0.4690" stop-color="#ff5d4b"/><stop offset="0.6014" stop-color="#ff3527"/><stop offset="0.8070" stop-color="#ff150b"/><stop offset="1.0000" stop-color="#ff0600"/></linearGradient><linearGradient id="i104" gradientUnits="userSpaceOnUse" x1="1207.0" y1="0" x2="1566.0" y2="0"><stop offset="0.0000" stop-color="#00fff2"/><stop offset="0.0376" stop-color="#10fff0"/><stop offset="0.1128" stop-color="#4bffee"/><stop offset="0.1908" stop-color="#9fffea"/><stop offset="0.2604" stop-color="#ffffe6"/><stop offset="0.3078" stop-color="#ffc2ad"/><stop offset="0.3719" stop-color="#ff8c7a"/><stop offset="0.4610" stop-color="#ff5d4e"/><stop offset="0.5919" stop-color="#ff3429"/><stop offset="0.7953" stop-color="#ff150d"/><stop offset="1.0000" stop-color="#ff0500"/></linearGradient><linearGradient id="i105" gradientUnits="userSpaceOnUse" x1="1207.0" y1="0" x2="1569.0" y2="0"><stop offset="0.0000" stop-color="#00fff8"/><stop offset="0.0428" stop-color="#15fff7"/><stop offset="0.1174" stop-color="#53fff4"/><stop offset="0.1920" stop-color="#a7fff2"/><stop offset="0.2555" stop-color="#fffcec"/><stop offset="0.3025" stop-color="#ffc0b2"/><stop offset="0.3660" stop-color="#ff8a7e"/><stop offset="0.4544" stop-color="#ff5b51"/><stop offset="0.5843" stop-color="#ff332b"/><stop offset="0.7859" stop-color="#ff140d"/><stop offset="1.0000" stop-color="#ff0400"/></linearGradient><linearGradient id="i106" gradientUnits="userSpaceOnUse" x1="1207.0" y1="0" x2="1572.0" y2="0"><stop offset="0.0000" stop-color="#00ffff"/><stop offset="0.0479" stop-color="#1afffd"/><stop offset="0.1219" stop-color="#5bfffb"/><stop offset="0.1959" stop-color="#b3fff9"/><stop offset="0.2479" stop-color="#fffef6"/><stop offset="0.2918" stop-color="#ffc3bc"/><stop offset="0.3521" stop-color="#ff8d87"/><stop offset="0.4370" stop-color="#ff5e57"/><stop offset="0.5603" stop-color="#ff3630"/><stop offset="0.7521" stop-color="#ff1611"/><stop offset="1.0000" stop-color="#ff0300"/></linearGradient><linearGradient id="i107" gradientUnits="userSpaceOnUse" x1="1206.0" y1="0" x2="1575.0" y2="0"><stop offset="0.0000" stop-color="#00f9ff"/><stop offset="0.0420" stop-color="#15faff"/><stop offset="0.1152" stop-color="#54fbff"/><stop offset="0.1856" stop-color="#a7fdff"/><stop offset="0.2453" stop-color="#fffbfc"/><stop offset="0.2886" stop-color="#ffc1c1"/><stop offset="0.3482" stop-color="#ff8b8a"/><stop offset="0.4295" stop-color="#ff5d5b"/><stop offset="0.5488" stop-color="#ff3633"/><stop offset="0.7331" stop-color="#ff1613"/><stop offset="1.0000" stop-color="#ff0200"/></linearGradient><linearGradient id="i108" gradientUnits="userSpaceOnUse" x1="1206.0" y1="0" x2="1578.0" y2="0"><stop offset="0.0000" stop-color="#00f2ff"/><stop offset="0.0470" stop-color="#19f3ff"/><stop offset="0.1196" stop-color="#5af4ff"/><stop offset="0.1895" stop-color="#aef5ff"/><stop offset="0.2433" stop-color="#fff5fe"/><stop offset="0.2863" stop-color="#ffbcc2"/><stop offset="0.3454" stop-color="#ff878b"/><stop offset="0.4261" stop-color="#ff5a5c"/><stop offset="0.5444" stop-color="#ff3434"/><stop offset="0.7272" stop-color="#ff1514"/><stop offset="1.0000" stop-color="#ff0100"/></linearGradient><linearGradient id="i109" gradientUnits="userSpaceOnUse" x1="1205.0" y1="0" x2="1581.0" y2="0"><stop offset="0.0000" stop-color="#00ecff"/><stop offset="0.0412" stop-color="#14ecff"/><stop offset="0.1130" stop-color="#52edff"/><stop offset="0.1822" stop-color="#a3edff"/><stop offset="0.2434" stop-color="#ffedff"/><stop offset="0.2886" stop-color="#ffb3c1"/><stop offset="0.3471" stop-color="#ff818b"/><stop offset="0.4295" stop-color="#ff555b"/><stop offset="0.5492" stop-color="#ff3033"/><stop offset="0.7327" stop-color="#ff1213"/><stop offset="1.0000" stop-color="#ff0000"/></linearGradient><linearGradient id="i110" gradientUnits="userSpaceOnUse" x1="1205.0" y1="0" x2="1580.0" y2="0"><stop offset="0.0000" stop-color="#00e6ff"/><stop offset="0.0467" stop-color="#19e6ff"/><stop offset="0.1187" stop-color="#57e6ff"/><stop offset="0.1880" stop-color="#a9e5ff"/><stop offset="0.2467" stop-color="#ffe3fd"/><stop offset="0.2920" stop-color="#ffacbf"/><stop offset="0.3507" stop-color="#ff7c8a"/><stop offset="0.4333" stop-color="#ff515b"/><stop offset="0.5533" stop-color="#ff2d33"/><stop offset="0.7400" stop-color="#ff1113"/><stop offset="1.0000" stop-color="#ff0000"/></linearGradient><linearGradient id="i111" gradientUnits="userSpaceOnUse" x1="1204.0" y1="0" x2="1575.0" y2="0"><stop offset="0.0000" stop-color="#00e0ff"/><stop offset="0.0418" stop-color="#14e0ff"/><stop offset="0.1173" stop-color="#52dfff"/><stop offset="0.1900" stop-color="#a5deff"/><stop offset="0.2520" stop-color="#ffdcfe"/><stop offset="0.2978" stop-color="#ffa7c1"/><stop offset="0.3571" stop-color="#ff788c"/><stop offset="0.4407" stop-color="#ff4f5c"/><stop offset="0.5620" stop-color="#ff2c34"/><stop offset="0.7507" stop-color="#ff1014"/><stop offset="1.0000" stop-color="#ff0001"/></linearGradient><linearGradient id="i112" gradientUnits="userSpaceOnUse" x1="1204.0" y1="0" x2="1570.0" y2="0"><stop offset="0.0000" stop-color="#00daff"/><stop offset="0.0478" stop-color="#18d9ff"/><stop offset="0.1243" stop-color="#58d8ff"/><stop offset="0.1981" stop-color="#acd7ff"/><stop offset="0.2555" stop-color="#fed5ff"/><stop offset="0.3046" stop-color="#ff9fbf"/><stop offset="0.3675" stop-color="#ff7189"/><stop offset="0.4549" stop-color="#ff495a"/><stop offset="0.5833" stop-color="#ff2732"/><stop offset="0.7801" stop-color="#ff0d12"/><stop offset="1.0000" stop-color="#ff0002"/></linearGradient><linearGradient id="i113" gradientUnits="userSpaceOnUse" x1="1203.0" y1="0" x2="1564.0" y2="0"><stop offset="0.0000" stop-color="#00d4ff"/><stop offset="0.0429" stop-color="#13d4ff"/><stop offset="0.1205" stop-color="#50d2ff"/><stop offset="0.1953" stop-color="#a1d0ff"/><stop offset="0.2645" stop-color="#ffccfd"/><stop offset="0.3116" stop-color="#ff9ac1"/><stop offset="0.3753" stop-color="#ff6d8a"/><stop offset="0.4640" stop-color="#ff465b"/><stop offset="0.5914" stop-color="#ff2633"/><stop offset="0.7909" stop-color="#ff0c13"/><stop offset="1.0000" stop-color="#ff0003"/></linearGradient><linearGradient id="i114" gradientUnits="userSpaceOnUse" x1="1203.0" y1="0" x2="1559.0" y2="0"><stop offset="0.0000" stop-color="#00cfff"/><stop offset="0.0492" stop-color="#17ceff"/><stop offset="0.1278" stop-color="#56cbff"/><stop offset="0.2065" stop-color="#abc9ff"/><stop offset="0.2683" stop-color="#ffc6fe"/><stop offset="0.3160" stop-color="#ff96c2"/><stop offset="0.3806" stop-color="#ff6a8c"/><stop offset="0.4705" stop-color="#ff445c"/><stop offset="0.5997" stop-color="#ff2434"/><stop offset="0.7992" stop-color="#ff0b14"/><stop offset="1.0000" stop-color="#ff0004"/></linearGradient><linearGradient id="i115" gradientUnits="userSpaceOnUse" x1="1202.0" y1="0" x2="1554.0" y2="0"><stop offset="0.0000" stop-color="#00c9ff"/><stop offset="0.0469" stop-color="#15c8ff"/><stop offset="0.1293" stop-color="#53c5ff"/><stop offset="0.2088" stop-color="#a7c2ff"/><stop offset="0.2741" stop-color="#febfff"/><stop offset="0.3253" stop-color="#ff8fc1"/><stop offset="0.3906" stop-color="#ff658b"/><stop offset="0.4815" stop-color="#ff405c"/><stop offset="0.6151" stop-color="#ff2134"/><stop offset="0.8196" stop-color="#ff0914"/><stop offset="1.0000" stop-color="#ff0005"/></linearGradient><linearGradient id="i116" gradientUnits="userSpaceOnUse" x1="1202.0" y1="0" x2="1548.0" y2="0"><stop offset="0.0000" stop-color="#00c4ff"/><stop offset="0.0535" stop-color="#19c2ff"/><stop offset="0.1373" stop-color="#59bfff"/><stop offset="0.2182" stop-color="#adbbff"/><stop offset="0.2818" stop-color="#ffb7fd"/><stop offset="0.3338" stop-color="#ff88bf"/><stop offset="0.4032" stop-color="#ff5f89"/><stop offset="0.4986" stop-color="#ff3b5a"/><stop offset="0.6373" stop-color="#ff1e32"/><stop offset="0.8540" stop-color="#ff0712"/><stop offset="1.0000" stop-color="#ff0007"/></linearGradient><linearGradient id="i117" gradientUnits="userSpaceOnUse" x1="1201.0" y1="0" x2="1543.0" y2="0"><stop offset="0.0000" stop-color="#00bfff"/><stop offset="0.0482" stop-color="#14bdff"/><stop offset="0.1330" stop-color="#51b9ff"/><stop offset="0.2149" stop-color="#a2b5ff"/><stop offset="0.2880" stop-color="#ffb1fe"/><stop offset="0.3406" stop-color="#ff83c1"/><stop offset="0.4108" stop-color="#ff5b8a"/><stop offset="0.5073" stop-color="#ff395b"/><stop offset="0.6477" stop-color="#ff1c33"/><stop offset="0.8640" stop-color="#ff0613"/><stop offset="1.0000" stop-color="#ff0008"/></linearGradient><linearGradient id="i118" gradientUnits="userSpaceOnUse" x1="1201.0" y1="0" x2="1538.0" y2="0"><stop offset="0.0000" stop-color="#00b9ff"/><stop offset="0.0549" stop-color="#18b7ff"/><stop offset="0.1439" stop-color="#59b3ff"/><stop offset="0.2270" stop-color="#acafff"/><stop offset="0.2923" stop-color="#feabff"/><stop offset="0.3487" stop-color="#ff7dbf"/><stop offset="0.4199" stop-color="#ff5789"/><stop offset="0.5178" stop-color="#ff365b"/><stop offset="0.6632" stop-color="#ff1a33"/><stop offset="0.8858" stop-color="#ff0513"/><stop offset="1.0000" stop-color="#ff0009"/></linearGradient><linearGradient id="i119" gradientUnits="userSpaceOnUse" x1="1200.0" y1="0" x2="1532.0" y2="0"><stop offset="0.0000" stop-color="#00b4ff"/><stop offset="0.0497" stop-color="#14b2ff"/><stop offset="0.1401" stop-color="#52aeff"/><stop offset="0.2274" stop-color="#a5a9ff"/><stop offset="0.3027" stop-color="#ffa3fd"/><stop offset="0.3569" stop-color="#ff79c1"/><stop offset="0.4292" stop-color="#ff548b"/><stop offset="0.5286" stop-color="#ff345c"/><stop offset="0.6762" stop-color="#ff1833"/><stop offset="0.9021" stop-color="#ff0413"/><stop offset="1.0000" stop-color="#ff000b"/></linearGradient><linearGradient id="i120" gradientUnits="userSpaceOnUse" x1="1200.0" y1="0" x2="1527.0" y2="0"><stop offset="0.0000" stop-color="#00afff"/><stop offset="0.0566" stop-color="#17adff"/><stop offset="0.1483" stop-color="#57a8ff"/><stop offset="0.2370" stop-color="#aba3ff"/><stop offset="0.3073" stop-color="#ff9dff"/><stop offset="0.3624" stop-color="#ff75c2"/><stop offset="0.4358" stop-color="#ff508c"/><stop offset="0.5367" stop-color="#ff315d"/><stop offset="0.6835" stop-color="#ff1735"/><stop offset="0.9098" stop-color="#ff0315"/><stop offset="1.0000" stop-color="#ff000d"/></linearGradient><linearGradient id="i121" gradientUnits="userSpaceOnUse" x1="1199.0" y1="0" x2="1522.0" y2="0"><stop offset="0.0000" stop-color="#00abff"/><stop offset="0.0511" stop-color="#13a8ff"/><stop offset="0.1440" stop-color="#50a3ff"/><stop offset="0.2337" stop-color="#a19dff"/><stop offset="0.3173" stop-color="#ff95fc"/><stop offset="0.3731" stop-color="#ff6fc1"/><stop offset="0.4474" stop-color="#ff4c8b"/><stop offset="0.5526" stop-color="#ff2e5c"/><stop offset="0.7043" stop-color="#ff1534"/><stop offset="0.9396" stop-color="#ff0214"/><stop offset="1.0000" stop-color="#ff000f"/></linearGradient><linearGradient id="i122" gradientUnits="userSpaceOnUse" x1="1199.0" y1="0" x2="1516.0" y2="0"><stop offset="0.0000" stop-color="#00a6ff"/><stop offset="0.0584" stop-color="#17a3ff"/><stop offset="0.1530" stop-color="#559dff"/><stop offset="0.2445" stop-color="#a797ff"/><stop offset="0.3233" stop-color="#ff90fd"/><stop offset="0.3801" stop-color="#ff6bc2"/><stop offset="0.4558" stop-color="#ff498d"/><stop offset="0.5631" stop-color="#ff2b5d"/><stop offset="0.7177" stop-color="#ff1335"/><stop offset="0.9574" stop-color="#ff0114"/><stop offset="1.0000" stop-color="#ff0011"/></linearGradient><linearGradient id="i123" gradientUnits="userSpaceOnUse" x1="1198.0" y1="0" x2="1511.0" y2="0"><stop offset="0.0000" stop-color="#00a1ff"/><stop offset="0.0527" stop-color="#139fff"/><stop offset="0.1518" stop-color="#5099ff"/><stop offset="0.2476" stop-color="#a392ff"/><stop offset="0.3307" stop-color="#ff8bff"/><stop offset="0.3882" stop-color="#ff67c3"/><stop offset="0.4681" stop-color="#ff458c"/><stop offset="0.5767" stop-color="#ff295d"/><stop offset="0.7364" stop-color="#ff1134"/><stop offset="0.9824" stop-color="#ff0014"/><stop offset="1.0000" stop-color="#ff0012"/></linearGradient><linearGradient id="i124" gradientUnits="userSpaceOnUse" x1="1198.0" y1="0" x2="1506.0" y2="0"><stop offset="0.0000" stop-color="#009dff"/><stop offset="0.0633" stop-color="#1899ff"/><stop offset="0.1640" stop-color="#5893ff"/><stop offset="0.2614" stop-color="#ac8cff"/><stop offset="0.3393" stop-color="#ff84fc"/><stop offset="0.4010" stop-color="#ff60bf"/><stop offset="0.4821" stop-color="#ff408a"/><stop offset="0.5958" stop-color="#ff255b"/><stop offset="0.7614" stop-color="#ff0e33"/><stop offset="1.0000" stop-color="#ff0014"/></linearGradient><linearGradient id="i125" gradientUnits="userSpaceOnUse" x1="1197.0" y1="0" x2="1501.0" y2="0"><stop offset="0.0000" stop-color="#0098ff"/><stop offset="0.0576" stop-color="#1495ff"/><stop offset="0.1595" stop-color="#518fff"/><stop offset="0.2582" stop-color="#a287ff"/><stop offset="0.3470" stop-color="#ff7ffe"/><stop offset="0.4095" stop-color="#ff5cc1"/><stop offset="0.4918" stop-color="#ff3d8b"/><stop offset="0.6069" stop-color="#ff235c"/><stop offset="0.7747" stop-color="#ff0d34"/><stop offset="1.0000" stop-color="#ff0016"/></linearGradient><linearGradient id="i126" gradientUnits="userSpaceOnUse" x1="1197.0" y1="0" x2="1495.0" y2="0"><stop offset="0.0000" stop-color="#0094ff"/><stop offset="0.0654" stop-color="#1890ff"/><stop offset="0.1728" stop-color="#5889ff"/><stop offset="0.2735" stop-color="#ab81ff"/><stop offset="0.3540" stop-color="#ff7aff"/><stop offset="0.4178" stop-color="#ff58c2"/><stop offset="0.5017" stop-color="#ff3a8c"/><stop offset="0.6191" stop-color="#ff215d"/><stop offset="0.7903" stop-color="#ff0c34"/><stop offset="1.0000" stop-color="#ff0019"/></linearGradient><linearGradient id="i127" gradientUnits="userSpaceOnUse" x1="1197.0" y1="0" x2="1490.0" y2="0"><stop offset="0.0000" stop-color="#0090ff"/><stop offset="0.0734" stop-color="#1b8bff"/><stop offset="0.1826" stop-color="#5d84ff"/><stop offset="0.2850" stop-color="#b17cff"/><stop offset="0.3635" stop-color="#ff73fc"/><stop offset="0.4283" stop-color="#ff53c1"/><stop offset="0.5171" stop-color="#ff368a"/><stop offset="0.6399" stop-color="#ff1d5b"/><stop offset="0.8174" stop-color="#ff0933"/><stop offset="1.0000" stop-color="#ff001b"/></linearGradient><linearGradient id="i128" gradientUnits="userSpaceOnUse" x1="1196.0" y1="0" x2="1485.0" y2="0"><stop offset="0.0000" stop-color="#008cff"/><stop offset="0.0675" stop-color="#1787ff"/><stop offset="0.1782" stop-color="#5680ff"/><stop offset="0.2855" stop-color="#aa77ff"/><stop offset="0.3720" stop-color="#ff6ffe"/><stop offset="0.4377" stop-color="#ff4fc2"/><stop offset="0.5277" stop-color="#ff338b"/><stop offset="0.6522" stop-color="#ff1b5c"/><stop offset="0.8322" stop-color="#ff0834"/><stop offset="1.0000" stop-color="#ff001e"/></linearGradient><linearGradient id="i129" gradientUnits="userSpaceOnUse" x1="1196.0" y1="0" x2="1479.0" y2="0"><stop offset="0.0000" stop-color="#0087ff"/><stop offset="0.0760" stop-color="#1b83ff"/><stop offset="0.1890" stop-color="#5b7bff"/><stop offset="0.2986" stop-color="#b072ff"/><stop offset="0.3799" stop-color="#ff6aff"/><stop offset="0.4470" stop-color="#ff4cc3"/><stop offset="0.5389" stop-color="#ff318c"/><stop offset="0.6661" stop-color="#ff195d"/><stop offset="0.8498" stop-color="#ff0735"/><stop offset="1.0000" stop-color="#ff0020"/></linearGradient><linearGradient id="i130" gradientUnits="userSpaceOnUse" x1="1195.0" y1="0" x2="1474.0" y2="0"><stop offset="0.0000" stop-color="#0083ff"/><stop offset="0.0699" stop-color="#167fff"/><stop offset="0.1846" stop-color="#5477ff"/><stop offset="0.2957" stop-color="#a66eff"/><stop offset="0.3925" stop-color="#ff64fd"/><stop offset="0.4642" stop-color="#ff46bf"/><stop offset="0.5609" stop-color="#ff2c89"/><stop offset="0.6935" stop-color="#ff165a"/><stop offset="0.8871" stop-color="#ff0532"/><stop offset="1.0000" stop-color="#ff0023"/></linearGradient><linearGradient id="i131" gradientUnits="userSpaceOnUse" x1="1195.0" y1="0" x2="1469.0" y2="0"><stop offset="0.0000" stop-color="#007fff"/><stop offset="0.0785" stop-color="#1a7aff"/><stop offset="0.1989" stop-color="#5b72ff"/><stop offset="0.3120" stop-color="#af68ff"/><stop offset="0.3996" stop-color="#ff60fe"/><stop offset="0.4726" stop-color="#ff43c1"/><stop offset="0.5712" stop-color="#ff298a"/><stop offset="0.7062" stop-color="#ff145b"/><stop offset="0.9033" stop-color="#ff0433"/><stop offset="1.0000" stop-color="#ff0026"/></linearGradient><linearGradient id="i132" gradientUnits="userSpaceOnUse" x1="1194.0" y1="0" x2="1463.0" y2="0"><stop offset="0.0000" stop-color="#007cff"/><stop offset="0.0725" stop-color="#1677ff"/><stop offset="0.1952" stop-color="#556eff"/><stop offset="0.3141" stop-color="#a865ff"/><stop offset="0.4108" stop-color="#ff5bff"/><stop offset="0.4851" stop-color="#ff3fc2"/><stop offset="0.5855" stop-color="#ff278b"/><stop offset="0.7230" stop-color="#ff125c"/><stop offset="0.9238" stop-color="#ff0333"/><stop offset="1.0000" stop-color="#ff0029"/></linearGradient><linearGradient id="i133" gradientUnits="userSpaceOnUse" x1="1194.0" y1="0" x2="1458.0" y2="0"><stop offset="0.0000" stop-color="#0078ff"/><stop offset="0.0852" stop-color="#1b72ff"/><stop offset="0.2102" stop-color="#5c69ff"/><stop offset="0.3314" stop-color="#b15fff"/><stop offset="0.4223" stop-color="#ff56fd"/><stop offset="0.4981" stop-color="#ff3bc1"/><stop offset="0.6004" stop-color="#ff248a"/><stop offset="0.7405" stop-color="#ff105c"/><stop offset="0.9451" stop-color="#ff0234"/><stop offset="1.0000" stop-color="#ff002c"/></linearGradient><linearGradient id="i134" gradientUnits="userSpaceOnUse" x1="1193.0" y1="0" x2="1453.0" y2="0"><stop offset="0.0000" stop-color="#0074ff"/><stop offset="0.0788" stop-color="#176fff"/><stop offset="0.2096" stop-color="#5766ff"/><stop offset="0.3327" stop-color="#aa5bff"/><stop offset="0.4327" stop-color="#ff52fe"/><stop offset="0.5096" stop-color="#ff38c2"/><stop offset="0.6135" stop-color="#ff218c"/><stop offset="0.7558" stop-color="#ff0f5d"/><stop offset="0.9635" stop-color="#ff0134"/><stop offset="1.0000" stop-color="#ff002f"/></linearGradient><linearGradient id="i135" gradientUnits="userSpaceOnUse" x1="1193.0" y1="0" x2="1447.0" y2="0"><stop offset="0.0000" stop-color="#0071ff"/><stop offset="0.0886" stop-color="#1b6bff"/><stop offset="0.2224" stop-color="#5c61ff"/><stop offset="0.3484" stop-color="#b057ff"/><stop offset="0.4429" stop-color="#ff4eff"/><stop offset="0.5256" stop-color="#ff34c1"/><stop offset="0.6319" stop-color="#ff1f8b"/><stop offset="0.7815" stop-color="#ff0c5c"/><stop offset="1.0000" stop-color="#ff0033"/></linearGradient><linearGradient id="i136" gradientUnits="userSpaceOnUse" x1="1192.0" y1="0" x2="1442.0" y2="0"><stop offset="0.0000" stop-color="#006dff"/><stop offset="0.0820" stop-color="#1768ff"/><stop offset="0.2180" stop-color="#565eff"/><stop offset="0.3500" stop-color="#a953ff"/><stop offset="0.4580" stop-color="#ff48fd"/><stop offset="0.5420" stop-color="#ff30bf"/><stop offset="0.6540" stop-color="#ff1b89"/><stop offset="0.8100" stop-color="#ff0a5a"/><stop offset="1.0000" stop-color="#ff0037"/></linearGradient><linearGradient id="i137" gradientUnits="userSpaceOnUse" x1="1192.0" y1="0" x2="1437.0" y2="0"><stop offset="0.0000" stop-color="#0069ff"/><stop offset="0.0918" stop-color="#1a64ff"/><stop offset="0.2306" stop-color="#5a5aff"/><stop offset="0.3653" stop-color="#af4eff"/><stop offset="0.4673" stop-color="#ff44fe"/><stop offset="0.5531" stop-color="#ff2dc1"/><stop offset="0.6673" stop-color="#ff198a"/><stop offset="0.8265" stop-color="#ff095b"/><stop offset="1.0000" stop-color="#ff003a"/></linearGradient><linearGradient id="i138" gradientUnits="userSpaceOnUse" x1="1191.0" y1="0" x2="1431.0" y2="0"><stop offset="0.0000" stop-color="#0066ff"/><stop offset="0.0854" stop-color="#1661ff"/><stop offset="0.2271" stop-color="#5457ff"/><stop offset="0.3646" stop-color="#a64cff"/><stop offset="0.4854" stop-color="#ff3ffc"/><stop offset="0.5729" stop-color="#ff29bf"/><stop offset="0.6896" stop-color="#ff168a"/><stop offset="0.8521" stop-color="#ff075b"/><stop offset="1.0000" stop-color="#ff003f"/></linearGradient><linearGradient id="i139" gradientUnits="userSpaceOnUse" x1="1191.0" y1="0" x2="1426.0" y2="0"><stop offset="0.0000" stop-color="#0063ff"/><stop offset="0.0957" stop-color="#1a5dff"/><stop offset="0.2447" stop-color="#5b52ff"/><stop offset="0.3851" stop-color="#ae47ff"/><stop offset="0.4957" stop-color="#ff3cfd"/><stop offset="0.5851" stop-color="#ff27c1"/><stop offset="0.7043" stop-color="#ff148b"/><stop offset="0.8702" stop-color="#ff065c"/><stop offset="1.0000" stop-color="#ff0043"/></linearGradient><linearGradient id="i140" gradientUnits="userSpaceOnUse" x1="1190.0" y1="0" x2="1421.0" y2="0"><stop offset="0.0000" stop-color="#0060ff"/><stop offset="0.0887" stop-color="#165aff"/><stop offset="0.2403" stop-color="#544fff"/><stop offset="0.3874" stop-color="#a844ff"/><stop offset="0.5087" stop-color="#ff38fe"/><stop offset="0.5996" stop-color="#ff24c2"/><stop offset="0.7208" stop-color="#ff128c"/><stop offset="0.8896" stop-color="#ff045c"/><stop offset="1.0000" stop-color="#ff0047"/></linearGradient><linearGradient id="i141" gradientUnits="userSpaceOnUse" x1="1190.0" y1="0" x2="1415.0" y2="0"><stop offset="0.0000" stop-color="#005cff"/><stop offset="0.1000" stop-color="#1956ff"/><stop offset="0.2556" stop-color="#594bff"/><stop offset="0.4067" stop-color="#ad3fff"/><stop offset="0.5267" stop-color="#ff34fc"/><stop offset="0.6200" stop-color="#ff20c1"/><stop offset="0.7489" stop-color="#ff108a"/><stop offset="0.9267" stop-color="#ff035b"/><stop offset="1.0000" stop-color="#ff004d"/></linearGradient><linearGradient id="i142" gradientUnits="userSpaceOnUse" x1="1189.0" y1="0" x2="1410.0" y2="0"><stop offset="0.0000" stop-color="#0059ff"/><stop offset="0.0973" stop-color="#1753ff"/><stop offset="0.2602" stop-color="#5748ff"/><stop offset="0.4140" stop-color="#aa3cff"/><stop offset="0.5407" stop-color="#ff30fd"/><stop offset="0.6403" stop-color="#ff1dbf"/><stop offset="0.7715" stop-color="#ff0d89"/><stop offset="0.9525" stop-color="#ff015b"/><stop offset="1.0000" stop-color="#ff0052"/></linearGradient><linearGradient id="i143" gradientUnits="userSpaceOnUse" x1="1189.0" y1="0" x2="1405.0" y2="0"><stop offset="0.0000" stop-color="#0056ff"/><stop offset="0.1088" stop-color="#1a4fff"/><stop offset="0.2755" stop-color="#5b44ff"/><stop offset="0.4329" stop-color="#af38ff"/><stop offset="0.5532" stop-color="#ff2dfe"/><stop offset="0.6551" stop-color="#ff1bc1"/><stop offset="0.7894" stop-color="#ff0c8b"/><stop offset="0.9745" stop-color="#ff005b"/><stop offset="1.0000" stop-color="#ff0057"/></linearGradient><linearGradient id="i144" gradientUnits="userSpaceOnUse" x1="1188.0" y1="0" x2="1399.0" y2="0"><stop offset="0.0000" stop-color="#0053ff"/><stop offset="0.1019" stop-color="#164dff"/><stop offset="0.2725" stop-color="#5542ff"/><stop offset="0.4384" stop-color="#a935ff"/><stop offset="0.5758" stop-color="#ff29fc"/><stop offset="0.6801" stop-color="#ff18bf"/><stop offset="0.8175" stop-color="#ff098a"/><stop offset="1.0000" stop-color="#ff005d"/></linearGradient><linearGradient id="i145" gradientUnits="userSpaceOnUse" x1="1188.0" y1="0" x2="1394.0" y2="0"><stop offset="0.0000" stop-color="#0050ff"/><stop offset="0.1141" stop-color="#1949ff"/><stop offset="0.2888" stop-color="#593eff"/><stop offset="0.4587" stop-color="#ae31ff"/><stop offset="0.5898" stop-color="#ff26fd"/><stop offset="0.6966" stop-color="#ff15c1"/><stop offset="0.8374" stop-color="#ff088b"/><stop offset="1.0000" stop-color="#ff0062"/></linearGradient><linearGradient id="i146" gradientUnits="userSpaceOnUse" x1="1187.0" y1="0" x2="1389.0" y2="0"><stop offset="0.0000" stop-color="#004dff"/><stop offset="0.1064" stop-color="#1647ff"/><stop offset="0.2896" stop-color="#553bff"/><stop offset="0.4629" stop-color="#a82eff"/><stop offset="0.6064" stop-color="#ff23ff"/><stop offset="0.7153" stop-color="#ff13c2"/><stop offset="0.8589" stop-color="#ff068c"/><stop offset="1.0000" stop-color="#ff0068"/></linearGradient><linearGradient id="i147" gradientUnits="userSpaceOnUse" x1="1187.0" y1="0" x2="1383.0" y2="0"><stop offset="0.0000" stop-color="#004aff"/><stop offset="0.1199" stop-color="#1943ff"/><stop offset="0.3087" stop-color="#5a37ff"/><stop offset="0.4872" stop-color="#ad2bff"/><stop offset="0.6301" stop-color="#ff1ffc"/><stop offset="0.7423" stop-color="#ff10c1"/><stop offset="0.8954" stop-color="#ff048a"/><stop offset="1.0000" stop-color="#ff0070"/></linearGradient><linearGradient id="i148" gradientUnits="userSpaceOnUse" x1="1186.0" y1="0" x2="1378.0" y2="0"><stop offset="0.0000" stop-color="#0048ff"/><stop offset="0.1120" stop-color="#1541ff"/><stop offset="0.3047" stop-color="#5435ff"/><stop offset="0.4922" stop-color="#a728ff"/><stop offset="0.6484" stop-color="#ff1cfe"/><stop offset="0.7630" stop-color="#ff0ec2"/><stop offset="0.9193" stop-color="#ff038b"/><stop offset="1.0000" stop-color="#ff0077"/></linearGradient><linearGradient id="i149" gradientUnits="userSpaceOnUse" x1="1186.0" y1="0" x2="1373.0" y2="0"><stop offset="0.0000" stop-color="#0045ff"/><stop offset="0.1257" stop-color="#183eff"/><stop offset="0.3235" stop-color="#5832ff"/><stop offset="0.5160" stop-color="#ac25ff"/><stop offset="0.6658" stop-color="#ff19ff"/><stop offset="0.7834" stop-color="#ff0cc3"/><stop offset="0.9439" stop-color="#ff028c"/><stop offset="1.0000" stop-color="#ff007e"/></linearGradient><linearGradient id="i150" gradientUnits="userSpaceOnUse" x1="1186.0" y1="0" x2="1367.0" y2="0"><stop offset="0.0000" stop-color="#0042ff"/><stop offset="0.1464" stop-color="#1d3aff"/><stop offset="0.3564" stop-color="#602dff"/><stop offset="0.5552" stop-color="#b720ff"/><stop offset="0.6934" stop-color="#ff16fd"/><stop offset="0.8204" stop-color="#ff09c0"/><stop offset="0.9917" stop-color="#ff0089"/><stop offset="1.0000" stop-color="#ff0087"/></linearGradient><linearGradient id="i151" gradientUnits="userSpaceOnUse" x1="1185.0" y1="0" x2="1362.0" y2="0"><stop offset="0.0000" stop-color="#003fff"/><stop offset="0.1384" stop-color="#1938ff"/><stop offset="0.3531" stop-color="#5a2cff"/><stop offset="0.5565" stop-color="#ae1eff"/><stop offset="0.7147" stop-color="#ff13fe"/><stop offset="0.8446" stop-color="#ff07c1"/><stop offset="1.0000" stop-color="#ff008f"/></linearGradient><linearGradient id="i152" gradientUnits="userSpaceOnUse" x1="1185.0" y1="0" x2="1357.0" y2="0"><stop offset="0.0000" stop-color="#003dff"/><stop offset="0.1541" stop-color="#1d35ff"/><stop offset="0.3750" stop-color="#5e28ff"/><stop offset="0.5843" stop-color="#b31bff"/><stop offset="0.7355" stop-color="#ff11ff"/><stop offset="0.8692" stop-color="#ff05c2"/><stop offset="1.0000" stop-color="#ff0098"/></linearGradient><linearGradient id="i153" gradientUnits="userSpaceOnUse" x1="1184.0" y1="0" x2="1351.0" y2="0"><stop offset="0.0000" stop-color="#003aff"/><stop offset="0.1467" stop-color="#1933ff"/><stop offset="0.3743" stop-color="#5927ff"/><stop offset="0.5958" stop-color="#ad19ff"/><stop offset="0.7695" stop-color="#ff0efd"/><stop offset="0.9072" stop-color="#ff03c1"/><stop offset="1.0000" stop-color="#ff00a3"/></linearGradient><linearGradient id="i154" gradientUnits="userSpaceOnUse" x1="1184.0" y1="0" x2="1346.0" y2="0"><stop offset="0.0000" stop-color="#0038ff"/><stop offset="0.1636" stop-color="#1c30ff"/><stop offset="0.4043" stop-color="#5f23ff"/><stop offset="0.6327" stop-color="#b515ff"/><stop offset="0.7932" stop-color="#ff0bfe"/><stop offset="0.9352" stop-color="#ff02c2"/><stop offset="1.0000" stop-color="#ff00ad"/></linearGradient><linearGradient id="i155" gradientUnits="userSpaceOnUse" x1="1183.0" y1="0" x2="1341.0" y2="0"><stop offset="0.0000" stop-color="#0035ff"/><stop offset="0.1551" stop-color="#182eff"/><stop offset="0.4019" stop-color="#5921ff"/><stop offset="0.6361" stop-color="#ac14ff"/><stop offset="0.8196" stop-color="#ff09ff"/><stop offset="0.9652" stop-color="#ff01c3"/><stop offset="1.0000" stop-color="#ff00b7"/></linearGradient><linearGradient id="i156" gradientUnits="userSpaceOnUse" x1="1183.0" y1="0" x2="1335.0" y2="0"><stop offset="0.0000" stop-color="#0033ff"/><stop offset="0.1743" stop-color="#1c2bff"/><stop offset="0.4309" stop-color="#5d1eff"/><stop offset="0.6743" stop-color="#b111ff"/><stop offset="0.8586" stop-color="#ff06fd"/><stop offset="1.0000" stop-color="#ff00c5"/></linearGradient><linearGradient id="i157" gradientUnits="userSpaceOnUse" x1="1182.0" y1="0" x2="1330.0" y2="0"><stop offset="0.0000" stop-color="#0031ff"/><stop offset="0.1655" stop-color="#1829ff"/><stop offset="0.4291" stop-color="#571dff"/><stop offset="0.6858" stop-color="#ab0fff"/><stop offset="0.8885" stop-color="#ff04fe"/><stop offset="1.0000" stop-color="#ff00d1"/></linearGradient><linearGradient id="i158" gradientUnits="userSpaceOnUse" x1="1182.0" y1="0" x2="1325.0" y2="0"><stop offset="0.0000" stop-color="#002eff"/><stop offset="0.1853" stop-color="#1b26ff"/><stop offset="0.4650" stop-color="#5d19ff"/><stop offset="0.7308" stop-color="#b30cff"/><stop offset="0.9266" stop-color="#ff02fc"/><stop offset="1.0000" stop-color="#ff00df"/></linearGradient><linearGradient id="i159" gradientUnits="userSpaceOnUse" x1="1181.0" y1="0" x2="1319.0" y2="0"><stop offset="0.0000" stop-color="#002cff"/><stop offset="0.1848" stop-color="#1925ff"/><stop offset="0.4746" stop-color="#5a18ff"/><stop offset="0.7500" stop-color="#ad0aff"/><stop offset="0.9674" stop-color="#ff01fd"/><stop offset="1.0000" stop-color="#ff00f0"/></linearGradient><linearGradient id="i160" gradientUnits="userSpaceOnUse" x1="1181.0" y1="0" x2="1314.0" y2="0"><stop offset="0.0000" stop-color="#002aff"/><stop offset="0.2068" stop-color="#1c22ff"/><stop offset="0.5075" stop-color="#5d15ff"/><stop offset="0.7932" stop-color="#b208ff"/><stop offset="1.0000" stop-color="#fe00ff"/></linearGradient><linearGradient id="i161" gradientUnits="userSpaceOnUse" x1="1180.0" y1="0" x2="1309.0" y2="0"><stop offset="0.0000" stop-color="#0028ff"/><stop offset="0.1977" stop-color="#1820ff"/><stop offset="0.5078" stop-color="#5813ff"/><stop offset="0.8101" stop-color="#ac06ff"/><stop offset="1.0000" stop-color="#ee00ff"/></linearGradient><linearGradient id="i162" gradientUnits="userSpaceOnUse" x1="1180.0" y1="0" x2="1303.0" y2="0"><stop offset="0.0000" stop-color="#0026ff"/><stop offset="0.2236" stop-color="#1b1dff"/><stop offset="0.5569" stop-color="#5e10ff"/><stop offset="0.8740" stop-color="#b304ff"/><stop offset="1.0000" stop-color="#dc00ff"/></linearGradient><linearGradient id="i163" gradientUnits="userSpaceOnUse" x1="1179.0" y1="0" x2="1298.0" y2="0"><stop offset="0.0000" stop-color="#0024ff"/><stop offset="0.2143" stop-color="#181cff"/><stop offset="0.5588" stop-color="#580fff"/><stop offset="0.8866" stop-color="#ac03ff"/><stop offset="1.0000" stop-color="#ce00ff"/></linearGradient><linearGradient id="i164" gradientUnits="userSpaceOnUse" x1="1179.0" y1="0" x2="1293.0" y2="0"><stop offset="0.0000" stop-color="#0022ff"/><stop offset="0.2412" stop-color="#1b19ff"/><stop offset="0.6009" stop-color="#5c0dff"/><stop offset="0.9430" stop-color="#b001ff"/><stop offset="1.0000" stop-color="#c000ff"/></linearGradient><linearGradient id="i165" gradientUnits="userSpaceOnUse" x1="1178.0" y1="0" x2="1287.0" y2="0"><stop offset="0.0000" stop-color="#0020ff"/><stop offset="0.2339" stop-color="#1818ff"/><stop offset="0.6101" stop-color="#570cff"/><stop offset="0.9771" stop-color="#ab00ff"/><stop offset="1.0000" stop-color="#b100ff"/></linearGradient><linearGradient id="i166" gradientUnits="userSpaceOnUse" x1="1178.0" y1="0" x2="1282.0" y2="0"><stop offset="0.0000" stop-color="#001eff"/><stop offset="0.2644" stop-color="#1b16ff"/><stop offset="0.6683" stop-color="#5c09ff"/><stop offset="1.0000" stop-color="#a500ff"/></linearGradient><linearGradient id="i167" gradientUnits="userSpaceOnUse" x1="1177.0" y1="0" x2="1277.0" y2="0"><stop offset="0.0000" stop-color="#001cff"/><stop offset="0.2550" stop-color="#1715ff"/><stop offset="0.6750" stop-color="#5708ff"/><stop offset="1.0000" stop-color="#9900ff"/></linearGradient><linearGradient id="i168" gradientUnits="userSpaceOnUse" x1="1177.0" y1="0" x2="1271.0" y2="0"><stop offset="0.0000" stop-color="#001aff"/><stop offset="0.3032" stop-color="#1b12ff"/><stop offset="0.7500" stop-color="#5d05ff"/><stop offset="1.0000" stop-color="#8b00ff"/></linearGradient><linearGradient id="i169" gradientUnits="userSpaceOnUse" x1="1176.0" y1="0" x2="1266.0" y2="0"><stop offset="0.0000" stop-color="#0018ff"/><stop offset="0.2944" stop-color="#1811ff"/><stop offset="0.7611" stop-color="#5705ff"/><stop offset="1.0000" stop-color="#8100ff"/></linearGradient><linearGradient id="i170" gradientUnits="userSpaceOnUse" x1="1176.0" y1="0" x2="1261.0" y2="0"><stop offset="0.0000" stop-color="#0016ff"/><stop offset="0.3353" stop-color="#1b0eff"/><stop offset="0.8412" stop-color="#5d02ff"/><stop offset="1.0000" stop-color="#7600ff"/></linearGradient><linearGradient id="i171" gradientUnits="userSpaceOnUse" x1="1176.0" y1="0" x2="1255.0" y2="0"><stop offset="0.0000" stop-color="#0015ff"/><stop offset="0.3861" stop-color="#1e0cff"/><stop offset="0.9304" stop-color="#6101ff"/><stop offset="1.0000" stop-color="#6b00ff"/></linearGradient><linearGradient id="i172" gradientUnits="userSpaceOnUse" x1="1175.0" y1="0" x2="1250.0" y2="0"><stop offset="0.0000" stop-color="#0013ff"/><stop offset="0.3800" stop-color="#1a0bff"/><stop offset="0.9533" stop-color="#5b00ff"/><stop offset="1.0000" stop-color="#6200ff"/></linearGradient><linearGradient id="i173" gradientUnits="userSpaceOnUse" x1="1175.0" y1="0" x2="1245.0" y2="0"><stop offset="0.0000" stop-color="#0011ff"/><stop offset="0.4357" stop-color="#1d09ff"/><stop offset="1.0000" stop-color="#5900ff"/></linearGradient><linearGradient id="i174" gradientUnits="userSpaceOnUse" x1="1174.0" y1="0" x2="1239.0" y2="0"><stop offset="0.0000" stop-color="#0010ff"/><stop offset="0.4385" stop-color="#1a08ff"/><stop offset="1.0000" stop-color="#4f00ff"/></linearGradient><linearGradient id="i175" gradientUnits="userSpaceOnUse" x1="1174.0" y1="0" x2="1234.0" y2="0"><stop offset="0.0000" stop-color="#000eff"/><stop offset="0.5083" stop-color="#1d06ff"/><stop offset="1.0000" stop-color="#4700ff"/></linearGradient><linearGradient id="i176" gradientUnits="userSpaceOnUse" x1="1173.0" y1="0" x2="1229.0" y2="0"><stop offset="0.0000" stop-color="#000dff"/><stop offset="0.5089" stop-color="#1a06ff"/><stop offset="1.0000" stop-color="#3f00ff"/></linearGradient><linearGradient id="i177" gradientUnits="userSpaceOnUse" x1="1173.0" y1="0" x2="1223.0" y2="0"><stop offset="0.0000" stop-color="#000bff"/><stop offset="0.6300" stop-color="#1e03ff"/><stop offset="1.0000" stop-color="#3600ff"/></linearGradient><linearGradient id="i178" gradientUnits="userSpaceOnUse" x1="1172.0" y1="0" x2="1218.0" y2="0"><stop offset="0.0000" stop-color="#000aff"/><stop offset="0.6413" stop-color="#1a03ff"/><stop offset="1.0000" stop-color="#3000ff"/></linearGradient><linearGradient id="i179" gradientUnits="userSpaceOnUse" x1="1172.0" y1="0" x2="1213.0" y2="0"><stop offset="0.0000" stop-color="#0009ff"/><stop offset="0.7683" stop-color="#1d01ff"/><stop offset="1.0000" stop-color="#2900ff"/></linearGradient><linearGradient id="i180" gradientUnits="userSpaceOnUse" x1="1171.0" y1="0" x2="1207.0" y2="0"><stop offset="0.0000" stop-color="#0007ff"/><stop offset="0.8194" stop-color="#1a01ff"/><stop offset="1.0000" stop-color="#2200ff"/></linearGradient><linearGradient id="i181" gradientUnits="userSpaceOnUse" x1="1171.0" y1="0" x2="1202.0" y2="0"><stop offset="0.0000" stop-color="#0006ff"/><stop offset="1.0000" stop-color="#1c00ff"/></linearGradient><linearGradient id="i182" gradientUnits="userSpaceOnUse" x1="1170.0" y1="0" x2="1197.0" y2="0"><stop offset="0.0000" stop-color="#0005ff"/><stop offset="1.0000" stop-color="#1700ff"/></linearGradient><linearGradient id="i183" gradientUnits="userSpaceOnUse" x1="1170.0" y1="0" x2="1191.0" y2="0"><stop offset="0.0000" stop-color="#0004ff"/><stop offset="1.0000" stop-color="#1100ff"/></linearGradient><linearGradient id="i184" gradientUnits="userSpaceOnUse" x1="1169.0" y1="0" x2="1186.0" y2="0"><stop offset="0.0000" stop-color="#0003ff"/><stop offset="1.0000" stop-color="#0c00ff"/></linearGradient><linearGradient id="i185" gradientUnits="userSpaceOnUse" x1="1169.0" y1="0" x2="1181.0" y2="0"><stop offset="0.0000" stop-color="#0002ff"/><stop offset="1.0000" stop-color="#0800ff"/></linearGradient><linearGradient id="i186" gradientUnits="userSpaceOnUse" x1="1168.0" y1="0" x2="1175.0" y2="0"><stop offset="0.0000" stop-color="#0001ff"/><stop offset="1.0000" stop-color="#0300ff"/></linearGradient><clipPath id="irect"><rect x="1509.2" y="84.2" width="190.4" height="147.4"/></clipPath><clipPath id="iloc"><path d="M821.14 1362.64C820.99 1362.68 820.64 1362.79 820.25 1362.87C819.85 1362.95 819.16 1363.06 818.76 1363.10C818.37 1363.13 818.22 1363.10 817.87 1363.10C817.53 1363.10 817.13 1363.10 816.69 1363.10C816.24 1363.10 815.80 1363.21 815.20 1363.10C814.61 1362.98 814.02 1362.79 813.12 1362.42C812.23 1362.04 811.10 1361.51 809.86 1360.83C808.62 1360.15 807.39 1359.39 805.70 1358.33C804.02 1357.27 801.99 1355.98 799.77 1354.47C797.54 1352.96 795.22 1351.22 792.35 1349.25C789.48 1347.28 786.41 1345.24 782.55 1342.67C778.70 1340.09 774.19 1337.18 769.20 1333.81C764.20 1330.45 758.81 1327.00 752.58 1322.46C746.34 1317.92 739.47 1313.08 731.80 1306.57C724.13 1300.07 716.42 1294.05 706.57 1283.42C696.73 1272.79 685.55 1260.53 672.74 1242.79C659.93 1225.04 645.93 1205.29 629.70 1176.96C613.48 1148.62 595.62 1115.86 575.39 1072.76C555.16 1029.67 531.02 979.81 508.31 918.40C485.61 857.00 461.52 784.55 439.16 704.34C416.80 624.14 392.56 529.25 374.16 437.16C355.76 345.08 338.44 243.42 328.75 151.83C319.05 60.23 313.17 -32.27 315.98 -112.40C318.80 -192.53 328.35 -269.49 345.66 -328.96C362.98 -388.43 389.99 -437.62 419.86 -469.25C449.74 -500.88 487.68 -513.36 524.93 -518.73C562.18 -524.11 603.58 -512.04 643.36 -501.48C683.13 -490.93 724.63 -472.27 763.56 -455.40C802.49 -438.53 839.89 -419.76 876.94 -400.24C913.99 -380.72 949.80 -359.95 985.86 -338.27C1021.92 -316.59 1057.69 -293.62 1093.30 -270.17C1128.92 -246.71 1164.19 -222.27 1199.56 -197.53C1234.93 -172.78 1270.15 -147.36 1305.52 -121.71C1340.88 -96.06 1376.45 -69.84 1411.77 -43.62C1447.09 -17.40 1482.31 9.19 1517.43 35.60C1552.55 62.01 1587.82 88.57 1622.50 114.82C1657.17 141.08 1691.65 167.37 1725.49 193.14C1759.32 218.90 1792.86 244.52 1825.51 269.41C1858.16 294.31 1890.36 318.90 1921.38 342.51C1952.39 366.11 1982.86 389.15 2011.60 411.06C2040.34 432.96 2068.19 454.38 2093.82 473.94C2119.44 493.50 2142.94 511.36 2165.35 528.42C2187.75 545.48 2209.07 561.75 2228.27 576.32C2247.46 590.88 2264.72 603.82 2280.50 615.81C2296.28 627.81 2310.23 638.55 2322.95 648.27C2335.66 658.00 2346.64 666.43 2356.78 674.15C2366.92 681.87 2375.68 688.42 2383.79 694.58C2391.90 700.75 2398.83 706.08 2405.46 711.15C2412.09 716.22 2418.07 720.80 2423.56 725.00C2429.05 729.20 2433.95 732.98 2438.40 736.35C2442.85 739.72 2446.81 742.59 2450.27 745.20C2453.74 747.81 2456.56 750.01 2459.18 752.01C2461.80 754.02 2464.03 755.72 2466.00 757.23C2467.98 758.75 2469.66 760.03 2471.05 761.09C2472.43 762.15 2473.33 762.83 2474.31 763.59C2475.30 764.35 2475.20 764.27 2476.99 765.63C2478.77 767.00 2483.66 770.74 2485.00 771.76Z"/></clipPath><clipPath id="itri"><path d="M2322.65 647.59 L1090.93 -192.31 L749.61 1237.79 Z"/></clipPath><linearGradient id="io0" gradientUnits="userSpaceOnUse" x1="1508.2" y1="0" x2="1585.0" y2="0"><stop offset="0.0000" stop-color="#679c00"/><stop offset="1.0000" stop-color="#809c00"/></linearGradient><linearGradient id="io1" gradientUnits="userSpaceOnUse" x1="1508.2" y1="0" x2="1587.0" y2="0"><stop offset="0.0000" stop-color="#679c00"/><stop offset="1.0000" stop-color="#819c00"/></linearGradient><linearGradient id="io2" gradientUnits="userSpaceOnUse" x1="1508.2" y1="0" x2="1590.0" y2="0"><stop offset="0.0000" stop-color="#689c00"/><stop offset="1.0000" stop-color="#839c00"/></linearGradient><linearGradient id="io3" gradientUnits="userSpaceOnUse" x1="1508.2" y1="0" x2="1592.0" y2="0"><stop offset="0.0000" stop-color="#689c00"/><stop offset="1.0000" stop-color="#849c00"/></linearGradient><linearGradient id="io4" gradientUnits="userSpaceOnUse" x1="1508.2" y1="0" x2="1595.0" y2="0"><stop offset="0.0000" stop-color="#699c00"/><stop offset="1.0000" stop-color="#869c00"/></linearGradient><linearGradient id="io5" gradientUnits="userSpaceOnUse" x1="1508.2" y1="0" x2="1598.0" y2="0"><stop offset="0.0000" stop-color="#699c00"/><stop offset="1.0000" stop-color="#879c00"/></linearGradient><linearGradient id="io6" gradientUnits="userSpaceOnUse" x1="1508.2" y1="0" x2="1600.0" y2="0"><stop offset="0.0000" stop-color="#699c00"/><stop offset="1.0000" stop-color="#889c00"/></linearGradient><linearGradient id="io7" gradientUnits="userSpaceOnUse" x1="1508.2" y1="0" x2="1603.0" y2="0"><stop offset="0.0000" stop-color="#6a9c00"/><stop offset="1.0000" stop-color="#8a9c00"/></linearGradient><linearGradient id="io8" gradientUnits="userSpaceOnUse" x1="1508.2" y1="0" x2="1606.0" y2="0"><stop offset="0.0000" stop-color="#6a9c00"/><stop offset="1.0000" stop-color="#8c9c00"/></linearGradient><linearGradient id="io9" gradientUnits="userSpaceOnUse" x1="1508.2" y1="0" x2="1608.0" y2="0"><stop offset="0.0000" stop-color="#6b9c00"/><stop offset="1.0000" stop-color="#8d9c00"/></linearGradient><linearGradient id="io10" gradientUnits="userSpaceOnUse" x1="1508.2" y1="0" x2="1611.0" y2="0"><stop offset="0.0000" stop-color="#6b9c01"/><stop offset="1.0000" stop-color="#8f9c00"/></linearGradient><linearGradient id="io11" gradientUnits="userSpaceOnUse" x1="1508.2" y1="0" x2="1614.0" y2="0"><stop offset="0.0000" stop-color="#6c9c01"/><stop offset="1.0000" stop-color="#909c00"/></linearGradient><linearGradient id="io12" gradientUnits="userSpaceOnUse" x1="1508.2" y1="0" x2="1616.0" y2="0"><stop offset="0.0000" stop-color="#6c9c01"/><stop offset="1.0000" stop-color="#929c00"/></linearGradient><linearGradient id="io13" gradientUnits="userSpaceOnUse" x1="1508.2" y1="0" x2="1619.0" y2="0"><stop offset="0.0000" stop-color="#6c9c01"/><stop offset="1.0000" stop-color="#939c00"/></linearGradient><linearGradient id="io14" gradientUnits="userSpaceOnUse" x1="1508.2" y1="0" x2="1622.0" y2="0"><stop offset="0.0000" stop-color="#6d9c01"/><stop offset="1.0000" stop-color="#959c00"/></linearGradient><linearGradient id="io15" gradientUnits="userSpaceOnUse" x1="1508.2" y1="0" x2="1624.0" y2="0"><stop offset="0.0000" stop-color="#6d9c01"/><stop offset="1.0000" stop-color="#969c00"/></linearGradient><linearGradient id="io16" gradientUnits="userSpaceOnUse" x1="1508.2" y1="0" x2="1627.0" y2="0"><stop offset="0.0000" stop-color="#6e9c01"/><stop offset="1.0000" stop-color="#989c00"/></linearGradient><linearGradient id="io17" gradientUnits="userSpaceOnUse" x1="1508.2" y1="0" x2="1630.0" y2="0"><stop offset="0.0000" stop-color="#6e9c01"/><stop offset="1.0000" stop-color="#9a9c00"/></linearGradient><linearGradient id="io18" gradientUnits="userSpaceOnUse" x1="1508.2" y1="0" x2="1632.0" y2="0"><stop offset="0.0000" stop-color="#6f9c01"/><stop offset="1.0000" stop-color="#9b9c00"/></linearGradient><linearGradient id="io19" gradientUnits="userSpaceOnUse" x1="1508.2" y1="0" x2="1635.0" y2="0"><stop offset="0.0000" stop-color="#6f9c02"/><stop offset="1.0000" stop-color="#9c9a00"/></linearGradient><linearGradient id="io20" gradientUnits="userSpaceOnUse" x1="1508.2" y1="0" x2="1637.0" y2="0"><stop offset="0.0000" stop-color="#709c02"/><stop offset="1.0000" stop-color="#9c9900"/></linearGradient><linearGradient id="io21" gradientUnits="userSpaceOnUse" x1="1508.2" y1="0" x2="1640.0" y2="0"><stop offset="0.0000" stop-color="#709c02"/><stop offset="0.9674" stop-color="#9c9900"/><stop offset="1.0000" stop-color="#9c9700"/></linearGradient><linearGradient id="io22" gradientUnits="userSpaceOnUse" x1="1508.2" y1="0" x2="1643.0" y2="0"><stop offset="0.0000" stop-color="#719c02"/><stop offset="0.9384" stop-color="#9c9800"/><stop offset="1.0000" stop-color="#9c9500"/></linearGradient><linearGradient id="io23" gradientUnits="userSpaceOnUse" x1="1508.2" y1="0" x2="1645.0" y2="0"><stop offset="0.0000" stop-color="#719c02"/><stop offset="0.9101" stop-color="#9c9800"/><stop offset="1.0000" stop-color="#9c9400"/></linearGradient><linearGradient id="io24" gradientUnits="userSpaceOnUse" x1="1508.2" y1="0" x2="1648.0" y2="0"><stop offset="0.0000" stop-color="#719c02"/><stop offset="0.8763" stop-color="#9c9900"/><stop offset="1.0000" stop-color="#9c9200"/></linearGradient><linearGradient id="io25" gradientUnits="userSpaceOnUse" x1="1508.2" y1="0" x2="1651.0" y2="0"><stop offset="0.0000" stop-color="#729c02"/><stop offset="0.8508" stop-color="#9c9800"/><stop offset="1.0000" stop-color="#9c9100"/></linearGradient><linearGradient id="io26" gradientUnits="userSpaceOnUse" x1="1508.2" y1="0" x2="1653.0" y2="0"><stop offset="0.0000" stop-color="#729c03"/><stop offset="0.8253" stop-color="#9c9900"/><stop offset="1.0000" stop-color="#9c8f00"/></linearGradient><linearGradient id="io27" gradientUnits="userSpaceOnUse" x1="1508.2" y1="0" x2="1656.0" y2="0"><stop offset="0.0000" stop-color="#739c03"/><stop offset="0.8018" stop-color="#9c9800"/><stop offset="1.0000" stop-color="#9c8e00"/></linearGradient><linearGradient id="io28" gradientUnits="userSpaceOnUse" x1="1508.2" y1="0" x2="1658.0" y2="0"><stop offset="0.0000" stop-color="#739c03"/><stop offset="0.7777" stop-color="#9c9900"/><stop offset="1.0000" stop-color="#9c8c00"/></linearGradient><linearGradient id="io29" gradientUnits="userSpaceOnUse" x1="1508.2" y1="0" x2="1661.0" y2="0"><stop offset="0.0000" stop-color="#749c03"/><stop offset="0.7493" stop-color="#9c9900"/><stop offset="1.0000" stop-color="#9c8b00"/></linearGradient><linearGradient id="io30" gradientUnits="userSpaceOnUse" x1="1508.2" y1="0" x2="1664.0" y2="0"><stop offset="0.0000" stop-color="#749c03"/><stop offset="0.7285" stop-color="#9c9800"/><stop offset="1.0000" stop-color="#9c8900"/></linearGradient><linearGradient id="io31" gradientUnits="userSpaceOnUse" x1="1508.2" y1="0" x2="1666.0" y2="0"><stop offset="0.0000" stop-color="#759c03"/><stop offset="0.7066" stop-color="#9c9900"/><stop offset="1.0000" stop-color="#9c8800"/></linearGradient><linearGradient id="io32" gradientUnits="userSpaceOnUse" x1="1508.2" y1="0" x2="1669.0" y2="0"><stop offset="0.0000" stop-color="#759c03"/><stop offset="0.6872" stop-color="#9c9800"/><stop offset="1.0000" stop-color="#9c8600"/></linearGradient><linearGradient id="io33" gradientUnits="userSpaceOnUse" x1="1508.2" y1="0" x2="1672.0" y2="0"><stop offset="0.0000" stop-color="#769c04"/><stop offset="0.6624" stop-color="#9c9900"/><stop offset="1.0000" stop-color="#9c8500"/></linearGradient><linearGradient id="io34" gradientUnits="userSpaceOnUse" x1="1508.2" y1="0" x2="1674.0" y2="0"><stop offset="0.0000" stop-color="#769c04"/><stop offset="0.6484" stop-color="#9c9800"/><stop offset="1.0000" stop-color="#9c8400"/></linearGradient><linearGradient id="io35" gradientUnits="userSpaceOnUse" x1="1508.2" y1="0" x2="1677.0" y2="0"><stop offset="0.0000" stop-color="#779c04"/><stop offset="0.6250" stop-color="#9c9800"/><stop offset="1.0000" stop-color="#9c8200"/></linearGradient><linearGradient id="io36" gradientUnits="userSpaceOnUse" x1="1508.2" y1="0" x2="1680.0" y2="0"><stop offset="0.0000" stop-color="#779c04"/><stop offset="0.6024" stop-color="#9c9900"/><stop offset="1.0000" stop-color="#9c8100"/></linearGradient><linearGradient id="io37" gradientUnits="userSpaceOnUse" x1="1508.2" y1="0" x2="1682.0" y2="0"><stop offset="0.0000" stop-color="#789c04"/><stop offset="0.5898" stop-color="#9c9800"/><stop offset="1.0000" stop-color="#9c8000"/></linearGradient><linearGradient id="io38" gradientUnits="userSpaceOnUse" x1="1508.2" y1="0" x2="1685.0" y2="0"><stop offset="0.0000" stop-color="#789c04"/><stop offset="0.5684" stop-color="#9c9900"/><stop offset="1.0000" stop-color="#9c7e00"/></linearGradient><linearGradient id="io39" gradientUnits="userSpaceOnUse" x1="1508.2" y1="0" x2="1687.0" y2="0"><stop offset="0.0000" stop-color="#799c05"/><stop offset="0.5565" stop-color="#9c9800"/><stop offset="1.0000" stop-color="#9c7d00"/></linearGradient><linearGradient id="io40" gradientUnits="userSpaceOnUse" x1="1508.2" y1="0" x2="1690.0" y2="0"><stop offset="0.0000" stop-color="#799c05"/><stop offset="0.5363" stop-color="#9c9800"/><stop offset="1.0000" stop-color="#9c7c00"/></linearGradient><linearGradient id="io41" gradientUnits="userSpaceOnUse" x1="1508.2" y1="0" x2="1693.0" y2="0"><stop offset="0.0000" stop-color="#7a9c05"/><stop offset="0.5168" stop-color="#9c9900"/><stop offset="1.0000" stop-color="#9c7a00"/></linearGradient><linearGradient id="io42" gradientUnits="userSpaceOnUse" x1="1508.2" y1="0" x2="1695.0" y2="0"><stop offset="0.0000" stop-color="#7a9c05"/><stop offset="0.5059" stop-color="#9c9801"/><stop offset="1.0000" stop-color="#9c7900"/></linearGradient><linearGradient id="io43" gradientUnits="userSpaceOnUse" x1="1508.2" y1="0" x2="1698.0" y2="0"><stop offset="0.0000" stop-color="#7b9c05"/><stop offset="0.4874" stop-color="#9c9901"/><stop offset="1.0000" stop-color="#9c7800"/></linearGradient><linearGradient id="io44" gradientUnits="userSpaceOnUse" x1="1508.2" y1="0" x2="1700.6" y2="0"><stop offset="0.0000" stop-color="#7b9c05"/><stop offset="0.4756" stop-color="#9c9801"/><stop offset="1.0000" stop-color="#9c7700"/></linearGradient><linearGradient id="io45" gradientUnits="userSpaceOnUse" x1="1508.2" y1="0" x2="1700.6" y2="0"><stop offset="0.0000" stop-color="#7c9c06"/><stop offset="0.4652" stop-color="#9c9801"/><stop offset="1.0000" stop-color="#9c7600"/></linearGradient><linearGradient id="io46" gradientUnits="userSpaceOnUse" x1="1508.2" y1="0" x2="1700.6" y2="0"><stop offset="0.0000" stop-color="#7c9c06"/><stop offset="0.4600" stop-color="#9c9801"/><stop offset="1.0000" stop-color="#9c7600"/></linearGradient><linearGradient id="io47" gradientUnits="userSpaceOnUse" x1="1508.2" y1="0" x2="1700.6" y2="0"><stop offset="0.0000" stop-color="#7d9c06"/><stop offset="0.4496" stop-color="#9c9802"/><stop offset="1.0000" stop-color="#9c7500"/></linearGradient><linearGradient id="io48" gradientUnits="userSpaceOnUse" x1="1508.2" y1="0" x2="1700.6" y2="0"><stop offset="0.0000" stop-color="#7d9c06"/><stop offset="0.4392" stop-color="#9c9902"/><stop offset="1.0000" stop-color="#9c7500"/></linearGradient><linearGradient id="io49" gradientUnits="userSpaceOnUse" x1="1508.2" y1="0" x2="1700.6" y2="0"><stop offset="0.0000" stop-color="#7e9c06"/><stop offset="0.4340" stop-color="#9c9802"/><stop offset="1.0000" stop-color="#9c7400"/></linearGradient><linearGradient id="io50" gradientUnits="userSpaceOnUse" x1="1508.2" y1="0" x2="1700.6" y2="0"><stop offset="0.0000" stop-color="#7e9c07"/><stop offset="0.4236" stop-color="#9c9802"/><stop offset="1.0000" stop-color="#9c7400"/></linearGradient><linearGradient id="io51" gradientUnits="userSpaceOnUse" x1="1508.2" y1="0" x2="1700.6" y2="0"><stop offset="0.0000" stop-color="#7f9c07"/><stop offset="0.4184" stop-color="#9c9802"/><stop offset="1.0000" stop-color="#9c7300"/></linearGradient><linearGradient id="io52" gradientUnits="userSpaceOnUse" x1="1508.2" y1="0" x2="1700.6" y2="0"><stop offset="0.0000" stop-color="#7f9c07"/><stop offset="0.4080" stop-color="#9c9803"/><stop offset="1.0000" stop-color="#9c7300"/></linearGradient><linearGradient id="io53" gradientUnits="userSpaceOnUse" x1="1508.2" y1="0" x2="1700.6" y2="0"><stop offset="0.0000" stop-color="#809c07"/><stop offset="0.3976" stop-color="#9c9903"/><stop offset="1.0000" stop-color="#9c7200"/></linearGradient><linearGradient id="io54" gradientUnits="userSpaceOnUse" x1="1508.2" y1="0" x2="1700.6" y2="0"><stop offset="0.0000" stop-color="#819c07"/><stop offset="0.3924" stop-color="#9c9803"/><stop offset="1.0000" stop-color="#9c7200"/></linearGradient><linearGradient id="io55" gradientUnits="userSpaceOnUse" x1="1508.2" y1="0" x2="1700.6" y2="0"><stop offset="0.0000" stop-color="#819c08"/><stop offset="0.3820" stop-color="#9c9803"/><stop offset="1.0000" stop-color="#9c7100"/></linearGradient><linearGradient id="io56" gradientUnits="userSpaceOnUse" x1="1508.2" y1="0" x2="1700.6" y2="0"><stop offset="0.0000" stop-color="#829c08"/><stop offset="0.3768" stop-color="#9c9804"/><stop offset="1.0000" stop-color="#9c7100"/></linearGradient><linearGradient id="io57" gradientUnits="userSpaceOnUse" x1="1508.2" y1="0" x2="1700.6" y2="0"><stop offset="0.0000" stop-color="#829c08"/><stop offset="0.3664" stop-color="#9c9804"/><stop offset="1.0000" stop-color="#9c7000"/></linearGradient><linearGradient id="io58" gradientUnits="userSpaceOnUse" x1="1508.2" y1="0" x2="1700.6" y2="0"><stop offset="0.0000" stop-color="#839c08"/><stop offset="0.3612" stop-color="#9c9804"/><stop offset="1.0000" stop-color="#9c7000"/></linearGradient><linearGradient id="io59" gradientUnits="userSpaceOnUse" x1="1508.2" y1="0" x2="1700.6" y2="0"><stop offset="0.0000" stop-color="#839c08"/><stop offset="0.3508" stop-color="#9c9804"/><stop offset="1.0000" stop-color="#9c6f00"/></linearGradient><linearGradient id="io60" gradientUnits="userSpaceOnUse" x1="1508.2" y1="0" x2="1700.6" y2="0"><stop offset="0.0000" stop-color="#849c09"/><stop offset="0.3404" stop-color="#9c9805"/><stop offset="1.0000" stop-color="#9c6f00"/></linearGradient><linearGradient id="io61" gradientUnits="userSpaceOnUse" x1="1508.2" y1="0" x2="1700.6" y2="0"><stop offset="0.0000" stop-color="#859c09"/><stop offset="0.3352" stop-color="#9c9805"/><stop offset="1.0000" stop-color="#9c6e00"/></linearGradient><linearGradient id="io62" gradientUnits="userSpaceOnUse" x1="1508.2" y1="0" x2="1700.6" y2="0"><stop offset="0.0000" stop-color="#859c09"/><stop offset="0.3248" stop-color="#9c9805"/><stop offset="1.0000" stop-color="#9c6e00"/></linearGradient><linearGradient id="io63" gradientUnits="userSpaceOnUse" x1="1508.2" y1="0" x2="1700.6" y2="0"><stop offset="0.0000" stop-color="#869c09"/><stop offset="0.3196" stop-color="#9c9806"/><stop offset="1.0000" stop-color="#9c6d00"/></linearGradient><linearGradient id="io64" gradientUnits="userSpaceOnUse" x1="1508.2" y1="0" x2="1700.6" y2="0"><stop offset="0.0000" stop-color="#869c09"/><stop offset="0.3093" stop-color="#9c9806"/><stop offset="1.0000" stop-color="#9c6d00"/></linearGradient><linearGradient id="io65" gradientUnits="userSpaceOnUse" x1="1508.2" y1="0" x2="1700.6" y2="0"><stop offset="0.0000" stop-color="#879c0a"/><stop offset="0.3041" stop-color="#9c9806"/><stop offset="1.0000" stop-color="#9c6c00"/></linearGradient><linearGradient id="io66" gradientUnits="userSpaceOnUse" x1="1508.2" y1="0" x2="1700.6" y2="0"><stop offset="0.0000" stop-color="#879c0a"/><stop offset="0.2937" stop-color="#9c9806"/><stop offset="1.0000" stop-color="#9c6c00"/></linearGradient><linearGradient id="io67" gradientUnits="userSpaceOnUse" x1="1508.2" y1="0" x2="1700.6" y2="0"><stop offset="0.0000" stop-color="#889c0a"/><stop offset="0.2885" stop-color="#9c9807"/><stop offset="1.0000" stop-color="#9c6b00"/></linearGradient><linearGradient id="io68" gradientUnits="userSpaceOnUse" x1="1508.2" y1="0" x2="1700.6" y2="0"><stop offset="0.0000" stop-color="#899c0a"/><stop offset="0.2781" stop-color="#9c9807"/><stop offset="1.0000" stop-color="#9c6b00"/></linearGradient><linearGradient id="io69" gradientUnits="userSpaceOnUse" x1="1508.2" y1="0" x2="1700.6" y2="0"><stop offset="0.0000" stop-color="#899c0b"/><stop offset="0.2677" stop-color="#9c9807"/><stop offset="1.0000" stop-color="#9c6a00"/></linearGradient><linearGradient id="io70" gradientUnits="userSpaceOnUse" x1="1508.2" y1="0" x2="1700.6" y2="0"><stop offset="0.0000" stop-color="#8a9c0b"/><stop offset="0.2625" stop-color="#9c9808"/><stop offset="1.0000" stop-color="#9c6a00"/></linearGradient><linearGradient id="io71" gradientUnits="userSpaceOnUse" x1="1508.2" y1="0" x2="1700.6" y2="0"><stop offset="0.0000" stop-color="#8a9c0b"/><stop offset="0.2521" stop-color="#9c9808"/><stop offset="0.9953" stop-color="#9c6a00"/><stop offset="1.0000" stop-color="#9c6900"/></linearGradient><linearGradient id="io72" gradientUnits="userSpaceOnUse" x1="1508.2" y1="0" x2="1700.6" y2="0"><stop offset="0.0000" stop-color="#8b9c0b"/><stop offset="0.2469" stop-color="#9c9808"/><stop offset="0.9901" stop-color="#9c6900"/><stop offset="1.0000" stop-color="#9c6900"/></linearGradient><linearGradient id="io73" gradientUnits="userSpaceOnUse" x1="1508.2" y1="0" x2="1700.6" y2="0"><stop offset="0.0000" stop-color="#8c9c0c"/><stop offset="0.2365" stop-color="#9c9809"/><stop offset="0.9797" stop-color="#9c6a00"/><stop offset="1.0000" stop-color="#9c6900"/></linearGradient><linearGradient id="ii0" gradientUnits="userSpaceOnUse" x1="1508.2" y1="0" x2="1511.0" y2="0"><stop offset="0.0000" stop-color="#acff00"/><stop offset="1.0000" stop-color="#adff00"/></linearGradient><linearGradient id="ii1" gradientUnits="userSpaceOnUse" x1="1508.2" y1="0" x2="1514.0" y2="0"><stop offset="0.0000" stop-color="#acff00"/><stop offset="1.0000" stop-color="#afff00"/></linearGradient><linearGradient id="ii2" gradientUnits="userSpaceOnUse" x1="1508.2" y1="0" x2="1517.0" y2="0"><stop offset="0.0000" stop-color="#adff00"/><stop offset="1.0000" stop-color="#b2ff00"/></linearGradient><linearGradient id="ii3" gradientUnits="userSpaceOnUse" x1="1508.2" y1="0" x2="1520.0" y2="0"><stop offset="0.0000" stop-color="#aeff00"/><stop offset="1.0000" stop-color="#b4ff00"/></linearGradient><linearGradient id="ii4" gradientUnits="userSpaceOnUse" x1="1508.2" y1="0" x2="1523.0" y2="0"><stop offset="0.0000" stop-color="#aeff01"/><stop offset="1.0000" stop-color="#b6ff00"/></linearGradient><linearGradient id="ii5" gradientUnits="userSpaceOnUse" x1="1508.2" y1="0" x2="1525.0" y2="0"><stop offset="0.0000" stop-color="#afff01"/><stop offset="1.0000" stop-color="#b8ff00"/></linearGradient><linearGradient id="ii6" gradientUnits="userSpaceOnUse" x1="1508.2" y1="0" x2="1528.0" y2="0"><stop offset="0.0000" stop-color="#b0ff01"/><stop offset="1.0000" stop-color="#baff00"/></linearGradient><linearGradient id="ii7" gradientUnits="userSpaceOnUse" x1="1508.2" y1="0" x2="1531.0" y2="0"><stop offset="0.0000" stop-color="#b0ff01"/><stop offset="1.0000" stop-color="#bdff00"/></linearGradient><linearGradient id="ii8" gradientUnits="userSpaceOnUse" x1="1508.2" y1="0" x2="1534.0" y2="0"><stop offset="0.0000" stop-color="#b1ff01"/><stop offset="1.0000" stop-color="#bfff00"/></linearGradient><linearGradient id="ii9" gradientUnits="userSpaceOnUse" x1="1508.2" y1="0" x2="1537.0" y2="0"><stop offset="0.0000" stop-color="#b2ff01"/><stop offset="1.0000" stop-color="#c1ff00"/></linearGradient><linearGradient id="ii10" gradientUnits="userSpaceOnUse" x1="1508.2" y1="0" x2="1540.0" y2="0"><stop offset="0.0000" stop-color="#b3ff02"/><stop offset="1.0000" stop-color="#c4ff00"/></linearGradient><linearGradient id="ii11" gradientUnits="userSpaceOnUse" x1="1508.2" y1="0" x2="1543.0" y2="0"><stop offset="0.0000" stop-color="#b3ff02"/><stop offset="1.0000" stop-color="#c6ff00"/></linearGradient><linearGradient id="ii12" gradientUnits="userSpaceOnUse" x1="1508.2" y1="0" x2="1546.0" y2="0"><stop offset="0.0000" stop-color="#b4ff02"/><stop offset="1.0000" stop-color="#c9ff00"/></linearGradient><linearGradient id="ii13" gradientUnits="userSpaceOnUse" x1="1508.2" y1="0" x2="1549.0" y2="0"><stop offset="0.0000" stop-color="#b5ff02"/><stop offset="1.0000" stop-color="#cbff00"/></linearGradient><linearGradient id="ii14" gradientUnits="userSpaceOnUse" x1="1508.2" y1="0" x2="1552.0" y2="0"><stop offset="0.0000" stop-color="#b5ff02"/><stop offset="1.0000" stop-color="#ceff00"/></linearGradient><linearGradient id="ii15" gradientUnits="userSpaceOnUse" x1="1508.2" y1="0" x2="1555.0" y2="0"><stop offset="0.0000" stop-color="#b6ff03"/><stop offset="1.0000" stop-color="#d0ff00"/></linearGradient><linearGradient id="ii16" gradientUnits="userSpaceOnUse" x1="1508.2" y1="0" x2="1558.0" y2="0"><stop offset="0.0000" stop-color="#b7ff03"/><stop offset="1.0000" stop-color="#d3ff00"/></linearGradient><linearGradient id="ii17" gradientUnits="userSpaceOnUse" x1="1508.2" y1="0" x2="1561.0" y2="0"><stop offset="0.0000" stop-color="#b8ff03"/><stop offset="1.0000" stop-color="#d6ff00"/></linearGradient><linearGradient id="ii18" gradientUnits="userSpaceOnUse" x1="1508.2" y1="0" x2="1564.0" y2="0"><stop offset="0.0000" stop-color="#b8ff03"/><stop offset="1.0000" stop-color="#d8ff00"/></linearGradient><linearGradient id="ii19" gradientUnits="userSpaceOnUse" x1="1508.2" y1="0" x2="1567.0" y2="0"><stop offset="0.0000" stop-color="#b9ff03"/><stop offset="1.0000" stop-color="#dbff00"/></linearGradient><linearGradient id="ii20" gradientUnits="userSpaceOnUse" x1="1508.2" y1="0" x2="1569.0" y2="0"><stop offset="0.0000" stop-color="#baff04"/><stop offset="1.0000" stop-color="#ddff00"/></linearGradient><linearGradient id="ii21" gradientUnits="userSpaceOnUse" x1="1508.2" y1="0" x2="1572.0" y2="0"><stop offset="0.0000" stop-color="#bbff04"/><stop offset="1.0000" stop-color="#e0ff00"/></linearGradient><linearGradient id="ii22" gradientUnits="userSpaceOnUse" x1="1508.2" y1="0" x2="1575.0" y2="0"><stop offset="0.0000" stop-color="#bbff04"/><stop offset="1.0000" stop-color="#e2ff00"/></linearGradient><linearGradient id="ii23" gradientUnits="userSpaceOnUse" x1="1508.2" y1="0" x2="1578.0" y2="0"><stop offset="0.0000" stop-color="#bcff04"/><stop offset="1.0000" stop-color="#e5ff00"/></linearGradient><linearGradient id="ii24" gradientUnits="userSpaceOnUse" x1="1508.2" y1="0" x2="1581.0" y2="0"><stop offset="0.0000" stop-color="#bdff05"/><stop offset="1.0000" stop-color="#e8ff00"/></linearGradient><linearGradient id="ii25" gradientUnits="userSpaceOnUse" x1="1508.2" y1="0" x2="1584.0" y2="0"><stop offset="0.0000" stop-color="#beff05"/><stop offset="1.0000" stop-color="#ebff00"/></linearGradient><linearGradient id="ii26" gradientUnits="userSpaceOnUse" x1="1508.2" y1="0" x2="1587.0" y2="0"><stop offset="0.0000" stop-color="#bfff05"/><stop offset="1.0000" stop-color="#eeff00"/></linearGradient><linearGradient id="ii27" gradientUnits="userSpaceOnUse" x1="1508.2" y1="0" x2="1590.0" y2="0"><stop offset="0.0000" stop-color="#bfff05"/><stop offset="1.0000" stop-color="#f1ff00"/></linearGradient><linearGradient id="ii28" gradientUnits="userSpaceOnUse" x1="1508.2" y1="0" x2="1593.0" y2="0"><stop offset="0.0000" stop-color="#c0ff06"/><stop offset="1.0000" stop-color="#f4ff00"/></linearGradient><linearGradient id="ii29" gradientUnits="userSpaceOnUse" x1="1508.2" y1="0" x2="1596.0" y2="0"><stop offset="0.0000" stop-color="#c1ff06"/><stop offset="1.0000" stop-color="#f6ff00"/></linearGradient><linearGradient id="ii30" gradientUnits="userSpaceOnUse" x1="1508.2" y1="0" x2="1599.0" y2="0"><stop offset="0.0000" stop-color="#c2ff06"/><stop offset="1.0000" stop-color="#f9ff00"/></linearGradient><linearGradient id="ii31" gradientUnits="userSpaceOnUse" x1="1508.2" y1="0" x2="1602.0" y2="0"><stop offset="0.0000" stop-color="#c3ff06"/><stop offset="1.0000" stop-color="#fcff00"/></linearGradient><linearGradient id="ii32" gradientUnits="userSpaceOnUse" x1="1508.2" y1="0" x2="1605.0" y2="0"><stop offset="0.0000" stop-color="#c3ff07"/><stop offset="1.0000" stop-color="#ffff00"/></linearGradient><linearGradient id="ii33" gradientUnits="userSpaceOnUse" x1="1508.2" y1="0" x2="1608.0" y2="0"><stop offset="0.0000" stop-color="#c4ff07"/><stop offset="0.9870" stop-color="#fffc00"/><stop offset="1.0000" stop-color="#fffc00"/></linearGradient><linearGradient id="ii34" gradientUnits="userSpaceOnUse" x1="1508.2" y1="0" x2="1611.0" y2="0"><stop offset="0.0000" stop-color="#c5ff07"/><stop offset="0.9484" stop-color="#fffc00"/><stop offset="1.0000" stop-color="#fff900"/></linearGradient><linearGradient id="ii35" gradientUnits="userSpaceOnUse" x1="1508.2" y1="0" x2="1613.0" y2="0"><stop offset="0.0000" stop-color="#c6ff08"/><stop offset="0.9113" stop-color="#fffc00"/><stop offset="1.0000" stop-color="#fff600"/></linearGradient><linearGradient id="ii36" gradientUnits="userSpaceOnUse" x1="1508.2" y1="0" x2="1616.0" y2="0"><stop offset="0.0000" stop-color="#c7ff08"/><stop offset="0.8766" stop-color="#fffc01"/><stop offset="1.0000" stop-color="#fff300"/></linearGradient><linearGradient id="ii37" gradientUnits="userSpaceOnUse" x1="1508.2" y1="0" x2="1619.0" y2="0"><stop offset="0.0000" stop-color="#c7ff08"/><stop offset="0.8348" stop-color="#fffc01"/><stop offset="1.0000" stop-color="#fff000"/></linearGradient><linearGradient id="ii38" gradientUnits="userSpaceOnUse" x1="1508.2" y1="0" x2="1622.0" y2="0"><stop offset="0.0000" stop-color="#c8ff08"/><stop offset="0.7953" stop-color="#fffc01"/><stop offset="1.0000" stop-color="#ffee00"/></linearGradient><linearGradient id="ii39" gradientUnits="userSpaceOnUse" x1="1508.2" y1="0" x2="1625.0" y2="0"><stop offset="0.0000" stop-color="#c9ff09"/><stop offset="0.7663" stop-color="#fffc02"/><stop offset="1.0000" stop-color="#ffeb00"/></linearGradient><linearGradient id="ii40" gradientUnits="userSpaceOnUse" x1="1508.2" y1="0" x2="1628.0" y2="0"><stop offset="0.0000" stop-color="#caff09"/><stop offset="0.7304" stop-color="#fffc02"/><stop offset="1.0000" stop-color="#ffe800"/></linearGradient><linearGradient id="ii41" gradientUnits="userSpaceOnUse" x1="1508.2" y1="0" x2="1631.0" y2="0"><stop offset="0.0000" stop-color="#cbff09"/><stop offset="0.7044" stop-color="#fffc02"/><stop offset="1.0000" stop-color="#ffe500"/></linearGradient><linearGradient id="ii42" gradientUnits="userSpaceOnUse" x1="1508.2" y1="0" x2="1634.0" y2="0"><stop offset="0.0000" stop-color="#ccff0a"/><stop offset="0.6717" stop-color="#fffc03"/><stop offset="1.0000" stop-color="#ffe300"/></linearGradient><linearGradient id="ii43" gradientUnits="userSpaceOnUse" x1="1508.2" y1="0" x2="1637.0" y2="0"><stop offset="0.0000" stop-color="#cdff0a"/><stop offset="0.6405" stop-color="#fffc03"/><stop offset="1.0000" stop-color="#ffe000"/></linearGradient><linearGradient id="ii44" gradientUnits="userSpaceOnUse" x1="1508.2" y1="0" x2="1640.0" y2="0"><stop offset="0.0000" stop-color="#cdff0a"/><stop offset="0.6184" stop-color="#fffc03"/><stop offset="1.0000" stop-color="#ffdd00"/></linearGradient><linearGradient id="ii45" gradientUnits="userSpaceOnUse" x1="1508.2" y1="0" x2="1643.0" y2="0"><stop offset="0.0000" stop-color="#ceff0a"/><stop offset="0.5898" stop-color="#fffc04"/><stop offset="1.0000" stop-color="#ffdb00"/></linearGradient><linearGradient id="ii46" gradientUnits="userSpaceOnUse" x1="1508.2" y1="0" x2="1646.0" y2="0"><stop offset="0.0000" stop-color="#cfff0b"/><stop offset="0.5697" stop-color="#fffc04"/><stop offset="1.0000" stop-color="#ffd800"/></linearGradient><linearGradient id="ii47" gradientUnits="userSpaceOnUse" x1="1508.2" y1="0" x2="1649.0" y2="0"><stop offset="0.0000" stop-color="#d0ff0b"/><stop offset="0.5433" stop-color="#fffc04"/><stop offset="1.0000" stop-color="#ffd600"/></linearGradient><linearGradient id="ii48" gradientUnits="userSpaceOnUse" x1="1508.2" y1="0" x2="1652.0" y2="0"><stop offset="0.0000" stop-color="#d1ff0b"/><stop offset="0.5250" stop-color="#fffc05"/><stop offset="1.0000" stop-color="#ffd300"/></linearGradient><linearGradient id="ii49" gradientUnits="userSpaceOnUse" x1="1508.2" y1="0" x2="1655.0" y2="0"><stop offset="0.0000" stop-color="#d2ff0c"/><stop offset="0.5007" stop-color="#fffc05"/><stop offset="1.0000" stop-color="#ffd100"/></linearGradient><linearGradient id="ii50" gradientUnits="userSpaceOnUse" x1="1508.2" y1="0" x2="1657.0" y2="0"><stop offset="0.0000" stop-color="#d3ff0c"/><stop offset="0.4805" stop-color="#fffc06"/><stop offset="1.0000" stop-color="#ffcf00"/></linearGradient><linearGradient id="ii51" gradientUnits="userSpaceOnUse" x1="1508.2" y1="0" x2="1660.0" y2="0"><stop offset="0.0000" stop-color="#d4ff0c"/><stop offset="0.4644" stop-color="#fffc06"/><stop offset="1.0000" stop-color="#ffcd00"/></linearGradient><linearGradient id="ii52" gradientUnits="userSpaceOnUse" x1="1508.2" y1="0" x2="1663.0" y2="0"><stop offset="0.0000" stop-color="#d5ff0d"/><stop offset="0.4425" stop-color="#fffc06"/><stop offset="1.0000" stop-color="#ffca00"/></linearGradient><linearGradient id="ii53" gradientUnits="userSpaceOnUse" x1="1508.2" y1="0" x2="1666.0" y2="0"><stop offset="0.0000" stop-color="#d6ff0d"/><stop offset="0.4278" stop-color="#fffc07"/><stop offset="1.0000" stop-color="#ffc800"/></linearGradient><linearGradient id="ii54" gradientUnits="userSpaceOnUse" x1="1508.2" y1="0" x2="1669.0" y2="0"><stop offset="0.0000" stop-color="#d6ff0d"/><stop offset="0.4073" stop-color="#fffc07"/><stop offset="1.0000" stop-color="#ffc600"/></linearGradient><linearGradient id="ii55" gradientUnits="userSpaceOnUse" x1="1508.2" y1="0" x2="1672.0" y2="0"><stop offset="0.0000" stop-color="#d7ff0e"/><stop offset="0.3877" stop-color="#fffc08"/><stop offset="1.0000" stop-color="#ffc300"/></linearGradient><linearGradient id="ii56" gradientUnits="userSpaceOnUse" x1="1508.2" y1="0" x2="1675.0" y2="0"><stop offset="0.0000" stop-color="#d8ff0e"/><stop offset="0.3747" stop-color="#fffc08"/><stop offset="1.0000" stop-color="#ffc100"/></linearGradient><linearGradient id="ii57" gradientUnits="userSpaceOnUse" x1="1508.2" y1="0" x2="1678.0" y2="0"><stop offset="0.0000" stop-color="#d9ff0e"/><stop offset="0.3563" stop-color="#fffc09"/><stop offset="0.9923" stop-color="#ffbf00"/><stop offset="1.0000" stop-color="#ffbf00"/></linearGradient><linearGradient id="ii58" gradientUnits="userSpaceOnUse" x1="1508.2" y1="0" x2="1681.0" y2="0"><stop offset="0.0000" stop-color="#daff0f"/><stop offset="0.3443" stop-color="#fffc09"/><stop offset="0.9693" stop-color="#ffbf00"/><stop offset="1.0000" stop-color="#ffbd00"/></linearGradient><linearGradient id="ii59" gradientUnits="userSpaceOnUse" x1="1508.2" y1="0" x2="1684.0" y2="0"><stop offset="0.0000" stop-color="#dbff0f"/><stop offset="0.3271" stop-color="#fffc0a"/><stop offset="0.9414" stop-color="#ffbf00"/><stop offset="1.0000" stop-color="#ffba00"/></linearGradient><linearGradient id="ii60" gradientUnits="userSpaceOnUse" x1="1508.2" y1="0" x2="1687.0" y2="0"><stop offset="0.0000" stop-color="#dcff0f"/><stop offset="0.3160" stop-color="#fffc0a"/><stop offset="0.9200" stop-color="#ffbf01"/><stop offset="1.0000" stop-color="#ffb800"/></linearGradient><linearGradient id="ii61" gradientUnits="userSpaceOnUse" x1="1508.2" y1="0" x2="1690.0" y2="0"><stop offset="0.0000" stop-color="#ddff10"/><stop offset="0.2998" stop-color="#fffc0b"/><stop offset="0.8883" stop-color="#ffbf01"/><stop offset="1.0000" stop-color="#ffb600"/></linearGradient><linearGradient id="ii62" gradientUnits="userSpaceOnUse" x1="1508.2" y1="0" x2="1693.0" y2="0"><stop offset="0.0000" stop-color="#deff10"/><stop offset="0.2841" stop-color="#fffc0b"/><stop offset="0.8631" stop-color="#ffbf01"/><stop offset="1.0000" stop-color="#ffb400"/></linearGradient><linearGradient id="ii63" gradientUnits="userSpaceOnUse" x1="1508.2" y1="0" x2="1696.0" y2="0"><stop offset="0.0000" stop-color="#dfff11"/><stop offset="0.2742" stop-color="#fffc0b"/><stop offset="0.8440" stop-color="#ffbf01"/><stop offset="1.0000" stop-color="#ffb200"/></linearGradient><linearGradient id="ii64" gradientUnits="userSpaceOnUse" x1="1508.2" y1="0" x2="1699.0" y2="0"><stop offset="0.0000" stop-color="#e0ff11"/><stop offset="0.2594" stop-color="#fffc0c"/><stop offset="0.8202" stop-color="#ffbf02"/><stop offset="1.0000" stop-color="#ffb000"/></linearGradient><linearGradient id="ii65" gradientUnits="userSpaceOnUse" x1="1508.2" y1="0" x2="1700.6" y2="0"><stop offset="0.0000" stop-color="#e1ff11"/><stop offset="0.2521" stop-color="#fffc0c"/><stop offset="0.8082" stop-color="#ffbf02"/><stop offset="1.0000" stop-color="#ffae00"/></linearGradient><linearGradient id="ii66" gradientUnits="userSpaceOnUse" x1="1508.2" y1="0" x2="1700.6" y2="0"><stop offset="0.0000" stop-color="#e2ff12"/><stop offset="0.2417" stop-color="#fffc0d"/><stop offset="0.7926" stop-color="#ffbf02"/><stop offset="1.0000" stop-color="#ffae00"/></linearGradient><linearGradient id="ii67" gradientUnits="userSpaceOnUse" x1="1508.2" y1="0" x2="1700.6" y2="0"><stop offset="0.0000" stop-color="#e3ff12"/><stop offset="0.2365" stop-color="#fffc0d"/><stop offset="0.7874" stop-color="#ffbf03"/><stop offset="1.0000" stop-color="#ffad00"/></linearGradient><linearGradient id="ii68" gradientUnits="userSpaceOnUse" x1="1508.2" y1="0" x2="1700.6" y2="0"><stop offset="0.0000" stop-color="#e4ff12"/><stop offset="0.2261" stop-color="#fffc0e"/><stop offset="0.7770" stop-color="#ffbf03"/><stop offset="1.0000" stop-color="#ffac00"/></linearGradient><linearGradient id="ii69" gradientUnits="userSpaceOnUse" x1="1508.2" y1="0" x2="1700.6" y2="0"><stop offset="0.0000" stop-color="#e5ff13"/><stop offset="0.2157" stop-color="#fffc0f"/><stop offset="0.7614" stop-color="#ffc003"/><stop offset="1.0000" stop-color="#ffab00"/></linearGradient></defs>
<rect x="0" y="0" width="1717" height="889" fill="#333333"/>
<rect x="0" y="0" width="1717" height="1.5" fill="#222222"/>
<text transform="translate(24.00,84.20) scale(0.9517,1)" font-size="41.42" fill="#f0f0f0">ColorChecker</text>
<text transform="translate(97.80,142.30) scale(0.9859,1)" font-size="30.52" fill="#f0f0f0" stroke="#f0f0f0" stroke-width="0.25">Avg dE2000: 2,4</text>
<text transform="translate(85.40,184.40)" font-size="30.52" fill="#f0f0f0" stroke="#f0f0f0" stroke-width="0.25">Max dE2000: 4,42</text>
<text transform="translate(13.70,675.10) scale(1.0375,1)" font-size="29.51" fill="#f0f0f0" stroke="#f0f0f0" stroke-width="0.25">Current Reading</text>
<text transform="translate(13.70,718.20) scale(0.9978,1)" font-size="25.44" fill="#f0f0f0" stroke="#f0f0f0" stroke-width="0.25">x: 0,427</text>
<text transform="translate(13.70,759.80) scale(1.0101,1)" font-size="25.44" fill="#f0f0f0" stroke="#f0f0f0" stroke-width="0.25">y: 0,5091</text>
<text transform="translate(13.70,802.10) scale(1.0041,1)" font-size="25.44" fill="#f0f0f0" stroke="#f0f0f0" stroke-width="0.25">fL: 98,518</text>
<text transform="translate(13.70,844.30) scale(1.0521,1)" font-size="25.44" fill="#f0f0f0" stroke="#f0f0f0" stroke-width="0.25">cd/m²: 337,549</text>
<text transform="translate(161.90,220.00) scale(0.8965,1)" font-size="16.50" fill="#e6e6e6" stroke="#e6e6e6" stroke-width="0.15">DeltaE 2000</text>
<rect x="19.4" y="225.3" width="366.00" height="369.90" fill="#232323"/>
<rect x="65.95" y="225.3" width="2" height="369.90" fill="#868686"/>
<rect x="114.90" y="225.3" width="2" height="369.90" fill="#868686"/>
<rect x="164.00" y="225.3" width="2" height="369.90" fill="#868686"/>
<rect x="213.40" y="225.3" width="2" height="369.90" fill="#868686"/>
<rect x="262.40" y="225.3" width="2" height="369.90" fill="#868686"/>
<rect x="310.30" y="225.3" width="2" height="369.90" fill="#868686"/>
<rect x="359.30" y="225.3" width="2" height="369.90" fill="#868686"/>
<rect x="19.4" y="226.70" width="100.34" height="9.40" fill="#000"/>
<rect x="19.4" y="227.60" width="98.54" height="6.9" fill="url(#bg0)"/>
<rect x="19.4" y="239.03" width="27.00" height="9.40" fill="#000"/>
<rect x="19.4" y="239.93" width="25.20" height="6.9" fill="url(#bg1)"/>
<rect x="19.4" y="251.36" width="94.48" height="9.40" fill="#000"/>
<rect x="19.4" y="252.26" width="92.68" height="6.9" fill="url(#bg2)"/>
<rect x="19.4" y="263.69" width="86.65" height="9.40" fill="#000"/>
<rect x="19.4" y="264.59" width="84.85" height="6.9" fill="url(#bg3)"/>
<rect x="19.4" y="276.02" width="100.59" height="9.40" fill="#000"/>
<rect x="19.4" y="276.92" width="98.79" height="6.9" fill="url(#bg4)"/>
<rect x="19.4" y="288.35" width="61.71" height="9.40" fill="#000"/>
<rect x="19.4" y="289.25" width="59.91" height="6.9" fill="url(#bg5)"/>
<rect x="19.4" y="300.68" width="41.66" height="9.40" fill="#000"/>
<rect x="19.4" y="301.58" width="39.87" height="6.9" fill="url(#bg6)"/>
<rect x="19.4" y="313.01" width="28.71" height="9.40" fill="#000"/>
<rect x="19.4" y="313.91" width="26.91" height="6.9" fill="url(#bg7)"/>
<rect x="19.4" y="325.34" width="55.11" height="9.40" fill="#000"/>
<rect x="19.4" y="326.24" width="53.31" height="6.9" fill="url(#bg8)"/>
<rect x="19.4" y="337.67" width="34.57" height="9.40" fill="#000"/>
<rect x="19.4" y="338.57" width="32.77" height="6.9" fill="url(#bg9)"/>
<rect x="19.4" y="350.00" width="62.69" height="9.40" fill="#000"/>
<rect x="19.4" y="350.90" width="60.89" height="6.9" fill="url(#bg10)"/>
<rect x="19.4" y="362.33" width="42.89" height="9.40" fill="#000"/>
<rect x="19.4" y="363.23" width="41.09" height="6.9" fill="url(#bg11)"/>
<rect x="19.4" y="374.66" width="43.13" height="9.40" fill="#000"/>
<rect x="19.4" y="375.56" width="41.33" height="6.9" fill="url(#bg12)"/>
<rect x="19.4" y="386.99" width="58.78" height="9.40" fill="#000"/>
<rect x="19.4" y="387.89" width="56.98" height="6.9" fill="url(#bg13)"/>
<rect x="19.4" y="399.32" width="26.75" height="9.40" fill="#000"/>
<rect x="19.4" y="400.22" width="24.95" height="6.9" fill="url(#bg14)"/>
<rect x="19.4" y="411.65" width="37.75" height="9.40" fill="#000"/>
<rect x="19.4" y="412.55" width="35.95" height="6.9" fill="url(#bg15)"/>
<rect x="19.4" y="423.98" width="30.91" height="9.40" fill="#000"/>
<rect x="19.4" y="424.88" width="29.11" height="6.9" fill="url(#bg16)"/>
<rect x="19.4" y="436.31" width="42.64" height="9.40" fill="#000"/>
<rect x="19.4" y="437.21" width="40.84" height="6.9" fill="url(#bg17)"/>
<rect x="19.4" y="448.64" width="71.01" height="9.40" fill="#000"/>
<rect x="19.4" y="449.54" width="69.21" height="6.9" fill="url(#bg18)"/>
<rect x="19.4" y="460.97" width="48.76" height="9.40" fill="#000"/>
<rect x="19.4" y="461.87" width="46.96" height="6.9" fill="url(#bg19)"/>
<rect x="19.4" y="473.30" width="49.73" height="9.40" fill="#000"/>
<rect x="19.4" y="474.20" width="47.93" height="6.9" fill="url(#bg20)"/>
<rect x="19.4" y="485.63" width="64.89" height="9.40" fill="#000"/>
<rect x="19.4" y="486.53" width="63.09" height="6.9" fill="url(#bg21)"/>
<rect x="19.4" y="497.96" width="22.11" height="9.40" fill="#000"/>
<rect x="19.4" y="498.86" width="20.30" height="6.9" fill="url(#bg22)"/>
<rect x="19.4" y="510.29" width="24.79" height="9.40" fill="#000"/>
<rect x="19.4" y="511.19" width="22.99" height="6.9" fill="url(#bg23)"/>
<rect x="19.4" y="522.62" width="16.73" height="9.40" fill="#000"/>
<rect x="19.4" y="523.52" width="14.93" height="6.9" fill="url(#bg24)"/>
<rect x="19.4" y="534.95" width="74.43" height="9.40" fill="#000"/>
<rect x="19.4" y="535.85" width="72.63" height="6.9" fill="url(#bg25)"/>
<rect x="19.4" y="547.28" width="83.96" height="9.40" fill="#000"/>
<rect x="19.4" y="548.18" width="82.16" height="6.9" fill="url(#bg26)"/>
<rect x="19.4" y="559.61" width="88.85" height="9.40" fill="#000"/>
<rect x="19.4" y="560.51" width="87.05" height="6.9" fill="url(#bg27)"/>
<rect x="19.4" y="571.94" width="95.45" height="9.40" fill="#000"/>
<rect x="19.4" y="572.84" width="93.66" height="6.9" fill="url(#bg28)"/>
<rect x="19.4" y="584.27" width="108.17" height="9.40" fill="#000"/>
<rect x="19.4" y="585.17" width="106.37" height="6.9" fill="url(#bg29)"/>
<rect x="42.50" y="225.3" width="2" height="369.90" fill="#008a00"/>
<rect x="91.50" y="225.3" width="2" height="369.90" fill="#ffff00"/>
<rect x="262.40" y="225.3" width="2" height="369.90" fill="#ff0000"/>
<rect x="19.4" y="225.3" width="366.00" height="369.90" fill="none" stroke="#a8a8a8" stroke-width="1.6"/>
<rect x="18.60" y="595.2" width="1.6" height="6.5" fill="#dcdcdc"/>
<text transform="translate(15.26,618.00)" font-size="15.99" fill="#e6e6e6" stroke="#e6e6e6" stroke-width="0.15">0</text>
<rect x="66.15" y="595.2" width="1.6" height="6.5" fill="#dcdcdc"/>
<text transform="translate(62.81,618.00)" font-size="15.99" fill="#e6e6e6" stroke="#e6e6e6" stroke-width="0.15">2</text>
<rect x="115.10" y="595.2" width="1.6" height="6.5" fill="#dcdcdc"/>
<text transform="translate(111.76,618.00)" font-size="15.99" fill="#e6e6e6" stroke="#e6e6e6" stroke-width="0.15">4</text>
<rect x="164.20" y="595.2" width="1.6" height="6.5" fill="#dcdcdc"/>
<text transform="translate(160.86,618.00)" font-size="15.99" fill="#e6e6e6" stroke="#e6e6e6" stroke-width="0.15">6</text>
<rect x="213.60" y="595.2" width="1.6" height="6.5" fill="#dcdcdc"/>
<text transform="translate(210.26,618.00)" font-size="15.99" fill="#e6e6e6" stroke="#e6e6e6" stroke-width="0.15">8</text>
<rect x="262.60" y="595.2" width="1.6" height="6.5" fill="#dcdcdc"/>
<text transform="translate(254.81,618.00)" font-size="15.99" fill="#e6e6e6" stroke="#e6e6e6" stroke-width="0.15">10</text>
<rect x="310.50" y="595.2" width="1.6" height="6.5" fill="#dcdcdc"/>
<text transform="translate(302.71,618.00)" font-size="15.99" fill="#e6e6e6" stroke="#e6e6e6" stroke-width="0.15">12</text>
<rect x="359.50" y="595.2" width="1.6" height="6.5" fill="#dcdcdc"/>
<text transform="translate(351.71,618.00)" font-size="15.99" fill="#e6e6e6" stroke="#e6e6e6" stroke-width="0.15">14</text>
<text transform="translate(476.10,66.00) scale(0.9281,1)" font-size="15.99" fill="#e6e6e6" stroke="#e6e6e6" stroke-width="0.15">DeltaL</text>
<rect x="431.5" y="71.3" width="150.00" height="346.50" fill="#232323"/>
<rect x="431.5" y="157.40" width="150.00" height="1.6" fill="#8c8c8c"/>
<rect x="431.5" y="244.30" width="150.00" height="1.6" fill="#8c8c8c"/>
<rect x="431.5" y="331.20" width="150.00" height="1.6" fill="#8c8c8c"/>
<rect x="431.5" y="200.65" width="150.00" height="1.7" fill="#007400"/>
<rect x="431.5" y="287.55" width="150.00" height="1.7" fill="#007400"/>
<rect x="431.5" y="113.75" width="150.00" height="2" fill="#f0f000"/>
<rect x="431.5" y="374.45" width="150.00" height="2" fill="#f0f000"/>
<rect x="431.5" y="71.3" width="150.00" height="346.50" fill="none" stroke="#a4a4a4" stroke-width="1.6"/>
<rect x="425.00" y="70.55" width="6.5" height="1.5" fill="#dcdcdc"/>
<text transform="translate(415.81,76.80)" font-size="15.99" fill="#e6e6e6" stroke="#e6e6e6" stroke-width="0.15">4</text>
<rect x="425.00" y="114.00" width="6.5" height="1.5" fill="#dcdcdc"/>
<text transform="translate(415.81,120.25)" font-size="15.99" fill="#e6e6e6" stroke="#e6e6e6" stroke-width="0.15">3</text>
<rect x="425.00" y="157.45" width="6.5" height="1.5" fill="#dcdcdc"/>
<text transform="translate(415.81,163.70)" font-size="15.99" fill="#e6e6e6" stroke="#e6e6e6" stroke-width="0.15">2</text>
<rect x="425.00" y="200.90" width="6.5" height="1.5" fill="#dcdcdc"/>
<text transform="translate(415.81,207.15)" font-size="15.99" fill="#e6e6e6" stroke="#e6e6e6" stroke-width="0.15">1</text>
<rect x="425.00" y="244.35" width="6.5" height="1.5" fill="#dcdcdc"/>
<text transform="translate(415.81,250.60)" font-size="15.99" fill="#e6e6e6" stroke="#e6e6e6" stroke-width="0.15">0</text>
<rect x="425.00" y="287.80" width="6.5" height="1.5" fill="#dcdcdc"/>
<text transform="translate(410.49,294.05)" font-size="15.99" fill="#e6e6e6" stroke="#e6e6e6" stroke-width="0.15">-1</text>
<rect x="425.00" y="331.25" width="6.5" height="1.5" fill="#dcdcdc"/>
<text transform="translate(410.49,337.50)" font-size="15.99" fill="#e6e6e6" stroke="#e6e6e6" stroke-width="0.15">-2</text>
<rect x="425.00" y="374.70" width="6.5" height="1.5" fill="#dcdcdc"/>
<text transform="translate(410.49,380.95)" font-size="15.99" fill="#e6e6e6" stroke="#e6e6e6" stroke-width="0.15">-3</text>
<rect x="425.00" y="418.15" width="6.5" height="1.5" fill="#dcdcdc"/>
<text transform="translate(410.49,424.40)" font-size="15.99" fill="#e6e6e6" stroke="#e6e6e6" stroke-width="0.15">-4</text>
<text transform="translate(671.60,66.00) scale(0.9043,1)" font-size="15.99" fill="#e6e6e6" stroke="#e6e6e6" stroke-width="0.15">DeltaC</text>
<rect x="635.6" y="71.3" width="142.70" height="346.50" fill="#232323"/>
<rect x="635.6" y="128.43" width="142.70" height="1.6" fill="#8c8c8c"/>
<rect x="635.6" y="186.37" width="142.70" height="1.6" fill="#8c8c8c"/>
<rect x="635.6" y="244.30" width="142.70" height="1.6" fill="#8c8c8c"/>
<rect x="635.6" y="302.23" width="142.70" height="1.6" fill="#8c8c8c"/>
<rect x="635.6" y="360.17" width="142.70" height="1.6" fill="#8c8c8c"/>
<rect x="635.6" y="238.31" width="142.70" height="1.7" fill="#007400"/>
<rect x="635.6" y="249.89" width="142.70" height="1.7" fill="#007400"/>
<rect x="635.6" y="226.72" width="142.70" height="2" fill="#f0f000"/>
<rect x="635.6" y="261.48" width="142.70" height="2" fill="#f0f000"/>
<rect x="635.6" y="71.3" width="142.70" height="346.50" fill="none" stroke="#a4a4a4" stroke-width="1.6"/>
<rect x="629.10" y="70.55" width="6.5" height="1.5" fill="#dcdcdc"/>
<text transform="translate(611.02,76.80)" font-size="15.99" fill="#e6e6e6" stroke="#e6e6e6" stroke-width="0.15">30</text>
<rect x="629.10" y="128.48" width="6.5" height="1.5" fill="#dcdcdc"/>
<text transform="translate(611.02,134.73)" font-size="15.99" fill="#e6e6e6" stroke="#e6e6e6" stroke-width="0.15">20</text>
<rect x="629.10" y="186.42" width="6.5" height="1.5" fill="#dcdcdc"/>
<text transform="translate(611.02,192.67)" font-size="15.99" fill="#e6e6e6" stroke="#e6e6e6" stroke-width="0.15">10</text>
<rect x="629.10" y="244.35" width="6.5" height="1.5" fill="#dcdcdc"/>
<text transform="translate(619.91,250.60)" font-size="15.99" fill="#e6e6e6" stroke="#e6e6e6" stroke-width="0.15">0</text>
<rect x="629.10" y="302.28" width="6.5" height="1.5" fill="#dcdcdc"/>
<text transform="translate(605.70,308.53)" font-size="15.99" fill="#e6e6e6" stroke="#e6e6e6" stroke-width="0.15">-10</text>
<rect x="629.10" y="360.22" width="6.5" height="1.5" fill="#dcdcdc"/>
<text transform="translate(605.70,366.47)" font-size="15.99" fill="#e6e6e6" stroke="#e6e6e6" stroke-width="0.15">-20</text>
<rect x="629.10" y="418.15" width="6.5" height="1.5" fill="#dcdcdc"/>
<text transform="translate(605.70,424.40)" font-size="15.99" fill="#e6e6e6" stroke="#e6e6e6" stroke-width="0.15">-30</text>
<text transform="translate(873.80,66.00) scale(0.9309,1)" font-size="15.99" fill="#e6e6e6" stroke="#e6e6e6" stroke-width="0.15">DeltaH</text>
<rect x="823.6" y="71.3" width="164.70" height="346.50" fill="#232323"/>
<rect x="823.6" y="157.40" width="164.70" height="1.6" fill="#8c8c8c"/>
<rect x="823.6" y="244.30" width="164.70" height="1.6" fill="#8c8c8c"/>
<rect x="823.6" y="331.20" width="164.70" height="1.6" fill="#8c8c8c"/>
<rect x="823.6" y="200.65" width="164.70" height="1.7" fill="#007400"/>
<rect x="823.6" y="287.55" width="164.70" height="1.7" fill="#007400"/>
<rect x="823.6" y="113.75" width="164.70" height="2" fill="#f0f000"/>
<rect x="823.6" y="374.45" width="164.70" height="2" fill="#f0f000"/>
<rect x="823.6" y="71.3" width="164.70" height="346.50" fill="none" stroke="#a4a4a4" stroke-width="1.6"/>
<rect x="817.10" y="70.55" width="6.5" height="1.5" fill="#dcdcdc"/>
<text transform="translate(807.91,76.80)" font-size="15.99" fill="#e6e6e6" stroke="#e6e6e6" stroke-width="0.15">4</text>
<rect x="817.10" y="114.00" width="6.5" height="1.5" fill="#dcdcdc"/>
<text transform="translate(807.91,120.25)" font-size="15.99" fill="#e6e6e6" stroke="#e6e6e6" stroke-width="0.15">3</text>
<rect x="817.10" y="157.45" width="6.5" height="1.5" fill="#dcdcdc"/>
<text transform="translate(807.91,163.70)" font-size="15.99" fill="#e6e6e6" stroke="#e6e6e6" stroke-width="0.15">2</text>
<rect x="817.10" y="200.90" width="6.5" height="1.5" fill="#dcdcdc"/>
<text transform="translate(807.91,207.15)" font-size="15.99" fill="#e6e6e6" stroke="#e6e6e6" stroke-width="0.15">1</text>
<rect x="817.10" y="244.35" width="6.5" height="1.5" fill="#dcdcdc"/>
<text transform="translate(807.91,250.60)" font-size="15.99" fill="#e6e6e6" stroke="#e6e6e6" stroke-width="0.15">0</text>
<rect x="817.10" y="287.80" width="6.5" height="1.5" fill="#dcdcdc"/>
<text transform="translate(802.59,294.05)" font-size="15.99" fill="#e6e6e6" stroke="#e6e6e6" stroke-width="0.15">-1</text>
<rect x="817.10" y="331.25" width="6.5" height="1.5" fill="#dcdcdc"/>
<text transform="translate(802.59,337.50)" font-size="15.99" fill="#e6e6e6" stroke="#e6e6e6" stroke-width="0.15">-2</text>
<rect x="817.10" y="374.70" width="6.5" height="1.5" fill="#dcdcdc"/>
<text transform="translate(802.59,380.95)" font-size="15.99" fill="#e6e6e6" stroke="#e6e6e6" stroke-width="0.15">-3</text>
<rect x="817.10" y="418.15" width="6.5" height="1.5" fill="#dcdcdc"/>
<text transform="translate(802.59,424.40)" font-size="15.99" fill="#e6e6e6" stroke="#e6e6e6" stroke-width="0.15">-4</text>
<rect x="412.9" y="424.3" width="589.1" height="186.8" fill="#000"/>
<svg x="412.9" y="424.3" width="589.1" height="186.8" overflow="hidden">
<rect x="19.05" y="8.45" width="58.5" height="60.5" fill="#fff8fb" stroke="#f4f4f4" stroke-width="1.5"/>
<rect x="20.20" y="9.60" width="56.2" height="58.2" fill="none" stroke="#a8a8a8" stroke-width="0.8" stroke-opacity="0.6"/>
<rect x="19.05" y="87.45" width="58.5" height="60.5" fill="#f8f9f8" stroke="#f4f4f4" stroke-width="1.5"/>
<rect x="20.20" y="88.60" width="56.2" height="58.2" fill="none" stroke="#a8a8a8" stroke-width="0.8" stroke-opacity="0.6"/>
<text transform="translate(31.50,163.70) scale(0.9841,1)" font-size="13.52" fill="#ffffff" stroke="#ffffff" stroke-width="0.15">White</text>
<rect x="89.05" y="8.45" width="58.5" height="60.5" fill="#ece3e5" stroke="#f4f4f4" stroke-width="1.5"/>
<rect x="90.20" y="9.60" width="56.2" height="58.2" fill="none" stroke="#a8a8a8" stroke-width="0.8" stroke-opacity="0.6"/>
<rect x="89.05" y="87.45" width="58.5" height="60.5" fill="#e5e5e5" stroke="#f4f4f4" stroke-width="1.5"/>
<rect x="90.20" y="88.60" width="56.2" height="58.2" fill="none" stroke="#a8a8a8" stroke-width="0.8" stroke-opacity="0.6"/>
<text transform="translate(96.85,163.70) scale(0.9006,1)" font-size="13.52" fill="#ffffff" stroke="#ffffff" stroke-width="0.15">Gray 80</text>
<rect x="159.05" y="8.45" width="58.5" height="60.5" fill="#d6d1d2" stroke="#f4f4f4" stroke-width="1.5"/>
<rect x="160.20" y="9.60" width="56.2" height="58.2" fill="none" stroke="#a8a8a8" stroke-width="0.8" stroke-opacity="0.6"/>
<rect x="159.05" y="87.45" width="58.5" height="60.5" fill="#d0d0d0" stroke="#f4f4f4" stroke-width="1.5"/>
<rect x="160.20" y="88.60" width="56.2" height="58.2" fill="none" stroke="#a8a8a8" stroke-width="0.8" stroke-opacity="0.6"/>
<text transform="translate(167.10,163.70) scale(0.8902,1)" font-size="13.52" fill="#ffffff" stroke="#ffffff" stroke-width="0.15">Gray 65</text>
<rect x="229.05" y="8.45" width="58.5" height="60.5" fill="#c0bbbb" stroke="#f4f4f4" stroke-width="1.5"/>
<rect x="230.20" y="9.60" width="56.2" height="58.2" fill="none" stroke="#a8a8a8" stroke-width="0.8" stroke-opacity="0.6"/>
<rect x="229.05" y="87.45" width="58.5" height="60.5" fill="#b8b8b8" stroke="#f4f4f4" stroke-width="1.5"/>
<rect x="230.20" y="88.60" width="56.2" height="58.2" fill="none" stroke="#a8a8a8" stroke-width="0.8" stroke-opacity="0.6"/>
<text transform="translate(237.00,163.70) scale(0.8943,1)" font-size="13.52" fill="#ffffff" stroke="#ffffff" stroke-width="0.15">Gray 50</text>
<rect x="299.05" y="8.45" width="58.5" height="60.5" fill="#a5a19f" stroke="#f4f4f4" stroke-width="1.5"/>
<rect x="300.20" y="9.60" width="56.2" height="58.2" fill="none" stroke="#a8a8a8" stroke-width="0.8" stroke-opacity="0.6"/>
<rect x="299.05" y="87.45" width="58.5" height="60.5" fill="#a0a0a0" stroke="#f4f4f4" stroke-width="1.5"/>
<rect x="300.20" y="88.60" width="56.2" height="58.2" fill="none" stroke="#a8a8a8" stroke-width="0.8" stroke-opacity="0.6"/>
<text transform="translate(307.15,163.70) scale(0.8881,1)" font-size="13.52" fill="#ffffff" stroke="#ffffff" stroke-width="0.15">Gray 35</text>
<rect x="369.05" y="8.45" width="58.5" height="60.5" fill="#050508" stroke="#f4f4f4" stroke-width="1.5"/>
<rect x="370.20" y="9.60" width="56.2" height="58.2" fill="none" stroke="#a8a8a8" stroke-width="0.8" stroke-opacity="0.6"/>
<rect x="369.05" y="87.45" width="58.5" height="60.5" fill="#040404" stroke="#f4f4f4" stroke-width="1.5"/>
<rect x="370.20" y="88.60" width="56.2" height="58.2" fill="none" stroke="#a8a8a8" stroke-width="0.8" stroke-opacity="0.6"/>
<text transform="translate(383.70,163.70) scale(0.8949,1)" font-size="13.52" fill="#ffffff" stroke="#ffffff" stroke-width="0.15">Black</text>
<rect x="439.05" y="8.45" width="58.5" height="60.5" fill="#7a5545" stroke="#f4f4f4" stroke-width="1.5"/>
<rect x="440.20" y="9.60" width="56.2" height="58.2" fill="none" stroke="#a8a8a8" stroke-width="0.8" stroke-opacity="0.6"/>
<rect x="439.05" y="87.45" width="58.5" height="60.5" fill="#765444" stroke="#f4f4f4" stroke-width="1.5"/>
<rect x="440.20" y="88.60" width="56.2" height="58.2" fill="none" stroke="#a8a8a8" stroke-width="0.8" stroke-opacity="0.6"/>
<text transform="translate(442.35,163.70) scale(0.8925,1)" font-size="13.52" fill="#ffffff" stroke="#ffffff" stroke-width="0.15">Dark Skin</text>
<rect x="509.05" y="8.45" width="58.5" height="60.5" fill="#c49783" stroke="#f4f4f4" stroke-width="1.5"/>
<rect x="510.20" y="9.60" width="56.2" height="58.2" fill="none" stroke="#a8a8a8" stroke-width="0.8" stroke-opacity="0.6"/>
<rect x="509.05" y="87.45" width="58.5" height="60.5" fill="#c29482" stroke="#f4f4f4" stroke-width="1.5"/>
<rect x="510.20" y="88.60" width="56.2" height="58.2" fill="none" stroke="#a8a8a8" stroke-width="0.8" stroke-opacity="0.6"/>
<text transform="translate(511.75,163.70) scale(0.9011,1)" font-size="13.52" fill="#ffffff" stroke="#ffffff" stroke-width="0.15">Light Skin</text>
<rect x="579.05" y="8.45" width="58.5" height="60.5" fill="#6a7a9c" stroke="#f4f4f4" stroke-width="1.5"/>
<rect x="580.20" y="9.60" width="56.2" height="58.2" fill="none" stroke="#a8a8a8" stroke-width="0.8" stroke-opacity="0.6"/>
<rect x="579.05" y="87.45" width="58.5" height="60.5" fill="#5e7aa6" stroke="#f4f4f4" stroke-width="1.5"/>
<rect x="580.20" y="88.60" width="56.2" height="58.2" fill="none" stroke="#a8a8a8" stroke-width="0.8" stroke-opacity="0.6"/>
<text transform="translate(584.75,163.70) scale(0.8905,1)" font-size="13.52" fill="#ffffff" stroke="#ffffff" stroke-width="0.15">Blue Sky</text>
</svg>
<text transform="translate(426.3,481) rotate(-90) translate(0.00,0.00) scale(0.9218,1)" font-size="13.66" fill="#ffffff" stroke="#ffffff" stroke-width="0.15">Actual</text>
<text transform="translate(426.5,559.8) rotate(-90) translate(0.00,0.00) scale(0.9323,1)" font-size="13.66" fill="#ffffff" stroke="#ffffff" stroke-width="0.15">Target</text>
<rect x="412.9" y="611.1" width="589.1" height="16.7" fill="#636363"/>
<rect x="412.9" y="611.1" width="589.1" height="1" fill="#707070"/>
<rect x="414.3" y="612.3" width="13.4" height="13.6" rx="3" fill="#7a7a7a" stroke="#8c8c8c" stroke-width="1"/>
<path d="M417.6 619.4 L423.6 614.6 L423.6 624.2 Z" fill="#3a3a3a"/>
<rect x="986.6" y="612.3" width="13.4" height="13.6" rx="3" fill="#7a7a7a" stroke="#8c8c8c" stroke-width="1"/>
<path d="M997 619.4 L991 614.6 L991 624.2 Z" fill="#3a3a3a"/>
<rect x="431.6" y="612.6" width="151" height="13.6" rx="6.8" fill="#474747"/>
<rect x="329.3" y="629" width="1384.6" height="15" fill="#2f2f2f"/>
<rect x="329.3" y="644" width="1384.6" height="14.2" fill="#171717"/>
<rect x="329.3" y="629" width="8.6" height="29.2" fill="#000"/>
<rect x="329.3" y="658.10" width="1384.6" height="26.65" fill="#444444"/>
<rect x="329.3" y="658.10" width="8.6" height="26.65" fill="#282828"/>
<rect x="329.3" y="684.70" width="1384.6" height="26.25" fill="#808080"/>
<rect x="329.3" y="684.70" width="8.6" height="26.25" fill="#202020"/>
<rect x="329.3" y="710.90" width="1384.6" height="27.15" fill="#444444"/>
<rect x="329.3" y="710.90" width="8.6" height="27.15" fill="#282828"/>
<rect x="329.3" y="738.00" width="1384.6" height="26.85" fill="#808080"/>
<rect x="329.3" y="738.00" width="8.6" height="26.85" fill="#202020"/>
<rect x="329.3" y="764.80" width="1384.6" height="26.25" fill="#444444"/>
<rect x="329.3" y="764.80" width="8.6" height="26.25" fill="#282828"/>
<rect x="329.3" y="791.00" width="1384.6" height="26.55" fill="#808080"/>
<rect x="329.3" y="791.00" width="8.6" height="26.55" fill="#202020"/>
<rect x="329.3" y="817.50" width="1384.6" height="25.95" fill="#444444"/>
<rect x="329.3" y="817.50" width="8.6" height="25.95" fill="#282828"/>
<text transform="translate(408.30,649.30) scale(0.5922,1)" font-size="16.72" fill="#f2f2f2" stroke="#f2f2f2" stroke-width="0.3">White</text>
<text transform="translate(443.60,649.30) scale(0.5281,1)" font-size="16.72" fill="#f2f2f2" stroke="#f2f2f2" stroke-width="0.3">Gray 80</text>
<text transform="translate(480.00,649.30) scale(0.5298,1)" font-size="16.72" fill="#f2f2f2" stroke="#f2f2f2" stroke-width="0.3">Gray 65</text>
<text transform="translate(516.60,649.30) scale(0.5315,1)" font-size="16.72" fill="#f2f2f2" stroke="#f2f2f2" stroke-width="0.3">Gray 50</text>
<text transform="translate(553.00,649.30) scale(0.5281,1)" font-size="16.72" fill="#f2f2f2" stroke="#f2f2f2" stroke-width="0.3">Gray 35</text>
<text transform="translate(589.60,649.30) scale(0.5256,1)" font-size="16.72" fill="#f2f2f2" stroke="#f2f2f2" stroke-width="0.3">Black</text>
<text transform="translate(616.40,649.30) scale(0.5217,1)" font-size="16.72" fill="#f2f2f2" stroke="#f2f2f2" stroke-width="0.3">Dark Skin</text>
<text transform="translate(659.70,649.30) scale(0.5272,1)" font-size="16.72" fill="#f2f2f2" stroke="#f2f2f2" stroke-width="0.3">Light Skin</text>
<text transform="translate(703.50,649.30) scale(0.5246,1)" font-size="16.72" fill="#f2f2f2" stroke="#f2f2f2" stroke-width="0.3">Blue Sky</text>
<text transform="translate(742.90,649.30) scale(0.5326,1)" font-size="16.72" fill="#f2f2f2" stroke="#f2f2f2" stroke-width="0.3">Foliage</text>
<text transform="translate(777.00,649.30) scale(0.5461,1)" font-size="16.72" fill="#f2f2f2" stroke="#f2f2f2" stroke-width="0.3">Blue Flower</text>
<text transform="translate(830.50,649.30) scale(0.5371,1)" font-size="16.72" fill="#f2f2f2" stroke="#f2f2f2" stroke-width="0.3">Bluish Green</text>
<text transform="translate(887.30,649.30) scale(0.5346,1)" font-size="16.72" fill="#f2f2f2" stroke="#f2f2f2" stroke-width="0.3">Orange</text>
<text transform="translate(922.90,649.30) scale(0.5422,1)" font-size="16.72" fill="#f2f2f2" stroke="#f2f2f2" stroke-width="0.3">Purplish Blue</text>
<text transform="translate(981.70,649.30) scale(0.5523,1)" font-size="16.72" fill="#f2f2f2" stroke="#f2f2f2" stroke-width="0.3">Moderate Red</text>
<text transform="translate(1045.10,649.30) scale(0.5484,1)" font-size="16.72" fill="#f2f2f2" stroke="#f2f2f2" stroke-width="0.3">Purple</text>
<text transform="translate(1076.80,649.30) scale(0.5445,1)" font-size="16.72" fill="#f2f2f2" stroke="#f2f2f2" stroke-width="0.3">Yellow Green</text>
<text transform="translate(1135.70,649.30) scale(0.5406,1)" font-size="16.72" fill="#f2f2f2" stroke="#f2f2f2" stroke-width="0.3">Orange Yellow</text>
<text transform="translate(1199.00,649.30) scale(0.5441,1)" font-size="16.72" fill="#f2f2f2" stroke="#f2f2f2" stroke-width="0.3">Blue</text>
<text transform="translate(1228.80,649.30) scale(0.5382,1)" font-size="16.72" fill="#f2f2f2" stroke="#f2f2f2" stroke-width="0.3">Green</text>
<text transform="translate(1259.20,649.30) scale(0.5089,1)" font-size="16.72" fill="#f2f2f2" stroke="#f2f2f2" stroke-width="0.3">Red</text>
<text transform="translate(1289.00,649.30) scale(0.5549,1)" font-size="16.72" fill="#f2f2f2" stroke="#f2f2f2" stroke-width="0.3">Yellow</text>
<text transform="translate(1324.30,649.30) scale(0.5549,1)" font-size="16.72" fill="#f2f2f2" stroke="#f2f2f2" stroke-width="0.3">Magenta</text>
<text transform="translate(1365.80,649.30) scale(0.5126,1)" font-size="16.72" fill="#f2f2f2" stroke="#f2f2f2" stroke-width="0.3">Cyan</text>
<text transform="translate(1395.70,649.30) scale(0.5176,1)" font-size="16.72" fill="#f2f2f2" stroke="#f2f2f2" stroke-width="0.3">100% Red</text>
<text transform="translate(1441.50,649.30) scale(0.5295,1)" font-size="16.72" fill="#f2f2f2" stroke="#f2f2f2" stroke-width="0.3">100% Green</text>
<text transform="translate(1496.40,649.30) scale(0.5294,1)" font-size="16.72" fill="#f2f2f2" stroke="#f2f2f2" stroke-width="0.3">100% Blue</text>
<text transform="translate(1544.40,649.30) scale(0.5173,1)" font-size="16.72" fill="#f2f2f2" stroke="#f2f2f2" stroke-width="0.3">100% Cyan</text>
<text transform="translate(1594.40,649.30) scale(0.5371,1)" font-size="16.72" fill="#f2f2f2" stroke="#f2f2f2" stroke-width="0.3">100% Magenta</text>
<text transform="translate(1661.00,649.30) scale(0.5335,1)" font-size="16.72" fill="#f2f2f2" stroke="#f2f2f2" stroke-width="0.3">100% Yellow</text>
<text transform="translate(340.30,678.00) scale(0.5550,1)" font-size="16.72" fill="#ececec" stroke="#ececec" stroke-width="0.3">x: CIE31</text>
<text transform="translate(408.30,678.00) scale(0.5700,1)" font-size="16.72" fill="#ececec" stroke="#ececec" stroke-width="0.3">0,31</text>
<text transform="translate(443.60,678.00) scale(0.5700,1)" font-size="16.72" fill="#ececec" stroke="#ececec" stroke-width="0.3">0,32</text>
<text transform="translate(480.00,678.00) scale(0.5700,1)" font-size="16.72" fill="#ececec" stroke="#ececec" stroke-width="0.3">0,32</text>
<text transform="translate(516.60,678.00) scale(0.5700,1)" font-size="16.72" fill="#ececec" stroke="#ececec" stroke-width="0.3">0,32</text>
<text transform="translate(553.00,678.00) scale(0.5700,1)" font-size="16.72" fill="#ececec" stroke="#ececec" stroke-width="0.3">0,32</text>
<text transform="translate(589.60,678.00) scale(0.5700,1)" font-size="16.72" fill="#ececec" stroke="#ececec" stroke-width="0.3">0,28</text>
<text transform="translate(616.40,678.00) scale(0.5700,1)" font-size="16.72" fill="#ececec" stroke="#ececec" stroke-width="0.3">0,40</text>
<text transform="translate(659.70,678.00) scale(0.5700,1)" font-size="16.72" fill="#ececec" stroke="#ececec" stroke-width="0.3">0,38</text>
<text transform="translate(703.50,678.00) scale(0.5700,1)" font-size="16.72" fill="#ececec" stroke="#ececec" stroke-width="0.3">0,26</text>
<text transform="translate(742.90,678.00) scale(0.5700,1)" font-size="16.72" fill="#ececec" stroke="#ececec" stroke-width="0.3">0,34</text>
<text transform="translate(777.00,678.00) scale(0.5700,1)" font-size="16.72" fill="#ececec" stroke="#ececec" stroke-width="0.3">0,27</text>
<text transform="translate(830.50,678.00) scale(0.5700,1)" font-size="16.72" fill="#ececec" stroke="#ececec" stroke-width="0.3">0,27</text>
<text transform="translate(887.30,678.00) scale(0.5700,1)" font-size="16.72" fill="#ececec" stroke="#ececec" stroke-width="0.3">0,50</text>
<text transform="translate(922.90,678.00) scale(0.5700,1)" font-size="16.72" fill="#ececec" stroke="#ececec" stroke-width="0.3">0,22</text>
<text transform="translate(981.70,678.00) scale(0.5700,1)" font-size="16.72" fill="#ececec" stroke="#ececec" stroke-width="0.3">0,45</text>
<text transform="translate(1045.10,678.00) scale(0.5700,1)" font-size="16.72" fill="#ececec" stroke="#ececec" stroke-width="0.3">0,29</text>
<text transform="translate(1076.80,678.00) scale(0.5700,1)" font-size="16.72" fill="#ececec" stroke="#ececec" stroke-width="0.3">0,38</text>
<text transform="translate(1135.70,678.00) scale(0.5700,1)" font-size="16.72" fill="#ececec" stroke="#ececec" stroke-width="0.3">0,46</text>
<text transform="translate(1199.00,678.00) scale(0.5700,1)" font-size="16.72" fill="#ececec" stroke="#ececec" stroke-width="0.3">0,19</text>
<text transform="translate(1228.80,678.00) scale(0.5700,1)" font-size="16.72" fill="#ececec" stroke="#ececec" stroke-width="0.3">0,32</text>
<text transform="translate(1259.20,678.00) scale(0.5700,1)" font-size="16.72" fill="#ececec" stroke="#ececec" stroke-width="0.3">0,53</text>
<text transform="translate(1289.00,678.00) scale(0.5700,1)" font-size="16.72" fill="#ececec" stroke="#ececec" stroke-width="0.3">0,44</text>
<text transform="translate(1324.30,678.00) scale(0.5700,1)" font-size="16.72" fill="#ececec" stroke="#ececec" stroke-width="0.3">0,37</text>
<text transform="translate(1365.80,678.00) scale(0.5700,1)" font-size="16.72" fill="#ececec" stroke="#ececec" stroke-width="0.3">0,21</text>
<text transform="translate(1395.70,678.00) scale(0.5700,1)" font-size="16.72" fill="#ececec" stroke="#ececec" stroke-width="0.3">0,66</text>
<text transform="translate(1441.50,678.00) scale(0.5700,1)" font-size="16.72" fill="#ececec" stroke="#ececec" stroke-width="0.3">0,28</text>
<text transform="translate(1496.40,678.00) scale(0.5700,1)" font-size="16.72" fill="#ececec" stroke="#ececec" stroke-width="0.3">0,15</text>
<text transform="translate(1544.40,678.00) scale(0.5700,1)" font-size="16.72" fill="#ececec" stroke="#ececec" stroke-width="0.3">0,21</text>
<text transform="translate(1594.40,678.00) scale(0.5700,1)" font-size="16.72" fill="#ececec" stroke="#ececec" stroke-width="0.3">0,33</text>
<text transform="translate(1661.00,678.00) scale(0.5700,1)" font-size="16.72" fill="#ececec" stroke="#ececec" stroke-width="0.3">0,43</text>
<text transform="translate(340.30,704.60) scale(0.5550,1)" font-size="16.72" fill="#ececec" stroke="#ececec" stroke-width="0.3">y: CIE31</text>
<text transform="translate(408.30,704.60) scale(0.5700,1)" font-size="16.72" fill="#ececec" stroke="#ececec" stroke-width="0.3">0,32</text>
<text transform="translate(443.60,704.60) scale(0.5700,1)" font-size="16.72" fill="#ececec" stroke="#ececec" stroke-width="0.3">0,33</text>
<text transform="translate(480.00,704.60) scale(0.5700,1)" font-size="16.72" fill="#ececec" stroke="#ececec" stroke-width="0.3">0,33</text>
<text transform="translate(516.60,704.60) scale(0.5700,1)" font-size="16.72" fill="#ececec" stroke="#ececec" stroke-width="0.3">0,33</text>
<text transform="translate(553.00,704.60) scale(0.5700,1)" font-size="16.72" fill="#ececec" stroke="#ececec" stroke-width="0.3">0,33</text>
<text transform="translate(589.60,704.60) scale(0.5700,1)" font-size="16.72" fill="#ececec" stroke="#ececec" stroke-width="0.3">0,28</text>
<text transform="translate(616.40,704.60) scale(0.5700,1)" font-size="16.72" fill="#ececec" stroke="#ececec" stroke-width="0.3">0,36</text>
<text transform="translate(659.70,704.60) scale(0.5700,1)" font-size="16.72" fill="#ececec" stroke="#ececec" stroke-width="0.3">0,35</text>
<text transform="translate(703.50,704.60) scale(0.5700,1)" font-size="16.72" fill="#ececec" stroke="#ececec" stroke-width="0.3">0,27</text>
<text transform="translate(742.90,704.60) scale(0.5700,1)" font-size="16.72" fill="#ececec" stroke="#ececec" stroke-width="0.3">0,42</text>
<text transform="translate(777.00,704.60) scale(0.5700,1)" font-size="16.72" fill="#ececec" stroke="#ececec" stroke-width="0.3">0,26</text>
<text transform="translate(830.50,704.60) scale(0.5700,1)" font-size="16.72" fill="#ececec" stroke="#ececec" stroke-width="0.3">0,35</text>
<text transform="translate(887.30,704.60) scale(0.5700,1)" font-size="16.72" fill="#ececec" stroke="#ececec" stroke-width="0.3">0,41</text>
<text transform="translate(922.90,704.60) scale(0.5700,1)" font-size="16.72" fill="#ececec" stroke="#ececec" stroke-width="0.3">0,20</text>
<text transform="translate(981.70,704.60) scale(0.5700,1)" font-size="16.72" fill="#ececec" stroke="#ececec" stroke-width="0.3">0,32</text>
<text transform="translate(1045.10,704.60) scale(0.5700,1)" font-size="16.72" fill="#ececec" stroke="#ececec" stroke-width="0.3">0,22</text>
<text transform="translate(1076.80,704.60) scale(0.5700,1)" font-size="16.72" fill="#ececec" stroke="#ececec" stroke-width="0.3">0,47</text>
<text transform="translate(1135.70,704.60) scale(0.5700,1)" font-size="16.72" fill="#ececec" stroke="#ececec" stroke-width="0.3">0,44</text>
<text transform="translate(1199.00,704.60) scale(0.5700,1)" font-size="16.72" fill="#ececec" stroke="#ececec" stroke-width="0.3">0,13</text>
<text transform="translate(1228.80,704.60) scale(0.5700,1)" font-size="16.72" fill="#ececec" stroke="#ececec" stroke-width="0.3">0,47</text>
<text transform="translate(1259.20,704.60) scale(0.5700,1)" font-size="16.72" fill="#ececec" stroke="#ececec" stroke-width="0.3">0,33</text>
<text transform="translate(1289.00,704.60) scale(0.5700,1)" font-size="16.72" fill="#ececec" stroke="#ececec" stroke-width="0.3">0,46</text>
<text transform="translate(1324.30,704.60) scale(0.5700,1)" font-size="16.72" fill="#ececec" stroke="#ececec" stroke-width="0.3">0,25</text>
<text transform="translate(1365.80,704.60) scale(0.5700,1)" font-size="16.72" fill="#ececec" stroke="#ececec" stroke-width="0.3">0,27</text>
<text transform="translate(1395.70,704.60) scale(0.5700,1)" font-size="16.72" fill="#ececec" stroke="#ececec" stroke-width="0.3">0,33</text>
<text transform="translate(1441.50,704.60) scale(0.5700,1)" font-size="16.72" fill="#ececec" stroke="#ececec" stroke-width="0.3">0,62</text>
<text transform="translate(1496.40,704.60) scale(0.5700,1)" font-size="16.72" fill="#ececec" stroke="#ececec" stroke-width="0.3">0,05</text>
<text transform="translate(1544.40,704.60) scale(0.5700,1)" font-size="16.72" fill="#ececec" stroke="#ececec" stroke-width="0.3">0,32</text>
<text transform="translate(1594.40,704.60) scale(0.5700,1)" font-size="16.72" fill="#ececec" stroke="#ececec" stroke-width="0.3">0,15</text>
<text transform="translate(1661.00,704.60) scale(0.5700,1)" font-size="16.72" fill="#ececec" stroke="#ececec" stroke-width="0.3">0,51</text>
<text transform="translate(340.30,730.80) scale(0.5550,1)" font-size="16.72" fill="#ececec" stroke="#ececec" stroke-width="0.3">Y</text>
<text transform="translate(408.30,730.80) scale(0.5700,1)" font-size="16.72" fill="#ececec" stroke="#ececec" stroke-width="0.3">359,08</text>
<text transform="translate(443.60,730.80) scale(0.5700,1)" font-size="16.72" fill="#ececec" stroke="#ececec" stroke-width="0.3">284,51</text>
<text transform="translate(480.00,730.80) scale(0.5700,1)" font-size="16.72" fill="#ececec" stroke="#ececec" stroke-width="0.3">231,02</text>
<text transform="translate(516.60,730.80) scale(0.5700,1)" font-size="16.72" fill="#ececec" stroke="#ececec" stroke-width="0.3">180,58</text>
<text transform="translate(553.00,730.80) scale(0.5700,1)" font-size="16.72" fill="#ececec" stroke="#ececec" stroke-width="0.3">125,95</text>
<text transform="translate(589.60,730.80) scale(0.5700,1)" font-size="16.72" fill="#ececec" stroke="#ececec" stroke-width="0.3">0,27</text>
<text transform="translate(616.40,730.80) scale(0.5700,1)" font-size="16.72" fill="#ececec" stroke="#ececec" stroke-width="0.3">37,12</text>
<text transform="translate(659.70,730.80) scale(0.5700,1)" font-size="16.72" fill="#ececec" stroke="#ececec" stroke-width="0.3">127,06</text>
<text transform="translate(703.50,730.80) scale(0.5700,1)" font-size="16.72" fill="#ececec" stroke="#ececec" stroke-width="0.3">69,56</text>
<text transform="translate(742.90,730.80) scale(0.5700,1)" font-size="16.72" fill="#ececec" stroke="#ececec" stroke-width="0.3">49,69</text>
<text transform="translate(777.00,730.80) scale(0.5700,1)" font-size="16.72" fill="#ececec" stroke="#ececec" stroke-width="0.3">84,92</text>
<text transform="translate(830.50,730.80) scale(0.5700,1)" font-size="16.72" fill="#ececec" stroke="#ececec" stroke-width="0.3">153,28</text>
<text transform="translate(887.30,730.80) scale(0.5700,1)" font-size="16.72" fill="#ececec" stroke="#ececec" stroke-width="0.3">106,63</text>
<text transform="translate(922.90,730.80) scale(0.5700,1)" font-size="16.72" fill="#ececec" stroke="#ececec" stroke-width="0.3">42,12</text>
<text transform="translate(981.70,730.80) scale(0.5700,1)" font-size="16.72" fill="#ececec" stroke="#ececec" stroke-width="0.3">69,68</text>
<text transform="translate(1045.10,730.80) scale(0.5700,1)" font-size="16.72" fill="#ececec" stroke="#ececec" stroke-width="0.3">23,96</text>
<text transform="translate(1076.80,730.80) scale(0.5700,1)" font-size="16.72" fill="#ececec" stroke="#ececec" stroke-width="0.3">160,47</text>
<text transform="translate(1135.70,730.80) scale(0.5700,1)" font-size="16.72" fill="#ececec" stroke="#ececec" stroke-width="0.3">160,16</text>
<text transform="translate(1199.00,730.80) scale(0.5700,1)" font-size="16.72" fill="#ececec" stroke="#ececec" stroke-width="0.3">20,33</text>
<text transform="translate(1228.80,730.80) scale(0.5700,1)" font-size="16.72" fill="#ececec" stroke="#ececec" stroke-width="0.3">84,73</text>
<text transform="translate(1259.20,730.80) scale(0.5700,1)" font-size="16.72" fill="#ececec" stroke="#ececec" stroke-width="0.3">42,16</text>
<text transform="translate(1289.00,730.80) scale(0.5700,1)" font-size="16.72" fill="#ececec" stroke="#ececec" stroke-width="0.3">219,39</text>
<text transform="translate(1324.30,730.80) scale(0.5700,1)" font-size="16.72" fill="#ececec" stroke="#ececec" stroke-width="0.3">68,69</text>
<text transform="translate(1365.80,730.80) scale(0.5700,1)" font-size="16.72" fill="#ececec" stroke="#ececec" stroke-width="0.3">68,03</text>
<text transform="translate(1395.70,730.80) scale(0.5700,1)" font-size="16.72" fill="#ececec" stroke="#ececec" stroke-width="0.3">84,53</text>
<text transform="translate(1441.50,730.80) scale(0.5700,1)" font-size="16.72" fill="#ececec" stroke="#ececec" stroke-width="0.3">254,15</text>
<text transform="translate(1496.40,730.80) scale(0.5700,1)" font-size="16.72" fill="#ececec" stroke="#ececec" stroke-width="0.3">22,56</text>
<text transform="translate(1544.40,730.80) scale(0.5700,1)" font-size="16.72" fill="#ececec" stroke="#ececec" stroke-width="0.3">275,55</text>
<text transform="translate(1594.40,730.80) scale(0.5700,1)" font-size="16.72" fill="#ececec" stroke="#ececec" stroke-width="0.3">106,59</text>
<text transform="translate(1661.00,730.80) scale(0.5700,1)" font-size="16.72" fill="#ececec" stroke="#ececec" stroke-width="0.3">337,55</text>
<text transform="translate(340.30,757.90) scale(0.5550,1)" font-size="16.72" fill="#ececec" stroke="#ececec" stroke-width="0.3">Target x:CIE31</text>
<text transform="translate(408.30,757.90) scale(0.5700,1)" font-size="16.72" fill="#ececec" stroke="#ececec" stroke-width="0.3">0,31</text>
<text transform="translate(443.60,757.90) scale(0.5700,1)" font-size="16.72" fill="#ececec" stroke="#ececec" stroke-width="0.3">0,31</text>
<text transform="translate(480.00,757.90) scale(0.5700,1)" font-size="16.72" fill="#ececec" stroke="#ececec" stroke-width="0.3">0,31</text>
<text transform="translate(516.60,757.90) scale(0.5700,1)" font-size="16.72" fill="#ececec" stroke="#ececec" stroke-width="0.3">0,31</text>
<text transform="translate(553.00,757.90) scale(0.5700,1)" font-size="16.72" fill="#ececec" stroke="#ececec" stroke-width="0.3">0,31</text>
<text transform="translate(589.60,757.90) scale(0.5700,1)" font-size="16.72" fill="#ececec" stroke="#ececec" stroke-width="0.3">0,31</text>
<text transform="translate(616.40,757.90) scale(0.5700,1)" font-size="16.72" fill="#ececec" stroke="#ececec" stroke-width="0.3">0,40</text>
<text transform="translate(659.70,757.90) scale(0.5700,1)" font-size="16.72" fill="#ececec" stroke="#ececec" stroke-width="0.3">0,38</text>
<text transform="translate(703.50,757.90) scale(0.5700,1)" font-size="16.72" fill="#ececec" stroke="#ececec" stroke-width="0.3">0,25</text>
<text transform="translate(742.90,757.90) scale(0.5700,1)" font-size="16.72" fill="#ececec" stroke="#ececec" stroke-width="0.3">0,34</text>
<text transform="translate(777.00,757.90) scale(0.5700,1)" font-size="16.72" fill="#ececec" stroke="#ececec" stroke-width="0.3">0,27</text>
<text transform="translate(830.50,757.90) scale(0.5700,1)" font-size="16.72" fill="#ececec" stroke="#ececec" stroke-width="0.3">0,26</text>
<text transform="translate(887.30,757.90) scale(0.5700,1)" font-size="16.72" fill="#ececec" stroke="#ececec" stroke-width="0.3">0,51</text>
<text transform="translate(922.90,757.90) scale(0.5700,1)" font-size="16.72" fill="#ececec" stroke="#ececec" stroke-width="0.3">0,22</text>
<text transform="translate(981.70,757.90) scale(0.5700,1)" font-size="16.72" fill="#ececec" stroke="#ececec" stroke-width="0.3">0,46</text>
<text transform="translate(1045.10,757.90) scale(0.5700,1)" font-size="16.72" fill="#ececec" stroke="#ececec" stroke-width="0.3">0,29</text>
<text transform="translate(1076.80,757.90) scale(0.5700,1)" font-size="16.72" fill="#ececec" stroke="#ececec" stroke-width="0.3">0,38</text>
<text transform="translate(1135.70,757.90) scale(0.5700,1)" font-size="16.72" fill="#ececec" stroke="#ececec" stroke-width="0.3">0,47</text>
<text transform="translate(1199.00,757.90) scale(0.5700,1)" font-size="16.72" fill="#ececec" stroke="#ececec" stroke-width="0.3">0,19</text>
<text transform="translate(1228.80,757.90) scale(0.5700,1)" font-size="16.72" fill="#ececec" stroke="#ececec" stroke-width="0.3">0,31</text>
<text transform="translate(1259.20,757.90) scale(0.5700,1)" font-size="16.72" fill="#ececec" stroke="#ececec" stroke-width="0.3">0,54</text>
<text transform="translate(1289.00,757.90) scale(0.5700,1)" font-size="16.72" fill="#ececec" stroke="#ececec" stroke-width="0.3">0,45</text>
<text transform="translate(1324.30,757.90) scale(0.5700,1)" font-size="16.72" fill="#ececec" stroke="#ececec" stroke-width="0.3">0,37</text>
<text transform="translate(1365.80,757.90) scale(0.5700,1)" font-size="16.72" fill="#ececec" stroke="#ececec" stroke-width="0.3">0,20</text>
<text transform="translate(1395.70,757.90) scale(0.5700,1)" font-size="16.72" fill="#ececec" stroke="#ececec" stroke-width="0.3">0,68</text>
<text transform="translate(1441.50,757.90) scale(0.5700,1)" font-size="16.72" fill="#ececec" stroke="#ececec" stroke-width="0.3">0,27</text>
<text transform="translate(1496.40,757.90) scale(0.5700,1)" font-size="16.72" fill="#ececec" stroke="#ececec" stroke-width="0.3">0,15</text>
<text transform="translate(1544.40,757.90) scale(0.5700,1)" font-size="16.72" fill="#ececec" stroke="#ececec" stroke-width="0.3">0,20</text>
<text transform="translate(1594.40,757.90) scale(0.5700,1)" font-size="16.72" fill="#ececec" stroke="#ececec" stroke-width="0.3">0,34</text>
<text transform="translate(1661.00,757.90) scale(0.5700,1)" font-size="16.72" fill="#ececec" stroke="#ececec" stroke-width="0.3">0,44</text>
<text transform="translate(340.30,784.70) scale(0.5550,1)" font-size="16.72" fill="#ececec" stroke="#ececec" stroke-width="0.3">Target y:CIE31</text>
<text transform="translate(408.30,784.70) scale(0.5700,1)" font-size="16.72" fill="#ececec" stroke="#ececec" stroke-width="0.3">0,33</text>
<text transform="translate(443.60,784.70) scale(0.5700,1)" font-size="16.72" fill="#ececec" stroke="#ececec" stroke-width="0.3">0,33</text>
<text transform="translate(480.00,784.70) scale(0.5700,1)" font-size="16.72" fill="#ececec" stroke="#ececec" stroke-width="0.3">0,33</text>
<text transform="translate(516.60,784.70) scale(0.5700,1)" font-size="16.72" fill="#ececec" stroke="#ececec" stroke-width="0.3">0,33</text>
<text transform="translate(553.00,784.70) scale(0.5700,1)" font-size="16.72" fill="#ececec" stroke="#ececec" stroke-width="0.3">0,33</text>
<text transform="translate(589.60,784.70) scale(0.5700,1)" font-size="16.72" fill="#ececec" stroke="#ececec" stroke-width="0.3">0,33</text>
<text transform="translate(616.40,784.70) scale(0.5700,1)" font-size="16.72" fill="#ececec" stroke="#ececec" stroke-width="0.3">0,36</text>
<text transform="translate(659.70,784.70) scale(0.5700,1)" font-size="16.72" fill="#ececec" stroke="#ececec" stroke-width="0.3">0,35</text>
<text transform="translate(703.50,784.70) scale(0.5700,1)" font-size="16.72" fill="#ececec" stroke="#ececec" stroke-width="0.3">0,27</text>
<text transform="translate(742.90,784.70) scale(0.5700,1)" font-size="16.72" fill="#ececec" stroke="#ececec" stroke-width="0.3">0,43</text>
<text transform="translate(777.00,784.70) scale(0.5700,1)" font-size="16.72" fill="#ececec" stroke="#ececec" stroke-width="0.3">0,25</text>
<text transform="translate(830.50,784.70) scale(0.5700,1)" font-size="16.72" fill="#ececec" stroke="#ececec" stroke-width="0.3">0,36</text>
<text transform="translate(887.30,784.70) scale(0.5700,1)" font-size="16.72" fill="#ececec" stroke="#ececec" stroke-width="0.3">0,41</text>
<text transform="translate(922.90,784.70) scale(0.5700,1)" font-size="16.72" fill="#ececec" stroke="#ececec" stroke-width="0.3">0,19</text>
<text transform="translate(981.70,784.70) scale(0.5700,1)" font-size="16.72" fill="#ececec" stroke="#ececec" stroke-width="0.3">0,31</text>
<text transform="translate(1045.10,784.70) scale(0.5700,1)" font-size="16.72" fill="#ececec" stroke="#ececec" stroke-width="0.3">0,22</text>
<text transform="translate(1076.80,784.70) scale(0.5700,1)" font-size="16.72" fill="#ececec" stroke="#ececec" stroke-width="0.3">0,50</text>
<text transform="translate(1135.70,784.70) scale(0.5700,1)" font-size="16.72" fill="#ececec" stroke="#ececec" stroke-width="0.3">0,44</text>
<text transform="translate(1199.00,784.70) scale(0.5700,1)" font-size="16.72" fill="#ececec" stroke="#ececec" stroke-width="0.3">0,14</text>
<text transform="translate(1228.80,784.70) scale(0.5700,1)" font-size="16.72" fill="#ececec" stroke="#ececec" stroke-width="0.3">0,49</text>
<text transform="translate(1259.20,784.70) scale(0.5700,1)" font-size="16.72" fill="#ececec" stroke="#ececec" stroke-width="0.3">0,32</text>
<text transform="translate(1289.00,784.70) scale(0.5700,1)" font-size="16.72" fill="#ececec" stroke="#ececec" stroke-width="0.3">0,47</text>
<text transform="translate(1324.30,784.70) scale(0.5700,1)" font-size="16.72" fill="#ececec" stroke="#ececec" stroke-width="0.3">0,24</text>
<text transform="translate(1365.80,784.70) scale(0.5700,1)" font-size="16.72" fill="#ececec" stroke="#ececec" stroke-width="0.3">0,26</text>
<text transform="translate(1395.70,784.70) scale(0.5700,1)" font-size="16.72" fill="#ececec" stroke="#ececec" stroke-width="0.3">0,32</text>
<text transform="translate(1441.50,784.70) scale(0.5700,1)" font-size="16.72" fill="#ececec" stroke="#ececec" stroke-width="0.3">0,69</text>
<text transform="translate(1496.40,784.70) scale(0.5700,1)" font-size="16.72" fill="#ececec" stroke="#ececec" stroke-width="0.3">0,06</text>
<text transform="translate(1544.40,784.70) scale(0.5700,1)" font-size="16.72" fill="#ececec" stroke="#ececec" stroke-width="0.3">0,33</text>
<text transform="translate(1594.40,784.70) scale(0.5700,1)" font-size="16.72" fill="#ececec" stroke="#ececec" stroke-width="0.3">0,15</text>
<text transform="translate(1661.00,784.70) scale(0.5700,1)" font-size="16.72" fill="#ececec" stroke="#ececec" stroke-width="0.3">0,54</text>
<text transform="translate(340.30,810.90) scale(0.5550,1)" font-size="16.72" fill="#ececec" stroke="#ececec" stroke-width="0.3">Target Y</text>
<text transform="translate(408.30,810.90) scale(0.5700,1)" font-size="16.72" fill="#ececec" stroke="#ececec" stroke-width="0.3">359,08</text>
<text transform="translate(443.60,810.90) scale(0.5700,1)" font-size="16.72" fill="#ececec" stroke="#ececec" stroke-width="0.3">284,14</text>
<text transform="translate(480.00,810.90) scale(0.5700,1)" font-size="16.72" fill="#ececec" stroke="#ececec" stroke-width="0.3">228,95</text>
<text transform="translate(516.60,810.90) scale(0.5700,1)" font-size="16.72" fill="#ececec" stroke="#ececec" stroke-width="0.3">176,32</text>
<text transform="translate(553.00,810.90) scale(0.5700,1)" font-size="16.72" fill="#ececec" stroke="#ececec" stroke-width="0.3">122,78</text>
<text transform="translate(589.60,810.90) scale(0.5700,1)" font-size="16.72" fill="#ececec" stroke="#ececec" stroke-width="0.3">0,00</text>
<text transform="translate(616.40,810.90) scale(0.5700,1)" font-size="16.72" fill="#ececec" stroke="#ececec" stroke-width="0.3">35,47</text>
<text transform="translate(659.70,810.90) scale(0.5700,1)" font-size="16.72" fill="#ececec" stroke="#ececec" stroke-width="0.3">122,81</text>
<text transform="translate(703.50,810.90) scale(0.5700,1)" font-size="16.72" fill="#ececec" stroke="#ececec" stroke-width="0.3">67,67</text>
<text transform="translate(742.90,810.90) scale(0.5700,1)" font-size="16.72" fill="#ececec" stroke="#ececec" stroke-width="0.3">47,11</text>
<text transform="translate(777.00,810.90) scale(0.5700,1)" font-size="16.72" fill="#ececec" stroke="#ececec" stroke-width="0.3">82,96</text>
<text transform="translate(830.50,810.90) scale(0.5700,1)" font-size="16.72" fill="#ececec" stroke="#ececec" stroke-width="0.3">149,56</text>
<text transform="translate(887.30,810.90) scale(0.5700,1)" font-size="16.72" fill="#ececec" stroke="#ececec" stroke-width="0.3">101,92</text>
<text transform="translate(922.90,810.90) scale(0.5700,1)" font-size="16.72" fill="#ececec" stroke="#ececec" stroke-width="0.3">42,26</text>
<text transform="translate(981.70,810.90) scale(0.5700,1)" font-size="16.72" fill="#ececec" stroke="#ececec" stroke-width="0.3">66,74</text>
<text transform="translate(1045.10,810.90) scale(0.5700,1)" font-size="16.72" fill="#ececec" stroke="#ececec" stroke-width="0.3">24,59</text>
<text transform="translate(1076.80,810.90) scale(0.5700,1)" font-size="16.72" fill="#ececec" stroke="#ececec" stroke-width="0.3">154,48</text>
<text transform="translate(1135.70,810.90) scale(0.5700,1)" font-size="16.72" fill="#ececec" stroke="#ececec" stroke-width="0.3">154,76</text>
<text transform="translate(1199.00,810.90) scale(0.5700,1)" font-size="16.72" fill="#ececec" stroke="#ececec" stroke-width="0.3">22,68</text>
<text transform="translate(1228.80,810.90) scale(0.5700,1)" font-size="16.72" fill="#ececec" stroke="#ececec" stroke-width="0.3">81,36</text>
<text transform="translate(1259.20,810.90) scale(0.5700,1)" font-size="16.72" fill="#ececec" stroke="#ececec" stroke-width="0.3">41,50</text>
<text transform="translate(1289.00,810.90) scale(0.5700,1)" font-size="16.72" fill="#ececec" stroke="#ececec" stroke-width="0.3">213,38</text>
<text transform="translate(1324.30,810.90) scale(0.5700,1)" font-size="16.72" fill="#ececec" stroke="#ececec" stroke-width="0.3">66,99</text>
<text transform="translate(1365.80,810.90) scale(0.5700,1)" font-size="16.72" fill="#ececec" stroke="#ececec" stroke-width="0.3">67,42</text>
<text transform="translate(1395.70,810.90) scale(0.5700,1)" font-size="16.72" fill="#ececec" stroke="#ececec" stroke-width="0.3">82,23</text>
<text transform="translate(1441.50,810.90) scale(0.5700,1)" font-size="16.72" fill="#ececec" stroke="#ececec" stroke-width="0.3">248,39</text>
<text transform="translate(1496.40,810.90) scale(0.5700,1)" font-size="16.72" fill="#ececec" stroke="#ececec" stroke-width="0.3">28,47</text>
<text transform="translate(1544.40,810.90) scale(0.5700,1)" font-size="16.72" fill="#ececec" stroke="#ececec" stroke-width="0.3">276,86</text>
<text transform="translate(1594.40,810.90) scale(0.5700,1)" font-size="16.72" fill="#ececec" stroke="#ececec" stroke-width="0.3">110,69</text>
<text transform="translate(1661.00,810.90) scale(0.5700,1)" font-size="16.72" fill="#ececec" stroke="#ececec" stroke-width="0.3">330,61</text>
<text transform="translate(340.30,837.40) scale(0.5550,1)" font-size="16.72" fill="#ececec" stroke="#ececec" stroke-width="0.3">ΔE 2000</text>
<text transform="translate(408.30,837.40) scale(0.5700,1)" font-size="16.72" fill="#ececec" stroke="#ececec" stroke-width="0.3">4,42</text>
<text transform="translate(443.60,837.40) scale(0.5700,1)" font-size="16.72" fill="#ececec" stroke="#ececec" stroke-width="0.3">3,90</text>
<text transform="translate(480.00,837.40) scale(0.5700,1)" font-size="16.72" fill="#ececec" stroke="#ececec" stroke-width="0.3">3,63</text>
<text transform="translate(516.60,837.40) scale(0.5700,1)" font-size="16.72" fill="#ececec" stroke="#ececec" stroke-width="0.3">3,43</text>
<text transform="translate(553.00,837.40) scale(0.5700,1)" font-size="16.72" fill="#ececec" stroke="#ececec" stroke-width="0.3">3,04</text>
<text transform="translate(589.60,837.40) scale(0.5700,1)" font-size="16.72" fill="#ececec" stroke="#ececec" stroke-width="0.3">0,68</text>
<text transform="translate(616.40,837.40) scale(0.5700,1)" font-size="16.72" fill="#ececec" stroke="#ececec" stroke-width="0.3">1,01</text>
<text transform="translate(659.70,837.40) scale(0.5700,1)" font-size="16.72" fill="#ececec" stroke="#ececec" stroke-width="0.3">0,90</text>
<text transform="translate(703.50,837.40) scale(0.5700,1)" font-size="16.72" fill="#ececec" stroke="#ececec" stroke-width="0.3">2,65</text>
<text transform="translate(742.90,837.40) scale(0.5700,1)" font-size="16.72" fill="#ececec" stroke="#ececec" stroke-width="0.3">2,03</text>
<text transform="translate(777.00,837.40) scale(0.5700,1)" font-size="16.72" fill="#ececec" stroke="#ececec" stroke-width="0.3">1,99</text>
<text transform="translate(830.50,837.40) scale(0.5700,1)" font-size="16.72" fill="#ececec" stroke="#ececec" stroke-width="0.3">2,90</text>
<text transform="translate(887.30,837.40) scale(0.5700,1)" font-size="16.72" fill="#ececec" stroke="#ececec" stroke-width="0.3">1,74</text>
<text transform="translate(922.90,837.40) scale(0.5700,1)" font-size="16.72" fill="#ececec" stroke="#ececec" stroke-width="0.3">1,26</text>
<text transform="translate(981.70,837.40) scale(0.5700,1)" font-size="16.72" fill="#ececec" stroke="#ececec" stroke-width="0.3">1,54</text>
<text transform="translate(1045.10,837.40) scale(0.5700,1)" font-size="16.72" fill="#ececec" stroke="#ececec" stroke-width="0.3">1,09</text>
<text transform="translate(1076.80,837.40) scale(0.5700,1)" font-size="16.72" fill="#ececec" stroke="#ececec" stroke-width="0.3">2,40</text>
<text transform="translate(1135.70,837.40) scale(0.5700,1)" font-size="16.72" fill="#ececec" stroke="#ececec" stroke-width="0.3">1,76</text>
<text transform="translate(1199.00,837.40) scale(0.5700,1)" font-size="16.72" fill="#ececec" stroke="#ececec" stroke-width="0.3">1,75</text>
<text transform="translate(1228.80,837.40) scale(0.5700,1)" font-size="16.72" fill="#ececec" stroke="#ececec" stroke-width="0.3">2,56</text>
<text transform="translate(1259.20,837.40) scale(0.5700,1)" font-size="16.72" fill="#ececec" stroke="#ececec" stroke-width="0.3">1,41</text>
<text transform="translate(1289.00,837.40) scale(0.5700,1)" font-size="16.72" fill="#ececec" stroke="#ececec" stroke-width="0.3">2,25</text>
<text transform="translate(1324.30,837.40) scale(0.5700,1)" font-size="16.72" fill="#ececec" stroke="#ececec" stroke-width="0.3">1,17</text>
<text transform="translate(1365.80,837.40) scale(0.5700,1)" font-size="16.72" fill="#ececec" stroke="#ececec" stroke-width="0.3">1,70</text>
<text transform="translate(1395.70,837.40) scale(0.5700,1)" font-size="16.72" fill="#ececec" stroke="#ececec" stroke-width="0.3">2,52</text>
<text transform="translate(1441.50,837.40) scale(0.5700,1)" font-size="16.72" fill="#ececec" stroke="#ececec" stroke-width="0.3">4,11</text>
<text transform="translate(1496.40,837.40) scale(0.5700,1)" font-size="16.72" fill="#ececec" stroke="#ececec" stroke-width="0.3">3,54</text>
<text transform="translate(1544.40,837.40) scale(0.5700,1)" font-size="16.72" fill="#ececec" stroke="#ececec" stroke-width="0.3">3,86</text>
<text transform="translate(1594.40,837.40) scale(0.5700,1)" font-size="16.72" fill="#ececec" stroke="#ececec" stroke-width="0.3">1,10</text>
<text transform="translate(1661.00,837.40) scale(0.5700,1)" font-size="16.72" fill="#ececec" stroke="#ececec" stroke-width="0.3">4,10</text>
<rect x="1016" y="45.8" width="701" height="567.8" fill="#ffff00"/>
<rect x="1023.2" y="53" width="686.8" height="553.6" fill="#333333"/>
<text transform="translate(1327.90,71.90) scale(0.8992,1)" font-size="15.84" fill="#e6e6e6" stroke="#e6e6e6" stroke-width="0.15">CIE 1931 xy</text>
<rect x="1052.9" y="76.6" width="653.4" height="500.7" fill="#232323"/>
<g clip-path="url(#locclip)"><rect x="1103.0" y="82" width="27.0" height="2" fill="url(#o0)"/><rect x="1096.0" y="84" width="42.0" height="2" fill="url(#o1)"/><rect x="1092.0" y="86" width="54.0" height="2" fill="url(#o2)"/><rect x="1089.0" y="88" width="63.0" height="2" fill="url(#o3)"/><rect x="1086.0" y="90" width="71.0" height="2" fill="url(#o4)"/><rect x="1083.0" y="92" width="79.0" height="2" fill="url(#o5)"/><rect x="1081.0" y="94" width="86.0" height="2" fill="url(#o6)"/><rect x="1080.0" y="96" width="91.0" height="2" fill="url(#o7)"/><rect x="1078.0" y="98" width="98.0" height="2" fill="url(#o8)"/><rect x="1077.0" y="100" width="103.0" height="2" fill="url(#o9)"/><rect x="1075.0" y="102" width="110.0" height="2" fill="url(#o10)"/><rect x="1074.0" y="104" width="115.0" height="2" fill="url(#o11)"/><rect x="1073.0" y="106" width="120.0" height="2" fill="url(#o12)"/><rect x="1071.0" y="108" width="126.0" height="2" fill="url(#o13)"/><rect x="1070.0" y="110" width="131.0" height="2" fill="url(#o14)"/><rect x="1069.0" y="112" width="136.0" height="2" fill="url(#o15)"/><rect x="1068.0" y="114" width="140.0" height="2" fill="url(#o16)"/><rect x="1067.0" y="116" width="145.0" height="2" fill="url(#o17)"/><rect x="1067.0" y="118" width="149.0" height="2" fill="url(#o18)"/><rect x="1066.0" y="120" width="153.0" height="2" fill="url(#o19)"/><rect x="1065.0" y="122" width="158.0" height="2" fill="url(#o20)"/><rect x="1064.0" y="124" width="162.0" height="2" fill="url(#o21)"/><rect x="1064.0" y="126" width="165.0" height="2" fill="url(#o22)"/><rect x="1063.0" y="128" width="170.0" height="2" fill="url(#o23)"/><rect x="1062.0" y="130" width="174.0" height="2" fill="url(#o24)"/><rect x="1062.0" y="132" width="177.0" height="2" fill="url(#o25)"/><rect x="1061.0" y="134" width="181.0" height="2" fill="url(#o26)"/><rect x="1061.0" y="136" width="185.0" height="2" fill="url(#o27)"/><rect x="1060.0" y="138" width="189.0" height="2" fill="url(#o28)"/><rect x="1060.0" y="140" width="192.0" height="2" fill="url(#o29)"/><rect x="1059.0" y="142" width="196.0" height="2" fill="url(#o30)"/><rect x="1059.0" y="144" width="199.0" height="2" fill="url(#o31)"/><rect x="1059.0" y="146" width="202.0" height="2" fill="url(#o32)"/><rect x="1058.0" y="148" width="206.0" height="2" fill="url(#o33)"/><rect x="1058.0" y="150" width="209.0" height="2" fill="url(#o34)"/><rect x="1058.0" y="152" width="212.0" height="2" fill="url(#o35)"/><rect x="1057.0" y="154" width="216.0" height="2" fill="url(#o36)"/><rect x="1057.0" y="156" width="219.0" height="2" fill="url(#o37)"/><rect x="1057.0" y="158" width="222.0" height="2" fill="url(#o38)"/><rect x="1056.0" y="160" width="226.0" height="2" fill="url(#o39)"/><rect x="1056.0" y="162" width="229.0" height="2" fill="url(#o40)"/><rect x="1056.0" y="164" width="231.0" height="2" fill="url(#o41)"/><rect x="1056.0" y="166" width="234.0" height="2" fill="url(#o42)"/><rect x="1056.0" y="168" width="237.0" height="2" fill="url(#o43)"/><rect x="1055.0" y="170" width="241.0" height="2" fill="url(#o44)"/><rect x="1055.0" y="172" width="244.0" height="2" fill="url(#o45)"/><rect x="1055.0" y="174" width="247.0" height="2" fill="url(#o46)"/><rect x="1055.0" y="176" width="249.0" height="2" fill="url(#o47)"/><rect x="1055.0" y="178" width="252.0" height="2" fill="url(#o48)"/><rect x="1055.0" y="180" width="255.0" height="2" fill="url(#o49)"/><rect x="1055.0" y="182" width="258.0" height="2" fill="url(#o50)"/><rect x="1055.0" y="184" width="260.0" height="2" fill="url(#o51)"/><rect x="1054.0" y="186" width="264.0" height="2" fill="url(#o52)"/><rect x="1054.0" y="188" width="267.0" height="2" fill="url(#o53)"/><rect x="1054.0" y="190" width="270.0" height="2" fill="url(#o54)"/><rect x="1054.0" y="192" width="272.0" height="2" fill="url(#o55)"/><rect x="1054.0" y="194" width="275.0" height="2" fill="url(#o56)"/><rect x="1054.0" y="196" width="278.0" height="2" fill="url(#o57)"/><rect x="1054.0" y="198" width="281.0" height="2" fill="url(#o58)"/><rect x="1054.0" y="200" width="283.0" height="2" fill="url(#o59)"/><rect x="1054.0" y="202" width="286.0" height="2" fill="url(#o60)"/><rect x="1054.0" y="204" width="289.0" height="2" fill="url(#o61)"/><rect x="1054.0" y="206" width="291.0" height="2" fill="url(#o62)"/><rect x="1054.0" y="208" width="294.0" height="2" fill="url(#o63)"/><rect x="1054.0" y="210" width="297.0" height="2" fill="url(#o64)"/><rect x="1055.0" y="212" width="298.0" height="2" fill="url(#o65)"/><rect x="1055.0" y="214" width="301.0" height="2" fill="url(#o66)"/><rect x="1055.0" y="216" width="304.0" height="2" fill="url(#o67)"/><rect x="1055.0" y="218" width="306.0" height="2" fill="url(#o68)"/><rect x="1055.0" y="220" width="309.0" height="2" fill="url(#o69)"/><rect x="1055.0" y="222" width="312.0" height="2" fill="url(#o70)"/><rect x="1055.0" y="224" width="314.0" height="2" fill="url(#o71)"/><rect x="1055.0" y="226" width="317.0" height="2" fill="url(#o72)"/><rect x="1055.0" y="228" width="320.0" height="2" fill="url(#o73)"/><rect x="1055.0" y="230" width="322.0" height="2" fill="url(#o74)"/><rect x="1056.0" y="232" width="324.0" height="2" fill="url(#o75)"/><rect x="1056.0" y="234" width="327.0" height="2" fill="url(#o76)"/><rect x="1056.0" y="236" width="329.0" height="2" fill="url(#o77)"/><rect x="1056.0" y="238" width="332.0" height="2" fill="url(#o78)"/><rect x="1056.0" y="240" width="335.0" height="2" fill="url(#o79)"/><rect x="1056.0" y="242" width="337.0" height="2" fill="url(#o80)"/><rect x="1057.0" y="244" width="339.0" height="2" fill="url(#o81)"/><rect x="1057.0" y="246" width="342.0" height="2" fill="url(#o82)"/><rect x="1057.0" y="248" width="344.0" height="2" fill="url(#o83)"/><rect x="1057.0" y="250" width="347.0" height="2" fill="url(#o84)"/><rect x="1057.0" y="252" width="349.0" height="2" fill="url(#o85)"/><rect x="1058.0" y="254" width="351.0" height="2" fill="url(#o86)"/><rect x="1058.0" y="256" width="354.0" height="2" fill="url(#o87)"/><rect x="1058.0" y="258" width="356.0" height="2" fill="url(#o88)"/><rect x="1058.0" y="260" width="359.0" height="2" fill="url(#o89)"/><rect x="1058.0" y="262" width="362.0" height="2" fill="url(#o90)"/><rect x="1059.0" y="264" width="363.0" height="2" fill="url(#o91)"/><rect x="1059.0" y="266" width="366.0" height="2" fill="url(#o92)"/><rect x="1059.0" y="268" width="369.0" height="2" fill="url(#o93)"/><rect x="1059.0" y="270" width="371.0" height="2" fill="url(#o94)"/><rect x="1060.0" y="272" width="373.0" height="2" fill="url(#o95)"/><rect x="1060.0" y="274" width="375.0" height="2" fill="url(#o96)"/><rect x="1060.0" y="276" width="378.0" height="2" fill="url(#o97)"/><rect x="1060.0" y="278" width="381.0" height="2" fill="url(#o98)"/><rect x="1061.0" y="280" width="382.0" height="2" fill="url(#o99)"/><rect x="1061.0" y="282" width="385.0" height="2" fill="url(#o100)"/><rect x="1061.0" y="284" width="387.0" height="2" fill="url(#o101)"/><rect x="1062.0" y="286" width="389.0" height="2" fill="url(#o102)"/><rect x="1062.0" y="288" width="392.0" height="2" fill="url(#o103)"/><rect x="1062.0" y="290" width="394.0" height="2" fill="url(#o104)"/><rect x="1063.0" y="292" width="396.0" height="2" fill="url(#o105)"/><rect x="1063.0" y="294" width="399.0" height="2" fill="url(#o106)"/><rect x="1063.0" y="296" width="401.0" height="2" fill="url(#o107)"/><rect x="1064.0" y="298" width="403.0" height="2" fill="url(#o108)"/><rect x="1064.0" y="300" width="405.0" height="2" fill="url(#o109)"/><rect x="1064.0" y="302" width="408.0" height="2" fill="url(#o110)"/><rect x="1065.0" y="304" width="410.0" height="2" fill="url(#o111)"/><rect x="1065.0" y="306" width="412.0" height="2" fill="url(#o112)"/><rect x="1065.0" y="308" width="415.0" height="2" fill="url(#o113)"/><rect x="1066.0" y="310" width="417.0" height="2" fill="url(#o114)"/><rect x="1066.0" y="312" width="419.0" height="2" fill="url(#o115)"/><rect x="1066.0" y="314" width="422.0" height="2" fill="url(#o116)"/><rect x="1067.0" y="316" width="424.0" height="2" fill="url(#o117)"/><rect x="1067.0" y="318" width="426.0" height="2" fill="url(#o118)"/><rect x="1068.0" y="320" width="428.0" height="2" fill="url(#o119)"/><rect x="1068.0" y="322" width="430.0" height="2" fill="url(#o120)"/><rect x="1068.0" y="324" width="433.0" height="2" fill="url(#o121)"/><rect x="1069.0" y="326" width="435.0" height="2" fill="url(#o122)"/><rect x="1069.0" y="328" width="437.0" height="2" fill="url(#o123)"/><rect x="1069.0" y="330" width="440.0" height="2" fill="url(#o124)"/><rect x="1070.0" y="332" width="442.0" height="2" fill="url(#o125)"/><rect x="1070.0" y="334" width="444.0" height="2" fill="url(#o126)"/><rect x="1071.0" y="336" width="446.0" height="2" fill="url(#o127)"/><rect x="1071.0" y="338" width="448.0" height="2" fill="url(#o128)"/><rect x="1072.0" y="340" width="450.0" height="2" fill="url(#o129)"/><rect x="1072.0" y="342" width="453.0" height="2" fill="url(#o130)"/><rect x="1072.0" y="344" width="455.0" height="2" fill="url(#o131)"/><rect x="1073.0" y="346" width="457.0" height="2" fill="url(#o132)"/><rect x="1073.0" y="348" width="459.0" height="2" fill="url(#o133)"/><rect x="1074.0" y="350" width="461.0" height="2" fill="url(#o134)"/><rect x="1074.0" y="352" width="464.0" height="2" fill="url(#o135)"/><rect x="1075.0" y="354" width="465.0" height="2" fill="url(#o136)"/><rect x="1075.0" y="356" width="468.0" height="2" fill="url(#o137)"/><rect x="1076.0" y="358" width="470.0" height="2" fill="url(#o138)"/><rect x="1076.0" y="360" width="472.0" height="2" fill="url(#o139)"/><rect x="1077.0" y="362" width="474.0" height="2" fill="url(#o140)"/><rect x="1077.0" y="364" width="476.0" height="2" fill="url(#o141)"/><rect x="1077.0" y="366" width="479.0" height="2" fill="url(#o142)"/><rect x="1078.0" y="368" width="481.0" height="2" fill="url(#o143)"/><rect x="1078.0" y="370" width="483.0" height="2" fill="url(#o144)"/><rect x="1079.0" y="372" width="485.0" height="2" fill="url(#o145)"/><rect x="1079.0" y="374" width="488.0" height="2" fill="url(#o146)"/><rect x="1080.0" y="376" width="489.0" height="2" fill="url(#o147)"/><rect x="1081.0" y="378" width="491.0" height="2" fill="url(#o148)"/><rect x="1081.0" y="380" width="494.0" height="2" fill="url(#o149)"/><rect x="1082.0" y="382" width="495.0" height="2" fill="url(#o150)"/><rect x="1082.0" y="384" width="498.0" height="2" fill="url(#o151)"/><rect x="1083.0" y="386" width="499.0" height="2" fill="url(#o152)"/><rect x="1083.0" y="388" width="502.0" height="2" fill="url(#o153)"/><rect x="1084.0" y="390" width="504.0" height="2" fill="url(#o154)"/><rect x="1084.0" y="392" width="506.0" height="2" fill="url(#o155)"/><rect x="1085.0" y="394" width="508.0" height="2" fill="url(#o156)"/><rect x="1085.0" y="396" width="511.0" height="2" fill="url(#o157)"/><rect x="1086.0" y="398" width="512.0" height="2" fill="url(#o158)"/><rect x="1086.0" y="400" width="515.0" height="2" fill="url(#o159)"/><rect x="1087.0" y="402" width="516.0" height="2" fill="url(#o160)"/><rect x="1088.0" y="404" width="518.0" height="2" fill="url(#o161)"/><rect x="1088.0" y="406" width="521.0" height="2" fill="url(#o162)"/><rect x="1089.0" y="408" width="522.0" height="2" fill="url(#o163)"/><rect x="1089.0" y="410" width="525.0" height="2" fill="url(#o164)"/><rect x="1090.0" y="412" width="527.0" height="2" fill="url(#o165)"/><rect x="1090.0" y="414" width="529.0" height="2" fill="url(#o166)"/><rect x="1091.0" y="416" width="531.0" height="2" fill="url(#o167)"/><rect x="1092.0" y="418" width="532.0" height="2" fill="url(#o168)"/><rect x="1092.0" y="420" width="529.0" height="2" fill="url(#o169)"/><rect x="1093.0" y="422" width="523.0" height="2" fill="url(#o170)"/><rect x="1094.0" y="424" width="516.0" height="2" fill="url(#o171)"/><rect x="1094.0" y="426" width="511.0" height="2" fill="url(#o172)"/><rect x="1095.0" y="428" width="504.0" height="2" fill="url(#o173)"/><rect x="1095.0" y="430" width="498.0" height="2" fill="url(#o174)"/><rect x="1096.0" y="432" width="492.0" height="2" fill="url(#o175)"/><rect x="1097.0" y="434" width="485.0" height="2" fill="url(#o176)"/><rect x="1097.0" y="436" width="479.0" height="2" fill="url(#o177)"/><rect x="1098.0" y="438" width="473.0" height="2" fill="url(#o178)"/><rect x="1099.0" y="440" width="466.0" height="2" fill="url(#o179)"/><rect x="1099.0" y="442" width="460.0" height="2" fill="url(#o180)"/><rect x="1100.0" y="444" width="454.0" height="2" fill="url(#o181)"/><rect x="1101.0" y="446" width="447.0" height="2" fill="url(#o182)"/><rect x="1102.0" y="448" width="441.0" height="2" fill="url(#o183)"/><rect x="1102.0" y="450" width="435.0" height="2" fill="url(#o184)"/><rect x="1103.0" y="452" width="428.0" height="2" fill="url(#o185)"/><rect x="1104.0" y="454" width="422.0" height="2" fill="url(#o186)"/><rect x="1104.0" y="456" width="416.0" height="2" fill="url(#o187)"/><rect x="1105.0" y="458" width="409.0" height="2" fill="url(#o188)"/><rect x="1106.0" y="460" width="403.0" height="2" fill="url(#o189)"/><rect x="1107.0" y="462" width="396.0" height="2" fill="url(#o190)"/><rect x="1107.0" y="464" width="391.0" height="2" fill="url(#o191)"/><rect x="1108.0" y="466" width="384.0" height="2" fill="url(#o192)"/><rect x="1109.0" y="468" width="377.0" height="2" fill="url(#o193)"/><rect x="1110.0" y="470" width="371.0" height="2" fill="url(#o194)"/><rect x="1111.0" y="472" width="364.0" height="2" fill="url(#o195)"/><rect x="1112.0" y="474" width="357.0" height="2" fill="url(#o196)"/><rect x="1112.0" y="476" width="352.0" height="2" fill="url(#o197)"/><rect x="1113.0" y="478" width="345.0" height="2" fill="url(#o198)"/><rect x="1114.0" y="480" width="338.0" height="2" fill="url(#o199)"/><rect x="1115.0" y="482" width="332.0" height="2" fill="url(#o200)"/><rect x="1116.0" y="484" width="325.0" height="2" fill="url(#o201)"/><rect x="1117.0" y="486" width="319.0" height="2" fill="url(#o202)"/><rect x="1118.0" y="488" width="312.0" height="2" fill="url(#o203)"/><rect x="1119.0" y="490" width="305.0" height="2" fill="url(#o204)"/><rect x="1120.0" y="492" width="299.0" height="2" fill="url(#o205)"/><rect x="1121.0" y="494" width="292.0" height="2" fill="url(#o206)"/><rect x="1122.0" y="496" width="285.0" height="2" fill="url(#o207)"/><rect x="1123.0" y="498" width="279.0" height="2" fill="url(#o208)"/><rect x="1124.0" y="500" width="272.0" height="2" fill="url(#o209)"/><rect x="1125.0" y="502" width="266.0" height="2" fill="url(#o210)"/><rect x="1125.0" y="504" width="260.0" height="2" fill="url(#o211)"/><rect x="1126.0" y="506" width="253.0" height="2" fill="url(#o212)"/><rect x="1127.0" y="508" width="247.0" height="2" fill="url(#o213)"/><rect x="1129.0" y="510" width="239.0" height="2" fill="url(#o214)"/><rect x="1130.0" y="512" width="232.0" height="2" fill="url(#o215)"/><rect x="1131.0" y="514" width="226.0" height="2" fill="url(#o216)"/><rect x="1132.0" y="516" width="219.0" height="2" fill="url(#o217)"/><rect x="1133.0" y="518" width="212.0" height="2" fill="url(#o218)"/><rect x="1134.0" y="520" width="206.0" height="2" fill="url(#o219)"/><rect x="1135.0" y="522" width="199.0" height="2" fill="url(#o220)"/><rect x="1136.0" y="524" width="193.0" height="2" fill="url(#o221)"/><rect x="1137.0" y="526" width="186.0" height="2" fill="url(#o222)"/><rect x="1138.0" y="528" width="179.0" height="2" fill="url(#o223)"/><rect x="1140.0" y="530" width="172.0" height="2" fill="url(#o224)"/><rect x="1141.0" y="532" width="165.0" height="2" fill="url(#o225)"/><rect x="1142.0" y="534" width="158.0" height="2" fill="url(#o226)"/><rect x="1144.0" y="536" width="151.0" height="2" fill="url(#o227)"/><rect x="1145.0" y="538" width="144.0" height="2" fill="url(#o228)"/><rect x="1146.0" y="540" width="138.0" height="2" fill="url(#o229)"/><rect x="1148.0" y="542" width="130.0" height="2" fill="url(#o230)"/><rect x="1149.0" y="544" width="123.0" height="2" fill="url(#o231)"/><rect x="1151.0" y="546" width="116.0" height="2" fill="url(#o232)"/><rect x="1153.0" y="548" width="108.0" height="2" fill="url(#o233)"/><rect x="1154.0" y="550" width="101.0" height="2" fill="url(#o234)"/><rect x="1156.0" y="552" width="94.0" height="2" fill="url(#o235)"/><rect x="1158.0" y="554" width="86.0" height="2" fill="url(#o236)"/><rect x="1160.0" y="556" width="78.0" height="2" fill="url(#o237)"/><rect x="1163.0" y="558" width="70.0" height="2" fill="url(#o238)"/><rect x="1165.0" y="560" width="62.0" height="2" fill="url(#o239)"/><rect x="1168.0" y="562" width="54.0" height="2" fill="url(#o240)"/><rect x="1170.0" y="564" width="46.0" height="2" fill="url(#o241)"/><rect x="1173.0" y="566" width="37.0" height="2" fill="url(#o242)"/><rect x="1176.0" y="568" width="29.0" height="2" fill="url(#o243)"/><rect x="1179.0" y="570" width="20.0" height="2" fill="url(#o244)"/><rect x="1182.0" y="572" width="11.0" height="2" fill="url(#o245)"/></g>
<g clip-path="url(#triclip)"><rect x="1257.0" y="167" width="4.0" height="2" fill="url(#i0)"/><rect x="1257.0" y="169" width="7.0" height="2" fill="url(#i1)"/><rect x="1256.0" y="171" width="11.0" height="2" fill="url(#i2)"/><rect x="1256.0" y="173" width="14.0" height="2" fill="url(#i3)"/><rect x="1255.0" y="175" width="18.0" height="2" fill="url(#i4)"/><rect x="1255.0" y="177" width="21.0" height="2" fill="url(#i5)"/><rect x="1254.0" y="179" width="25.0" height="2" fill="url(#i6)"/><rect x="1254.0" y="181" width="28.0" height="2" fill="url(#i7)"/><rect x="1253.0" y="183" width="32.0" height="2" fill="url(#i8)"/><rect x="1253.0" y="185" width="35.0" height="2" fill="url(#i9)"/><rect x="1252.0" y="187" width="39.0" height="2" fill="url(#i10)"/><rect x="1252.0" y="189" width="42.0" height="2" fill="url(#i11)"/><rect x="1251.0" y="191" width="46.0" height="2" fill="url(#i12)"/><rect x="1251.0" y="193" width="49.0" height="2" fill="url(#i13)"/><rect x="1250.0" y="195" width="52.0" height="2" fill="url(#i14)"/><rect x="1250.0" y="197" width="55.0" height="2" fill="url(#i15)"/><rect x="1249.0" y="199" width="59.0" height="2" fill="url(#i16)"/><rect x="1249.0" y="201" width="62.0" height="2" fill="url(#i17)"/><rect x="1249.0" y="203" width="65.0" height="2" fill="url(#i18)"/><rect x="1248.0" y="205" width="69.0" height="2" fill="url(#i19)"/><rect x="1248.0" y="207" width="72.0" height="2" fill="url(#i20)"/><rect x="1247.0" y="209" width="76.0" height="2" fill="url(#i21)"/><rect x="1247.0" y="211" width="79.0" height="2" fill="url(#i22)"/><rect x="1246.0" y="213" width="83.0" height="2" fill="url(#i23)"/><rect x="1246.0" y="215" width="86.0" height="2" fill="url(#i24)"/><rect x="1245.0" y="217" width="90.0" height="2" fill="url(#i25)"/><rect x="1245.0" y="219" width="93.0" height="2" fill="url(#i26)"/><rect x="1244.0" y="221" width="97.0" height="2" fill="url(#i27)"/><rect x="1244.0" y="223" width="100.0" height="2" fill="url(#i28)"/><rect x="1243.0" y="225" width="103.0" height="2" fill="url(#i29)"/><rect x="1243.0" y="227" width="106.0" height="2" fill="url(#i30)"/><rect x="1242.0" y="229" width="110.0" height="2" fill="url(#i31)"/><rect x="1242.0" y="231" width="113.0" height="2" fill="url(#i32)"/><rect x="1241.0" y="233" width="117.0" height="2" fill="url(#i33)"/><rect x="1241.0" y="235" width="120.0" height="2" fill="url(#i34)"/><rect x="1240.0" y="237" width="124.0" height="2" fill="url(#i35)"/><rect x="1240.0" y="239" width="127.0" height="2" fill="url(#i36)"/><rect x="1239.0" y="241" width="131.0" height="2" fill="url(#i37)"/><rect x="1239.0" y="243" width="134.0" height="2" fill="url(#i38)"/><rect x="1239.0" y="245" width="137.0" height="2" fill="url(#i39)"/><rect x="1238.0" y="247" width="141.0" height="2" fill="url(#i40)"/><rect x="1238.0" y="249" width="144.0" height="2" fill="url(#i41)"/><rect x="1237.0" y="251" width="148.0" height="2" fill="url(#i42)"/><rect x="1237.0" y="253" width="151.0" height="2" fill="url(#i43)"/><rect x="1236.0" y="255" width="154.0" height="2" fill="url(#i44)"/><rect x="1236.0" y="257" width="157.0" height="2" fill="url(#i45)"/><rect x="1235.0" y="259" width="161.0" height="2" fill="url(#i46)"/><rect x="1235.0" y="261" width="164.0" height="2" fill="url(#i47)"/><rect x="1234.0" y="263" width="168.0" height="2" fill="url(#i48)"/><rect x="1234.0" y="265" width="171.0" height="2" fill="url(#i49)"/><rect x="1233.0" y="267" width="175.0" height="2" fill="url(#i50)"/><rect x="1233.0" y="269" width="178.0" height="2" fill="url(#i51)"/><rect x="1232.0" y="271" width="182.0" height="2" fill="url(#i52)"/><rect x="1232.0" y="273" width="185.0" height="2" fill="url(#i53)"/><rect x="1231.0" y="275" width="189.0" height="2" fill="url(#i54)"/><rect x="1231.0" y="277" width="192.0" height="2" fill="url(#i55)"/><rect x="1230.0" y="279" width="196.0" height="2" fill="url(#i56)"/><rect x="1230.0" y="281" width="199.0" height="2" fill="url(#i57)"/><rect x="1229.0" y="283" width="202.0" height="2" fill="url(#i58)"/><rect x="1229.0" y="285" width="205.0" height="2" fill="url(#i59)"/><rect x="1228.0" y="287" width="209.0" height="2" fill="url(#i60)"/><rect x="1228.0" y="289" width="212.0" height="2" fill="url(#i61)"/><rect x="1228.0" y="291" width="215.0" height="2" fill="url(#i62)"/><rect x="1227.0" y="293" width="219.0" height="2" fill="url(#i63)"/><rect x="1227.0" y="295" width="222.0" height="2" fill="url(#i64)"/><rect x="1226.0" y="297" width="226.0" height="2" fill="url(#i65)"/><rect x="1226.0" y="299" width="229.0" height="2" fill="url(#i66)"/><rect x="1225.0" y="301" width="233.0" height="2" fill="url(#i67)"/><rect x="1225.0" y="303" width="236.0" height="2" fill="url(#i68)"/><rect x="1224.0" y="305" width="240.0" height="2" fill="url(#i69)"/><rect x="1224.0" y="307" width="243.0" height="2" fill="url(#i70)"/><rect x="1223.0" y="309" width="247.0" height="2" fill="url(#i71)"/><rect x="1223.0" y="311" width="250.0" height="2" fill="url(#i72)"/><rect x="1222.0" y="313" width="253.0" height="2" fill="url(#i73)"/><rect x="1222.0" y="315" width="256.0" height="2" fill="url(#i74)"/><rect x="1221.0" y="317" width="260.0" height="2" fill="url(#i75)"/><rect x="1221.0" y="319" width="263.0" height="2" fill="url(#i76)"/><rect x="1220.0" y="321" width="267.0" height="2" fill="url(#i77)"/><rect x="1220.0" y="323" width="270.0" height="2" fill="url(#i78)"/><rect x="1219.0" y="325" width="274.0" height="2" fill="url(#i79)"/><rect x="1219.0" y="327" width="277.0" height="2" fill="url(#i80)"/><rect x="1218.0" y="329" width="281.0" height="2" fill="url(#i81)"/><rect x="1218.0" y="331" width="284.0" height="2" fill="url(#i82)"/><rect x="1218.0" y="333" width="287.0" height="2" fill="url(#i83)"/><rect x="1217.0" y="335" width="291.0" height="2" fill="url(#i84)"/><rect x="1217.0" y="337" width="294.0" height="2" fill="url(#i85)"/><rect x="1216.0" y="339" width="298.0" height="2" fill="url(#i86)"/><rect x="1216.0" y="341" width="301.0" height="2" fill="url(#i87)"/><rect x="1215.0" y="343" width="304.0" height="2" fill="url(#i88)"/><rect x="1215.0" y="345" width="307.0" height="2" fill="url(#i89)"/><rect x="1214.0" y="347" width="311.0" height="2" fill="url(#i90)"/><rect x="1214.0" y="349" width="314.0" height="2" fill="url(#i91)"/><rect x="1213.0" y="351" width="318.0" height="2" fill="url(#i92)"/><rect x="1213.0" y="353" width="321.0" height="2" fill="url(#i93)"/><rect x="1212.0" y="355" width="325.0" height="2" fill="url(#i94)"/><rect x="1212.0" y="357" width="328.0" height="2" fill="url(#i95)"/><rect x="1211.0" y="359" width="332.0" height="2" fill="url(#i96)"/><rect x="1211.0" y="361" width="335.0" height="2" fill="url(#i97)"/><rect x="1210.0" y="363" width="339.0" height="2" fill="url(#i98)"/><rect x="1210.0" y="365" width="342.0" height="2" fill="url(#i99)"/><rect x="1209.0" y="367" width="346.0" height="2" fill="url(#i100)"/><rect x="1209.0" y="369" width="349.0" height="2" fill="url(#i101)"/><rect x="1208.0" y="371" width="353.0" height="2" fill="url(#i102)"/><rect x="1208.0" y="373" width="355.0" height="2" fill="url(#i103)"/><rect x="1207.0" y="375" width="359.0" height="2" fill="url(#i104)"/><rect x="1207.0" y="377" width="362.0" height="2" fill="url(#i105)"/><rect x="1207.0" y="379" width="365.0" height="2" fill="url(#i106)"/><rect x="1206.0" y="381" width="369.0" height="2" fill="url(#i107)"/><rect x="1206.0" y="383" width="372.0" height="2" fill="url(#i108)"/><rect x="1205.0" y="385" width="376.0" height="2" fill="url(#i109)"/><rect x="1205.0" y="387" width="375.0" height="2" fill="url(#i110)"/><rect x="1204.0" y="389" width="371.0" height="2" fill="url(#i111)"/><rect x="1204.0" y="391" width="366.0" height="2" fill="url(#i112)"/><rect x="1203.0" y="393" width="361.0" height="2" fill="url(#i113)"/><rect x="1203.0" y="395" width="356.0" height="2" fill="url(#i114)"/><rect x="1202.0" y="397" width="352.0" height="2" fill="url(#i115)"/><rect x="1202.0" y="399" width="346.0" height="2" fill="url(#i116)"/><rect x="1201.0" y="401" width="342.0" height="2" fill="url(#i117)"/><rect x="1201.0" y="403" width="337.0" height="2" fill="url(#i118)"/><rect x="1200.0" y="405" width="332.0" height="2" fill="url(#i119)"/><rect x="1200.0" y="407" width="327.0" height="2" fill="url(#i120)"/><rect x="1199.0" y="409" width="323.0" height="2" fill="url(#i121)"/><rect x="1199.0" y="411" width="317.0" height="2" fill="url(#i122)"/><rect x="1198.0" y="413" width="313.0" height="2" fill="url(#i123)"/><rect x="1198.0" y="415" width="308.0" height="2" fill="url(#i124)"/><rect x="1197.0" y="417" width="304.0" height="2" fill="url(#i125)"/><rect x="1197.0" y="419" width="298.0" height="2" fill="url(#i126)"/><rect x="1197.0" y="421" width="293.0" height="2" fill="url(#i127)"/><rect x="1196.0" y="423" width="289.0" height="2" fill="url(#i128)"/><rect x="1196.0" y="425" width="283.0" height="2" fill="url(#i129)"/><rect x="1195.0" y="427" width="279.0" height="2" fill="url(#i130)"/><rect x="1195.0" y="429" width="274.0" height="2" fill="url(#i131)"/><rect x="1194.0" y="431" width="269.0" height="2" fill="url(#i132)"/><rect x="1194.0" y="433" width="264.0" height="2" fill="url(#i133)"/><rect x="1193.0" y="435" width="260.0" height="2" fill="url(#i134)"/><rect x="1193.0" y="437" width="254.0" height="2" fill="url(#i135)"/><rect x="1192.0" y="439" width="250.0" height="2" fill="url(#i136)"/><rect x="1192.0" y="441" width="245.0" height="2" fill="url(#i137)"/><rect x="1191.0" y="443" width="240.0" height="2" fill="url(#i138)"/><rect x="1191.0" y="445" width="235.0" height="2" fill="url(#i139)"/><rect x="1190.0" y="447" width="231.0" height="2" fill="url(#i140)"/><rect x="1190.0" y="449" width="225.0" height="2" fill="url(#i141)"/><rect x="1189.0" y="451" width="221.0" height="2" fill="url(#i142)"/><rect x="1189.0" y="453" width="216.0" height="2" fill="url(#i143)"/><rect x="1188.0" y="455" width="211.0" height="2" fill="url(#i144)"/><rect x="1188.0" y="457" width="206.0" height="2" fill="url(#i145)"/><rect x="1187.0" y="459" width="202.0" height="2" fill="url(#i146)"/><rect x="1187.0" y="461" width="196.0" height="2" fill="url(#i147)"/><rect x="1186.0" y="463" width="192.0" height="2" fill="url(#i148)"/><rect x="1186.0" y="465" width="187.0" height="2" fill="url(#i149)"/><rect x="1186.0" y="467" width="181.0" height="2" fill="url(#i150)"/><rect x="1185.0" y="469" width="177.0" height="2" fill="url(#i151)"/><rect x="1185.0" y="471" width="172.0" height="2" fill="url(#i152)"/><rect x="1184.0" y="473" width="167.0" height="2" fill="url(#i153)"/><rect x="1184.0" y="475" width="162.0" height="2" fill="url(#i154)"/><rect x="1183.0" y="477" width="158.0" height="2" fill="url(#i155)"/><rect x="1183.0" y="479" width="152.0" height="2" fill="url(#i156)"/><rect x="1182.0" y="481" width="148.0" height="2" fill="url(#i157)"/><rect x="1182.0" y="483" width="143.0" height="2" fill="url(#i158)"/><rect x="1181.0" y="485" width="138.0" height="2" fill="url(#i159)"/><rect x="1181.0" y="487" width="133.0" height="2" fill="url(#i160)"/><rect x="1180.0" y="489" width="129.0" height="2" fill="url(#i161)"/><rect x="1180.0" y="491" width="123.0" height="2" fill="url(#i162)"/><rect x="1179.0" y="493" width="119.0" height="2" fill="url(#i163)"/><rect x="1179.0" y="495" width="114.0" height="2" fill="url(#i164)"/><rect x="1178.0" y="497" width="109.0" height="2" fill="url(#i165)"/><rect x="1178.0" y="499" width="104.0" height="2" fill="url(#i166)"/><rect x="1177.0" y="501" width="100.0" height="2" fill="url(#i167)"/><rect x="1177.0" y="503" width="94.0" height="2" fill="url(#i168)"/><rect x="1176.0" y="505" width="90.0" height="2" fill="url(#i169)"/><rect x="1176.0" y="507" width="85.0" height="2" fill="url(#i170)"/><rect x="1176.0" y="509" width="79.0" height="2" fill="url(#i171)"/><rect x="1175.0" y="511" width="75.0" height="2" fill="url(#i172)"/><rect x="1175.0" y="513" width="70.0" height="2" fill="url(#i173)"/><rect x="1174.0" y="515" width="65.0" height="2" fill="url(#i174)"/><rect x="1174.0" y="517" width="60.0" height="2" fill="url(#i175)"/><rect x="1173.0" y="519" width="56.0" height="2" fill="url(#i176)"/><rect x="1173.0" y="521" width="50.0" height="2" fill="url(#i177)"/><rect x="1172.0" y="523" width="46.0" height="2" fill="url(#i178)"/><rect x="1172.0" y="525" width="41.0" height="2" fill="url(#i179)"/><rect x="1171.0" y="527" width="36.0" height="2" fill="url(#i180)"/><rect x="1171.0" y="529" width="31.0" height="2" fill="url(#i181)"/><rect x="1170.0" y="531" width="27.0" height="2" fill="url(#i182)"/><rect x="1170.0" y="533" width="21.0" height="2" fill="url(#i183)"/><rect x="1169.0" y="535" width="17.0" height="2" fill="url(#i184)"/><rect x="1169.0" y="537" width="12.0" height="2" fill="url(#i185)"/><rect x="1168.0" y="539" width="7.0" height="2" fill="url(#i186)"/></g>
<rect x="1052.9" y="76.6" width="653.4" height="500.7" fill="none" stroke="#a2a2a2" stroke-width="1.5"/>
<rect x="1052.15" y="577.3" width="1.5" height="6.2" fill="#d0d0d0"/>
<text transform="translate(1048.66,599.20)" font-size="15.26" fill="#e6e6e6" stroke="#e6e6e6" stroke-width="0.15">0</text>
<rect x="1046.70" y="576.55" width="6.2" height="1.5" fill="#d0d0d0"/>
<text transform="translate(1038.31,582.60)" font-size="15.26" fill="#e6e6e6" stroke="#e6e6e6" stroke-width="0.15">0</text>
<rect x="1129.85" y="577.3" width="1.5" height="6.2" fill="#d0d0d0"/>
<text transform="translate(1119.99,599.20)" font-size="15.26" fill="#e6e6e6" stroke="#e6e6e6" stroke-width="0.15">0,1</text>
<rect x="1046.70" y="517.12" width="6.2" height="1.5" fill="#d0d0d0"/>
<text transform="translate(1025.59,523.17)" font-size="15.26" fill="#e6e6e6" stroke="#e6e6e6" stroke-width="0.15">0,1</text>
<rect x="1207.55" y="577.3" width="1.5" height="6.2" fill="#d0d0d0"/>
<text transform="translate(1197.69,599.20)" font-size="15.26" fill="#e6e6e6" stroke="#e6e6e6" stroke-width="0.15">0,2</text>
<rect x="1046.70" y="457.70" width="6.2" height="1.5" fill="#d0d0d0"/>
<text transform="translate(1025.59,463.75)" font-size="15.26" fill="#e6e6e6" stroke="#e6e6e6" stroke-width="0.15">0,2</text>
<rect x="1285.25" y="577.3" width="1.5" height="6.2" fill="#d0d0d0"/>
<text transform="translate(1275.39,599.20)" font-size="15.26" fill="#e6e6e6" stroke="#e6e6e6" stroke-width="0.15">0,3</text>
<rect x="1046.70" y="398.27" width="6.2" height="1.5" fill="#d0d0d0"/>
<text transform="translate(1025.59,404.32)" font-size="15.26" fill="#e6e6e6" stroke="#e6e6e6" stroke-width="0.15">0,3</text>
<rect x="1362.95" y="577.3" width="1.5" height="6.2" fill="#d0d0d0"/>
<text transform="translate(1353.09,599.20)" font-size="15.26" fill="#e6e6e6" stroke="#e6e6e6" stroke-width="0.15">0,4</text>
<rect x="1046.70" y="338.85" width="6.2" height="1.5" fill="#d0d0d0"/>
<text transform="translate(1025.59,344.90)" font-size="15.26" fill="#e6e6e6" stroke="#e6e6e6" stroke-width="0.15">0,4</text>
<rect x="1440.65" y="577.3" width="1.5" height="6.2" fill="#d0d0d0"/>
<text transform="translate(1430.79,599.20)" font-size="15.26" fill="#e6e6e6" stroke="#e6e6e6" stroke-width="0.15">0,5</text>
<rect x="1046.70" y="279.42" width="6.2" height="1.5" fill="#d0d0d0"/>
<text transform="translate(1025.59,285.47)" font-size="15.26" fill="#e6e6e6" stroke="#e6e6e6" stroke-width="0.15">0,5</text>
<rect x="1518.35" y="577.3" width="1.5" height="6.2" fill="#d0d0d0"/>
<text transform="translate(1508.49,599.20)" font-size="15.26" fill="#e6e6e6" stroke="#e6e6e6" stroke-width="0.15">0,6</text>
<rect x="1046.70" y="220.00" width="6.2" height="1.5" fill="#d0d0d0"/>
<text transform="translate(1025.59,226.05)" font-size="15.26" fill="#e6e6e6" stroke="#e6e6e6" stroke-width="0.15">0,6</text>
<rect x="1596.05" y="577.3" width="1.5" height="6.2" fill="#d0d0d0"/>
<text transform="translate(1586.19,599.20)" font-size="15.26" fill="#e6e6e6" stroke="#e6e6e6" stroke-width="0.15">0,7</text>
<rect x="1046.70" y="160.57" width="6.2" height="1.5" fill="#d0d0d0"/>
<text transform="translate(1025.59,166.62)" font-size="15.26" fill="#e6e6e6" stroke="#e6e6e6" stroke-width="0.15">0,7</text>
<rect x="1673.75" y="577.3" width="1.5" height="6.2" fill="#d0d0d0"/>
<text transform="translate(1663.89,599.20)" font-size="15.26" fill="#e6e6e6" stroke="#e6e6e6" stroke-width="0.15">0,8</text>
<rect x="1046.70" y="101.15" width="6.2" height="1.5" fill="#d0d0d0"/>
<text transform="translate(1025.59,107.20)" font-size="15.26" fill="#e6e6e6" stroke="#e6e6e6" stroke-width="0.15">0,8</text>
<rect x="1506.6" y="81.1" width="196" height="153.9" fill="#2b2b2b"/>
<rect x="1509.2" y="84.2" width="190.4" height="147.4" fill="#232323"/>
<g clip-path="url(#irect)"><g clip-path="url(#iloc)"><rect x="1508.2" y="84" width="76.8" height="2" fill="url(#io0)"/><rect x="1508.2" y="86" width="78.8" height="2" fill="url(#io1)"/><rect x="1508.2" y="88" width="81.8" height="2" fill="url(#io2)"/><rect x="1508.2" y="90" width="83.8" height="2" fill="url(#io3)"/><rect x="1508.2" y="92" width="86.8" height="2" fill="url(#io4)"/><rect x="1508.2" y="94" width="89.8" height="2" fill="url(#io5)"/><rect x="1508.2" y="96" width="91.8" height="2" fill="url(#io6)"/><rect x="1508.2" y="98" width="94.8" height="2" fill="url(#io7)"/><rect x="1508.2" y="100" width="97.8" height="2" fill="url(#io8)"/><rect x="1508.2" y="102" width="99.8" height="2" fill="url(#io9)"/><rect x="1508.2" y="104" width="102.8" height="2" fill="url(#io10)"/><rect x="1508.2" y="106" width="105.8" height="2" fill="url(#io11)"/><rect x="1508.2" y="108" width="107.8" height="2" fill="url(#io12)"/><rect x="1508.2" y="110" width="110.8" height="2" fill="url(#io13)"/><rect x="1508.2" y="112" width="113.8" height="2" fill="url(#io14)"/><rect x="1508.2" y="114" width="115.8" height="2" fill="url(#io15)"/><rect x="1508.2" y="116" width="118.8" height="2" fill="url(#io16)"/><rect x="1508.2" y="118" width="121.8" height="2" fill="url(#io17)"/><rect x="1508.2" y="120" width="123.8" height="2" fill="url(#io18)"/><rect x="1508.2" y="122" width="126.8" height="2" fill="url(#io19)"/><rect x="1508.2" y="124" width="128.8" height="2" fill="url(#io20)"/><rect x="1508.2" y="126" width="131.8" height="2" fill="url(#io21)"/><rect x="1508.2" y="128" width="134.8" height="2" fill="url(#io22)"/><rect x="1508.2" y="130" width="136.8" height="2" fill="url(#io23)"/><rect x="1508.2" y="132" width="139.8" height="2" fill="url(#io24)"/><rect x="1508.2" y="134" width="142.8" height="2" fill="url(#io25)"/><rect x="1508.2" y="136" width="144.8" height="2" fill="url(#io26)"/><rect x="1508.2" y="138" width="147.8" height="2" fill="url(#io27)"/><rect x="1508.2" y="140" width="149.8" height="2" fill="url(#io28)"/><rect x="1508.2" y="142" width="152.8" height="2" fill="url(#io29)"/><rect x="1508.2" y="144" width="155.8" height="2" fill="url(#io30)"/><rect x="1508.2" y="146" width="157.8" height="2" fill="url(#io31)"/><rect x="1508.2" y="148" width="160.8" height="2" fill="url(#io32)"/><rect x="1508.2" y="150" width="163.8" height="2" fill="url(#io33)"/><rect x="1508.2" y="152" width="165.8" height="2" fill="url(#io34)"/><rect x="1508.2" y="154" width="168.8" height="2" fill="url(#io35)"/><rect x="1508.2" y="156" width="171.8" height="2" fill="url(#io36)"/><rect x="1508.2" y="158" width="173.8" height="2" fill="url(#io37)"/><rect x="1508.2" y="160" width="176.8" height="2" fill="url(#io38)"/><rect x="1508.2" y="162" width="178.8" height="2" fill="url(#io39)"/><rect x="1508.2" y="164" width="181.8" height="2" fill="url(#io40)"/><rect x="1508.2" y="166" width="184.8" height="2" fill="url(#io41)"/><rect x="1508.2" y="168" width="186.8" height="2" fill="url(#io42)"/><rect x="1508.2" y="170" width="189.8" height="2" fill="url(#io43)"/><rect x="1508.2" y="172" width="192.4" height="2" fill="url(#io44)"/><rect x="1508.2" y="174" width="192.4" height="2" fill="url(#io45)"/><rect x="1508.2" y="176" width="192.4" height="2" fill="url(#io46)"/><rect x="1508.2" y="178" width="192.4" height="2" fill="url(#io47)"/><rect x="1508.2" y="180" width="192.4" height="2" fill="url(#io48)"/><rect x="1508.2" y="182" width="192.4" height="2" fill="url(#io49)"/><rect x="1508.2" y="184" width="192.4" height="2" fill="url(#io50)"/><rect x="1508.2" y="186" width="192.4" height="2" fill="url(#io51)"/><rect x="1508.2" y="188" width="192.4" height="2" fill="url(#io52)"/><rect x="1508.2" y="190" width="192.4" height="2" fill="url(#io53)"/><rect x="1508.2" y="192" width="192.4" height="2" fill="url(#io54)"/><rect x="1508.2" y="194" width="192.4" height="2" fill="url(#io55)"/><rect x="1508.2" y="196" width="192.4" height="2" fill="url(#io56)"/><rect x="1508.2" y="198" width="192.4" height="2" fill="url(#io57)"/><rect x="1508.2" y="200" width="192.4" height="2" fill="url(#io58)"/><rect x="1508.2" y="202" width="192.4" height="2" fill="url(#io59)"/><rect x="1508.2" y="204" width="192.4" height="2" fill="url(#io60)"/><rect x="1508.2" y="206" width="192.4" height="2" fill="url(#io61)"/><rect x="1508.2" y="208" width="192.4" height="2" fill="url(#io62)"/><rect x="1508.2" y="210" width="192.4" height="2" fill="url(#io63)"/><rect x="1508.2" y="212" width="192.4" height="2" fill="url(#io64)"/><rect x="1508.2" y="214" width="192.4" height="2" fill="url(#io65)"/><rect x="1508.2" y="216" width="192.4" height="2" fill="url(#io66)"/><rect x="1508.2" y="218" width="192.4" height="2" fill="url(#io67)"/><rect x="1508.2" y="220" width="192.4" height="2" fill="url(#io68)"/><rect x="1508.2" y="222" width="192.4" height="2" fill="url(#io69)"/><rect x="1508.2" y="224" width="192.4" height="2" fill="url(#io70)"/><rect x="1508.2" y="226" width="192.4" height="2" fill="url(#io71)"/><rect x="1508.2" y="228" width="192.4" height="2" fill="url(#io72)"/><rect x="1508.2" y="230" width="192.4" height="2" fill="url(#io73)"/></g>
<g clip-path="url(#itri)"><rect x="1508.2" y="92" width="2.8" height="2" fill="url(#ii0)"/><rect x="1508.2" y="94" width="5.8" height="2" fill="url(#ii1)"/><rect x="1508.2" y="96" width="8.8" height="2" fill="url(#ii2)"/><rect x="1508.2" y="98" width="11.8" height="2" fill="url(#ii3)"/><rect x="1508.2" y="100" width="14.8" height="2" fill="url(#ii4)"/><rect x="1508.2" y="102" width="16.8" height="2" fill="url(#ii5)"/><rect x="1508.2" y="104" width="19.8" height="2" fill="url(#ii6)"/><rect x="1508.2" y="106" width="22.8" height="2" fill="url(#ii7)"/><rect x="1508.2" y="108" width="25.8" height="2" fill="url(#ii8)"/><rect x="1508.2" y="110" width="28.8" height="2" fill="url(#ii9)"/><rect x="1508.2" y="112" width="31.8" height="2" fill="url(#ii10)"/><rect x="1508.2" y="114" width="34.8" height="2" fill="url(#ii11)"/><rect x="1508.2" y="116" width="37.8" height="2" fill="url(#ii12)"/><rect x="1508.2" y="118" width="40.8" height="2" fill="url(#ii13)"/><rect x="1508.2" y="120" width="43.8" height="2" fill="url(#ii14)"/><rect x="1508.2" y="122" width="46.8" height="2" fill="url(#ii15)"/><rect x="1508.2" y="124" width="49.8" height="2" fill="url(#ii16)"/><rect x="1508.2" y="126" width="52.8" height="2" fill="url(#ii17)"/><rect x="1508.2" y="128" width="55.8" height="2" fill="url(#ii18)"/><rect x="1508.2" y="130" width="58.8" height="2" fill="url(#ii19)"/><rect x="1508.2" y="132" width="60.8" height="2" fill="url(#ii20)"/><rect x="1508.2" y="134" width="63.8" height="2" fill="url(#ii21)"/><rect x="1508.2" y="136" width="66.8" height="2" fill="url(#ii22)"/><rect x="1508.2" y="138" width="69.8" height="2" fill="url(#ii23)"/><rect x="1508.2" y="140" width="72.8" height="2" fill="url(#ii24)"/><rect x="1508.2" y="142" width="75.8" height="2" fill="url(#ii25)"/><rect x="1508.2" y="144" width="78.8" height="2" fill="url(#ii26)"/><rect x="1508.2" y="146" width="81.8" height="2" fill="url(#ii27)"/><rect x="1508.2" y="148" width="84.8" height="2" fill="url(#ii28)"/><rect x="1508.2" y="150" width="87.8" height="2" fill="url(#ii29)"/><rect x="1508.2" y="152" width="90.8" height="2" fill="url(#ii30)"/><rect x="1508.2" y="154" width="93.8" height="2" fill="url(#ii31)"/><rect x="1508.2" y="156" width="96.8" height="2" fill="url(#ii32)"/><rect x="1508.2" y="158" width="99.8" height="2" fill="url(#ii33)"/><rect x="1508.2" y="160" width="102.8" height="2" fill="url(#ii34)"/><rect x="1508.2" y="162" width="104.8" height="2" fill="url(#ii35)"/><rect x="1508.2" y="164" width="107.8" height="2" fill="url(#ii36)"/><rect x="1508.2" y="166" width="110.8" height="2" fill="url(#ii37)"/><rect x="1508.2" y="168" width="113.8" height="2" fill="url(#ii38)"/><rect x="1508.2" y="170" width="116.8" height="2" fill="url(#ii39)"/><rect x="1508.2" y="172" width="119.8" height="2" fill="url(#ii40)"/><rect x="1508.2" y="174" width="122.8" height="2" fill="url(#ii41)"/><rect x="1508.2" y="176" width="125.8" height="2" fill="url(#ii42)"/><rect x="1508.2" y="178" width="128.8" height="2" fill="url(#ii43)"/><rect x="1508.2" y="180" width="131.8" height="2" fill="url(#ii44)"/><rect x="1508.2" y="182" width="134.8" height="2" fill="url(#ii45)"/><rect x="1508.2" y="184" width="137.8" height="2" fill="url(#ii46)"/><rect x="1508.2" y="186" width="140.8" height="2" fill="url(#ii47)"/><rect x="1508.2" y="188" width="143.8" height="2" fill="url(#ii48)"/><rect x="1508.2" y="190" width="146.8" height="2" fill="url(#ii49)"/><rect x="1508.2" y="192" width="148.8" height="2" fill="url(#ii50)"/><rect x="1508.2" y="194" width="151.8" height="2" fill="url(#ii51)"/><rect x="1508.2" y="196" width="154.8" height="2" fill="url(#ii52)"/><rect x="1508.2" y="198" width="157.8" height="2" fill="url(#ii53)"/><rect x="1508.2" y="200" width="160.8" height="2" fill="url(#ii54)"/><rect x="1508.2" y="202" width="163.8" height="2" fill="url(#ii55)"/><rect x="1508.2" y="204" width="166.8" height="2" fill="url(#ii56)"/><rect x="1508.2" y="206" width="169.8" height="2" fill="url(#ii57)"/><rect x="1508.2" y="208" width="172.8" height="2" fill="url(#ii58)"/><rect x="1508.2" y="210" width="175.8" height="2" fill="url(#ii59)"/><rect x="1508.2" y="212" width="178.8" height="2" fill="url(#ii60)"/><rect x="1508.2" y="214" width="181.8" height="2" fill="url(#ii61)"/><rect x="1508.2" y="216" width="184.8" height="2" fill="url(#ii62)"/><rect x="1508.2" y="218" width="187.8" height="2" fill="url(#ii63)"/><rect x="1508.2" y="220" width="190.8" height="2" fill="url(#ii64)"/><rect x="1508.2" y="222" width="192.4" height="2" fill="url(#ii65)"/><rect x="1508.2" y="224" width="192.4" height="2" fill="url(#ii66)"/><rect x="1508.2" y="226" width="192.4" height="2" fill="url(#ii67)"/><rect x="1508.2" y="228" width="192.4" height="2" fill="url(#ii68)"/><rect x="1508.2" y="230" width="192.4" height="2" fill="url(#ii69)"/></g>
<rect x="1596.2" y="149.9" width="15.2" height="15.2" fill="none" stroke="#ffffff" stroke-width="1.7"/>
<circle cx="1572" cy="219" r="4.2" fill="#ffff00" stroke="#000" stroke-width="1.5"/>
</g>
<rect x="1509.2" y="84.2" width="190.4" height="147.4" fill="none" stroke="#a0a0a0" stroke-width="1.5"/>
<rect x="1251.00" y="158.50" width="14" height="14" fill="none" stroke="#ffffff" stroke-width="1.7"/>
<rect x="1385.50" y="250.60" width="14" height="14" fill="none" stroke="#ffffff" stroke-width="1.7"/>
<rect x="1284.50" y="278.90" width="14" height="14" fill="none" stroke="#ffffff" stroke-width="1.7"/>
<rect x="1338.00" y="273.40" width="14" height="14" fill="none" stroke="#ffffff" stroke-width="1.7"/>
<rect x="1394.00" y="287.20" width="14" height="14" fill="none" stroke="#ffffff" stroke-width="1.7"/>
<rect x="1411.90" y="305.40" width="14" height="14" fill="none" stroke="#ffffff" stroke-width="1.7"/>
<rect x="1443.00" y="327.90" width="14" height="14" fill="none" stroke="#ffffff" stroke-width="1.7"/>
<rect x="1308.40" y="315.30" width="14" height="14" fill="none" stroke="#ffffff" stroke-width="1.7"/>
<rect x="1249.40" y="357.40" width="14" height="14" fill="none" stroke="#ffffff" stroke-width="1.7"/>
<rect x="1200.30" y="371.40" width="14" height="14" fill="none" stroke="#ffffff" stroke-width="1.7"/>
<rect x="1340.20" y="358.50" width="14" height="14" fill="none" stroke="#ffffff" stroke-width="1.7"/>
<rect x="1357.40" y="355.70" width="14" height="14" fill="none" stroke="#ffffff" stroke-width="1.7"/>
<rect x="1400.90" y="382.40" width="14" height="14" fill="none" stroke="#ffffff" stroke-width="1.7"/>
<rect x="1463.70" y="378.40" width="14" height="14" fill="none" stroke="#ffffff" stroke-width="1.7"/>
<rect x="1239.30" y="410.50" width="14" height="14" fill="none" stroke="#ffffff" stroke-width="1.7"/>
<rect x="1199.10" y="411.70" width="14" height="14" fill="none" stroke="#ffffff" stroke-width="1.7"/>
<rect x="1253.40" y="417.50" width="14" height="14" fill="none" stroke="#ffffff" stroke-width="1.7"/>
<rect x="1269.00" y="436.00" width="14" height="14" fill="none" stroke="#ffffff" stroke-width="1.7"/>
<rect x="1334.70" y="423.40" width="14" height="14" fill="none" stroke="#ffffff" stroke-width="1.7"/>
<rect x="1212.90" y="453.80" width="14" height="14" fill="none" stroke="#ffffff" stroke-width="1.7"/>
<rect x="1196.40" y="484.50" width="14" height="14" fill="none" stroke="#ffffff" stroke-width="1.7"/>
<rect x="1306.90" y="479.50" width="14" height="14" fill="none" stroke="#ffffff" stroke-width="1.7"/>
<rect x="1574.70" y="378.50" width="14" height="14" fill="none" stroke="#ffffff" stroke-width="1.7"/>
<rect x="1162.50" y="533.90" width="14" height="14" fill="none" stroke="#ffffff" stroke-width="1.7"/>
<rect x="1289.2" y="373" width="13.6" height="13.6" fill="none" stroke="#000" stroke-width="2.4"/>
<circle cx="1273" cy="206.8" r="4.3" fill="#00ff1e" stroke="#000" stroke-width="1.5"/>
<circle cx="1384" cy="273.1" r="4.3" fill="#ffff00" stroke="#000" stroke-width="1.5"/>
<circle cx="1299.9" cy="298.4" r="4.3" fill="#5e8a56" stroke="#000" stroke-width="1.5"/>
<circle cx="1345" cy="293.9" r="4.3" fill="#a4b45e" stroke="#000" stroke-width="1.5"/>
<circle cx="1320" cy="326.5" r="4.3" fill="#5e6a50" stroke="#000" stroke-width="1.5"/>
<circle cx="1392.4" cy="302.8" r="4.3" fill="#e3c25a" stroke="#000" stroke-width="1.5"/>
<circle cx="1409.1" cy="317" r="4.3" fill="#d8a24a" stroke="#000" stroke-width="1.5"/>
<circle cx="1439" cy="333.5" r="4.3" fill="#c88448" stroke="#000" stroke-width="1.5"/>
<circle cx="1265" cy="366.8" r="4.3" fill="#7eb2a2" stroke="#000" stroke-width="1.5"/>
<circle cx="1217.1" cy="383.9" r="4.3" fill="#00ffee" stroke="#000" stroke-width="1.5"/>
<circle cx="1296.3" cy="382.1" r="4.3" fill="#f4f4f4" stroke="#000" stroke-width="1.5"/>
<circle cx="1300" cy="380.8" r="4.3" fill="#9c9c9c" stroke="#000" stroke-width="1.5"/>
<circle cx="1346" cy="366.8" r="4.3" fill="#c09888" stroke="#000" stroke-width="1.5"/>
<circle cx="1366.1" cy="360" r="4.3" fill="#6e5a50" stroke="#000" stroke-width="1.5"/>
<circle cx="1401" cy="387" r="4.3" fill="#b06070" stroke="#000" stroke-width="1.5"/>
<circle cx="1467.8" cy="380.8" r="4.3" fill="#9a3a44" stroke="#000" stroke-width="1.5"/>
<circle cx="1273" cy="409" r="4.3" fill="#000000" stroke="#000" stroke-width="1.5"/>
<circle cx="1253.9" cy="414.8" r="4.3" fill="#687c94" stroke="#000" stroke-width="1.5"/>
<circle cx="1213" cy="418" r="4.3" fill="#3a8898" stroke="#000" stroke-width="1.5"/>
<circle cx="1265.9" cy="421.9" r="4.3" fill="#8888a8" stroke="#000" stroke-width="1.5"/>
<circle cx="1279" cy="445.8" r="4.3" fill="#5a4a68" stroke="#000" stroke-width="1.5"/>
<circle cx="1342" cy="427.4" r="4.3" fill="#b06894" stroke="#000" stroke-width="1.5"/>
<circle cx="1223.9" cy="459.8" r="4.3" fill="#5a64a0" stroke="#000" stroke-width="1.5"/>
<circle cx="1201.8" cy="495.4" r="4.3" fill="#404890" stroke="#000" stroke-width="1.5"/>
<circle cx="1311" cy="486" r="4.3" fill="#ff00ff" stroke="#000" stroke-width="1.5"/>
<circle cx="1561.9" cy="379.9" r="4.3" fill="#ff0000" stroke="#000" stroke-width="1.5"/>
<circle cx="1167" cy="546.7" r="4.3" fill="#0000ff" stroke="#000" stroke-width="1.5"/>
<rect x="1422.5" y="537" width="280.3" height="27.7" fill="#333333"/>
<text transform="translate(1453.90,558.80) scale(0.9451,1)" font-size="21.51" fill="#f0f0f0" stroke="#f0f0f0" stroke-width="0.25">RGB Triplet: 255, 255, 0</text>
</svg>
</body></html>
